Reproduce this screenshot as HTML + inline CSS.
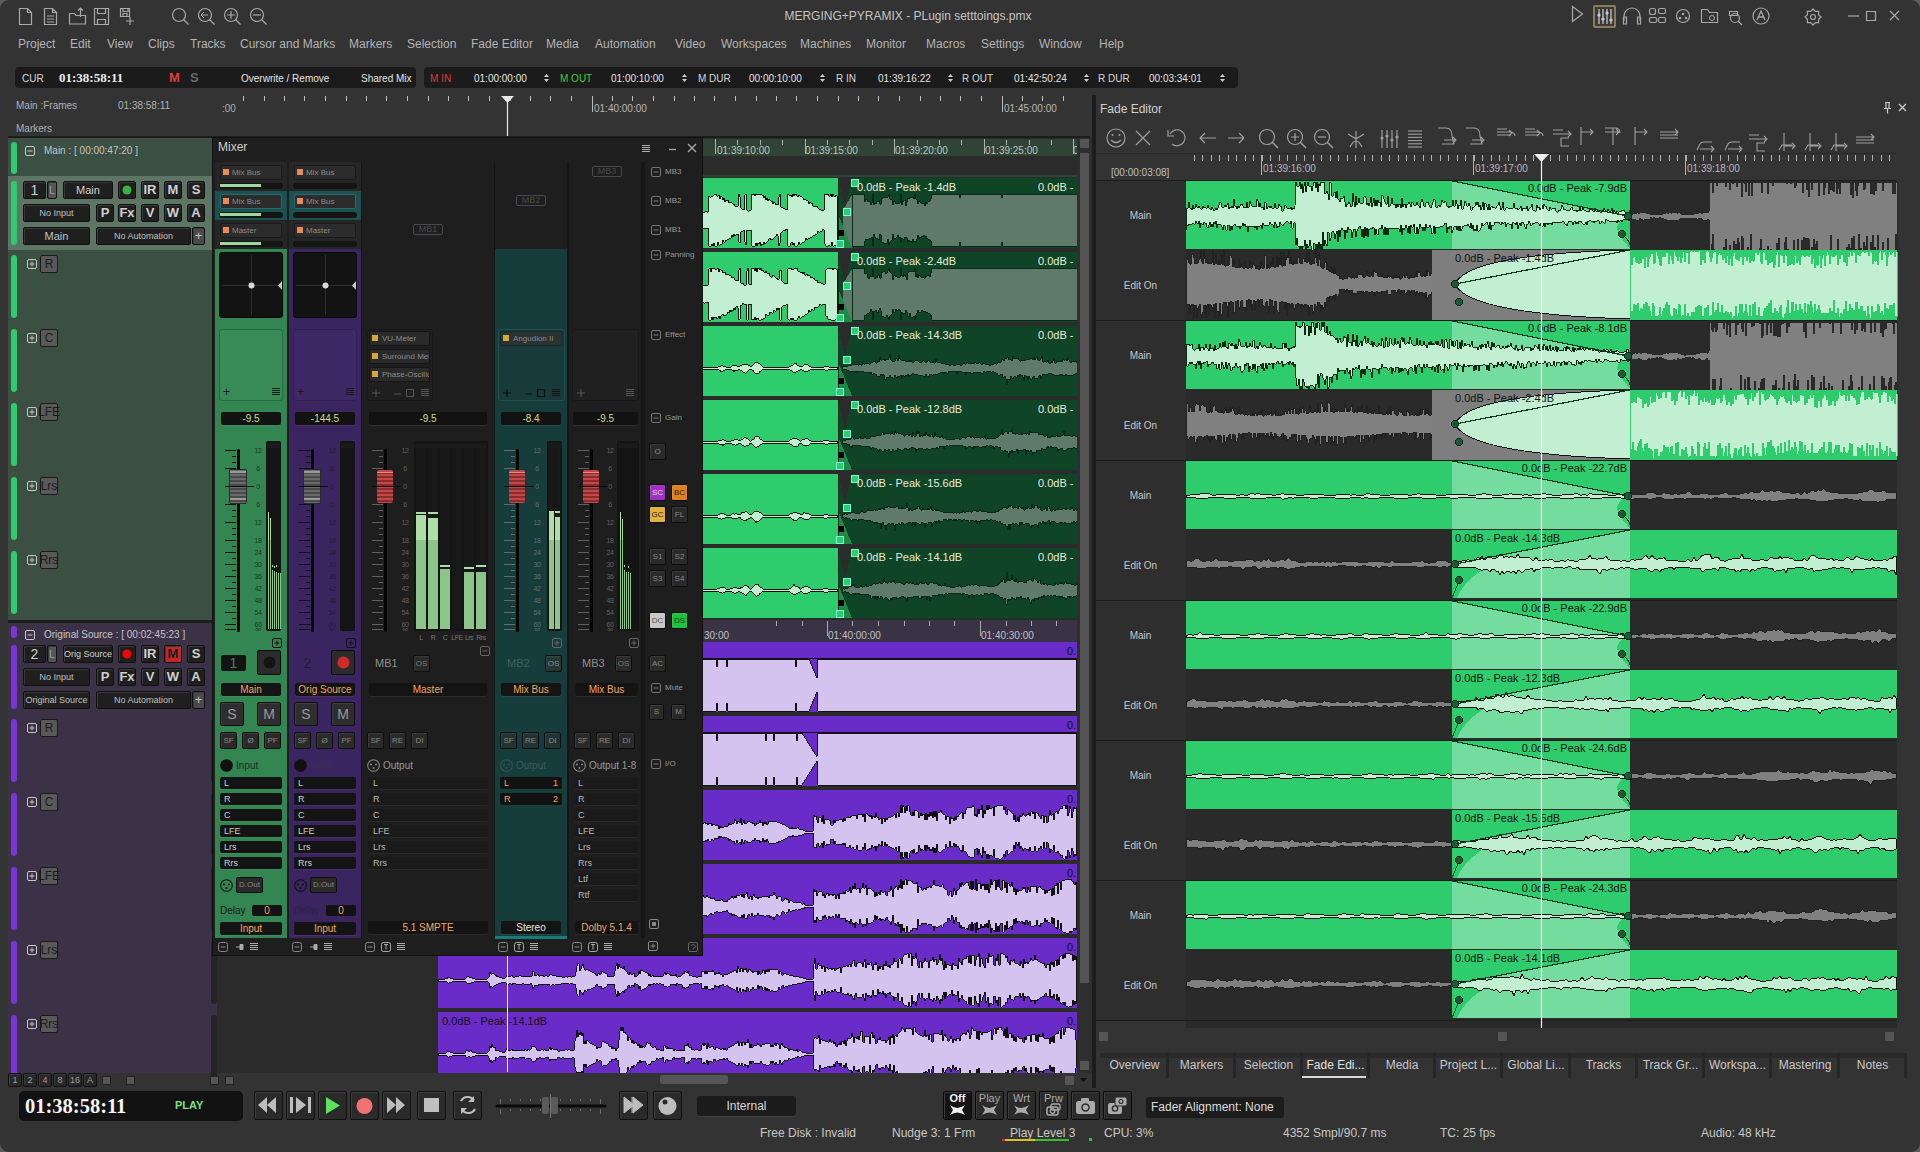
<!DOCTYPE html><html><head><meta charset="utf-8"><style>
html,body{margin:0;padding:0;}
body{width:1920px;height:1152px;overflow:hidden;background:#333333;position:relative;font-family:"Liberation Sans",sans-serif;}
div{position:absolute;}
</style></head><body>
<div style="left:16px;top:98.5px;height:13px;line-height:13px;font-size:10px;color:#b0b0b0;font-weight:normal;font-family:'Liberation Sans', sans-serif;white-space:nowrap;">Main :Frames</div><div style="left:118px;top:98.5px;height:13px;line-height:13px;font-size:10px;color:#b0b0b0;font-weight:normal;font-family:'Liberation Sans', sans-serif;white-space:nowrap;">01:38:58:11</div><div style="left:16px;top:121.5px;height:13px;line-height:13px;font-size:10px;color:#b0b0b0;font-weight:normal;font-family:'Liberation Sans', sans-serif;white-space:nowrap;">Markers</div><div style="left:222px;top:101.5px;height:13px;line-height:13px;font-size:10px;color:#b0b0b0;font-weight:normal;font-family:'Liberation Sans', sans-serif;white-space:nowrap;">:00</div><svg style="position:absolute;left:0px;top:0px;" width="1090" height="140" viewBox="0 0 1090 140"><path d="M243.5 96v5" stroke="#bdbdbd" stroke-width="1"/><path d="M264.5 96v5" stroke="#bdbdbd" stroke-width="1"/><path d="M284.5 96v5" stroke="#bdbdbd" stroke-width="1"/><path d="M304.5 96v5" stroke="#bdbdbd" stroke-width="1"/><path d="M325.5 96v5" stroke="#bdbdbd" stroke-width="1"/><path d="M346.5 96v5" stroke="#bdbdbd" stroke-width="1"/><path d="M366.5 96v5" stroke="#bdbdbd" stroke-width="1"/><path d="M386.5 96v5" stroke="#bdbdbd" stroke-width="1"/><path d="M407.5 96v5" stroke="#bdbdbd" stroke-width="1"/><path d="M428.5 96v5" stroke="#bdbdbd" stroke-width="1"/><path d="M448.5 96v5" stroke="#bdbdbd" stroke-width="1"/><path d="M468.5 96v5" stroke="#bdbdbd" stroke-width="1"/><path d="M489.5 96v5" stroke="#bdbdbd" stroke-width="1"/><path d="M510.5 96v5" stroke="#bdbdbd" stroke-width="1"/><path d="M530.5 96v5" stroke="#bdbdbd" stroke-width="1"/><path d="M550.5 96v5" stroke="#bdbdbd" stroke-width="1"/><path d="M571.5 96v5" stroke="#bdbdbd" stroke-width="1"/><path d="M592.5 96v5" stroke="#bdbdbd" stroke-width="1"/><path d="M612.5 96v5" stroke="#bdbdbd" stroke-width="1"/><path d="M632.5 96v5" stroke="#bdbdbd" stroke-width="1"/><path d="M653.5 96v5" stroke="#bdbdbd" stroke-width="1"/><path d="M674.5 96v5" stroke="#bdbdbd" stroke-width="1"/><path d="M694.5 96v5" stroke="#bdbdbd" stroke-width="1"/><path d="M714.5 96v5" stroke="#bdbdbd" stroke-width="1"/><path d="M735.5 96v5" stroke="#bdbdbd" stroke-width="1"/><path d="M756.5 96v5" stroke="#bdbdbd" stroke-width="1"/><path d="M776.5 96v5" stroke="#bdbdbd" stroke-width="1"/><path d="M796.5 96v5" stroke="#bdbdbd" stroke-width="1"/><path d="M817.5 96v5" stroke="#bdbdbd" stroke-width="1"/><path d="M838.5 96v5" stroke="#bdbdbd" stroke-width="1"/><path d="M858.5 96v5" stroke="#bdbdbd" stroke-width="1"/><path d="M878.5 96v5" stroke="#bdbdbd" stroke-width="1"/><path d="M899.5 96v5" stroke="#bdbdbd" stroke-width="1"/><path d="M920.5 96v5" stroke="#bdbdbd" stroke-width="1"/><path d="M940.5 96v5" stroke="#bdbdbd" stroke-width="1"/><path d="M960.5 96v5" stroke="#bdbdbd" stroke-width="1"/><path d="M981.5 96v5" stroke="#bdbdbd" stroke-width="1"/><path d="M1002.5 96v5" stroke="#bdbdbd" stroke-width="1"/><path d="M1022.5 96v5" stroke="#bdbdbd" stroke-width="1"/><path d="M1042.5 96v5" stroke="#bdbdbd" stroke-width="1"/><path d="M1063.5 96v5" stroke="#bdbdbd" stroke-width="1"/><path d="M592.5 96v16 M1002.5 96v16" stroke="#bdbdbd" stroke-width="1"/></svg><div style="left:594px;top:101.5px;height:13px;line-height:13px;font-size:10px;color:#b8b8b8;font-weight:normal;font-family:'Liberation Sans', sans-serif;white-space:nowrap;">01:40:00:00</div><div style="left:1004px;top:101.5px;height:13px;line-height:13px;font-size:10px;color:#b8b8b8;font-weight:normal;font-family:'Liberation Sans', sans-serif;white-space:nowrap;">01:45:00:00</div><svg style="position:absolute;left:500px;top:95px;" width="16" height="45" viewBox="0 0 16 45"><path d="M1 1h13l-6.5 7z" fill="#e8e8e8"/><path d="M7.5 6v39" stroke="#e8e8e8" stroke-width="1.2"/></svg><div style="left:8px;top:136px;width:1082px;height:3px;background:#1c1c1c;"></div><div style="left:8px;top:138px;width:204px;height:482px;background:#3b5042;"></div><div style="left:8px;top:176px;width:204px;height:74px;background:#5d7565;"></div><div style="left:11px;top:142px;width:6px;height:32px;background:#2ecc6c;border-radius:3px;"></div><svg style="position:absolute;left:25px;top:146px;" width="10" height="10" viewBox="0 0 10 10"><rect x="0.5" y="0.5" width="9" height="9" rx="1.5" fill="none" stroke="#c8c8c8" stroke-width="1"/><path d="M2.5 5h5" stroke="#c8c8c8"/></svg><div style="left:44px;top:143.5px;height:13px;line-height:13px;font-size:10px;color:#c4c4c4;font-weight:normal;font-family:'Liberation Sans', sans-serif;white-space:nowrap;">Main : [ 00:00:47:20 ]</div><div style="left:11px;top:181px;width:6px;height:64px;background:#2ecc6c;border-radius:3px;"></div><div style="left:23px;top:181px;width:23px;height:18px;background:#1f1f1f;border-radius:2px;border:1px solid #101010;box-sizing:border-box;box-shadow:inset 1px 1px 0 #3a3a3a;"></div><div style="left:23px;top:181.0px;width:23px;height:18px;line-height:18px;font-size:14px;color:#d0d0d0;font-weight:normal;font-family:'Liberation Sans', sans-serif;white-space:nowrap;text-align:center;overflow:hidden;">1</div><div style="left:47px;top:181px;width:10px;height:18px;background:#555555;border-radius:2px;border:1px solid #101010;box-sizing:border-box;box-shadow:inset 1px 1px 0 #3a3a3a;"></div><div style="left:47px;top:183.0px;width:10px;height:14px;line-height:14px;font-size:11px;color:#9a9a9a;font-weight:normal;font-family:'Liberation Sans', sans-serif;white-space:nowrap;text-align:center;overflow:hidden;">L</div><div style="left:63px;top:181px;width:50px;height:18px;background:#1f1f1f;border-radius:2px;border:1px solid #101010;box-sizing:border-box;box-shadow:inset 1px 1px 0 #3a3a3a;"></div><div style="left:63px;top:183.0px;width:50px;height:14px;line-height:14px;font-size:11px;color:#d0d0d0;font-weight:normal;font-family:'Liberation Sans', sans-serif;white-space:nowrap;text-align:center;overflow:hidden;">Main</div><div style="left:118px;top:181px;width:18px;height:18px;background:#1f1f1f;border-radius:2px;border:1px solid #101010;box-sizing:border-box;box-shadow:inset 1px 1px 0 #3a3a3a;"></div><svg style="position:absolute;left:122px;top:185px;" width="10" height="10" viewBox="0 0 10 10"><circle cx="5" cy="5" r="4.5" fill="#3cb043"/></svg><div style="left:141px;top:181px;width:18px;height:18px;background:#1f1f1f;border-radius:2px;border:1px solid #101010;box-sizing:border-box;box-shadow:inset 1px 1px 0 #3a3a3a;"></div><div style="left:141px;top:182.0px;width:18px;height:16px;line-height:16px;font-size:13px;color:#d0d0d0;font-weight:bold;font-family:'Liberation Sans', sans-serif;white-space:nowrap;text-align:center;overflow:hidden;">IR</div><div style="left:164px;top:181px;width:18px;height:18px;background:#1f1f1f;border-radius:2px;border:1px solid #101010;box-sizing:border-box;box-shadow:inset 1px 1px 0 #3a3a3a;"></div><div style="left:164px;top:182.0px;width:18px;height:16px;line-height:16px;font-size:13px;color:#d0d0d0;font-weight:bold;font-family:'Liberation Sans', sans-serif;white-space:nowrap;text-align:center;overflow:hidden;">M</div><div style="left:187px;top:181px;width:18px;height:18px;background:#1f1f1f;border-radius:2px;border:1px solid #101010;box-sizing:border-box;box-shadow:inset 1px 1px 0 #3a3a3a;"></div><div style="left:187px;top:182.0px;width:18px;height:16px;line-height:16px;font-size:13px;color:#d0d0d0;font-weight:bold;font-family:'Liberation Sans', sans-serif;white-space:nowrap;text-align:center;overflow:hidden;">S</div><div style="left:23px;top:204px;width:67px;height:18px;background:#1f1f1f;border-radius:2px;border:1px solid #101010;box-sizing:border-box;box-shadow:inset 1px 1px 0 #3a3a3a;"></div><div style="left:23px;top:207.5px;width:67px;height:11px;line-height:11px;font-size:9px;color:#c0c0c0;font-weight:normal;font-family:'Liberation Sans', sans-serif;white-space:nowrap;text-align:center;overflow:hidden;">No Input</div><div style="left:96px;top:204px;width:18px;height:18px;background:#1f1f1f;border-radius:2px;border:1px solid #101010;box-sizing:border-box;box-shadow:inset 1px 1px 0 #3a3a3a;"></div><div style="left:96px;top:205.0px;width:18px;height:16px;line-height:16px;font-size:13px;color:#d0d0d0;font-weight:bold;font-family:'Liberation Sans', sans-serif;white-space:nowrap;text-align:center;overflow:hidden;">P</div><div style="left:118px;top:204px;width:18px;height:18px;background:#1f1f1f;border-radius:2px;border:1px solid #101010;box-sizing:border-box;box-shadow:inset 1px 1px 0 #3a3a3a;"></div><div style="left:118px;top:205.0px;width:18px;height:16px;line-height:16px;font-size:13px;color:#d0d0d0;font-weight:bold;font-family:'Liberation Sans', sans-serif;white-space:nowrap;text-align:center;overflow:hidden;">Fx</div><div style="left:141px;top:204px;width:18px;height:18px;background:#1f1f1f;border-radius:2px;border:1px solid #101010;box-sizing:border-box;box-shadow:inset 1px 1px 0 #3a3a3a;"></div><div style="left:141px;top:205.0px;width:18px;height:16px;line-height:16px;font-size:13px;color:#d0d0d0;font-weight:bold;font-family:'Liberation Sans', sans-serif;white-space:nowrap;text-align:center;overflow:hidden;">V</div><div style="left:164px;top:204px;width:18px;height:18px;background:#1f1f1f;border-radius:2px;border:1px solid #101010;box-sizing:border-box;box-shadow:inset 1px 1px 0 #3a3a3a;"></div><div style="left:164px;top:205.0px;width:18px;height:16px;line-height:16px;font-size:13px;color:#d0d0d0;font-weight:bold;font-family:'Liberation Sans', sans-serif;white-space:nowrap;text-align:center;overflow:hidden;">W</div><div style="left:187px;top:204px;width:18px;height:18px;background:#1f1f1f;border-radius:2px;border:1px solid #101010;box-sizing:border-box;box-shadow:inset 1px 1px 0 #3a3a3a;"></div><div style="left:187px;top:205.0px;width:18px;height:16px;line-height:16px;font-size:13px;color:#d0d0d0;font-weight:bold;font-family:'Liberation Sans', sans-serif;white-space:nowrap;text-align:center;overflow:hidden;">A</div><div style="left:23px;top:227px;width:67px;height:18px;background:#1f1f1f;border-radius:2px;border:1px solid #101010;box-sizing:border-box;box-shadow:inset 1px 1px 0 #3a3a3a;"></div><div style="left:23px;top:229.0px;width:67px;height:14px;line-height:14px;font-size:11px;color:#c0c0c0;font-weight:normal;font-family:'Liberation Sans', sans-serif;white-space:nowrap;text-align:center;overflow:hidden;">Main</div><div style="left:96px;top:227px;width:95px;height:18px;background:#1f1f1f;border-radius:2px;border:1px solid #101010;box-sizing:border-box;box-shadow:inset 1px 1px 0 #3a3a3a;"></div><div style="left:96px;top:230.5px;width:95px;height:11px;line-height:11px;font-size:9px;color:#c0c0c0;font-weight:normal;font-family:'Liberation Sans', sans-serif;white-space:nowrap;text-align:center;overflow:hidden;">No Automation</div><div style="left:192px;top:227px;width:13px;height:18px;background:#4a4a4a;border-radius:2px;border:1px solid #101010;box-sizing:border-box;box-shadow:inset 1px 1px 0 #3a3a3a;"></div><div style="left:192px;top:228.0px;width:13px;height:16px;line-height:16px;font-size:13px;color:#c0c0c0;font-weight:normal;font-family:'Liberation Sans', sans-serif;white-space:nowrap;text-align:center;overflow:hidden;">+</div><div style="left:11px;top:255px;width:6px;height:63px;background:#2ecc6c;border-radius:3px;"></div><svg style="position:absolute;left:27px;top:259px;" width="10" height="10" viewBox="0 0 10 10"><rect x="0.5" y="0.5" width="9" height="9" rx="1.5" fill="none" stroke="#c8c8c8" stroke-width="1"/><path d="M2.5 5h5" stroke="#c8c8c8"/><path d="M5 2.5v5" stroke="#c8c8c8"/></svg><div style="left:40px;top:255px;width:18px;height:18px;background:#595959;border-radius:2px;border:1px solid #1a1a1a;box-sizing:border-box;"></div><div style="left:38px;top:256.5px;width:22px;height:15px;line-height:15px;font-size:12px;color:#1c1c1c;font-weight:normal;font-family:'Liberation Sans', sans-serif;white-space:nowrap;text-align:center;overflow:hidden;">R</div><div style="left:11px;top:329px;width:6px;height:63px;background:#2ecc6c;border-radius:3px;"></div><svg style="position:absolute;left:27px;top:333px;" width="10" height="10" viewBox="0 0 10 10"><rect x="0.5" y="0.5" width="9" height="9" rx="1.5" fill="none" stroke="#c8c8c8" stroke-width="1"/><path d="M2.5 5h5" stroke="#c8c8c8"/><path d="M5 2.5v5" stroke="#c8c8c8"/></svg><div style="left:40px;top:329px;width:18px;height:18px;background:#595959;border-radius:2px;border:1px solid #1a1a1a;box-sizing:border-box;"></div><div style="left:38px;top:330.5px;width:22px;height:15px;line-height:15px;font-size:12px;color:#1c1c1c;font-weight:normal;font-family:'Liberation Sans', sans-serif;white-space:nowrap;text-align:center;overflow:hidden;">C</div><div style="left:11px;top:403px;width:6px;height:63px;background:#2ecc6c;border-radius:3px;"></div><svg style="position:absolute;left:27px;top:407px;" width="10" height="10" viewBox="0 0 10 10"><rect x="0.5" y="0.5" width="9" height="9" rx="1.5" fill="none" stroke="#c8c8c8" stroke-width="1"/><path d="M2.5 5h5" stroke="#c8c8c8"/><path d="M5 2.5v5" stroke="#c8c8c8"/></svg><div style="left:40px;top:403px;width:18px;height:18px;background:#595959;border-radius:2px;border:1px solid #1a1a1a;box-sizing:border-box;"></div><div style="left:38px;top:404.5px;width:22px;height:15px;line-height:15px;font-size:12px;color:#1c1c1c;font-weight:normal;font-family:'Liberation Sans', sans-serif;white-space:nowrap;text-align:center;overflow:hidden;">LFE</div><div style="left:11px;top:477px;width:6px;height:63px;background:#2ecc6c;border-radius:3px;"></div><svg style="position:absolute;left:27px;top:481px;" width="10" height="10" viewBox="0 0 10 10"><rect x="0.5" y="0.5" width="9" height="9" rx="1.5" fill="none" stroke="#c8c8c8" stroke-width="1"/><path d="M2.5 5h5" stroke="#c8c8c8"/><path d="M5 2.5v5" stroke="#c8c8c8"/></svg><div style="left:40px;top:477px;width:18px;height:18px;background:#595959;border-radius:2px;border:1px solid #1a1a1a;box-sizing:border-box;"></div><div style="left:38px;top:478.5px;width:22px;height:15px;line-height:15px;font-size:12px;color:#1c1c1c;font-weight:normal;font-family:'Liberation Sans', sans-serif;white-space:nowrap;text-align:center;overflow:hidden;">Lrs</div><div style="left:11px;top:551px;width:6px;height:63px;background:#2ecc6c;border-radius:3px;"></div><svg style="position:absolute;left:27px;top:555px;" width="10" height="10" viewBox="0 0 10 10"><rect x="0.5" y="0.5" width="9" height="9" rx="1.5" fill="none" stroke="#c8c8c8" stroke-width="1"/><path d="M2.5 5h5" stroke="#c8c8c8"/><path d="M5 2.5v5" stroke="#c8c8c8"/></svg><div style="left:40px;top:551px;width:18px;height:18px;background:#595959;border-radius:2px;border:1px solid #1a1a1a;box-sizing:border-box;"></div><div style="left:38px;top:552.5px;width:22px;height:15px;line-height:15px;font-size:12px;color:#1c1c1c;font-weight:normal;font-family:'Liberation Sans', sans-serif;white-space:nowrap;text-align:center;overflow:hidden;">Rrs</div><div style="left:8px;top:620px;width:215px;height:3px;background:#1e1e1e;"></div><div style="left:8px;top:623px;width:215px;height:450px;background:#3c3248;"></div><div style="left:11px;top:626px;width:6px;height:12px;background:#7b35d6;border-radius:3px;"></div><svg style="position:absolute;left:25px;top:630px;" width="10" height="10" viewBox="0 0 10 10"><rect x="0.5" y="0.5" width="9" height="9" rx="1.5" fill="none" stroke="#c8c8c8" stroke-width="1"/><path d="M2.5 5h5" stroke="#c8c8c8"/></svg><div style="left:44px;top:627.5px;height:13px;line-height:13px;font-size:10px;color:#c4c4c4;font-weight:normal;font-family:'Liberation Sans', sans-serif;white-space:nowrap;">Original Source : [ 00:02:45:23 ]</div><div style="left:11px;top:645px;width:6px;height:64px;background:#7b35d6;border-radius:3px;"></div><div style="left:23px;top:645px;width:23px;height:18px;background:#1f1f1f;border-radius:2px;border:1px solid #101010;box-sizing:border-box;box-shadow:inset 1px 1px 0 #3a3a3a;"></div><div style="left:23px;top:645.0px;width:23px;height:18px;line-height:18px;font-size:14px;color:#d0d0d0;font-weight:normal;font-family:'Liberation Sans', sans-serif;white-space:nowrap;text-align:center;overflow:hidden;">2</div><div style="left:47px;top:645px;width:10px;height:18px;background:#555555;border-radius:2px;border:1px solid #101010;box-sizing:border-box;box-shadow:inset 1px 1px 0 #3a3a3a;"></div><div style="left:47px;top:647.0px;width:10px;height:14px;line-height:14px;font-size:11px;color:#9a9a9a;font-weight:normal;font-family:'Liberation Sans', sans-serif;white-space:nowrap;text-align:center;overflow:hidden;">L</div><div style="left:63px;top:645px;width:50px;height:18px;background:#1f1f1f;border-radius:2px;border:1px solid #101010;box-sizing:border-box;box-shadow:inset 1px 1px 0 #3a3a3a;"></div><div style="left:63px;top:648.5px;width:50px;height:11px;line-height:11px;font-size:9px;color:#d0d0d0;font-weight:normal;font-family:'Liberation Sans', sans-serif;white-space:nowrap;text-align:center;overflow:hidden;">Orig Source</div><div style="left:118px;top:645px;width:18px;height:18px;background:#1f1f1f;border-radius:2px;border:1px solid #101010;box-sizing:border-box;box-shadow:inset 1px 1px 0 #3a3a3a;"></div><svg style="position:absolute;left:122px;top:649px;" width="10" height="10" viewBox="0 0 10 10"><circle cx="5" cy="5" r="4.5" fill="#ff0000"/></svg><div style="left:141px;top:645px;width:18px;height:18px;background:#1f1f1f;border-radius:2px;border:1px solid #101010;box-sizing:border-box;box-shadow:inset 1px 1px 0 #3a3a3a;"></div><div style="left:141px;top:646.0px;width:18px;height:16px;line-height:16px;font-size:13px;color:#d0d0d0;font-weight:bold;font-family:'Liberation Sans', sans-serif;white-space:nowrap;text-align:center;overflow:hidden;">IR</div><div style="left:164px;top:645px;width:18px;height:18px;background:#c42828;border-radius:2px;border:1px solid #101010;box-sizing:border-box;box-shadow:inset 1px 1px 0 #3a3a3a;"></div><div style="left:164px;top:646.0px;width:18px;height:16px;line-height:16px;font-size:13px;color:#1a1a1a;font-weight:bold;font-family:'Liberation Sans', sans-serif;white-space:nowrap;text-align:center;overflow:hidden;">M</div><div style="left:187px;top:645px;width:18px;height:18px;background:#1f1f1f;border-radius:2px;border:1px solid #101010;box-sizing:border-box;box-shadow:inset 1px 1px 0 #3a3a3a;"></div><div style="left:187px;top:646.0px;width:18px;height:16px;line-height:16px;font-size:13px;color:#d0d0d0;font-weight:bold;font-family:'Liberation Sans', sans-serif;white-space:nowrap;text-align:center;overflow:hidden;">S</div><div style="left:23px;top:668px;width:67px;height:18px;background:#1f1f1f;border-radius:2px;border:1px solid #101010;box-sizing:border-box;box-shadow:inset 1px 1px 0 #3a3a3a;"></div><div style="left:23px;top:671.5px;width:67px;height:11px;line-height:11px;font-size:9px;color:#c0c0c0;font-weight:normal;font-family:'Liberation Sans', sans-serif;white-space:nowrap;text-align:center;overflow:hidden;">No Input</div><div style="left:96px;top:668px;width:18px;height:18px;background:#1f1f1f;border-radius:2px;border:1px solid #101010;box-sizing:border-box;box-shadow:inset 1px 1px 0 #3a3a3a;"></div><div style="left:96px;top:669.0px;width:18px;height:16px;line-height:16px;font-size:13px;color:#d0d0d0;font-weight:bold;font-family:'Liberation Sans', sans-serif;white-space:nowrap;text-align:center;overflow:hidden;">P</div><div style="left:118px;top:668px;width:18px;height:18px;background:#1f1f1f;border-radius:2px;border:1px solid #101010;box-sizing:border-box;box-shadow:inset 1px 1px 0 #3a3a3a;"></div><div style="left:118px;top:669.0px;width:18px;height:16px;line-height:16px;font-size:13px;color:#d0d0d0;font-weight:bold;font-family:'Liberation Sans', sans-serif;white-space:nowrap;text-align:center;overflow:hidden;">Fx</div><div style="left:141px;top:668px;width:18px;height:18px;background:#1f1f1f;border-radius:2px;border:1px solid #101010;box-sizing:border-box;box-shadow:inset 1px 1px 0 #3a3a3a;"></div><div style="left:141px;top:669.0px;width:18px;height:16px;line-height:16px;font-size:13px;color:#d0d0d0;font-weight:bold;font-family:'Liberation Sans', sans-serif;white-space:nowrap;text-align:center;overflow:hidden;">V</div><div style="left:164px;top:668px;width:18px;height:18px;background:#1f1f1f;border-radius:2px;border:1px solid #101010;box-sizing:border-box;box-shadow:inset 1px 1px 0 #3a3a3a;"></div><div style="left:164px;top:669.0px;width:18px;height:16px;line-height:16px;font-size:13px;color:#d0d0d0;font-weight:bold;font-family:'Liberation Sans', sans-serif;white-space:nowrap;text-align:center;overflow:hidden;">W</div><div style="left:187px;top:668px;width:18px;height:18px;background:#1f1f1f;border-radius:2px;border:1px solid #101010;box-sizing:border-box;box-shadow:inset 1px 1px 0 #3a3a3a;"></div><div style="left:187px;top:669.0px;width:18px;height:16px;line-height:16px;font-size:13px;color:#d0d0d0;font-weight:bold;font-family:'Liberation Sans', sans-serif;white-space:nowrap;text-align:center;overflow:hidden;">A</div><div style="left:23px;top:691px;width:67px;height:18px;background:#1f1f1f;border-radius:2px;border:1px solid #101010;box-sizing:border-box;box-shadow:inset 1px 1px 0 #3a3a3a;"></div><div style="left:23px;top:694.5px;width:67px;height:11px;line-height:11px;font-size:9px;color:#c0c0c0;font-weight:normal;font-family:'Liberation Sans', sans-serif;white-space:nowrap;text-align:center;overflow:hidden;">Original Source</div><div style="left:96px;top:691px;width:95px;height:18px;background:#1f1f1f;border-radius:2px;border:1px solid #101010;box-sizing:border-box;box-shadow:inset 1px 1px 0 #3a3a3a;"></div><div style="left:96px;top:694.5px;width:95px;height:11px;line-height:11px;font-size:9px;color:#c0c0c0;font-weight:normal;font-family:'Liberation Sans', sans-serif;white-space:nowrap;text-align:center;overflow:hidden;">No Automation</div><div style="left:192px;top:691px;width:13px;height:18px;background:#4a4a4a;border-radius:2px;border:1px solid #101010;box-sizing:border-box;box-shadow:inset 1px 1px 0 #3a3a3a;"></div><div style="left:192px;top:692.0px;width:13px;height:16px;line-height:16px;font-size:13px;color:#c0c0c0;font-weight:normal;font-family:'Liberation Sans', sans-serif;white-space:nowrap;text-align:center;overflow:hidden;">+</div><div style="left:11px;top:719px;width:6px;height:63px;background:#7b35d6;border-radius:3px;"></div><svg style="position:absolute;left:27px;top:723px;" width="10" height="10" viewBox="0 0 10 10"><rect x="0.5" y="0.5" width="9" height="9" rx="1.5" fill="none" stroke="#c8c8c8" stroke-width="1"/><path d="M2.5 5h5" stroke="#c8c8c8"/><path d="M5 2.5v5" stroke="#c8c8c8"/></svg><div style="left:40px;top:719px;width:18px;height:18px;background:#595959;border-radius:2px;border:1px solid #1a1a1a;box-sizing:border-box;"></div><div style="left:38px;top:720.5px;width:22px;height:15px;line-height:15px;font-size:12px;color:#1c1c1c;font-weight:normal;font-family:'Liberation Sans', sans-serif;white-space:nowrap;text-align:center;overflow:hidden;">R</div><div style="left:11px;top:793px;width:6px;height:63px;background:#7b35d6;border-radius:3px;"></div><svg style="position:absolute;left:27px;top:797px;" width="10" height="10" viewBox="0 0 10 10"><rect x="0.5" y="0.5" width="9" height="9" rx="1.5" fill="none" stroke="#c8c8c8" stroke-width="1"/><path d="M2.5 5h5" stroke="#c8c8c8"/><path d="M5 2.5v5" stroke="#c8c8c8"/></svg><div style="left:40px;top:793px;width:18px;height:18px;background:#595959;border-radius:2px;border:1px solid #1a1a1a;box-sizing:border-box;"></div><div style="left:38px;top:794.5px;width:22px;height:15px;line-height:15px;font-size:12px;color:#1c1c1c;font-weight:normal;font-family:'Liberation Sans', sans-serif;white-space:nowrap;text-align:center;overflow:hidden;">C</div><div style="left:11px;top:867px;width:6px;height:63px;background:#7b35d6;border-radius:3px;"></div><svg style="position:absolute;left:27px;top:871px;" width="10" height="10" viewBox="0 0 10 10"><rect x="0.5" y="0.5" width="9" height="9" rx="1.5" fill="none" stroke="#c8c8c8" stroke-width="1"/><path d="M2.5 5h5" stroke="#c8c8c8"/><path d="M5 2.5v5" stroke="#c8c8c8"/></svg><div style="left:40px;top:867px;width:18px;height:18px;background:#595959;border-radius:2px;border:1px solid #1a1a1a;box-sizing:border-box;"></div><div style="left:38px;top:868.5px;width:22px;height:15px;line-height:15px;font-size:12px;color:#1c1c1c;font-weight:normal;font-family:'Liberation Sans', sans-serif;white-space:nowrap;text-align:center;overflow:hidden;">LFE</div><div style="left:11px;top:941px;width:6px;height:63px;background:#7b35d6;border-radius:3px;"></div><svg style="position:absolute;left:27px;top:945px;" width="10" height="10" viewBox="0 0 10 10"><rect x="0.5" y="0.5" width="9" height="9" rx="1.5" fill="none" stroke="#c8c8c8" stroke-width="1"/><path d="M2.5 5h5" stroke="#c8c8c8"/><path d="M5 2.5v5" stroke="#c8c8c8"/></svg><div style="left:40px;top:941px;width:18px;height:18px;background:#595959;border-radius:2px;border:1px solid #1a1a1a;box-sizing:border-box;"></div><div style="left:38px;top:942.5px;width:22px;height:15px;line-height:15px;font-size:12px;color:#1c1c1c;font-weight:normal;font-family:'Liberation Sans', sans-serif;white-space:nowrap;text-align:center;overflow:hidden;">Lrs</div><div style="left:11px;top:1015px;width:6px;height:63px;background:#7b35d6;border-radius:3px;"></div><svg style="position:absolute;left:27px;top:1019px;" width="10" height="10" viewBox="0 0 10 10"><rect x="0.5" y="0.5" width="9" height="9" rx="1.5" fill="none" stroke="#c8c8c8" stroke-width="1"/><path d="M2.5 5h5" stroke="#c8c8c8"/><path d="M5 2.5v5" stroke="#c8c8c8"/></svg><div style="left:40px;top:1015px;width:18px;height:18px;background:#595959;border-radius:2px;border:1px solid #1a1a1a;box-sizing:border-box;"></div><div style="left:38px;top:1016.5px;width:22px;height:15px;line-height:15px;font-size:12px;color:#1c1c1c;font-weight:normal;font-family:'Liberation Sans', sans-serif;white-space:nowrap;text-align:center;overflow:hidden;">Rrs</div><div style="left:211px;top:719px;width:6px;height:63px;background:#242424;border-radius:3px;"></div><div style="left:211px;top:793px;width:6px;height:63px;background:#242424;border-radius:3px;"></div><div style="left:211px;top:867px;width:6px;height:63px;background:#242424;border-radius:3px;"></div><div style="left:211px;top:941px;width:6px;height:63px;background:#242424;border-radius:3px;"></div><div style="left:211px;top:1015px;width:6px;height:63px;background:#242424;border-radius:3px;"></div><div style="left:8px;top:1073px;width:14px;height:14px;background:#282828;border-radius:2px;border:1px solid #101010;box-sizing:border-box;box-shadow:inset 1px 1px 0 #3a3a3a;"></div><div style="left:8px;top:1074.5px;width:14px;height:11px;line-height:11px;font-size:9px;color:#a0a0a0;font-weight:normal;font-family:'Liberation Sans', sans-serif;white-space:nowrap;text-align:center;overflow:hidden;">1</div><div style="left:23px;top:1073px;width:14px;height:14px;background:#282828;border-radius:2px;border:1px solid #101010;box-sizing:border-box;box-shadow:inset 1px 1px 0 #3a3a3a;"></div><div style="left:23px;top:1074.5px;width:14px;height:11px;line-height:11px;font-size:9px;color:#a0a0a0;font-weight:normal;font-family:'Liberation Sans', sans-serif;white-space:nowrap;text-align:center;overflow:hidden;">2</div><div style="left:38px;top:1073px;width:14px;height:14px;background:#282828;border-radius:2px;border:1px solid #101010;box-sizing:border-box;box-shadow:inset 1px 1px 0 #3a3a3a;"></div><div style="left:38px;top:1074.5px;width:14px;height:11px;line-height:11px;font-size:9px;color:#a0a0a0;font-weight:normal;font-family:'Liberation Sans', sans-serif;white-space:nowrap;text-align:center;overflow:hidden;">4</div><div style="left:53px;top:1073px;width:14px;height:14px;background:#282828;border-radius:2px;border:1px solid #101010;box-sizing:border-box;box-shadow:inset 1px 1px 0 #3a3a3a;"></div><div style="left:53px;top:1074.5px;width:14px;height:11px;line-height:11px;font-size:9px;color:#a0a0a0;font-weight:normal;font-family:'Liberation Sans', sans-serif;white-space:nowrap;text-align:center;overflow:hidden;">8</div><div style="left:68px;top:1073px;width:14px;height:14px;background:#282828;border-radius:2px;border:1px solid #101010;box-sizing:border-box;box-shadow:inset 1px 1px 0 #3a3a3a;"></div><div style="left:68px;top:1074.5px;width:14px;height:11px;line-height:11px;font-size:9px;color:#a0a0a0;font-weight:normal;font-family:'Liberation Sans', sans-serif;white-space:nowrap;text-align:center;overflow:hidden;">16</div><div style="left:83px;top:1073px;width:14px;height:14px;background:#282828;border-radius:2px;border:1px solid #101010;box-sizing:border-box;box-shadow:inset 1px 1px 0 #3a3a3a;"></div><div style="left:83px;top:1074.5px;width:14px;height:11px;line-height:11px;font-size:9px;color:#a0a0a0;font-weight:normal;font-family:'Liberation Sans', sans-serif;white-space:nowrap;text-align:center;overflow:hidden;">A</div><div style="left:102px;top:1076px;width:9px;height:9px;background:#555;border-radius:1px;border:1px solid #222;box-sizing:border-box;"></div><div style="left:126px;top:1076px;width:9px;height:9px;background:#555;border-radius:1px;border:1px solid #222;box-sizing:border-box;"></div><div style="left:210px;top:1076px;width:9px;height:9px;background:#555;border-radius:1px;border:1px solid #222;box-sizing:border-box;"></div><div style="left:225px;top:1076px;width:9px;height:9px;background:#555;border-radius:1px;border:1px solid #222;box-sizing:border-box;"></div><div style="left:217px;top:138px;width:860px;height:935px;background:#2b2b2b;"></div><div style="left:702px;top:139px;width:375px;height:17px;background:#2f4437;"></div><svg style="position:absolute;left:0px;top:0px;" width="1090" height="160" viewBox="0 0 1090 160"><path d="M715.5 139v15" stroke="#aab5ad" stroke-width="1"/><path d="M737.5 140v5" stroke="#aab5ad" stroke-width="1"/><path d="M760.5 140v5" stroke="#aab5ad" stroke-width="1"/><path d="M782.5 140v5" stroke="#aab5ad" stroke-width="1"/><path d="M805.5 139v15" stroke="#aab5ad" stroke-width="1"/><path d="M827.5 140v5" stroke="#aab5ad" stroke-width="1"/><path d="M849.5 140v5" stroke="#aab5ad" stroke-width="1"/><path d="M872.5 140v5" stroke="#aab5ad" stroke-width="1"/><path d="M894.5 139v15" stroke="#aab5ad" stroke-width="1"/><path d="M917.5 140v5" stroke="#aab5ad" stroke-width="1"/><path d="M939.5 140v5" stroke="#aab5ad" stroke-width="1"/><path d="M961.5 140v5" stroke="#aab5ad" stroke-width="1"/><path d="M984.5 139v15" stroke="#aab5ad" stroke-width="1"/><path d="M1006.5 140v5" stroke="#aab5ad" stroke-width="1"/><path d="M1029.5 140v5" stroke="#aab5ad" stroke-width="1"/><path d="M1051.5 140v5" stroke="#aab5ad" stroke-width="1"/><path d="M1073.5 139v15" stroke="#aab5ad" stroke-width="1"/></svg><div style="left:717px;top:145px;height:12px;line-height:12px;font-size:10px;color:#b8c8bc;white-space:nowrap;overflow:hidden;width:360px;">01:39:10:00</div><div style="left:805px;top:145px;height:12px;line-height:12px;font-size:10px;color:#b8c8bc;white-space:nowrap;overflow:hidden;width:272px;">01:39:15:00</div><div style="left:895px;top:145px;height:12px;line-height:12px;font-size:10px;color:#b8c8bc;white-space:nowrap;overflow:hidden;width:182px;">01:39:20:00</div><div style="left:985px;top:145px;height:12px;line-height:12px;font-size:10px;color:#b8c8bc;white-space:nowrap;overflow:hidden;width:92px;">01:39:25:00</div><div style="left:1073px;top:145px;height:12px;line-height:12px;font-size:10px;color:#b8c8bc;white-space:nowrap;overflow:hidden;width:4px;">0</div><div style="left:702px;top:175px;width:375px;height:2px;background:#2f4437;"></div><div style="left:702px;top:178px;width:136px;height:70px;background:#2ecc6c;"></div><div style="left:838px;top:178px;width:239px;height:70px;background:#0f4426;"></div><div style="left:702px;top:252px;width:136px;height:70px;background:#2ecc6c;"></div><div style="left:838px;top:252px;width:239px;height:70px;background:#0f4426;"></div><div style="left:702px;top:326px;width:136px;height:70px;background:#2ecc6c;"></div><div style="left:838px;top:326px;width:239px;height:70px;background:#0f4426;"></div><div style="left:702px;top:400px;width:136px;height:70px;background:#2ecc6c;"></div><div style="left:838px;top:400px;width:239px;height:70px;background:#0f4426;"></div><div style="left:702px;top:474px;width:136px;height:70px;background:#2ecc6c;"></div><div style="left:838px;top:474px;width:239px;height:70px;background:#0f4426;"></div><div style="left:702px;top:548px;width:136px;height:70px;background:#2ecc6c;"></div><div style="left:838px;top:548px;width:239px;height:70px;background:#0f4426;"></div><svg style="position:absolute;left:0px;top:0px;shape-rendering:crispEdges;" width="1090" height="640" viewBox="0 0 1090 640"><path d="M702,212l1,0 1,0 1,0 1,-1 1,1 1,0 1,-16 1,1 1,0 1,-1 1,0 1,-1 1,-1 1,0 1,2 1,0 1,-1 1,4 1,-3 1,1 1,3 1,-2 1,4 1,-2 1,0 1,0 1,3 1,-1 1,0 1,1 1,1 1,0 1,2 1,0 1,0 1,0 1,-12 1,3 1,11 1,1 1,0 1,1 1,-15 1,-1 1,16 1,1 1,0 1,-1 1,0 1,-16 1,0 1,0 1,2 1,-2 1,0 1,1 1,-1 1,0 1,0 1,1 1,0 1,3 1,-2 1,4 1,-2 1,3 1,-2 1,1 1,1 1,0 1,3 1,-2 1,1 1,2 1,-1 1,1 1,-8 1,-3 1,13 1,0 1,1 1,0 1,1 1,0 1,1 1,-16 1,1 1,1 1,-1 1,2 1,-3 1,2 1,-2 1,0 1,2 1,1 1,-2 1,1 1,0 1,1 1,1 1,2 1,-1 1,1 1,0 1,1 1,3 1,-2 1,1 1,0 1,3 1,0 1,0 1,0 1,0 1,2 1,1 1,0 1,1 1,0 1,0 1,0 1,-16 1,0 1,1 1,-1 1,2 1,0 1,-2 1,3 1,-3 1,2 1,1 1,-2 1,1 0,46 -1,3 -1,0 -1,1 -1,0 -1,-4 -1,4 -1,0 -1,-1 -1,1 -1,0 -1,0 -1,-2 -1,-14 -1,-1 -1,2 -1,0 -1,1 -1,0 -1,-1 -1,3 -1,0 -1,1 -1,0 -1,1 -1,1 -1,0 -1,1 -1,0 -1,1 -1,1 -1,-2 -1,3 -1,1 -1,0 -1,1 -1,1 -1,0 -1,-2 -1,3 -1,1 -1,0 -1,0 -1,-3 -1,2 -1,-3 -1,1 -1,3 -1,0 -1,0 -1,-17 -1,0 -1,2 -1,-1 -1,1 -1,1 -1,1 -1,10 -1,3 -1,-10 -1,-2 -1,2 -1,1 -1,1 -1,1 -1,0 -1,1 -1,-2 -1,1 -1,2 -1,1 -1,1 -1,1 -1,-2 -1,3 -1,-1 -1,2 -1,-4 -1,2 -1,-1 -1,3 -1,-3 -1,3 -1,0 -1,0 -1,0 -1,-16 -1,0 -1,0 -1,0 -1,0 -1,15 -1,-3 -1,-12 -1,1 -1,0 -1,1 -1,11 -1,-1 -1,-8 -1,0 -1,1 -1,1 -1,-2 -1,3 -1,-2 -1,3 -1,0 -1,1 -1,0 -1,1 -1,0 -1,2 -1,0 -1,-2 -1,4 -1,0 -1,1 -1,0 -1,-3 -1,4 -1,0 -1,0 -1,-3 -1,3 -1,-2 -1,2 -1,0 -1,0 -1,-18 -1,0 -1,1 -1,-1 -1,0 -1,1 -1,0z" fill="#c2efd2" stroke="#111" stroke-width="1"/><path d="M852,194l1,0 1,0 1,0 1,0 1,0 1,0 1,0 1,0 1,0 1,0 1,0 1,0 1,8 1,-3 1,1 1,2 1,-1 1,1 1,3 1,-2 1,-9 1,11 1,-2 1,1 1,-2 1,-1 1,0 1,3 1,0 1,-6 1,0 1,-1 1,0 1,0 1,0 1,0 1,-3 1,5 1,0 1,1 1,5 1,-4 1,1 1,2 1,-1 1,0 1,0 1,0 1,-9 1,11 1,-4 1,0 1,-1 1,6 1,-4 1,-4 1,1 1,-2 1,0 1,0 1,0 1,2 1,-5 1,5 1,1 1,4 1,-3 1,1 1,0 1,2 1,-1 1,0 1,3 1,-4 1,2 1,-2 1,-1 1,0 1,-2 1,-5 1,0 1,0 1,0 1,0 1,0 1,0 1,0 1,0 1,0 1,0 1,0 1,0 1,0 1,0 1,0 1,0 1,0 1,0 1,0 1,0 1,0 1,0 1,0 1,0 1,0 1,0 1,0 1,4 1,-4 1,0 1,0 1,0 1,0 1,0 1,0 1,0 1,0 1,0 1,0 1,0 1,0 1,0 1,0 1,0 1,0 1,0 1,0 1,0 1,0 1,0 1,0 1,0 1,0 1,0 1,0 1,0 1,0 1,0 1,0 1,0 1,0 1,0 1,0 1,0 1,0 1,0 1,0 1,0 1,0 1,4 1,-4 1,0 1,0 1,0 1,0 1,0 1,0 1,0 1,0 1,0 1,0 1,0 1,0 1,0 1,0 1,0 1,0 1,0 1,0 1,0 1,0 1,0 1,0 1,0 1,0 1,0 1,0 1,0 1,0 1,0 1,0 1,0 1,0 1,0 1,0 1,0 1,0 1,0 1,0 1,0 1,0 1,0 1,0 1,0 1,0 1,0 1,0 1,0 1,0 1,0 1,0 1,0 1,0 1,0 1,0 1,0 1,0 1,0 1,0 1,0 1,0 1,0 1,0 1,0 1,0 1,0 1,0 1,0 1,0 1,0 1,0 1,0 1,0 1,0 1,0 0,52 -1,0 -1,0 -1,0 -1,0 -1,0 -1,0 -1,0 -1,0 -1,0 -1,0 -1,0 -1,0 -1,0 -1,0 -1,0 -1,0 -1,0 -1,0 -1,0 -1,0 -1,0 -1,0 -1,0 -1,0 -1,0 -1,0 -1,0 -1,0 -1,0 -1,0 -1,0 -1,0 -1,0 -1,0 -1,0 -1,0 -1,0 -1,0 -1,0 -1,0 -1,0 -1,0 -1,0 -1,0 -1,0 -1,0 -1,0 -1,0 -1,0 -1,0 -1,0 -1,0 -1,0 -1,0 -1,0 -1,0 -1,0 -1,0 -1,0 -1,0 -1,0 -1,0 -1,0 -1,0 -1,0 -1,0 -1,0 -1,0 -1,0 -1,0 -1,0 -1,0 -1,0 -1,0 -1,-4 -1,4 -1,0 -1,0 -1,0 -1,0 -1,0 -1,0 -1,0 -1,0 -1,0 -1,0 -1,0 -1,0 -1,0 -1,0 -1,0 -1,0 -1,0 -1,0 -1,0 -1,0 -1,0 -1,0 -1,0 -1,0 -1,0 -1,0 -1,0 -1,0 -1,0 -1,0 -1,0 -1,0 -1,0 -1,0 -1,0 -1,0 -1,0 -1,0 -1,0 -1,0 -1,-4 -1,4 -1,0 -1,0 -1,0 -1,0 -1,0 -1,0 -1,0 -1,0 -1,0 -1,0 -1,0 -1,0 -1,0 -1,0 -1,0 -1,0 -1,0 -1,0 -1,0 -1,0 -1,0 -1,0 -1,0 -1,0 -1,0 -1,0 -1,0 -1,-5 -1,-1 -1,-1 -1,0 -1,-1 -1,-2 -1,0 -1,-1 -1,2 -1,-1 -1,2 -1,-1 -1,2 -1,-4 -1,4 -1,2 -1,0 -1,1 -1,-3 -1,4 -1,-2 -1,1 -1,-2 -1,2 -1,-4 -1,-1 -1,0 -1,2 -1,0 -1,-1 -1,5 -1,-6 -1,0 -1,-2 -1,2 -1,1 -1,0 -1,1 -1,-5 -1,6 -1,1 -1,1 -1,3 -1,-6 -1,4 -1,0 -1,0 -1,0 -1,-1 -1,0 -1,-7 -1,-1 -1,6 -1,-1 -1,-1 -1,0 -1,-1 -1,-3 -1,12 -1,-9 -1,1 -1,0 -1,1 -1,0 -1,0 -1,0 -1,2 -1,5 -1,0 -1,0 -1,0 -1,0 -1,0 -1,0 -1,0 -1,0 -1,0 -1,0 -1,0 -1,0z" fill="#5f7a6b" stroke="#0a2a16" stroke-width="1"/><path d="M843 210L852 195V247H843z" fill="#5f7a6b"/><path d="M838 178h14l-7 30z" fill="#2b2b2b"/><path d="M838 248h14l-14 -34z" fill="#1f8a48"/><path d="M838 178v70" stroke="#0c2a18" stroke-width="1"/><rect x="851.5" y="179.5" width="7" height="7" rx="1.5" fill="#2ecc6c" stroke="#7ff5d8" stroke-width="1.2"/><rect x="843.5" y="208.5" width="7" height="7" rx="1.5" fill="#2ecc6c" stroke="#7ff5d8" stroke-width="1.2"/><rect x="836.5" y="240.5" width="7" height="7" rx="1.5" fill="#2ecc6c" stroke="#7ff5d8" stroke-width="1.2"/><circle cx="841" cy="233" r="3.5" fill="#000"/><path d="M702,285l1,0 1,0 1,0 1,0 1,0 1,0 1,-16 1,-1 1,4 1,-4 1,0 1,0 1,1 1,0 1,0 1,-1 1,4 1,-3 1,1 1,0 1,3 1,-1 1,0 1,3 1,-1 1,0 1,1 1,0 1,1 1,2 1,-1 1,1 1,2 1,0 1,0 1,1 1,-11 1,-2 1,15 1,1 1,-1 1,2 1,0 1,0 1,-14 1,-3 1,16 1,0 1,1 1,-17 1,0 1,0 1,3 1,-3 1,4 1,-4 1,0 1,2 1,-2 1,3 1,-1 1,2 1,1 1,-2 1,2 1,1 1,-1 1,3 1,1 1,0 1,-2 1,1 1,1 1,1 1,0 1,2 1,-1 1,-9 1,0 1,11 1,1 1,1 1,0 1,0 1,1 1,-15 1,-1 1,0 1,0 1,2 1,-1 1,0 1,-1 1,0 1,0 1,3 1,0 1,1 1,1 1,-1 1,2 1,-2 1,3 1,0 1,-1 1,2 1,-1 1,1 1,2 1,-1 1,1 1,0 1,2 1,0 1,0 1,3 1,-1 1,0 1,1 1,0 1,1 1,0 1,0 1,-14 1,-1 1,-1 1,0 1,0 1,0 1,0 1,2 1,-2 1,0 1,1 1,0 0,48 -1,2 -1,1 -1,0 -1,0 -1,0 -1,0 -1,-1 -1,1 -1,-1 -1,-3 -1,0 -1,-12 -1,0 -1,0 -1,1 -1,0 -1,-1 -1,2 -1,1 -1,0 -1,0 -1,0 -1,3 -1,0 -1,-1 -1,2 -1,1 -1,-2 -1,3 -1,1 -1,0 -1,1 -1,1 -1,0 -1,1 -1,1 -1,0 -1,-2 -1,2 -1,2 -1,0 -1,0 -1,0 -1,-2 -1,2 -1,-2 -1,2 -1,0 -1,-1 -1,-15 -1,1 -1,0 -1,0 -1,1 -1,1 -1,13 -1,0 -1,-12 -1,2 -1,-2 -1,3 -1,0 -1,-1 -1,3 -1,0 -1,-1 -1,0 -1,3 -1,1 -1,-1 -1,-1 -1,4 -1,0 -1,1 -1,0 -1,1 -1,0 -1,0 -1,-2 -1,0 -1,2 -1,-3 -1,3 -1,-1 -1,1 -1,-16 -1,0 -1,0 -1,16 -1,0 -1,-16 -1,0 -1,0 -1,-1 -1,2 -1,0 -1,14 -1,1 -1,-12 -1,-2 -1,1 -1,3 -1,-2 -1,3 -1,-1 -1,2 -1,-2 -1,3 -1,-1 -1,2 -1,1 -1,0 -1,1 -1,-2 -1,1 -1,1 -1,3 -1,-3 -1,2 -1,1 -1,-2 -1,0 -1,0 -1,3 -1,-3 -1,3 -1,0 -1,0 -1,-18 -1,0 -1,0 -1,1 -1,0 -1,-1 -1,1z" fill="#c2efd2" stroke="#111" stroke-width="1"/><path d="M852,268l1,0 1,0 1,0 1,0 1,0 1,0 1,0 1,0 1,0 1,0 1,0 1,0 1,6 1,-1 1,1 1,4 1,1 1,-3 1,0 1,1 1,-9 1,9 1,2 1,-2 1,1 1,-2 1,-2 1,4 1,0 1,-6 1,0 1,-1 1,1 1,2 1,-1 1,-2 1,-3 1,4 1,1 1,1 1,6 1,-5 1,1 1,0 1,1 1,1 1,-1 1,0 1,-9 1,8 1,1 1,-2 1,0 1,2 1,3 1,-7 1,-1 1,-1 1,0 1,0 1,0 1,1 1,-4 1,9 1,-3 1,4 1,-3 1,1 1,0 1,2 1,-1 1,1 1,0 1,-2 1,0 1,-1 1,0 1,2 1,-4 1,-5 1,0 1,0 1,0 1,0 1,0 1,0 1,0 1,0 1,0 1,0 1,0 1,0 1,0 1,0 1,0 1,0 1,0 1,0 1,0 1,0 1,0 1,0 1,0 1,0 1,0 1,0 1,0 1,0 1,0 1,0 1,0 1,0 1,0 1,0 1,0 1,0 1,0 1,0 1,0 1,0 1,0 1,0 1,0 1,0 1,0 1,0 1,0 1,0 1,0 1,0 1,0 1,0 1,0 1,0 1,0 1,0 1,0 1,0 1,0 1,0 1,0 1,0 1,0 1,0 1,0 1,0 1,0 1,0 1,0 1,0 1,0 1,0 1,0 1,0 1,0 1,0 1,0 1,0 1,0 1,0 1,0 1,0 1,0 1,0 1,0 1,0 1,0 1,0 1,0 1,0 1,0 1,0 1,0 1,0 1,0 1,0 1,0 1,0 1,0 1,0 1,0 1,0 1,0 1,0 1,0 1,0 1,0 1,0 1,0 1,0 1,0 1,0 1,0 1,0 1,0 1,0 1,0 1,0 1,0 1,0 1,0 1,0 1,0 1,0 1,0 1,0 1,0 1,0 1,0 1,0 1,0 1,0 1,0 1,0 1,0 1,0 1,0 1,0 1,0 1,0 1,0 1,0 1,0 1,0 1,0 0,52 -1,0 -1,0 -1,0 -1,0 -1,0 -1,0 -1,0 -1,0 -1,0 -1,0 -1,0 -1,0 -1,0 -1,0 -1,0 -1,0 -1,0 -1,0 -1,0 -1,0 -1,0 -1,0 -1,0 -1,0 -1,0 -1,0 -1,0 -1,0 -1,0 -1,0 -1,0 -1,0 -1,0 -1,0 -1,0 -1,0 -1,0 -1,0 -1,0 -1,0 -1,0 -1,0 -1,0 -1,0 -1,0 -1,0 -1,0 -1,0 -1,0 -1,0 -1,0 -1,0 -1,0 -1,0 -1,0 -1,0 -1,0 -1,0 -1,0 -1,0 -1,0 -1,0 -1,0 -1,0 -1,0 -1,0 -1,0 -1,0 -1,0 -1,0 -1,0 -1,0 -1,0 -1,0 -1,0 -1,0 -1,0 -1,0 -1,0 -1,0 -1,0 -1,0 -1,0 -1,0 -1,0 -1,0 -1,0 -1,0 -1,0 -1,0 -1,0 -1,0 -1,0 -1,0 -1,0 -1,0 -1,0 -1,0 -1,0 -1,0 -1,0 -1,0 -1,0 -1,0 -1,0 -1,0 -1,0 -1,0 -1,0 -1,0 -1,0 -1,0 -1,0 -1,0 -1,0 -1,0 -1,0 -1,0 -1,0 -1,0 -1,0 -1,0 -1,0 -1,0 -1,0 -1,0 -1,0 -1,0 -1,0 -1,0 -1,0 -1,0 -1,0 -1,0 -1,0 -1,0 -1,0 -1,0 -1,0 -1,0 -1,0 -1,0 -1,0 -1,0 -1,0 -1,-5 -1,-1 -1,-1 -1,0 -1,-1 -1,0 -1,-1 -1,0 -1,0 -1,-1 -1,2 -1,0 -1,1 -1,-3 -1,3 -1,2 -1,5 -1,-4 -1,1 -1,0 -1,0 -1,-4 -1,4 -1,-1 -1,-4 -1,-2 -1,4 -1,-1 -1,0 -1,-1 -1,8 -1,-10 -1,-1 -1,1 -1,1 -1,-2 -1,3 -1,1 -1,-4 -1,5 -1,1 -1,1 -1,4 -1,-3 -1,-2 -1,2 -1,0 -1,0 -1,-1 -1,0 -1,-5 -1,-3 -1,2 -1,3 -1,-1 -1,-2 -1,1 -1,0 -1,9 -1,-9 -1,-2 -1,3 -1,1 -1,0 -1,1 -1,1 -1,0 -1,5 -1,0 -1,0 -1,0 -1,0 -1,0 -1,0 -1,0 -1,0 -1,0 -1,0 -1,0 -1,0z" fill="#5f7a6b" stroke="#0a2a16" stroke-width="1"/><path d="M843 284L852 269V321H843z" fill="#5f7a6b"/><path d="M838 252h14l-7 30z" fill="#2b2b2b"/><path d="M838 322h14l-14 -34z" fill="#1f8a48"/><path d="M838 252v70" stroke="#0c2a18" stroke-width="1"/><rect x="851.5" y="253.5" width="7" height="7" rx="1.5" fill="#2ecc6c" stroke="#7ff5d8" stroke-width="1.2"/><rect x="843.5" y="282.5" width="7" height="7" rx="1.5" fill="#2ecc6c" stroke="#7ff5d8" stroke-width="1.2"/><rect x="836.5" y="314.5" width="7" height="7" rx="1.5" fill="#2ecc6c" stroke="#7ff5d8" stroke-width="1.2"/><circle cx="841" cy="307" r="3.5" fill="#000"/><path d="M702,367l1,0 1,0 1,0 1,0 1,0 1,0 1,0 1,0 1,0 1,0 1,0 1,0 1,0 1,0 1,0 1,0 1,-1 1,0 1,0 1,-1 1,1 1,0 1,0 1,1 1,0 1,0 1,0 1,0 1,0 1,-1 1,-1 1,1 1,-1 1,0 1,1 1,0 1,1 1,-1 1,-1 1,0 1,-1 1,0 1,0 1,0 1,0 1,1 1,0 1,1 1,1 1,-1 1,-1 1,-1 1,-1 1,-1 1,0 1,1 1,0 1,1 1,1 1,1 1,1 1,0 1,0 1,0 1,0 1,0 1,0 1,0 1,0 1,0 1,0 1,0 1,0 1,0 1,0 1,0 1,0 1,0 1,0 1,0 1,0 1,0 1,0 1,0 1,0 1,0 1,0 1,-1 1,0 1,-1 1,0 1,-1 1,-1 1,0 1,2 1,0 1,1 1,0 1,1 1,-1 1,0 1,-1 1,-1 1,0 1,0 1,1 1,1 1,0 1,1 1,0 1,0 1,0 1,0 1,0 1,0 1,0 1,0 1,0 1,0 1,0 1,0 1,0 1,-1 1,0 1,0 1,0 1,1 1,0 1,0 1,0 1,0 1,0 1,0 1,0 1,0 0,2 -1,0 -1,0 -1,0 -1,0 -1,0 -1,0 -1,0 -1,0 -1,1 -1,0 -1,0 -1,0 -1,-1 -1,0 -1,0 -1,0 -1,0 -1,0 -1,0 -1,0 -1,0 -1,0 -1,0 -1,0 -1,0 -1,0 -1,1 -1,0 -1,1 -1,0 -1,0 -1,1 -1,-1 -1,-1 -1,0 -1,-1 -1,1 -1,0 -1,1 -1,0 -1,1 -1,0 -1,1 -1,-1 -1,-1 -1,-1 -1,0 -1,-1 -1,0 -1,0 -1,0 -1,0 -1,0 -1,0 -1,0 -1,0 -1,0 -1,0 -1,0 -1,0 -1,0 -1,0 -1,0 -1,0 -1,0 -1,0 -1,0 -1,0 -1,0 -1,0 -1,0 -1,0 -1,0 -1,0 -1,1 -1,1 -1,0 -1,2 -1,0 -1,0 -1,0 -1,0 -1,-1 -1,-2 -1,0 -1,-1 -1,0 -1,1 -1,1 -1,1 -1,1 -1,0 -1,-1 -1,0 -1,-1 -1,-1 -1,0 -1,-1 -1,1 -1,0 -1,0 -1,0 -1,2 -1,-2 -1,0 -1,-1 -1,0 -1,0 -1,0 -1,0 -1,0 -1,1 -1,0 -1,1 -1,0 -1,1 -1,-2 -1,0 -1,-1 -1,0 -1,0 -1,0 -1,0 -1,0 -1,0 -1,0 -1,0 -1,0 -1,0 -1,0 -1,0 -1,0 -1,0 -1,0 -1,0z" fill="#c2efd2" stroke="#111" stroke-width="1"/><path d="M842,367l1,0 1,-1 1,1 1,-1 1,0 1,0 1,-1 1,0 1,0 1,0 1,-1 1,0 1,0 1,0 1,0 1,1 1,0 1,-1 1,1 1,0 1,-2 1,1 1,0 1,-1 1,0 1,0 1,1 1,0 1,-1 1,-1 1,0 1,-1 1,0 1,2 1,0 1,-2 1,1 1,-5 1,3 1,0 1,-1 1,0 1,2 1,-2 1,0 1,1 1,-2 1,-4 1,6 1,1 1,0 1,0 1,0 1,-3 1,1 1,2 1,-6 1,4 1,1 1,1 1,-1 1,0 1,1 1,0 1,0 1,1 1,-2 1,2 1,-2 1,2 1,0 1,0 1,-1 1,-1 1,0 1,1 1,1 1,0 1,0 1,0 1,-2 1,1 1,0 1,2 1,-1 1,-2 1,0 1,2 1,0 1,1 1,-2 1,2 1,0 1,-4 1,3 1,0 1,0 1,0 1,1 1,0 1,1 1,-1 1,1 1,0 1,0 1,0 1,1 1,0 1,0 1,-1 1,1 1,0 1,0 1,0 1,-1 1,1 1,-1 1,1 1,0 1,0 1,-1 1,-1 1,1 1,0 1,-2 1,1 1,1 1,-1 1,0 1,0 1,0 1,1 1,-2 1,1 1,0 1,1 1,-2 1,1 1,1 1,0 1,0 1,-1 1,1 1,1 1,-1 1,0 1,1 1,0 1,0 1,-1 1,1 1,-1 1,-1 1,1 1,0 1,-2 1,1 1,-1 1,0 1,-3 1,1 1,1 1,-2 1,-1 1,0 1,-1 1,3 1,-1 1,1 1,1 1,-5 1,3 1,-1 1,1 1,-1 1,0 1,2 1,1 1,0 1,-1 1,1 1,-1 1,1 1,-2 1,0 1,1 1,-1 1,0 1,-1 1,0 1,2 1,-3 1,3 1,-2 1,-1 1,3 1,0 1,0 1,-1 1,-3 1,6 1,0 1,-1 1,1 1,0 1,-2 1,3 1,1 1,-2 1,1 1,-2 1,-3 1,5 1,0 1,-2 1,1 1,-1 1,1 1,-2 1,2 1,-4 1,2 1,0 1,-1 1,2 1,-4 1,3 1,2 1,1 1,-2 1,1 1,-1 1,0 1,0 1,2 0,10 -1,0 -1,1 -1,0 -1,1 -1,0 -1,0 -1,1 -1,-1 -1,0 -1,1 -1,-2 -1,2 -1,-1 -1,1 -1,-2 -1,2 -1,-2 -1,1 -1,0 -1,0 -1,0 -1,0 -1,0 -1,-1 -1,0 -1,-1 -1,0 -1,0 -1,1 -1,0 -1,0 -1,0 -1,1 -1,-1 -1,2 -1,3 -1,-4 -1,1 -1,2 -1,0 -1,0 -1,1 -1,-3 -1,1 -1,2 -1,0 -1,-1 -1,-2 -1,4 -1,-4 -1,0 -1,-1 -1,6 -1,-4 -1,-2 -1,1 -1,-2 -1,3 -1,-2 -1,2 -1,0 -1,-1 -1,1 -1,2 -1,-1 -1,-2 -1,4 -1,-1 -1,0 -1,6 -1,-6 -1,-3 -1,1 -1,0 -1,-3 -1,0 -1,1 -1,0 -1,0 -1,-2 -1,0 -1,-1 -1,0 -1,-1 -1,1 -1,0 -1,-1 -1,0 -1,1 -1,-1 -1,1 -1,0 -1,-1 -1,2 -1,0 -1,0 -1,-1 -1,0 -1,1 -1,-1 -1,1 -1,-1 -1,0 -1,2 -1,-1 -1,1 -1,-2 -1,0 -1,1 -1,-1 -1,3 -1,-3 -1,0 -1,0 -1,0 -1,-1 -1,1 -1,-1 -1,0 -1,3 -1,-3 -1,0 -1,0 -1,0 -1,0 -1,0 -1,0 -1,0 -1,3 -1,-1 -1,-1 -1,0 -1,2 -1,-2 -1,1 -1,-1 -1,1 -1,0 -1,1 -1,0 -1,0 -1,0 -1,0 -1,1 -1,0 -1,-1 -1,0 -1,2 -1,0 -1,0 -1,-2 -1,4 -1,-2 -1,0 -1,-1 -1,0 -1,0 -1,0 -1,0 -1,-1 -1,1 -1,-1 -1,0 -1,-1 -1,1 -1,2 -1,-1 -1,2 -1,-3 -1,2 -1,-1 -1,2 -1,-1 -1,-1 -1,4 -1,-4 -1,1 -1,1 -1,-1 -1,2 -1,-1 -1,-2 -1,3 -1,0 -1,-1 -1,0 -1,-2 -1,2 -1,1 -1,-1 -1,3 -1,-1 -1,-4 -1,-1 -1,2 -1,-2 -1,2 -1,0 -1,0 -1,0 -1,-2 -1,0 -1,-1 -1,1 -1,0 -1,-2 -1,2 -1,-2 -1,0 -1,0 -1,0 -1,0 -1,0 -1,-1 -1,1 -1,-1 -1,0 -1,0 -1,0 -1,0 -1,2 -1,-2 -1,0 -1,1 -1,-1 -1,1 -1,-1 -1,0 -1,-1 -1,0 -1,-1 -1,0 -1,0 -1,1 -1,0z" fill="#5f7a6b" stroke="#0a2a16" stroke-width="1"/><path d="M838 326h14l-7 30z" fill="#2b2b2b"/><path d="M838 396h14l-14 -34z" fill="#1f8a48"/><path d="M838 326v70" stroke="#0c2a18" stroke-width="1"/><rect x="851.5" y="327.5" width="7" height="7" rx="1.5" fill="#2ecc6c" stroke="#7ff5d8" stroke-width="1.2"/><rect x="843.5" y="356.5" width="7" height="7" rx="1.5" fill="#2ecc6c" stroke="#7ff5d8" stroke-width="1.2"/><rect x="836.5" y="388.5" width="7" height="7" rx="1.5" fill="#2ecc6c" stroke="#7ff5d8" stroke-width="1.2"/><circle cx="841" cy="381" r="3.5" fill="#000"/><path d="M702,441l1,0 1,0 1,0 1,0 1,0 1,0 1,0 1,0 1,0 1,0 1,0 1,0 1,0 1,0 1,0 1,0 1,-1 1,0 1,0 1,0 1,-1 1,1 1,0 1,1 1,0 1,0 1,0 1,0 1,0 1,-1 1,0 1,0 1,-1 1,1 1,-1 1,1 1,1 1,-1 1,0 1,-1 1,0 1,-1 1,-1 1,1 1,0 1,1 1,1 1,1 1,0 1,-1 1,-1 1,0 1,-2 1,-1 1,0 1,0 1,1 1,2 1,0 1,1 1,1 1,0 1,0 1,0 1,0 1,0 1,0 1,0 1,0 1,0 1,0 1,0 1,0 1,0 1,0 1,0 1,0 1,0 1,0 1,0 1,0 1,0 1,0 1,0 1,0 1,0 1,0 1,-1 1,-1 1,0 1,-1 1,0 1,0 1,0 1,1 1,0 1,1 1,1 1,0 1,-1 1,-1 1,0 1,0 1,-1 1,0 1,1 1,1 1,0 1,1 1,0 1,0 1,0 1,0 1,0 1,0 1,0 1,0 1,0 1,0 1,0 1,0 1,-1 1,0 1,0 1,0 1,0 1,1 1,0 1,0 1,0 1,0 1,0 1,0 1,0 1,0 0,2 -1,0 -1,0 -1,0 -1,0 -1,0 -1,0 -1,0 -1,0 -1,1 -1,0 -1,0 -1,0 -1,-1 -1,0 -1,0 -1,0 -1,0 -1,0 -1,0 -1,0 -1,0 -1,0 -1,0 -1,0 -1,0 -1,0 -1,1 -1,1 -1,0 -1,0 -1,0 -1,0 -1,0 -1,0 -1,-1 -1,-1 -1,0 -1,1 -1,2 -1,0 -1,0 -1,1 -1,-1 -1,0 -1,-1 -1,-1 -1,0 -1,-1 -1,0 -1,0 -1,0 -1,0 -1,0 -1,0 -1,0 -1,0 -1,0 -1,0 -1,0 -1,0 -1,0 -1,0 -1,0 -1,0 -1,0 -1,0 -1,0 -1,0 -1,0 -1,0 -1,0 -1,0 -1,0 -1,0 -1,1 -1,0 -1,1 -1,1 -1,0 -1,1 -1,0 -1,0 -1,-1 -1,-1 -1,-1 -1,-1 -1,0 -1,2 -1,0 -1,0 -1,1 -1,0 -1,0 -1,-1 -1,0 -1,-1 -1,-1 -1,0 -1,1 -1,0 -1,1 -1,0 -1,-1 -1,0 -1,0 -1,-1 -1,0 -1,0 -1,0 -1,0 -1,0 -1,1 -1,0 -1,2 -1,-2 -1,0 -1,0 -1,0 -1,-1 -1,0 -1,0 -1,0 -1,0 -1,0 -1,0 -1,0 -1,0 -1,0 -1,0 -1,0 -1,0 -1,0 -1,0 -1,0 -1,0z" fill="#c2efd2" stroke="#111" stroke-width="1"/><path d="M842,440l1,0 1,1 1,-1 1,0 1,-1 1,0 1,0 1,0 1,0 1,-3 1,0 1,3 1,0 1,-1 1,0 1,0 1,0 1,-1 1,2 1,-1 1,0 1,0 1,-2 1,2 1,0 1,0 1,0 1,0 1,-2 1,0 1,1 1,-1 1,1 1,-1 1,-1 1,0 1,0 1,0 1,0 1,-2 1,-1 1,3 1,-2 1,0 1,1 1,-1 1,0 1,1 1,0 1,-3 1,3 1,1 1,-5 1,3 1,0 1,-1 1,2 1,-1 1,1 1,0 1,0 1,2 1,0 1,-2 1,0 1,0 1,2 1,-2 1,1 1,2 1,-5 1,4 1,0 1,0 1,-6 1,4 1,-3 1,6 1,-2 1,1 1,0 1,-2 1,2 1,-4 1,3 1,1 1,-2 1,3 1,-2 1,-1 1,3 1,0 1,-5 1,4 1,1 1,-1 1,1 1,0 1,0 1,-2 1,3 1,0 1,-1 1,2 1,0 1,0 1,0 1,0 1,0 1,0 1,0 1,0 1,0 1,-1 1,1 1,-1 1,1 1,0 1,0 1,-1 1,-1 1,0 1,1 1,0 1,-1 1,-1 1,1 1,-1 1,2 1,-2 1,1 1,1 1,0 1,-1 1,1 1,-1 1,0 1,1 1,0 1,-1 1,1 1,0 1,-3 1,4 1,0 1,-1 1,0 1,1 1,-1 1,0 1,1 1,-1 1,1 1,-1 1,-1 1,0 1,-1 1,-1 1,-1 1,-5 1,6 1,-2 1,-1 1,-1 1,1 1,2 1,-2 1,-1 1,1 1,-3 1,5 1,-2 1,2 1,0 1,-1 1,1 1,0 1,1 1,-2 1,2 1,-2 1,1 1,-1 1,1 1,0 1,-1 1,2 1,-4 1,2 1,-1 1,0 1,1 1,-1 1,0 1,0 1,1 1,2 1,-1 1,1 1,-1 1,1 1,1 1,1 1,-1 1,-2 1,4 1,-1 1,0 1,0 1,-2 1,2 1,-1 1,0 1,0 1,-1 1,2 1,-1 1,0 1,0 1,-1 1,0 1,-4 1,5 1,-1 1,0 1,0 1,0 1,0 1,1 1,1 1,-2 1,0 1,1 1,1 1,-1 0,13 -1,-1 -1,0 -1,-1 -1,1 -1,0 -1,0 -1,0 -1,1 -1,-1 -1,1 -1,1 -1,0 -1,1 -1,-1 -1,-2 -1,0 -1,1 -1,0 -1,3 -1,-4 -1,-1 -1,0 -1,1 -1,-1 -1,1 -1,-2 -1,1 -1,1 -1,-2 -1,1 -1,2 -1,0 -1,0 -1,0 -1,-1 -1,2 -1,0 -1,0 -1,1 -1,-1 -1,3 -1,-1 -1,0 -1,2 -1,-2 -1,-2 -1,1 -1,1 -1,-2 -1,0 -1,5 -1,-6 -1,0 -1,1 -1,1 -1,-1 -1,0 -1,0 -1,4 -1,-5 -1,2 -1,0 -1,0 -1,2 -1,-3 -1,3 -1,-2 -1,7 -1,-5 -1,-2 -1,1 -1,-2 -1,1 -1,0 -1,-1 -1,0 -1,-3 -1,1 -1,-1 -1,-1 -1,0 -1,1 -1,2 -1,-3 -1,0 -1,-1 -1,0 -1,1 -1,0 -1,-1 -1,1 -1,2 -1,-2 -1,0 -1,1 -1,0 -1,1 -1,-1 -1,-1 -1,1 -1,-1 -1,2 -1,-2 -1,3 -1,-2 -1,0 -1,-1 -1,0 -1,1 -1,0 -1,2 -1,-3 -1,0 -1,0 -1,-1 -1,0 -1,0 -1,0 -1,0 -1,0 -1,1 -1,-1 -1,0 -1,0 -1,0 -1,0 -1,0 -1,1 -1,0 -1,-1 -1,1 -1,0 -1,3 -1,-3 -1,1 -1,-1 -1,0 -1,2 -1,0 -1,-1 -1,2 -1,-1 -1,0 -1,1 -1,-1 -1,1 -1,0 -1,0 -1,0 -1,-1 -1,1 -1,1 -1,-1 -1,0 -1,-1 -1,0 -1,0 -1,0 -1,2 -1,-1 -1,3 -1,-4 -1,0 -1,-1 -1,0 -1,1 -1,0 -1,1 -1,0 -1,1 -1,-2 -1,0 -1,1 -1,1 -1,1 -1,-1 -1,-1 -1,0 -1,-1 -1,3 -1,-1 -1,1 -1,0 -1,-2 -1,2 -1,2 -1,-2 -1,-2 -1,1 -1,0 -1,0 -1,-1 -1,2 -1,0 -1,0 -1,-1 -1,-1 -1,3 -1,-2 -1,-1 -1,-1 -1,1 -1,-1 -1,-1 -1,1 -1,0 -1,-1 -1,-1 -1,1 -1,-1 -1,0 -1,0 -1,0 -1,0 -1,0 -1,0 -1,-1 -1,0 -1,0 -1,1 -1,-1 -1,0 -1,1 -1,-1 -1,3 -1,-2 -1,0 -1,-2 -1,0 -1,0 -1,-1 -1,0 -1,0 -1,0 -1,0z" fill="#5f7a6b" stroke="#0a2a16" stroke-width="1"/><path d="M838 400h14l-7 30z" fill="#2b2b2b"/><path d="M838 470h14l-14 -34z" fill="#1f8a48"/><path d="M838 400v70" stroke="#0c2a18" stroke-width="1"/><rect x="851.5" y="401.5" width="7" height="7" rx="1.5" fill="#2ecc6c" stroke="#7ff5d8" stroke-width="1.2"/><rect x="843.5" y="430.5" width="7" height="7" rx="1.5" fill="#2ecc6c" stroke="#7ff5d8" stroke-width="1.2"/><rect x="836.5" y="462.5" width="7" height="7" rx="1.5" fill="#2ecc6c" stroke="#7ff5d8" stroke-width="1.2"/><circle cx="841" cy="455" r="3.5" fill="#000"/><path d="M702,515l1,0 1,0 1,0 1,0 1,0 1,0 1,0 1,0 1,0 1,0 1,0 1,0 1,0 1,0 1,0 1,0 1,-1 1,0 1,-1 1,1 1,-1 1,1 1,0 1,1 1,0 1,0 1,0 1,0 1,0 1,-1 1,-1 1,1 1,0 1,-1 1,1 1,0 1,1 1,-1 1,0 1,-2 1,0 1,0 1,0 1,-1 1,1 1,1 1,1 1,0 1,1 1,-1 1,-1 1,-1 1,-1 1,0 1,0 1,0 1,1 1,0 1,1 1,1 1,1 1,0 1,0 1,0 1,0 1,0 1,0 1,0 1,0 1,0 1,0 1,0 1,0 1,0 1,0 1,0 1,0 1,0 1,0 1,0 1,0 1,0 1,0 1,0 1,0 1,0 1,0 1,-1 1,-1 1,0 1,0 1,-1 1,0 1,0 1,1 1,0 1,0 1,1 1,1 1,-1 1,0 1,-2 1,1 1,0 1,0 1,0 1,1 1,0 1,1 1,0 1,0 1,0 1,0 1,0 1,0 1,0 1,0 1,0 1,0 1,0 1,0 1,0 1,-1 1,0 1,0 1,1 1,0 1,0 1,0 1,0 1,0 1,0 1,0 1,0 1,0 0,2 -1,0 -1,0 -1,0 -1,0 -1,0 -1,0 -1,0 -1,1 -1,-1 -1,1 -1,0 -1,0 -1,0 -1,-1 -1,0 -1,0 -1,0 -1,0 -1,0 -1,0 -1,0 -1,0 -1,0 -1,0 -1,0 -1,0 -1,1 -1,1 -1,0 -1,1 -1,-1 -1,1 -1,-1 -1,-1 -1,0 -1,-1 -1,0 -1,1 -1,1 -1,1 -1,0 -1,0 -1,1 -1,-2 -1,0 -1,-1 -1,-1 -1,0 -1,0 -1,0 -1,0 -1,0 -1,0 -1,0 -1,0 -1,0 -1,0 -1,0 -1,0 -1,0 -1,0 -1,0 -1,0 -1,0 -1,0 -1,0 -1,0 -1,0 -1,0 -1,0 -1,0 -1,0 -1,0 -1,0 -1,1 -1,1 -1,1 -1,1 -1,0 -1,0 -1,2 -1,-2 -1,-1 -1,-1 -1,-1 -1,-1 -1,1 -1,0 -1,1 -1,0 -1,2 -1,-1 -1,0 -1,0 -1,-1 -1,0 -1,-2 -1,0 -1,1 -1,0 -1,1 -1,-1 -1,0 -1,0 -1,0 -1,-1 -1,0 -1,0 -1,0 -1,0 -1,0 -1,1 -1,0 -1,0 -1,1 -1,0 -1,-1 -1,0 -1,0 -1,-1 -1,0 -1,0 -1,0 -1,0 -1,0 -1,0 -1,0 -1,0 -1,0 -1,0 -1,0 -1,0 -1,0 -1,0 -1,0z" fill="#c2efd2" stroke="#111" stroke-width="1"/><path d="M842,514l1,0 1,1 1,-2 1,1 1,0 1,0 1,-1 1,0 1,0 1,-1 1,0 1,0 1,1 1,0 1,0 1,0 1,0 1,0 1,-1 1,-2 1,2 1,0 1,0 1,0 1,-1 1,-2 1,2 1,-1 1,0 1,1 1,-1 1,0 1,-1 1,2 1,-1 1,0 1,-2 1,2 1,-2 1,1 1,-1 1,2 1,-3 1,0 1,1 1,-2 1,1 1,0 1,1 1,-1 1,0 1,1 1,-1 1,0 1,-1 1,1 1,2 1,-1 1,1 1,-2 1,2 1,-1 1,1 1,-1 1,-5 1,5 1,3 1,-3 1,2 1,0 1,0 1,-1 1,1 1,-2 1,1 1,-3 1,0 1,3 1,1 1,0 1,-2 1,2 1,-1 1,0 1,1 1,-2 1,2 1,-1 1,-3 1,4 1,0 1,0 1,-1 1,2 1,-2 1,2 1,-1 1,1 1,0 1,0 1,1 1,0 1,0 1,0 1,0 1,0 1,1 1,-1 1,1 1,-1 1,1 1,0 1,-1 1,1 1,0 1,-1 1,1 1,0 1,-1 1,1 1,-3 1,2 1,0 1,0 1,-1 1,0 1,0 1,0 1,1 1,0 1,-1 1,-1 1,0 1,1 1,1 1,-1 1,0 1,-2 1,2 1,0 1,0 1,1 1,-1 1,0 1,1 1,1 1,-1 1,1 1,-1 1,1 1,-1 1,0 1,1 1,-2 1,0 1,1 1,-2 1,0 1,-1 1,0 1,-1 1,-1 1,0 1,1 1,0 1,0 1,-3 1,2 1,-2 1,1 1,2 1,0 1,-1 1,0 1,1 1,1 1,-3 1,1 1,0 1,2 1,-2 1,3 1,0 1,-3 1,2 1,-2 1,1 1,0 1,1 1,-5 1,4 1,0 1,-3 1,0 1,0 1,3 1,0 1,-1 1,3 1,0 1,0 1,-1 1,0 1,-1 1,3 1,-4 1,-1 1,3 1,2 1,0 1,-2 1,1 1,1 1,-2 1,1 1,-2 1,2 1,-1 1,0 1,1 1,-1 1,-1 1,0 1,2 1,-2 1,0 1,1 1,1 1,-1 1,-2 1,2 1,2 1,-2 1,1 1,0 0,11 -1,1 -1,0 -1,-1 -1,2 -1,-1 -1,1 -1,0 -1,1 -1,-1 -1,0 -1,1 -1,-2 -1,1 -1,0 -1,-1 -1,2 -1,-2 -1,1 -1,0 -1,1 -1,-1 -1,-1 -1,-1 -1,1 -1,-1 -1,1 -1,3 -1,-5 -1,1 -1,1 -1,0 -1,3 -1,-3 -1,-1 -1,2 -1,2 -1,-3 -1,1 -1,5 -1,-3 -1,-1 -1,0 -1,1 -1,2 -1,-2 -1,3 -1,-2 -1,-2 -1,-1 -1,1 -1,-1 -1,1 -1,0 -1,0 -1,-2 -1,3 -1,-3 -1,5 -1,-2 -1,-1 -1,-1 -1,1 -1,0 -1,-1 -1,1 -1,0 -1,6 -1,-6 -1,6 -1,-4 -1,0 -1,-2 -1,0 -1,0 -1,-1 -1,0 -1,-2 -1,1 -1,0 -1,-1 -1,0 -1,-1 -1,0 -1,0 -1,0 -1,-1 -1,1 -1,0 -1,1 -1,-2 -1,1 -1,0 -1,0 -1,1 -1,-1 -1,0 -1,4 -1,-3 -1,0 -1,3 -1,-4 -1,2 -1,-1 -1,-1 -1,1 -1,-1 -1,2 -1,0 -1,-2 -1,0 -1,1 -1,-1 -1,-1 -1,1 -1,2 -1,-2 -1,-1 -1,0 -1,1 -1,1 -1,-2 -1,2 -1,-2 -1,2 -1,-1 -1,-1 -1,0 -1,0 -1,1 -1,0 -1,-1 -1,1 -1,-1 -1,2 -1,1 -1,-1 -1,2 -1,-3 -1,2 -1,-1 -1,3 -1,-3 -1,1 -1,1 -1,4 -1,-5 -1,0 -1,0 -1,2 -1,0 -1,-1 -1,5 -1,-5 -1,0 -1,-1 -1,2 -1,0 -1,0 -1,-1 -1,0 -1,-1 -1,4 -1,-4 -1,0 -1,4 -1,-3 -1,-1 -1,0 -1,1 -1,0 -1,1 -1,0 -1,1 -1,-2 -1,-1 -1,2 -1,1 -1,-2 -1,1 -1,0 -1,0 -1,7 -1,-6 -1,-2 -1,0 -1,2 -1,-1 -1,-1 -1,1 -1,1 -1,5 -1,-5 -1,0 -1,-3 -1,1 -1,6 -1,-6 -1,0 -1,1 -1,-2 -1,2 -1,-2 -1,2 -1,-2 -1,-1 -1,0 -1,-1 -1,0 -1,0 -1,2 -1,-2 -1,0 -1,0 -1,-1 -1,0 -1,0 -1,0 -1,0 -1,2 -1,-1 -1,-1 -1,1 -1,-1 -1,0 -1,1 -1,0 -1,-1 -1,-1 -1,0 -1,1 -1,-2 -1,1 -1,0 -1,-1 -1,1z" fill="#5f7a6b" stroke="#0a2a16" stroke-width="1"/><path d="M838 474h14l-7 30z" fill="#2b2b2b"/><path d="M838 544h14l-14 -34z" fill="#1f8a48"/><path d="M838 474v70" stroke="#0c2a18" stroke-width="1"/><rect x="851.5" y="475.5" width="7" height="7" rx="1.5" fill="#2ecc6c" stroke="#7ff5d8" stroke-width="1.2"/><rect x="843.5" y="504.5" width="7" height="7" rx="1.5" fill="#2ecc6c" stroke="#7ff5d8" stroke-width="1.2"/><rect x="836.5" y="536.5" width="7" height="7" rx="1.5" fill="#2ecc6c" stroke="#7ff5d8" stroke-width="1.2"/><circle cx="841" cy="529" r="3.5" fill="#000"/><path d="M702,589l1,0 1,0 1,0 1,0 1,0 1,0 1,0 1,0 1,0 1,0 1,0 1,0 1,0 1,0 1,0 1,-1 1,0 1,0 1,-1 1,0 1,0 1,0 1,1 1,1 1,0 1,0 1,0 1,0 1,-1 1,0 1,0 1,-1 1,0 1,0 1,1 1,0 1,0 1,1 1,-2 1,0 1,0 1,-1 1,-1 1,0 1,1 1,0 1,2 1,1 1,0 1,-1 1,-1 1,-1 1,-1 1,-1 1,1 1,-1 1,2 1,1 1,0 1,1 1,1 1,0 1,0 1,0 1,0 1,0 1,0 1,0 1,0 1,0 1,0 1,0 1,0 1,0 1,0 1,0 1,0 1,0 1,0 1,0 1,0 1,0 1,0 1,0 1,0 1,0 1,0 1,-1 1,0 1,-1 1,-1 1,-2 1,2 1,0 1,0 1,1 1,0 1,2 1,0 1,-1 1,-1 1,0 1,-1 1,1 1,-1 1,1 1,0 1,1 1,1 1,0 1,0 1,0 1,0 1,0 1,0 1,0 1,0 1,0 1,0 1,0 1,0 1,-1 1,0 1,0 1,0 1,1 1,0 1,0 1,0 1,0 1,0 1,0 1,0 1,0 1,0 0,2 -1,0 -1,0 -1,0 -1,0 -1,0 -1,0 -1,0 -1,0 -1,1 -1,0 -1,0 -1,0 -1,0 -1,-1 -1,0 -1,0 -1,0 -1,0 -1,0 -1,0 -1,0 -1,0 -1,0 -1,0 -1,0 -1,0 -1,1 -1,0 -1,1 -1,0 -1,0 -1,0 -1,0 -1,0 -1,-1 -1,-1 -1,1 -1,0 -1,1 -1,0 -1,1 -1,0 -1,0 -1,0 -1,-1 -1,0 -1,-1 -1,-1 -1,0 -1,0 -1,0 -1,0 -1,0 -1,0 -1,0 -1,0 -1,0 -1,0 -1,0 -1,0 -1,0 -1,0 -1,0 -1,0 -1,0 -1,0 -1,0 -1,0 -1,0 -1,0 -1,0 -1,0 -1,0 -1,0 -1,1 -1,1 -1,0 -1,2 -1,0 -1,1 -1,0 -1,-1 -1,-1 -1,-1 -1,-1 -1,-1 -1,0 -1,1 -1,1 -1,1 -1,2 -1,-1 -1,-1 -1,-1 -1,0 -1,-1 -1,0 -1,-1 -1,1 -1,0 -1,1 -1,0 -1,0 -1,-1 -1,0 -1,-1 -1,0 -1,0 -1,0 -1,0 -1,0 -1,1 -1,0 -1,1 -1,0 -1,-1 -1,0 -1,0 -1,-1 -1,0 -1,0 -1,0 -1,0 -1,0 -1,0 -1,0 -1,0 -1,0 -1,0 -1,0 -1,0 -1,0 -1,0 -1,0 -1,0z" fill="#c2efd2" stroke="#111" stroke-width="1"/><path d="M842,588l1,0 1,1 1,0 1,-1 1,0 1,0 1,-1 1,-1 1,1 1,-3 1,2 1,-2 1,3 1,0 1,0 1,0 1,0 1,0 1,-2 1,2 1,0 1,-1 1,0 1,-2 1,3 1,-1 1,0 1,-1 1,1 1,-1 1,-1 1,-1 1,1 1,0 1,-1 1,1 1,-1 1,-1 1,2 1,-1 1,0 1,-5 1,4 1,0 1,1 1,0 1,-1 1,-1 1,2 1,-2 1,1 1,-2 1,3 1,0 1,-1 1,1 1,-1 1,0 1,1 1,0 1,1 1,0 1,0 1,-2 1,0 1,1 1,1 1,-2 1,1 1,1 1,-2 1,2 1,0 1,1 1,-2 1,2 1,-1 1,-2 1,0 1,2 1,-1 1,0 1,0 1,-1 1,2 1,0 1,0 1,-1 1,-1 1,1 1,-1 1,2 1,-1 1,0 1,1 1,0 1,2 1,-2 1,2 1,0 1,-1 1,1 1,-3 1,3 1,0 1,0 1,0 1,1 1,0 1,0 1,0 1,0 1,0 1,-1 1,0 1,1 1,-3 1,2 1,1 1,0 1,-1 1,1 1,-1 1,0 1,-1 1,0 1,-1 1,2 1,-1 1,-1 1,1 1,0 1,-1 1,0 1,1 1,0 1,1 1,0 1,-1 1,0 1,0 1,0 1,1 1,-1 1,1 1,0 1,1 1,-1 1,0 1,1 1,-1 1,0 1,0 1,-1 1,1 1,-2 1,0 1,-1 1,-3 1,2 1,-2 1,-2 1,5 1,-1 1,-10 1,9 1,-2 1,2 1,-1 1,-5 1,5 1,0 1,2 1,-4 1,4 1,1 1,-2 1,0 1,0 1,0 1,1 1,1 1,-1 1,1 1,-2 1,-1 1,0 1,-1 1,0 1,2 1,0 1,-3 1,1 1,1 1,1 1,2 1,-2 1,-1 1,4 1,0 1,-1 1,2 1,-2 1,0 1,2 1,0 1,-1 1,0 1,0 1,1 1,0 1,0 1,0 1,-2 1,1 1,0 1,0 1,-2 1,2 1,-2 1,2 1,0 1,-1 1,-1 1,2 1,-1 1,1 1,-1 1,1 1,0 1,0 1,1 1,0 1,0 1,-2 0,12 -1,1 -1,1 -1,-1 -1,2 -1,-1 -1,-1 -1,2 -1,-2 -1,0 -1,2 -1,2 -1,-2 -1,-1 -1,1 -1,-2 -1,0 -1,2 -1,-2 -1,1 -1,-1 -1,1 -1,-2 -1,0 -1,2 -1,-1 -1,-1 -1,1 -1,0 -1,-1 -1,1 -1,1 -1,-1 -1,-1 -1,3 -1,-2 -1,2 -1,-1 -1,0 -1,3 -1,-2 -1,0 -1,0 -1,3 -1,-2 -1,1 -1,4 -1,-2 -1,-3 -1,-2 -1,2 -1,0 -1,-1 -1,0 -1,0 -1,1 -1,-3 -1,2 -1,-1 -1,1 -1,-1 -1,3 -1,-1 -1,-1 -1,1 -1,-2 -1,3 -1,-1 -1,2 -1,-2 -1,5 -1,0 -1,-6 -1,1 -1,0 -1,-2 -1,1 -1,-1 -1,-1 -1,-1 -1,0 -1,-1 -1,2 -1,-2 -1,-1 -1,1 -1,-1 -1,1 -1,0 -1,0 -1,-1 -1,1 -1,-1 -1,2 -1,0 -1,0 -1,-1 -1,1 -1,1 -1,-1 -1,-1 -1,1 -1,0 -1,3 -1,-3 -1,-1 -1,1 -1,0 -1,3 -1,-3 -1,-1 -1,0 -1,0 -1,-1 -1,0 -1,2 -1,-1 -1,-1 -1,0 -1,0 -1,0 -1,0 -1,0 -1,0 -1,0 -1,0 -1,1 -1,-1 -1,0 -1,1 -1,0 -1,-1 -1,1 -1,3 -1,-2 -1,-1 -1,1 -1,-1 -1,0 -1,2 -1,-1 -1,0 -1,0 -1,1 -1,-1 -1,2 -1,0 -1,4 -1,-5 -1,0 -1,4 -1,-4 -1,0 -1,0 -1,2 -1,-2 -1,3 -1,-1 -1,0 -1,-2 -1,0 -1,0 -1,1 -1,-1 -1,1 -1,1 -1,-1 -1,0 -1,1 -1,-1 -1,5 -1,-4 -1,-1 -1,1 -1,-2 -1,0 -1,1 -1,0 -1,1 -1,0 -1,1 -1,-2 -1,0 -1,2 -1,-2 -1,3 -1,-2 -1,2 -1,0 -1,-1 -1,-1 -1,-1 -1,1 -1,1 -1,0 -1,-2 -1,-1 -1,2 -1,0 -1,-2 -1,4 -1,-4 -1,3 -1,-3 -1,0 -1,2 -1,1 -1,-4 -1,1 -1,-2 -1,0 -1,0 -1,0 -1,0 -1,0 -1,0 -1,0 -1,1 -1,-2 -1,0 -1,0 -1,0 -1,2 -1,-2 -1,0 -1,1 -1,0 -1,1 -1,-2 -1,-1 -1,0 -1,0 -1,-1 -1,1 -1,0 -1,0z" fill="#5f7a6b" stroke="#0a2a16" stroke-width="1"/><path d="M838 548h14l-7 30z" fill="#2b2b2b"/><path d="M838 618h14l-14 -34z" fill="#1f8a48"/><path d="M838 548v70" stroke="#0c2a18" stroke-width="1"/><rect x="851.5" y="549.5" width="7" height="7" rx="1.5" fill="#2ecc6c" stroke="#7ff5d8" stroke-width="1.2"/><rect x="843.5" y="578.5" width="7" height="7" rx="1.5" fill="#2ecc6c" stroke="#7ff5d8" stroke-width="1.2"/><rect x="836.5" y="610.5" width="7" height="7" rx="1.5" fill="#2ecc6c" stroke="#7ff5d8" stroke-width="1.2"/><circle cx="841" cy="603" r="3.5" fill="#000"/></svg><div style="left:857px;top:180.0px;height:14px;line-height:14px;font-size:11px;color:#e8ecd8;font-weight:normal;font-family:'Liberation Sans', sans-serif;white-space:nowrap;">0.0dB - Peak -1.4dB</div><div style="left:1038px;top:180.0px;height:14px;line-height:14px;font-size:11px;color:#e8ecd8;font-weight:normal;font-family:'Liberation Sans', sans-serif;white-space:nowrap;">0.0dB -</div><div style="left:857px;top:254.0px;height:14px;line-height:14px;font-size:11px;color:#e8ecd8;font-weight:normal;font-family:'Liberation Sans', sans-serif;white-space:nowrap;">0.0dB - Peak -2.4dB</div><div style="left:1038px;top:254.0px;height:14px;line-height:14px;font-size:11px;color:#e8ecd8;font-weight:normal;font-family:'Liberation Sans', sans-serif;white-space:nowrap;">0.0dB -</div><div style="left:857px;top:328.0px;height:14px;line-height:14px;font-size:11px;color:#e8ecd8;font-weight:normal;font-family:'Liberation Sans', sans-serif;white-space:nowrap;">0.0dB - Peak -14.3dB</div><div style="left:1038px;top:328.0px;height:14px;line-height:14px;font-size:11px;color:#e8ecd8;font-weight:normal;font-family:'Liberation Sans', sans-serif;white-space:nowrap;">0.0dB -</div><div style="left:857px;top:402.0px;height:14px;line-height:14px;font-size:11px;color:#e8ecd8;font-weight:normal;font-family:'Liberation Sans', sans-serif;white-space:nowrap;">0.0dB - Peak -12.8dB</div><div style="left:1038px;top:402.0px;height:14px;line-height:14px;font-size:11px;color:#e8ecd8;font-weight:normal;font-family:'Liberation Sans', sans-serif;white-space:nowrap;">0.0dB -</div><div style="left:857px;top:476.0px;height:14px;line-height:14px;font-size:11px;color:#e8ecd8;font-weight:normal;font-family:'Liberation Sans', sans-serif;white-space:nowrap;">0.0dB - Peak -15.6dB</div><div style="left:1038px;top:476.0px;height:14px;line-height:14px;font-size:11px;color:#e8ecd8;font-weight:normal;font-family:'Liberation Sans', sans-serif;white-space:nowrap;">0.0dB -</div><div style="left:857px;top:550.0px;height:14px;line-height:14px;font-size:11px;color:#e8ecd8;font-weight:normal;font-family:'Liberation Sans', sans-serif;white-space:nowrap;">0.0dB - Peak -14.1dB</div><div style="left:1038px;top:550.0px;height:14px;line-height:14px;font-size:11px;color:#e8ecd8;font-weight:normal;font-family:'Liberation Sans', sans-serif;white-space:nowrap;">0.0dB -</div><div style="left:702px;top:620px;width:375px;height:22px;background:#3a3346;"></div><svg style="position:absolute;left:0px;top:0px;" width="1090" height="645" viewBox="0 0 1090 645"><path d="M776.5 621v5" stroke="#aaa" stroke-width="1"/><path d="M802.5 621v5" stroke="#aaa" stroke-width="1"/><path d="M827.5 621v15" stroke="#aaa" stroke-width="1"/><path d="M852.5 621v5" stroke="#aaa" stroke-width="1"/><path d="M878.5 621v5" stroke="#aaa" stroke-width="1"/><path d="M904.5 621v5" stroke="#aaa" stroke-width="1"/><path d="M929.5 621v5" stroke="#aaa" stroke-width="1"/><path d="M954.5 621v5" stroke="#aaa" stroke-width="1"/><path d="M980.5 621v15" stroke="#aaa" stroke-width="1"/><path d="M1006.5 621v5" stroke="#aaa" stroke-width="1"/><path d="M1031.5 621v5" stroke="#aaa" stroke-width="1"/><path d="M1056.5 621v5" stroke="#aaa" stroke-width="1"/></svg><div style="left:704px;top:628.5px;height:13px;line-height:13px;font-size:10px;color:#c0c0c0;font-weight:normal;font-family:'Liberation Sans', sans-serif;white-space:nowrap;">30:00</div><div style="left:828px;top:628.5px;height:13px;line-height:13px;font-size:10px;color:#c0c0c0;font-weight:normal;font-family:'Liberation Sans', sans-serif;white-space:nowrap;">01:40:00:00</div><div style="left:981px;top:628.5px;height:13px;line-height:13px;font-size:10px;color:#c0c0c0;font-weight:normal;font-family:'Liberation Sans', sans-serif;white-space:nowrap;">01:40:30:00</div><div style="left:702px;top:642px;width:375px;height:70px;background:#6a2cc8;"></div><div style="left:702px;top:716px;width:375px;height:70px;background:#6a2cc8;"></div><div style="left:702px;top:790px;width:375px;height:70px;background:#6a2cc8;"></div><div style="left:702px;top:864px;width:375px;height:70px;background:#6a2cc8;"></div><div style="left:438px;top:938px;width:639px;height:70px;background:#6a2cc8;"></div><div style="left:438px;top:1012px;width:639px;height:61px;background:#6a2cc8;"></div><svg style="position:absolute;left:0px;top:0px;shape-rendering:crispEdges;" width="1090" height="1080" viewBox="0 0 1090 1080"><path d="M702,659l1,0 1,0 1,0 1,0 1,0 1,0 1,0 1,0 1,0 1,0 1,0 1,0 1,0 1,0 1,8 1,-8 1,0 1,0 1,0 1,0 1,0 1,0 1,0 1,0 1,8 1,-8 1,0 1,0 1,0 1,0 1,0 1,0 1,0 1,0 1,0 1,0 1,0 1,0 1,0 1,0 1,0 1,0 1,0 1,0 1,0 1,0 1,0 1,0 1,0 1,0 1,0 1,0 1,0 1,0 1,0 1,0 1,0 1,0 1,0 1,0 1,0 1,0 1,0 1,0 1,0 1,0 1,0 1,0 1,0 1,0 1,0 1,0 1,0 1,0 1,0 1,0 1,0 1,0 1,0 1,0 1,0 1,0 1,0 1,0 1,0 1,0 1,0 1,0 1,0 1,0 1,0 1,0 1,0 1,8 1,-8 1,0 1,0 1,0 1,0 1,0 1,0 1,0 1,0 1,0 1,0 1,0 1,0 1,2 1,3 1,2 1,3 1,2 1,2 1,3 1,2 1,-19 1,0 1,0 1,0 1,0 1,0 1,0 1,0 1,0 1,0 1,0 1,0 1,0 1,0 1,0 1,0 1,0 1,0 1,0 1,0 1,0 1,0 1,0 1,0 1,0 1,0 1,0 1,0 1,0 1,0 1,0 1,0 1,0 1,0 1,0 1,0 1,0 1,0 1,0 1,0 1,0 1,0 1,0 1,0 1,0 1,0 1,0 1,0 1,0 1,0 1,0 1,0 1,0 1,0 1,0 1,0 1,0 1,0 1,0 1,0 1,0 1,0 1,0 1,0 1,0 1,0 1,0 1,0 1,0 1,0 1,0 1,0 1,0 1,0 1,0 1,0 1,0 1,0 1,0 1,0 1,0 1,0 1,0 1,0 1,0 1,0 1,0 1,0 1,0 1,0 1,0 1,0 1,0 1,0 1,0 1,0 1,0 1,0 1,0 1,0 1,0 1,0 1,0 1,0 1,0 1,0 1,0 1,0 1,0 1,0 1,0 1,0 1,0 1,0 1,0 1,0 1,0 1,0 1,0 1,0 1,0 1,0 1,0 1,0 1,0 1,0 1,0 1,0 1,0 1,0 1,0 1,0 1,0 1,0 1,0 1,0 1,0 1,0 1,0 1,0 1,0 1,0 1,0 1,0 1,0 1,0 1,0 1,0 1,0 1,0 1,0 1,0 1,0 1,0 1,0 1,0 1,0 1,0 1,0 1,0 1,0 1,0 1,0 1,0 1,0 1,0 1,0 1,0 1,0 1,0 1,0 1,0 1,0 1,0 1,0 1,0 1,0 1,0 1,0 1,0 1,0 1,0 1,0 1,0 1,0 1,0 1,0 1,0 1,0 1,0 1,0 1,0 1,0 1,0 1,0 1,0 1,0 1,0 1,0 1,0 1,0 1,0 1,0 1,0 1,0 1,0 1,0 1,0 1,0 1,0 1,0 1,0 1,0 1,0 1,0 1,0 1,0 1,0 1,0 1,0 1,0 1,0 1,0 1,0 1,0 1,0 1,0 1,0 1,0 1,0 1,0 1,0 1,0 1,0 1,0 1,0 1,0 1,0 1,0 1,0 1,0 1,0 1,0 1,0 1,0 1,0 1,0 1,0 1,0 1,0 1,0 1,0 1,0 1,0 1,0 1,0 1,0 1,0 1,0 0,52 -1,0 -1,0 -1,0 -1,0 -1,0 -1,0 -1,0 -1,0 -1,0 -1,0 -1,0 -1,0 -1,0 -1,0 -1,0 -1,0 -1,0 -1,0 -1,0 -1,0 -1,0 -1,0 -1,0 -1,0 -1,0 -1,0 -1,0 -1,0 -1,0 -1,0 -1,0 -1,0 -1,0 -1,0 -1,0 -1,0 -1,0 -1,0 -1,0 -1,0 -1,0 -1,0 -1,0 -1,0 -1,0 -1,0 -1,0 -1,0 -1,0 -1,0 -1,0 -1,0 -1,0 -1,0 -1,0 -1,0 -1,0 -1,0 -1,0 -1,0 -1,0 -1,0 -1,0 -1,0 -1,0 -1,0 -1,0 -1,0 -1,0 -1,0 -1,0 -1,0 -1,0 -1,0 -1,0 -1,0 -1,0 -1,0 -1,0 -1,0 -1,0 -1,0 -1,0 -1,0 -1,0 -1,0 -1,0 -1,0 -1,0 -1,0 -1,0 -1,0 -1,0 -1,0 -1,0 -1,0 -1,0 -1,0 -1,0 -1,0 -1,0 -1,0 -1,0 -1,0 -1,0 -1,0 -1,0 -1,0 -1,0 -1,0 -1,0 -1,0 -1,0 -1,0 -1,0 -1,0 -1,0 -1,0 -1,0 -1,0 -1,0 -1,0 -1,0 -1,0 -1,0 -1,0 -1,0 -1,0 -1,0 -1,0 -1,0 -1,0 -1,0 -1,0 -1,0 -1,0 -1,0 -1,0 -1,0 -1,0 -1,0 -1,0 -1,0 -1,0 -1,0 -1,0 -1,0 -1,0 -1,0 -1,0 -1,0 -1,0 -1,0 -1,0 -1,0 -1,0 -1,0 -1,0 -1,0 -1,0 -1,0 -1,0 -1,0 -1,0 -1,0 -1,0 -1,0 -1,0 -1,0 -1,0 -1,0 -1,0 -1,0 -1,0 -1,0 -1,0 -1,0 -1,0 -1,0 -1,0 -1,0 -1,0 -1,0 -1,0 -1,0 -1,0 -1,0 -1,0 -1,0 -1,0 -1,0 -1,0 -1,0 -1,0 -1,0 -1,0 -1,0 -1,0 -1,0 -1,0 -1,0 -1,0 -1,0 -1,0 -1,0 -1,0 -1,0 -1,0 -1,0 -1,0 -1,0 -1,0 -1,0 -1,0 -1,0 -1,0 -1,0 -1,0 -1,0 -1,0 -1,0 -1,0 -1,0 -1,0 -1,0 -1,0 -1,0 -1,0 -1,0 -1,0 -1,0 -1,0 -1,0 -1,0 -1,0 -1,0 -1,0 -1,0 -1,0 -1,0 -1,0 -1,0 -1,0 -1,0 -1,0 -1,0 -1,0 -1,0 -1,0 -1,0 -1,0 -1,0 -1,0 -1,0 -1,0 -1,0 -1,0 -1,0 -1,-19 -1,2 -1,3 -1,2 -1,2 -1,3 -1,2 -1,3 -1,2 -1,0 -1,0 -1,0 -1,0 -1,0 -1,0 -1,0 -1,0 -1,0 -1,0 -1,0 -1,0 -1,-8 -1,8 -1,0 -1,0 -1,0 -1,0 -1,0 -1,0 -1,0 -1,0 -1,0 -1,0 -1,0 -1,0 -1,0 -1,0 -1,0 -1,0 -1,0 -1,0 -1,0 -1,0 -1,0 -1,0 -1,0 -1,0 -1,0 -1,0 -1,0 -1,0 -1,0 -1,0 -1,0 -1,0 -1,0 -1,0 -1,0 -1,0 -1,0 -1,0 -1,0 -1,0 -1,0 -1,0 -1,0 -1,0 -1,0 -1,0 -1,0 -1,0 -1,0 -1,0 -1,0 -1,0 -1,0 -1,0 -1,0 -1,0 -1,0 -1,0 -1,0 -1,0 -1,0 -1,0 -1,0 -1,0 -1,0 -1,0 -1,0 -1,-8 -1,8 -1,0 -1,0 -1,0 -1,0 -1,0 -1,0 -1,0 -1,0 -1,-8 -1,8 -1,0 -1,0 -1,0 -1,0 -1,0 -1,0 -1,0 -1,0 -1,0 -1,0 -1,0 -1,0 -1,0 -1,0z" fill="#d4c2ef" stroke="#111" stroke-width="1"/><path d="M702 658.5H1077" stroke="#111"/><path d="M702,733l1,0 1,0 1,0 1,0 1,0 1,0 1,0 1,0 1,0 1,0 1,0 1,0 1,0 1,0 1,8 1,-8 1,0 1,0 1,0 1,0 1,0 1,0 1,0 1,0 1,0 1,0 1,0 1,0 1,0 1,0 1,0 1,0 1,0 1,0 1,0 1,0 1,0 1,0 1,0 1,0 1,0 1,0 1,0 1,0 1,0 1,0 1,0 1,0 1,0 1,0 1,0 1,0 1,0 1,0 1,0 1,0 1,0 1,0 1,0 1,0 1,0 1,0 1,0 1,8 1,-8 1,0 1,0 1,0 1,0 1,0 1,0 1,8 1,-8 1,0 1,0 1,0 1,0 1,0 1,0 1,0 1,0 1,0 1,0 1,0 1,0 1,0 1,0 1,0 1,0 1,0 1,0 1,0 1,0 1,0 1,8 1,-8 1,0 1,0 1,0 1,0 1,2 1,1 1,2 1,1 1,2 1,2 1,1 1,2 1,1 1,2 1,2 1,1 1,2 1,1 1,2 1,-24 1,0 1,0 1,0 1,0 1,0 1,0 1,0 1,0 1,0 1,0 1,0 1,0 1,0 1,0 1,0 1,0 1,0 1,0 1,0 1,0 1,0 1,0 1,0 1,0 1,0 1,0 1,0 1,0 1,0 1,0 1,0 1,0 1,0 1,0 1,0 1,0 1,0 1,0 1,0 1,0 1,0 1,0 1,0 1,0 1,0 1,0 1,0 1,0 1,0 1,0 1,0 1,0 1,0 1,0 1,0 1,0 1,0 1,0 1,0 1,0 1,0 1,0 1,0 1,0 1,0 1,0 1,0 1,0 1,0 1,0 1,0 1,0 1,0 1,0 1,0 1,0 1,0 1,0 1,0 1,0 1,0 1,0 1,0 1,0 1,0 1,0 1,0 1,0 1,0 1,0 1,0 1,0 1,0 1,0 1,0 1,0 1,0 1,0 1,0 1,0 1,0 1,0 1,0 1,0 1,0 1,0 1,0 1,0 1,0 1,0 1,0 1,0 1,0 1,0 1,0 1,0 1,0 1,0 1,0 1,0 1,0 1,0 1,0 1,0 1,0 1,0 1,0 1,0 1,0 1,0 1,0 1,0 1,0 1,0 1,0 1,0 1,0 1,0 1,0 1,0 1,0 1,0 1,0 1,0 1,0 1,0 1,0 1,0 1,0 1,0 1,0 1,0 1,0 1,0 1,0 1,0 1,0 1,0 1,0 1,0 1,0 1,0 1,0 1,0 1,0 1,0 1,0 1,0 1,0 1,0 1,0 1,0 1,0 1,0 1,0 1,0 1,0 1,0 1,0 1,0 1,0 1,0 1,0 1,0 1,0 1,0 1,0 1,0 1,0 1,0 1,0 1,0 1,0 1,0 1,0 1,0 1,0 1,0 1,0 1,0 1,0 1,0 1,0 1,0 1,0 1,0 1,0 1,0 1,0 1,0 1,0 1,0 1,0 1,0 1,0 1,0 1,0 1,0 1,0 1,0 1,0 1,0 1,0 1,0 1,0 1,0 1,0 1,0 1,0 1,0 1,0 1,0 1,0 1,0 1,0 1,0 1,0 1,0 1,0 1,0 1,0 1,0 1,0 1,0 1,0 1,0 1,0 1,0 1,0 1,0 1,0 1,0 1,0 1,0 1,0 1,0 1,0 1,0 0,52 -1,0 -1,0 -1,0 -1,0 -1,0 -1,0 -1,0 -1,0 -1,0 -1,0 -1,0 -1,0 -1,0 -1,0 -1,0 -1,0 -1,0 -1,0 -1,0 -1,0 -1,0 -1,0 -1,0 -1,0 -1,0 -1,0 -1,0 -1,0 -1,0 -1,0 -1,0 -1,0 -1,0 -1,0 -1,0 -1,0 -1,0 -1,0 -1,0 -1,0 -1,0 -1,0 -1,0 -1,0 -1,0 -1,0 -1,0 -1,0 -1,0 -1,0 -1,0 -1,0 -1,0 -1,0 -1,0 -1,0 -1,0 -1,0 -1,0 -1,0 -1,0 -1,0 -1,0 -1,0 -1,0 -1,0 -1,0 -1,0 -1,0 -1,0 -1,0 -1,0 -1,0 -1,0 -1,0 -1,0 -1,0 -1,0 -1,0 -1,0 -1,0 -1,0 -1,0 -1,0 -1,0 -1,0 -1,0 -1,0 -1,0 -1,0 -1,0 -1,0 -1,0 -1,0 -1,0 -1,0 -1,0 -1,0 -1,0 -1,0 -1,0 -1,0 -1,0 -1,0 -1,0 -1,0 -1,0 -1,0 -1,0 -1,0 -1,0 -1,0 -1,0 -1,0 -1,0 -1,0 -1,0 -1,0 -1,0 -1,0 -1,0 -1,0 -1,0 -1,0 -1,0 -1,0 -1,0 -1,0 -1,0 -1,0 -1,0 -1,0 -1,0 -1,0 -1,0 -1,0 -1,0 -1,0 -1,0 -1,0 -1,0 -1,0 -1,0 -1,0 -1,0 -1,0 -1,0 -1,0 -1,0 -1,0 -1,0 -1,0 -1,0 -1,0 -1,0 -1,0 -1,0 -1,0 -1,0 -1,0 -1,0 -1,0 -1,0 -1,0 -1,0 -1,0 -1,0 -1,0 -1,0 -1,0 -1,0 -1,0 -1,0 -1,0 -1,0 -1,0 -1,0 -1,0 -1,0 -1,0 -1,0 -1,0 -1,0 -1,0 -1,0 -1,0 -1,0 -1,0 -1,0 -1,0 -1,0 -1,0 -1,0 -1,0 -1,0 -1,0 -1,0 -1,0 -1,0 -1,0 -1,0 -1,0 -1,0 -1,0 -1,0 -1,0 -1,0 -1,0 -1,0 -1,0 -1,0 -1,0 -1,0 -1,0 -1,0 -1,0 -1,0 -1,0 -1,0 -1,0 -1,0 -1,0 -1,0 -1,0 -1,0 -1,0 -1,0 -1,0 -1,0 -1,0 -1,0 -1,0 -1,0 -1,0 -1,0 -1,0 -1,0 -1,0 -1,0 -1,0 -1,0 -1,0 -1,0 -1,0 -1,0 -1,0 -1,0 -1,0 -1,0 -1,0 -1,0 -1,0 -1,0 -1,0 -1,0 -1,0 -1,0 -1,0 -1,-24 -1,2 -1,1 -1,2 -1,1 -1,2 -1,2 -1,1 -1,2 -1,1 -1,2 -1,2 -1,1 -1,2 -1,1 -1,2 -1,0 -1,0 -1,0 -1,0 -1,-8 -1,8 -1,0 -1,0 -1,0 -1,0 -1,0 -1,0 -1,0 -1,0 -1,0 -1,0 -1,0 -1,0 -1,0 -1,0 -1,0 -1,0 -1,0 -1,0 -1,0 -1,0 -1,0 -1,-8 -1,8 -1,0 -1,0 -1,0 -1,0 -1,0 -1,0 -1,-8 -1,8 -1,0 -1,0 -1,0 -1,0 -1,0 -1,0 -1,0 -1,0 -1,0 -1,0 -1,0 -1,0 -1,0 -1,0 -1,0 -1,0 -1,0 -1,0 -1,0 -1,0 -1,0 -1,0 -1,0 -1,0 -1,0 -1,0 -1,0 -1,0 -1,0 -1,0 -1,0 -1,0 -1,0 -1,0 -1,0 -1,0 -1,0 -1,0 -1,0 -1,0 -1,0 -1,0 -1,0 -1,0 -1,0 -1,0 -1,0 -1,-8 -1,8 -1,0 -1,0 -1,0 -1,0 -1,0 -1,0 -1,0 -1,0 -1,0 -1,0 -1,0 -1,0 -1,0 -1,0z" fill="#d4c2ef" stroke="#111" stroke-width="1"/><path d="M702 732.5H1077" stroke="#111"/><path d="M702,827l1,-4 1,0 1,-1 1,2 1,-1 1,2 1,-2 1,0 1,0 1,3 1,-2 1,0 1,1 1,0 1,1 1,-1 1,4 1,-3 1,2 1,-1 1,0 1,0 1,-1 1,0 1,0 1,0 1,-3 1,2 1,-1 1,0 1,-1 1,0 1,-4 1,2 1,3 1,-3 1,0 1,2 1,-5 1,7 1,-2 1,-3 1,4 1,-1 1,0 1,-2 1,0 1,1 1,0 1,0 1,2 1,-1 1,3 1,-1 1,-2 1,0 1,0 1,-3 1,3 1,-1 1,4 1,-4 1,2 1,-2 1,3 1,-1 1,-3 1,0 1,0 1,0 1,0 1,0 1,0 1,0 1,1 1,0 1,0 1,1 1,0 1,1 1,0 1,0 1,1 1,1 1,0 1,1 1,1 1,0 1,1 1,-2 1,2 1,-1 1,0 1,0 1,0 1,-1 1,2 1,0 1,0 1,0 1,1 1,0 1,1 1,0 1,0 1,0 1,0 1,0 1,0 1,0 1,0 1,-16 1,2 1,-1 1,4 1,3 1,-6 1,0 1,1 1,4 1,-7 1,9 1,-5 1,0 1,0 1,0 1,1 1,0 1,5 1,0 1,0 1,-5 1,3 1,-3 1,0 1,0 1,0 1,-1 1,0 1,0 1,3 1,-4 1,3 1,-3 1,-1 1,0 1,0 1,1 1,-2 1,0 1,-1 1,0 1,0 1,0 1,4 1,-5 1,0 1,0 1,0 1,0 1,3 1,-3 1,8 1,-8 1,-1 1,2 1,0 1,2 1,-2 1,4 1,-3 1,0 1,2 1,-5 1,4 1,0 1,3 1,-1 1,-1 1,6 1,-6 1,0 1,4 1,-4 1,2 1,-2 1,-1 1,0 1,0 1,-1 1,0 1,-1 1,-1 1,4 1,-5 1,-1 1,5 1,-4 1,-8 1,8 1,-8 1,2 1,6 1,-7 1,5 1,-6 1,1 1,6 1,3 1,1 1,-4 1,4 1,-6 1,0 1,1 1,1 1,6 1,-2 1,-3 1,3 1,-2 1,0 1,6 1,-7 1,7 1,-6 1,3 1,-5 1,4 1,-4 1,6 1,-7 1,6 1,-6 1,10 1,-8 1,-1 1,0 1,-2 1,3 1,1 1,0 1,1 1,5 1,-4 1,0 1,1 1,7 1,-7 1,2 1,-1 1,3 1,-4 1,3 1,-4 1,1 1,-2 1,-1 1,-1 1,-1 1,7 1,-6 1,1 1,-4 1,-2 1,-1 1,1 1,-1 1,0 1,0 1,-2 1,2 1,9 1,-2 1,3 1,-8 1,5 1,-5 1,1 1,-5 1,13 1,-8 1,4 1,-4 1,-5 1,5 1,-5 1,4 1,-1 1,0 1,-1 1,9 1,-10 1,0 1,0 1,-1 1,0 1,0 1,0 1,0 1,1 1,4 1,-3 1,7 1,1 1,-6 1,1 1,1 1,1 1,1 1,0 1,7 1,-5 1,7 1,-1 1,-4 1,5 1,-7 1,2 1,-1 1,-3 1,2 1,1 1,0 1,-2 1,1 1,-2 1,3 1,-4 1,-1 1,3 1,-2 1,7 1,-7 1,1 1,0 1,3 1,1 1,2 1,-4 1,0 1,8 1,-7 1,0 1,7 1,-1 1,-6 1,-6 1,5 1,0 1,-1 1,6 1,-7 1,-1 1,-1 1,3 1,-3 1,-2 1,-1 1,1 1,-3 1,-1 1,0 1,4 1,-4 1,11 1,-3 1,-7 1,3 1,9 1,-6 1,-5 1,2 1,-1 0,48 -1,-2 -1,3 -1,-6 -1,-3 -1,7 -1,3 -1,-6 -1,-2 -1,9 -1,-3 -1,3 -1,0 -1,-1 -1,-3 -1,1 -1,-2 -1,-1 -1,-2 -1,2 -1,-1 -1,0 -1,-7 -1,5 -1,0 -1,-1 -1,4 -1,-5 -1,-5 -1,-1 -1,6 -1,0 -1,-6 -1,7 -1,0 -1,-3 -1,2 -1,0 -1,3 -1,0 -1,0 -1,-5 -1,5 -1,0 -1,1 -1,-1 -1,-4 -1,4 -1,-2 -1,0 -1,0 -1,-1 -1,1 -1,2 -1,-3 -1,-2 -1,3 -1,-7 -1,4 -1,-2 -1,-2 -1,7 -1,-4 -1,6 -1,0 -1,1 -1,1 -1,1 -1,1 -1,-5 -1,1 -1,6 -1,-3 -1,3 -1,1 -1,1 -1,0 -1,0 -1,-1 -1,1 -1,-1 -1,0 -1,-9 -1,7 -1,0 -1,-1 -1,0 -1,4 -1,-5 -1,5 -1,-5 -1,-3 -1,2 -1,-6 -1,11 -1,-3 -1,-2 -1,-4 -1,6 -1,-7 -1,1 -1,0 -1,8 -1,1 -1,-1 -1,0 -1,0 -1,-1 -1,0 -1,-2 -1,-2 -1,-1 -1,0 -1,-6 -1,7 -1,-2 -1,0 -1,-2 -1,-2 -1,1 -1,-3 -1,3 -1,-4 -1,3 -1,0 -1,1 -1,-6 -1,6 -1,0 -1,0 -1,-3 -1,5 -1,0 -1,1 -1,1 -1,1 -1,0 -1,0 -1,-1 -1,-7 -1,9 -1,-5 -1,5 -1,-6 -1,4 -1,-2 -1,2 -1,-4 -1,2 -1,-4 -1,6 -1,-6 -1,5 -1,0 -1,-1 -1,2 -1,-3 -1,-3 -1,7 -1,0 -1,2 -1,-1 -1,-4 -1,4 -1,-3 -1,1 -1,2 -1,5 -1,1 -1,-7 -1,6 -1,-6 -1,5 -1,2 -1,-7 -1,7 -1,-7 -1,-6 -1,6 -1,-1 -1,-4 -1,2 -1,0 -1,-1 -1,0 -1,-1 -1,0 -1,-1 -1,0 -1,-2 -1,2 -1,-4 -1,4 -1,0 -1,-5 -1,5 -1,-1 -1,-1 -1,3 -1,-1 -1,5 -1,-5 -1,2 -1,-1 -1,-2 -1,4 -1,-1 -1,2 -1,-1 -1,2 -1,-1 -1,-7 -1,6 -1,-2 -1,3 -1,0 -1,0 -1,0 -1,0 -1,-5 -1,4 -1,0 -1,0 -1,-2 -1,1 -1,0 -1,-3 -1,2 -1,0 -1,0 -1,0 -1,-4 -1,2 -1,-2 -1,2 -1,-1 -1,0 -1,0 -1,0 -1,0 -1,0 -1,-3 -1,3 -1,-5 -1,1 -1,-1 -1,5 -1,0 -1,0 -1,0 -1,2 -1,-1 -1,-4 -1,7 -1,-5 -1,2 -1,2 -1,-1 -1,-3 -1,1 -1,4 -1,-1 -1,1 -1,-15 -1,0 -1,0 -1,0 -1,0 -1,0 -1,0 -1,0 -1,0 -1,1 -1,0 -1,1 -1,0 -1,0 -1,0 -1,1 -1,0 -1,0 -1,0 -1,0 -1,-1 -1,2 -1,-1 -1,0 -1,0 -1,1 -1,1 -1,0 -1,1 -1,0 -1,1 -1,0 -1,1 -1,1 -1,-1 -1,2 -1,-1 -1,1 -1,0 -1,0 -1,0 -1,1 -1,-1 -1,0 -1,0 -1,-2 -1,-2 -1,3 -1,-2 -1,2 -1,-4 -1,4 -1,-1 -1,2 -1,-3 -1,1 -1,-1 -1,0 -1,-2 -1,3 -1,-1 -1,1 -1,1 -1,0 -1,0 -1,1 -1,-2 -1,0 -1,-1 -1,4 -1,-2 -1,-3 -1,6 -1,-3 -1,1 -1,0 -1,-3 -1,3 -1,1 -1,-3 -1,0 -1,0 -1,-1 -1,-1 -1,2 -1,-3 -1,0 -1,-1 -1,0 -1,0 -1,0 -1,0 -1,-1 -1,2 -1,-2 -1,3 -1,-1 -1,1 -1,-1 -1,2 -1,0 -1,-1 -1,2 -1,0 -1,0 -1,-2 -1,2 -1,-1 -1,2 -1,-1 -1,0 -1,-3z" fill="#d4c2ef" stroke="#111" stroke-width="1"/><path d="M702,899l1,-4 1,2 1,0 1,0 1,-2 1,2 1,0 1,0 1,2 1,-1 1,1 1,-1 1,2 1,0 1,1 1,-1 1,0 1,0 1,0 1,-1 1,2 1,1 1,-1 1,0 1,1 1,-2 1,-1 1,0 1,-1 1,-2 1,2 1,0 1,-2 1,2 1,-3 1,0 1,0 1,0 1,-1 1,3 1,-3 1,4 1,-4 1,0 1,-2 1,5 1,2 1,-2 1,-1 1,4 1,-4 1,-2 1,3 1,0 1,0 1,2 1,-2 1,0 1,0 1,0 1,-1 1,0 1,0 1,0 1,1 1,-1 1,2 1,-3 1,1 1,-1 1,0 1,-3 1,3 1,1 1,3 1,-2 1,-1 1,0 1,1 1,4 1,0 1,-1 1,-2 1,0 1,2 1,-1 1,4 1,-2 1,-1 1,1 1,1 1,0 1,0 1,1 1,-1 1,0 1,1 1,-1 1,1 1,1 1,0 1,-1 1,2 1,0 1,0 1,0 1,0 1,0 1,0 1,0 1,0 1,-16 1,3 1,-2 1,6 1,-3 1,-1 1,-1 1,0 1,1 1,4 1,-2 1,4 1,-3 1,-2 1,0 1,3 1,-2 1,1 1,-1 1,2 1,-2 1,0 1,5 1,-3 1,-2 1,5 1,-6 1,1 1,-1 1,1 1,-2 1,2 1,-4 1,1 1,0 1,0 1,-4 1,6 1,-3 1,-4 1,3 1,-6 1,6 1,0 1,-1 1,0 1,5 1,-4 1,-1 1,-5 1,5 1,0 1,-3 1,10 1,-7 1,1 1,-1 1,1 1,1 1,0 1,2 1,5 1,-5 1,4 1,-2 1,-2 1,3 1,-5 1,2 1,0 1,0 1,-1 1,4 1,1 1,-4 1,-1 1,0 1,-5 1,4 1,7 1,-8 1,-1 1,-2 1,1 1,3 1,-5 1,3 1,-9 1,10 1,-8 1,4 1,-5 1,-1 1,6 1,-5 1,0 1,0 1,1 1,0 1,2 1,0 1,0 1,1 1,-2 1,11 1,-7 1,1 1,0 1,3 1,0 1,-2 1,0 1,2 1,-3 1,0 1,0 1,-1 1,2 1,-2 1,-1 1,-5 1,5 1,0 1,0 1,0 1,1 1,0 1,1 1,-2 1,-1 1,4 1,1 1,0 1,1 1,5 1,0 1,-4 1,0 1,6 1,-2 1,-7 1,3 1,4 1,-5 1,0 1,-1 1,-6 1,4 1,-5 1,3 1,0 1,-1 1,-1 1,-1 1,0 1,4 1,3 1,-8 1,9 1,-9 1,8 1,1 1,-11 1,12 1,-8 1,1 1,-1 1,6 1,-5 1,2 1,-2 1,6 1,-6 1,6 1,-6 1,9 1,-5 1,-9 1,6 1,-3 1,-1 1,-1 1,10 1,-10 1,7 1,-8 1,9 1,2 1,0 1,-10 1,0 1,8 1,-6 1,11 1,-10 1,1 1,2 1,0 1,-4 1,5 1,5 1,-4 1,7 1,-6 1,3 1,-2 1,0 1,0 1,0 1,-3 1,2 1,-2 1,5 1,1 1,-6 1,3 1,2 1,-6 1,0 1,0 1,0 1,0 1,0 1,7 1,-6 1,0 1,-1 1,2 1,1 1,0 1,0 1,5 1,-4 1,3 1,-3 1,1 1,-2 1,0 1,7 1,-8 1,7 1,-10 1,1 1,-3 1,11 1,-11 1,-1 1,8 1,-9 1,-1 1,0 1,0 1,-1 1,0 1,0 1,0 1,1 1,-1 1,2 1,0 1,3 1,1 1,-3 0,48 -1,-2 -1,0 -1,3 -1,0 -1,2 -1,-2 -1,2 -1,0 -1,0 -1,0 -1,-1 -1,0 -1,0 -1,-1 -1,-8 -1,6 -1,0 -1,-9 -1,9 -1,-2 -1,0 -1,-9 -1,6 -1,-7 -1,6 -1,0 -1,-1 -1,0 -1,-2 -1,2 -1,-4 -1,4 -1,1 -1,0 -1,0 -1,4 -1,-2 -1,0 -1,-5 -1,6 -1,-1 -1,1 -1,0 -1,0 -1,0 -1,-5 -1,1 -1,3 -1,-5 -1,0 -1,5 -1,-3 -1,2 -1,-3 -1,1 -1,0 -1,-1 -1,0 -1,2 -1,-5 -1,6 -1,-5 -1,6 -1,5 -1,-4 -1,1 -1,1 -1,1 -1,-8 -1,9 -1,-5 -1,7 -1,0 -1,-9 -1,0 -1,2 -1,7 -1,-6 -1,6 -1,-9 -1,9 -1,-2 -1,0 -1,-2 -1,5 -1,-9 -1,-4 -1,8 -1,-5 -1,4 -1,-3 -1,4 -1,-2 -1,2 -1,-4 -1,5 -1,-1 -1,2 -1,-8 -1,11 -1,-10 -1,1 -1,7 -1,-9 -1,9 -1,-7 -1,1 -1,5 -1,-2 -1,1 -1,0 -1,-2 -1,0 -1,2 -1,-4 -1,3 -1,-6 -1,1 -1,-1 -1,-5 -1,3 -1,4 -1,-7 -1,-2 -1,5 -1,1 -1,-3 -1,0 -1,4 -1,0 -1,1 -1,1 -1,3 -1,0 -1,-2 -1,1 -1,0 -1,1 -1,0 -1,0 -1,-1 -1,5 -1,-5 -1,0 -1,-2 -1,1 -1,-1 -1,1 -1,0 -1,-2 -1,1 -1,-1 -1,0 -1,0 -1,2 -1,0 -1,1 -1,-7 -1,11 -1,-2 -1,0 -1,1 -1,-1 -1,3 -1,-1 -1,2 -1,0 -1,0 -1,-6 -1,7 -1,-1 -1,-4 -1,3 -1,-7 -1,9 -1,-9 -1,3 -1,-5 -1,2 -1,2 -1,-3 -1,0 -1,-8 -1,6 -1,4 -1,-3 -1,-1 -1,-1 -1,-3 -1,1 -1,3 -1,-1 -1,-1 -1,0 -1,2 -1,-3 -1,2 -1,-1 -1,-3 -1,4 -1,-5 -1,5 -1,2 -1,0 -1,1 -1,1 -1,-1 -1,1 -1,-6 -1,8 -1,-2 -1,0 -1,3 -1,-3 -1,-1 -1,-4 -1,5 -1,0 -1,-1 -1,-1 -1,6 -1,-5 -1,2 -1,-3 -1,-3 -1,5 -1,-3 -1,0 -1,-1 -1,2 -1,-4 -1,1 -1,-1 -1,1 -1,-1 -1,0 -1,-4 -1,4 -1,-2 -1,-2 -1,4 -1,0 -1,-2 -1,1 -1,0 -1,1 -1,-2 -1,3 -1,0 -1,-2 -1,-2 -1,3 -1,-2 -1,4 -1,0 -1,1 -1,-1 -1,-1 -1,-2 -1,6 -1,-3 -1,3 -1,-16 -1,0 -1,0 -1,0 -1,0 -1,0 -1,0 -1,0 -1,0 -1,2 -1,-1 -1,0 -1,1 -1,1 -1,-1 -1,1 -1,0 -1,-1 -1,1 -1,0 -1,0 -1,1 -1,1 -1,-1 -1,-2 -1,3 -1,0 -1,2 -1,0 -1,-2 -1,-1 -1,1 -1,3 -1,1 -1,0 -1,-1 -1,-1 -1,2 -1,1 -1,3 -1,-3 -1,0 -1,-1 -1,2 -1,-3 -1,1 -1,-1 -1,1 -1,0 -1,0 -1,-1 -1,0 -1,0 -1,0 -1,0 -1,-2 -1,2 -1,0 -1,0 -1,2 -1,-1 -1,-3 -1,3 -1,0 -1,-2 -1,1 -1,4 -1,-1 -1,0 -1,-4 -1,4 -1,-3 -1,3 -1,-1 -1,0 -1,0 -1,-1 -1,-1 -1,1 -1,-2 -1,0 -1,2 -1,-3 -1,0 -1,0 -1,-1 -1,-2 -1,1 -1,0 -1,0 -1,0 -1,1 -1,0 -1,0 -1,0 -1,0 -1,-1 -1,1 -1,0 -1,2 -1,0 -1,1 -1,-2 -1,1 -1,1 -1,1 -1,1 -1,-2 -1,0 -1,0 -1,1 -1,-3z" fill="#d4c2ef" stroke="#111" stroke-width="1"/><path d="M438,979l1,0 1,0 1,0 1,0 1,0 1,0 1,0 1,-1 1,1 1,-2 1,0 1,1 1,0 1,0 1,1 1,0 1,0 1,0 1,0 1,0 1,0 1,0 1,0 1,0 1,0 1,0 1,0 1,-1 1,-1 1,-1 1,1 1,0 1,0 1,1 1,0 1,0 1,1 1,0 1,0 1,0 1,0 1,0 1,0 1,0 1,0 1,0 1,0 1,0 1,0 1,-1 1,-1 1,-5 1,2 1,0 1,-1 1,1 1,1 1,0 1,2 1,-1 1,1 1,0 1,0 1,1 1,0 1,1 1,-1 1,-1 1,-2 1,1 1,0 1,1 1,-1 1,-1 1,2 1,0 1,0 1,-1 1,0 1,0 1,0 1,-1 1,1 1,0 1,1 1,-1 1,0 1,0 1,0 1,0 1,0 1,0 1,1 1,-1 1,-5 1,1 1,4 1,-1 1,0 1,-1 1,2 1,0 1,-1 1,1 1,-1 1,2 1,-1 1,-1 1,1 1,0 1,0 1,-2 1,0 1,1 1,1 1,-1 1,0 1,1 1,0 1,0 1,0 1,0 1,0 1,1 1,0 1,0 1,0 1,-1 1,1 1,0 1,-1 1,0 1,1 1,0 1,-1 1,1 1,-1 1,-4 1,-6 1,-3 1,1 1,7 1,-2 1,-3 1,-2 1,4 1,2 1,0 1,-1 1,1 1,0 1,1 1,0 1,1 1,0 1,1 1,0 1,2 1,1 1,-2 1,-1 1,2 1,-1 1,-3 1,1 1,0 1,1 1,0 1,1 1,3 1,-1 1,1 1,-1 1,0 1,0 1,0 1,-5 1,-5 1,-3 1,6 1,-5 1,3 1,0 1,1 1,1 1,-3 1,4 1,1 1,1 1,2 1,1 1,-3 1,2 1,1 1,-1 1,-1 1,4 1,-1 1,0 1,-1 1,-4 1,3 1,-4 1,0 1,1 1,0 1,1 1,0 1,1 1,0 1,3 1,-2 1,3 1,-1 1,-1 1,2 1,-1 1,0 1,1 1,-1 1,0 1,1 1,-1 1,0 1,0 1,-2 1,-2 1,3 1,-2 1,0 1,1 1,0 1,2 1,-1 1,1 1,-1 1,1 1,-2 1,3 1,0 1,-1 1,0 1,0 1,-1 1,-2 1,1 1,-3 1,1 1,1 1,-2 1,3 1,2 1,-1 1,1 1,0 1,1 1,-1 1,1 1,0 1,0 1,-1 1,0 1,1 1,-6 1,1 1,-1 1,3 1,-3 1,3 1,-3 1,0 1,0 1,0 1,1 1,-2 1,2 1,3 1,-2 1,0 1,1 1,-2 1,2 1,0 1,1 1,2 1,-2 1,-1 1,0 1,1 1,-1 1,-1 1,0 1,-1 1,0 1,-1 1,0 1,-1 1,0 1,3 1,-7 1,3 1,3 1,-4 1,0 1,4 1,-3 1,1 1,-2 1,4 1,0 1,-3 1,0 1,2 1,0 1,2 1,-2 1,0 1,0 1,0 1,4 1,-4 1,3 1,0 1,-1 1,-3 1,0 1,4 1,-4 1,2 1,-3 1,3 1,-3 1,0 1,0 1,0 1,0 1,0 1,0 1,0 1,1 1,4 1,-3 1,1 1,3 1,0 1,-2 1,0 1,1 1,0 1,0 1,1 1,0 1,0 1,0 1,1 1,0 1,0 1,0 1,0 1,0 1,1 1,0 1,0 1,0 1,1 1,0 1,0 1,1 1,0 1,0 1,0 1,0 1,0 1,0 1,0 1,-15 1,-6 1,11 1,0 1,-6 1,2 1,0 1,0 1,4 1,-3 1,0 1,6 1,-5 1,0 1,2 1,0 1,-1 1,0 1,2 1,-2 1,0 1,3 1,-1 1,-2 1,0 1,0 1,-1 1,6 1,-5 1,-1 1,-1 1,0 1,0 1,-1 1,2 1,-2 1,-1 1,3 1,-3 1,-3 1,-1 1,6 1,1 1,-4 1,0 1,-1 1,0 1,1 1,0 1,4 1,-5 1,-3 1,9 1,-3 1,-2 1,2 1,-2 1,-1 1,4 1,4 1,-6 1,1 1,-3 1,3 1,6 1,-5 1,3 1,-3 1,0 1,4 1,-6 1,2 1,-5 1,5 1,1 1,-2 1,3 1,-3 1,-1 1,0 1,-6 1,4 1,-1 1,1 1,6 1,-9 1,-1 1,3 1,3 1,-7 1,-2 1,-1 1,0 1,0 1,-1 1,5 1,-4 1,-1 1,13 1,-10 1,3 1,-1 1,-5 1,6 1,7 1,2 1,-7 1,0 1,7 1,-6 1,0 1,-4 1,3 1,0 1,1 1,6 1,-8 1,0 1,0 1,-3 1,5 1,-3 1,0 1,6 1,-2 1,-3 1,-6 1,7 1,-3 1,7 1,5 1,-9 1,7 1,-4 1,0 1,1 1,0 1,0 1,5 1,-7 1,2 1,0 1,0 1,0 1,4 1,-11 1,4 1,0 1,3 1,-6 1,0 1,-1 1,1 1,-3 1,0 1,7 1,-8 1,9 1,-9 1,0 1,0 1,11 1,-6 1,-4 1,1 1,-4 1,14 1,-9 1,0 1,6 1,2 1,2 1,-10 1,0 1,5 1,-10 1,4 1,-1 1,0 1,-1 1,10 1,1 1,-8 1,3 1,-7 1,11 1,0 1,-12 1,0 1,1 1,0 1,1 1,3 1,-2 1,6 1,0 1,3 1,-5 1,1 1,0 1,-2 1,4 1,1 1,-1 1,1 1,0 1,2 1,-5 1,3 1,4 1,-9 1,5 1,-2 1,0 1,2 1,-2 1,-1 1,-3 1,2 1,0 1,0 1,-5 1,5 1,-1 1,2 1,0 1,1 1,0 1,1 1,0 1,0 1,3 1,2 1,-4 1,0 1,0 1,7 1,-9 1,3 1,-3 1,5 1,-6 1,-1 1,6 1,-7 1,6 1,-9 1,0 1,-1 1,4 1,-5 1,4 1,-5 1,0 1,0 1,0 1,1 1,0 1,0 1,7 1,-6 1,5 1,-4 0,48 -1,-3 -1,4 -1,-5 -1,6 -1,1 -1,-1 -1,1 -1,0 -1,-1 -1,0 -1,-4 -1,3 -1,-3 -1,1 -1,1 -1,-2 -1,-5 -1,4 -1,-7 -1,6 -1,-1 -1,-5 -1,4 -1,-2 -1,2 -1,-9 -1,7 -1,0 -1,0 -1,-3 -1,1 -1,3 -1,-1 -1,1 -1,0 -1,1 -1,1 -1,0 -1,2 -1,-1 -1,4 -1,-4 -1,0 -1,0 -1,2 -1,-3 -1,-2 -1,-1 -1,1 -1,1 -1,-2 -1,5 -1,-8 -1,3 -1,2 -1,-5 -1,3 -1,0 -1,1 -1,-1 -1,1 -1,3 -1,0 -1,-1 -1,0 -1,-4 -1,4 -1,-1 -1,5 -1,-1 -1,3 -1,0 -1,1 -1,1 -1,0 -1,-10 -1,0 -1,9 -1,-6 -1,3 -1,-7 -1,0 -1,9 -1,-1 -1,-1 -1,0 -1,4 -1,-10 -1,4 -1,2 -1,-11 -1,3 -1,2 -1,4 -1,1 -1,-8 -1,13 -1,-4 -1,1 -1,-3 -1,-5 -1,9 -1,0 -1,0 -1,-8 -1,8 -1,-8 -1,7 -1,0 -1,-3 -1,0 -1,-1 -1,-1 -1,-4 -1,3 -1,0 -1,4 -1,-11 -1,5 -1,-1 -1,0 -1,-1 -1,2 -1,-6 -1,4 -1,0 -1,1 -1,1 -1,0 -1,-4 -1,7 -1,-7 -1,3 -1,6 -1,-2 -1,5 -1,-4 -1,-2 -1,-2 -1,5 -1,-1 -1,-2 -1,4 -1,-2 -1,-1 -1,1 -1,-7 -1,5 -1,0 -1,1 -1,2 -1,-3 -1,0 -1,-5 -1,5 -1,0 -1,-5 -1,2 -1,6 -1,5 -1,-4 -1,-1 -1,3 -1,-9 -1,12 -1,-1 -1,-4 -1,5 -1,-1 -1,-1 -1,1 -1,-1 -1,-2 -1,-6 -1,4 -1,0 -1,0 -1,-8 -1,4 -1,1 -1,-1 -1,4 -1,-5 -1,0 -1,-1 -1,-3 -1,2 -1,-1 -1,1 -1,4 -1,-5 -1,2 -1,-4 -1,3 -1,-1 -1,-1 -1,2 -1,-5 -1,6 -1,2 -1,-2 -1,1 -1,-6 -1,5 -1,3 -1,-2 -1,-1 -1,2 -1,-2 -1,-2 -1,8 -1,-3 -1,-4 -1,3 -1,0 -1,0 -1,1 -1,-1 -1,0 -1,-4 -1,2 -1,5 -1,-2 -1,-2 -1,-2 -1,2 -1,-1 -1,-2 -1,2 -1,-1 -1,0 -1,0 -1,-1 -1,0 -1,-6 -1,6 -1,-1 -1,0 -1,0 -1,-1 -1,-2 -1,2 -1,1 -1,-2 -1,2 -1,0 -1,-1 -1,0 -1,2 -1,-1 -1,-3 -1,5 -1,0 -1,-3 -1,4 -1,0 -1,0 -1,1 -1,-3 -1,-2 -1,10 -1,-6 -1,-14 -1,0 -1,0 -1,0 -1,0 -1,0 -1,0 -1,0 -1,1 -1,0 -1,0 -1,1 -1,0 -1,0 -1,0 -1,0 -1,1 -1,0 -1,0 -1,0 -1,0 -1,1 -1,0 -1,0 -1,0 -1,1 -1,0 -1,0 -1,1 -1,1 -1,-3 -1,1 -1,3 -1,0 -1,-2 -1,3 -1,1 -1,0 -1,0 -1,0 -1,0 -1,-1 -1,1 -1,0 -1,-2 -1,2 -1,-3 -1,3 -1,-4 -1,3 -1,0 -1,-3 -1,-1 -1,0 -1,3 -1,-4 -1,4 -1,0 -1,0 -1,0 -1,-2 -1,2 -1,0 -1,2 -1,0 -1,-3 -1,-1 -1,5 -1,-2 -1,1 -1,-2 -1,3 -1,0 -1,-4 -1,3 -1,2 -1,-6 -1,3 -1,0 -1,-1 -1,0 -1,-1 -1,0 -1,-1 -1,0 -1,-1 -1,-1 -1,1 -1,0 -1,0 -1,-2 -1,1 -1,1 -1,-1 -1,3 -1,-2 -1,0 -1,1 -1,-2 -1,3 -1,2 -1,-2 -1,1 -1,0 -1,0 -1,0 -1,-3 -1,3 -1,-3 -1,3 -1,-1 -1,1 -1,-6 -1,1 -1,0 -1,-1 -1,0 -1,0 -1,1 -1,-1 -1,1 -1,0 -1,1 -1,-1 -1,2 -1,2 -1,-1 -1,1 -1,1 -1,-2 -1,1 -1,-3 -1,-1 -1,0 -1,0 -1,0 -1,-1 -1,3 -1,-2 -1,1 -1,-1 -1,1 -1,-1 -1,2 -1,0 -1,1 -1,0 -1,-1 -1,1 -1,-1 -1,-2 -1,0 -1,0 -1,-1 -1,1 -1,0 -1,-1 -1,1 -1,0 -1,-1 -1,2 -1,-1 -1,0 -1,2 -1,-2 -1,2 -1,1 -1,1 -1,0 -1,1 -1,0 -1,1 -1,0 -1,-4 -1,3 -1,-4 -1,-1 -1,0 -1,-1 -1,4 -1,-2 -1,0 -1,2 -1,1 -1,-3 -1,1 -1,3 -1,0 -1,1 -1,3 -1,-2 -1,1 -1,1 -1,0 -1,3 -1,-5 -1,6 -1,-3 -1,-5 -1,-5 -1,0 -1,0 -1,0 -1,0 -1,0 -1,0 -1,2 -1,1 -1,0 -1,1 -1,0 -1,1 -1,-3 -1,0 -1,1 -1,-1 -1,-2 -1,1 -1,2 -1,0 -1,1 -1,0 -1,1 -1,0 -1,0 -1,0 -1,2 -1,0 -1,-1 -1,2 -1,3 -1,-2 -1,-1 -1,-2 -1,6 -1,0 -1,-2 -1,-6 -1,-4 -1,0 -1,0 -1,-1 -1,0 -1,1 -1,0 -1,-1 -1,0 -1,1 -1,-1 -1,0 -1,0 -1,0 -1,1 -1,0 -1,0 -1,0 -1,0 -1,0 -1,1 -1,0 -1,-1 -1,1 -1,1 -1,0 -1,-2 -1,0 -1,0 -1,1 -1,-1 -1,0 -1,1 -1,-1 -1,1 -1,-1 -1,0 -1,2 -1,-1 -1,0 -1,0 -1,2 -1,2 -1,-4 -1,-2 -1,1 -1,0 -1,0 -1,0 -1,0 -1,0 -1,0 -1,-1 -1,1 -1,0 -1,1 -1,-1 -1,0 -1,0 -1,0 -1,-1 -1,0 -1,0 -1,2 -1,-1 -1,-1 -1,1 -1,0 -1,1 -1,-2 -1,-1 -1,0 -1,0 -1,0 -1,1 -1,0 -1,0 -1,1 -1,0 -1,1 -1,0 -1,1 -1,1 -1,0 -1,-1 -1,2 -1,-5 -1,-1 -1,-1 -1,0 -1,0 -1,0 -1,0 -1,0 -1,0 -1,0 -1,0 -1,0 -1,0 -1,0 -1,0 -1,1 -1,0 -1,0 -1,1 -1,0 -1,0 -1,1 -1,-1 -1,-1 -1,-1 -1,0 -1,0 -1,0 -1,0 -1,0 -1,0 -1,0 -1,0 -1,0 -1,0 -1,0 -1,0 -1,1 -1,0 -1,0 -1,1 -1,0 -1,-1 -1,-1 -1,0 -1,0 -1,0 -1,0 -1,0 -1,0 -1,0 -1,0z" fill="#d4c2ef" stroke="#111" stroke-width="1"/><path d="M438,1053l1,0 1,0 1,0 1,0 1,0 1,0 1,0 1,0 1,-1 1,-1 1,0 1,1 1,0 1,0 1,1 1,0 1,0 1,0 1,0 1,0 1,0 1,0 1,0 1,0 1,0 1,0 1,0 1,-2 1,-1 1,1 1,1 1,-1 1,-1 1,2 1,0 1,0 1,0 1,1 1,0 1,0 1,0 1,0 1,0 1,0 1,0 1,0 1,0 1,0 1,0 1,-1 1,-1 1,-5 1,2 1,-4 1,3 1,1 1,-1 1,4 1,-1 1,0 1,1 1,1 1,-1 1,1 1,0 1,0 1,0 1,-2 1,-2 1,2 1,0 1,0 1,0 1,-1 1,2 1,-1 1,0 1,0 1,0 1,0 1,0 1,1 1,-1 1,1 1,-1 1,1 1,-2 1,1 1,1 1,-2 1,1 1,0 1,-1 1,-3 1,1 1,-1 1,1 1,1 1,2 1,0 1,0 1,1 1,-1 1,-1 1,1 1,0 1,-1 1,2 1,-1 1,1 1,-2 1,-2 1,3 1,-2 1,1 1,0 1,0 1,0 1,0 1,2 1,0 1,0 1,-1 1,0 1,1 1,-1 1,0 1,-1 1,1 1,0 1,-1 1,1 1,0 1,0 1,1 1,-1 1,-9 1,-3 1,-8 1,7 1,-4 1,2 1,-3 1,4 1,-3 1,11 1,-3 1,3 1,-4 1,1 1,1 1,1 1,0 1,1 1,0 1,1 1,0 1,1 1,3 1,-2 1,0 1,1 1,-1 1,-5 1,-1 1,1 1,0 1,1 1,0 1,1 1,2 1,1 1,-1 1,3 1,-2 1,2 1,-1 1,3 1,-3 1,0 1,-8 1,-9 1,-4 1,4 1,-4 1,6 1,-1 1,2 1,1 1,6 1,-4 1,1 1,2 1,3 1,-3 1,4 1,-2 1,0 1,2 1,2 1,-2 1,4 1,-3 1,3 1,-2 1,1 1,0 1,-2 1,-3 1,1 1,1 1,-1 1,3 1,1 1,0 1,0 1,-1 1,2 1,2 1,-1 1,0 1,1 1,0 1,0 1,1 1,-5 1,-1 1,3 1,1 1,-2 1,2 1,-1 1,0 1,0 1,1 1,2 1,-2 1,1 1,0 1,0 1,0 1,0 1,0 1,1 1,-1 1,1 1,-6 1,0 1,1 1,-3 1,4 1,0 1,0 1,3 1,-1 1,1 1,0 1,-1 1,0 1,1 1,0 1,0 1,0 1,-5 1,-2 1,3 1,-3 1,2 1,4 1,-6 1,4 1,1 1,-1 1,-1 1,0 1,3 1,1 1,-3 1,0 1,1 1,0 1,1 1,0 1,0 1,-1 1,2 1,-2 1,2 1,0 1,-2 1,-1 1,0 1,-1 1,0 1,-1 1,0 1,-1 1,-1 1,0 1,-2 1,5 1,-3 1,-1 1,4 1,-4 1,0 1,3 1,-3 1,1 1,-4 1,4 1,5 1,-4 1,4 1,-1 1,-2 1,0 1,0 1,0 1,-2 1,2 1,0 1,2 1,-2 1,-1 1,0 1,0 1,-1 1,0 1,0 1,0 1,1 1,3 1,-2 1,2 1,-2 1,-2 1,3 1,-3 1,1 1,0 1,5 1,-4 1,-2 1,3 1,0 1,2 1,-1 1,1 1,0 1,3 1,-2 1,0 1,0 1,1 1,0 1,0 1,1 1,-2 1,3 1,-1 1,-1 1,1 1,1 1,0 1,0 1,0 1,1 1,0 1,0 1,0 1,0 1,0 1,0 1,0 1,-14 1,-2 1,1 1,0 1,0 1,-3 1,9 1,-5 1,1 1,0 1,0 1,1 1,0 1,0 1,1 1,0 1,-3 1,3 1,0 1,-1 1,3 1,-2 1,4 1,1 1,-3 1,1 1,-3 1,3 1,-4 1,0 1,3 1,-4 1,6 1,-5 1,-3 1,1 1,-1 1,0 1,-5 1,4 1,6 1,-6 1,0 1,2 1,-3 1,4 1,-4 1,-5 1,0 1,11 1,1 1,-7 1,0 1,0 1,1 1,-1 1,8 1,-10 1,-2 1,6 1,-3 1,4 1,5 1,-1 1,-4 1,1 1,-3 1,3 1,0 1,0 1,0 1,0 1,3 1,-2 1,-1 1,-3 1,8 1,-9 1,2 1,-4 1,10 1,-8 1,-1 1,2 1,-3 1,-1 1,-1 1,-1 1,-4 1,2 1,0 1,3 1,-4 1,0 1,0 1,0 1,0 1,1 1,0 1,6 1,-8 1,0 1,5 1,1 1,1 1,0 1,1 1,0 1,1 1,0 1,0 1,-6 1,7 1,-2 1,0 1,5 1,-6 1,0 1,8 1,0 1,-9 1,0 1,0 1,0 1,0 1,1 1,0 1,1 1,-5 1,11 1,-5 1,-2 1,3 1,1 1,3 1,0 1,-2 1,-3 1,3 1,4 1,-4 1,0 1,2 1,-3 1,0 1,0 1,3 1,-6 1,0 1,-2 1,0 1,0 1,2 1,-3 1,-2 1,3 1,6 1,-4 1,-8 1,2 1,2 1,-1 1,1 1,8 1,-8 1,9 1,-9 1,2 1,2 1,-3 1,0 1,0 1,0 1,0 1,0 1,-1 1,0 1,-1 1,10 1,-5 1,-6 1,-1 1,6 1,-6 1,2 1,-3 1,0 1,0 1,3 1,1 1,5 1,-7 1,9 1,-11 1,11 1,-4 1,-1 1,0 1,5 1,-3 1,6 1,-4 1,5 1,-5 1,-1 1,2 1,0 1,0 1,0 1,4 1,1 1,-6 1,3 1,-4 1,-1 1,0 1,0 1,7 1,-8 1,0 1,1 1,-1 1,7 1,-6 1,7 1,-8 1,3 1,-1 1,1 1,-4 1,5 1,0 1,0 1,1 1,-1 1,0 1,6 1,-7 1,5 1,-6 1,7 1,-8 1,-1 1,-1 1,1 1,-3 1,-1 1,9 1,-12 1,1 1,7 1,-3 1,-5 1,0 1,0 1,0 1,1 1,0 1,0 1,1 1,0 1,1 1,10 0,28 -1,10 -1,1 -1,-1 -1,2 -1,0 -1,0 -1,-1 -1,2 -1,0 -1,0 -1,-5 -1,-2 -1,5 -1,0 -1,-8 -1,6 -1,-1 -1,-2 -1,1 -1,-2 -1,0 -1,-6 -1,5 -1,-5 -1,4 -1,-6 -1,4 -1,1 -1,-1 -1,0 -1,1 -1,0 -1,5 -1,-4 -1,0 -1,0 -1,3 -1,-6 -1,4 -1,-5 -1,6 -1,1 -1,0 -1,-1 -1,-6 -1,6 -1,0 -1,0 -1,-1 -1,-4 -1,3 -1,-5 -1,1 -1,3 -1,0 -1,0 -1,0 -1,2 -1,-1 -1,-4 -1,4 -1,-3 -1,5 -1,-3 -1,4 -1,1 -1,-1 -1,-4 -1,11 -1,-9 -1,7 -1,-6 -1,4 -1,2 -1,0 -1,2 -1,0 -1,-3 -1,2 -1,-5 -1,5 -1,-1 -1,-6 -1,-3 -1,8 -1,-1 -1,0 -1,-1 -1,0 -1,0 -1,0 -1,0 -1,-1 -1,-2 -1,1 -1,3 -1,-9 -1,8 -1,-7 -1,8 -1,1 -1,-1 -1,2 -1,2 -1,-8 -1,-3 -1,5 -1,3 -1,-2 -1,-2 -1,1 -1,0 -1,-1 -1,0 -1,-1 -1,-5 -1,2 -1,0 -1,0 -1,-3 -1,3 -1,-2 -1,-3 -1,4 -1,3 -1,-4 -1,-1 -1,0 -1,2 -1,1 -1,4 -1,-2 -1,-4 -1,9 -1,-4 -1,1 -1,0 -1,0 -1,0 -1,0 -1,0 -1,-1 -1,-7 -1,3 -1,5 -1,-1 -1,-4 -1,3 -1,0 -1,-1 -1,5 -1,-4 -1,1 -1,0 -1,0 -1,0 -1,0 -1,1 -1,1 -1,-1 -1,7 -1,-2 -1,-5 -1,5 -1,0 -1,2 -1,0 -1,-2 -1,1 -1,0 -1,-2 -1,1 -1,-2 -1,4 -1,-4 -1,-1 -1,-1 -1,-1 -1,-3 -1,2 -1,-1 -1,-7 -1,8 -1,-3 -1,1 -1,-7 -1,7 -1,-3 -1,-1 -1,-2 -1,3 -1,0 -1,-1 -1,0 -1,1 -1,2 -1,-2 -1,0 -1,-4 -1,1 -1,4 -1,3 -1,-2 -1,5 -1,-1 -1,-9 -1,7 -1,0 -1,-1 -1,1 -1,0 -1,-6 -1,1 -1,9 -1,0 -1,-4 -1,-3 -1,3 -1,-2 -1,1 -1,-1 -1,-4 -1,5 -1,3 -1,-4 -1,0 -1,0 -1,-1 -1,-2 -1,-4 -1,5 -1,-3 -1,2 -1,0 -1,-4 -1,3 -1,-3 -1,1 -1,-3 -1,1 -1,5 -1,-3 -1,3 -1,-1 -1,0 -1,2 -1,-2 -1,0 -1,1 -1,0 -1,0 -1,1 -1,0 -1,0 -1,0 -1,-3 -1,7 -1,-2 -1,0 -1,-1 -1,2 -1,-2 -1,-14 -1,0 -1,0 -1,0 -1,0 -1,0 -1,0 -1,0 -1,0 -1,1 -1,0 -1,0 -1,1 -1,1 -1,-1 -1,-1 -1,2 -1,-1 -1,1 -1,0 -1,0 -1,1 -1,0 -1,0 -1,-1 -1,2 -1,0 -1,1 -1,-1 -1,1 -1,1 -1,3 -1,-2 -1,-3 -1,4 -1,0 -1,0 -1,-2 -1,3 -1,-2 -1,-2 -1,2 -1,-2 -1,3 -1,1 -1,0 -1,0 -1,0 -1,-1 -1,0 -1,0 -1,-1 -1,-2 -1,2 -1,0 -1,1 -1,-1 -1,0 -1,1 -1,-1 -1,-2 -1,0 -1,3 -1,-3 -1,4 -1,3 -1,-3 -1,1 -1,-2 -1,2 -1,0 -1,-3 -1,3 -1,-1 -1,-2 -1,3 -1,-1 -1,0 -1,-1 -1,-1 -1,0 -1,-1 -1,0 -1,-1 -1,0 -1,-1 -1,-2 -1,1 -1,1 -1,-2 -1,2 -1,-1 -1,0 -1,0 -1,1 -1,0 -1,1 -1,0 -1,-2 -1,0 -1,3 -1,0 -1,-1 -1,0 -1,0 -1,4 -1,-5 -1,3 -1,1 -1,-2 -1,2 -1,-1 -1,-5 -1,0 -1,0 -1,0 -1,1 -1,0 -1,-1 -1,0 -1,1 -1,-1 -1,2 -1,1 -1,0 -1,3 -1,-2 -1,1 -1,0 -1,-6 -1,1 -1,-1 -1,1 -1,0 -1,0 -1,0 -1,0 -1,0 -1,1 -1,-2 -1,1 -1,2 -1,0 -1,0 -1,0 -1,1 -1,-2 -1,1 -1,3 -1,-1 -1,-5 -1,2 -1,-1 -1,0 -1,1 -1,0 -1,-1 -1,2 -1,1 -1,0 -1,0 -1,0 -1,2 -1,2 -1,-1 -1,1 -1,0 -1,-2 -1,-2 -1,0 -1,1 -1,-1 -1,2 -1,-3 -1,3 -1,-1 -1,2 -1,2 -1,0 -1,-1 -1,3 -1,-2 -1,2 -1,2 -1,0 -1,-3 -1,5 -1,2 -1,1 -1,-1 -1,7 -1,-5 -1,5 -1,-4 -1,-10 -1,-7 -1,0 -1,-2 -1,2 -1,-1 -1,1 -1,-1 -1,3 -1,-1 -1,2 -1,1 -1,1 -1,0 -1,0 -1,0 -1,1 -1,0 -1,-5 -1,-1 -1,1 -1,0 -1,-2 -1,3 -1,1 -1,0 -1,1 -1,0 -1,1 -1,0 -1,1 -1,1 -1,1 -1,-4 -1,3 -1,-3 -1,10 -1,-3 -1,4 -1,-3 -1,3 -1,-3 -1,6 -1,-7 -1,-4 -1,-9 -1,-1 -1,1 -1,0 -1,0 -1,1 -1,-1 -1,0 -1,1 -1,-1 -1,0 -1,-1 -1,1 -1,0 -1,0 -1,-1 -1,0 -1,2 -1,0 -1,0 -1,0 -1,0 -1,1 -1,-1 -1,2 -1,-2 -1,-2 -1,1 -1,-1 -1,1 -1,0 -1,0 -1,1 -1,-1 -1,-1 -1,1 -1,0 -1,0 -1,2 -1,1 -1,0 -1,1 -1,-1 -1,-2 -1,-1 -1,0 -1,1 -1,-1 -1,1 -1,0 -1,-2 -1,1 -1,-1 -1,1 -1,-1 -1,1 -1,0 -1,0 -1,0 -1,0 -1,0 -1,-1 -1,2 -1,-1 -1,0 -1,0 -1,0 -1,1 -1,-1 -1,-2 -1,0 -1,0 -1,0 -1,1 -1,-1 -1,1 -1,1 -1,0 -1,-1 -1,4 -1,-1 -1,1 -1,2 -1,-3 -1,2 -1,-4 -1,-2 -1,-1 -1,0 -1,0 -1,0 -1,0 -1,0 -1,0 -1,0 -1,0 -1,0 -1,0 -1,0 -1,1 -1,0 -1,0 -1,1 -1,1 -1,-1 -1,-1 -1,1 -1,1 -1,-1 -1,-2 -1,0 -1,0 -1,0 -1,0 -1,0 -1,0 -1,0 -1,0 -1,0 -1,0 -1,0 -1,0 -1,1 -1,0 -1,0 -1,1 -1,0 -1,-1 -1,-1 -1,0 -1,0 -1,0 -1,0 -1,0 -1,0 -1,0 -1,0z" fill="#d4c2ef" stroke="#111" stroke-width="1"/></svg><div style="left:1067px;top:644.0px;height:14px;line-height:14px;font-size:11px;color:#111;font-weight:normal;font-family:'Liberation Sans', sans-serif;white-space:nowrap;">0.</div><div style="left:1067px;top:718.0px;height:14px;line-height:14px;font-size:11px;color:#111;font-weight:normal;font-family:'Liberation Sans', sans-serif;white-space:nowrap;">0.</div><div style="left:1067px;top:792.0px;height:14px;line-height:14px;font-size:11px;color:#111;font-weight:normal;font-family:'Liberation Sans', sans-serif;white-space:nowrap;">0.</div><div style="left:1067px;top:866.0px;height:14px;line-height:14px;font-size:11px;color:#111;font-weight:normal;font-family:'Liberation Sans', sans-serif;white-space:nowrap;">0.</div><div style="left:1067px;top:940.0px;height:14px;line-height:14px;font-size:11px;color:#111;font-weight:normal;font-family:'Liberation Sans', sans-serif;white-space:nowrap;">0.</div><div style="left:1067px;top:1014.0px;height:14px;line-height:14px;font-size:11px;color:#111;font-weight:normal;font-family:'Liberation Sans', sans-serif;white-space:nowrap;">0.</div><div style="left:442px;top:1014.0px;height:14px;line-height:14px;font-size:11px;color:#111;font-weight:normal;font-family:'Liberation Sans', sans-serif;white-space:nowrap;">0.0dB - Peak -14.1dB</div><div style="left:507px;top:955px;width:1px;height:117px;background:#f0f0f0;"></div><div style="left:236px;top:1073px;width:841px;height:15px;background:#333333;"></div><div style="left:1077px;top:138px;width:15px;height:935px;background:#2e2e2e;"></div><div style="left:1080px;top:139px;width:9px;height:9px;background:#555;border-radius:1px;"></div><div style="left:1080px;top:153px;width:9px;height:830px;background:#545454;border-radius:1px;"></div><div style="left:1080px;top:1061px;width:9px;height:9px;background:#555;border-radius:1px;"></div><div style="left:660px;top:1075px;width:68px;height:9px;background:#555;border-radius:2px;"></div><div style="left:1065px;top:1076px;width:9px;height:9px;background:#555;border-radius:1px;"></div><svg style="position:absolute;left:1079px;top:1077px;" width="9" height="6" viewBox="0 0 9 6"><path d="M1 1h7l-3.5 4z" fill="#111"/></svg><div style="left:1092px;top:95px;width:4px;height:993px;background:#1c1c1c;"></div><div style="left:213px;top:138px;width:489px;height:817px;background:#1e1e1e;box-shadow:0 0 0 1px #111;"></div><div style="left:218px;top:139.5px;height:15px;line-height:15px;font-size:12px;color:#d0d0d0;font-weight:normal;font-family:'Liberation Sans', sans-serif;white-space:nowrap;">Mixer</div><svg style="position:absolute;left:640px;top:141px;" width="60" height="14" viewBox="0 0 60 14"><path d="M2 4.5h8 M2 6.5h8 M2 8.5h8 M2 10.5h8" stroke="#b0b0b0" stroke-width="1"/><path d="M29 8.5h7" stroke="#b0b0b0" stroke-width="1.2"/><path d="M48 3l8 8 M56 3l-8 8" stroke="#b0b0b0" stroke-width="1.2"/></svg><div style="left:215px;top:162px;width:72px;height:87px;background:#262626;"></div><div style="left:215px;top:191px;width:72px;height:29px;background:#1c5151;"></div><div style="left:220px;top:165px;width:62px;height:15px;background:#2c2c2c;border-radius:2px;border:1px solid #1a1a1a;box-sizing:border-box;"></div><div style="left:223px;top:169px;width:6px;height:6px;background:#ee8a55;"></div><div style="left:232px;top:167.5px;height:10px;line-height:10px;font-size:8px;color:#8a8a8a;font-weight:normal;font-family:'Liberation Sans', sans-serif;white-space:nowrap;">Mix Bus</div><div style="left:219px;top:183px;width:64px;height:6px;background:#151515;border-radius:3px;"></div><div style="left:220px;top:184px;width:41px;height:3px;background:#9ed89e;"></div><div style="left:220px;top:194px;width:62px;height:15px;background:#2c2c2c;border-radius:2px;border:1px solid #2a6a6a;box-sizing:border-box;"></div><div style="left:223px;top:198px;width:6px;height:6px;background:#ee8a55;"></div><div style="left:232px;top:196.5px;height:10px;line-height:10px;font-size:8px;color:#8a8a8a;font-weight:normal;font-family:'Liberation Sans', sans-serif;white-space:nowrap;">Mix Bus</div><div style="left:219px;top:212px;width:64px;height:6px;background:#151515;border-radius:3px;"></div><div style="left:220px;top:213px;width:41px;height:3px;background:#9ed89e;"></div><div style="left:220px;top:223px;width:62px;height:15px;background:#2c2c2c;border-radius:2px;border:1px solid #1a1a1a;box-sizing:border-box;"></div><div style="left:223px;top:227px;width:6px;height:6px;background:#ee8a55;"></div><div style="left:232px;top:225.5px;height:10px;line-height:10px;font-size:8px;color:#8a8a8a;font-weight:normal;font-family:'Liberation Sans', sans-serif;white-space:nowrap;">Master</div><div style="left:219px;top:241px;width:64px;height:6px;background:#151515;border-radius:3px;"></div><div style="left:220px;top:242px;width:41px;height:3px;background:#9ed89e;"></div><div style="left:289px;top:162px;width:72px;height:87px;background:#262626;"></div><div style="left:289px;top:191px;width:72px;height:29px;background:#1c5151;"></div><div style="left:294px;top:165px;width:62px;height:15px;background:#2c2c2c;border-radius:2px;border:1px solid #1a1a1a;box-sizing:border-box;"></div><div style="left:297px;top:169px;width:6px;height:6px;background:#ee8a55;"></div><div style="left:306px;top:167.5px;height:10px;line-height:10px;font-size:8px;color:#8a8a8a;font-weight:normal;font-family:'Liberation Sans', sans-serif;white-space:nowrap;">Mix Bus</div><div style="left:293px;top:183px;width:64px;height:6px;background:#151515;border-radius:3px;"></div><div style="left:294px;top:194px;width:62px;height:15px;background:#2c2c2c;border-radius:2px;border:1px solid #2a6a6a;box-sizing:border-box;"></div><div style="left:297px;top:198px;width:6px;height:6px;background:#ee8a55;"></div><div style="left:306px;top:196.5px;height:10px;line-height:10px;font-size:8px;color:#8a8a8a;font-weight:normal;font-family:'Liberation Sans', sans-serif;white-space:nowrap;">Mix Bus</div><div style="left:293px;top:212px;width:64px;height:6px;background:#151515;border-radius:3px;"></div><div style="left:294px;top:223px;width:62px;height:15px;background:#2c2c2c;border-radius:2px;border:1px solid #1a1a1a;box-sizing:border-box;"></div><div style="left:297px;top:227px;width:6px;height:6px;background:#ee8a55;"></div><div style="left:306px;top:225.5px;height:10px;line-height:10px;font-size:8px;color:#8a8a8a;font-weight:normal;font-family:'Liberation Sans', sans-serif;white-space:nowrap;">Master</div><div style="left:293px;top:241px;width:64px;height:6px;background:#151515;border-radius:3px;"></div><div style="left:413px;top:224px;width:30px;height:11px;background:transparent;border-radius:2px;border:1px solid #4a4a4a;box-sizing:border-box;"></div><div style="left:413px;top:224.0px;width:30px;height:11px;line-height:11px;font-size:9px;color:#4a4a4a;font-weight:normal;font-family:'Liberation Sans', sans-serif;white-space:nowrap;text-align:center;overflow:hidden;">MB1</div><div style="left:516px;top:195px;width:30px;height:11px;background:transparent;border-radius:2px;border:1px solid #4a4a4a;box-sizing:border-box;"></div><div style="left:516px;top:195.0px;width:30px;height:11px;line-height:11px;font-size:9px;color:#4a4a4a;font-weight:normal;font-family:'Liberation Sans', sans-serif;white-space:nowrap;text-align:center;overflow:hidden;">MB2</div><div style="left:592px;top:166px;width:30px;height:11px;background:transparent;border-radius:2px;border:1px solid #4a4a4a;box-sizing:border-box;"></div><div style="left:592px;top:166.0px;width:30px;height:11px;line-height:11px;font-size:9px;color:#4a4a4a;font-weight:normal;font-family:'Liberation Sans', sans-serif;white-space:nowrap;text-align:center;overflow:hidden;">MB3</div><div style="left:494px;top:162px;width:1px;height:87px;background:#161616;"></div><div style="left:567px;top:162px;width:2px;height:776px;background:#161616;"></div><div style="left:215px;top:249px;width:72px;height:689px;background:#338552;"></div><div style="left:289px;top:249px;width:72px;height:689px;background:#3b2561;"></div><div style="left:495px;top:249px;width:72px;height:689px;background:#173c3c;"></div><div style="left:494px;top:249px;width:1px;height:689px;background:#151515;"></div><div style="left:361px;top:162px;width:1px;height:776px;background:#151515;"></div><div style="left:641px;top:162px;width:3px;height:776px;background:#161616;"></div><div style="left:219px;top:252px;width:64px;height:66px;background:#131313;border-radius:3px;border:1px solid #0a0a0a;box-sizing:border-box;"></div><svg style="position:absolute;left:219px;top:252px;" width="64" height="66" viewBox="0 0 64 66"><path d="M32.5 3v60 M3 33.5h58" stroke="#2e2e2e" stroke-width="1"/><circle cx="32.5" cy="33.5" r="3" fill="#d8d8d8"/><path d="M63 29l-4 4.5 4 4.5z" fill="#c8c8c8"/></svg><div style="left:293px;top:252px;width:64px;height:66px;background:#131313;border-radius:3px;border:1px solid #0a0a0a;box-sizing:border-box;"></div><svg style="position:absolute;left:293px;top:252px;" width="64" height="66" viewBox="0 0 64 66"><path d="M32.5 3v60 M3 33.5h58" stroke="#2e2e2e" stroke-width="1"/><circle cx="32.5" cy="33.5" r="3" fill="#d8d8d8"/><path d="M63 29l-4 4.5 4 4.5z" fill="#c8c8c8"/></svg><div style="left:219px;top:329px;width:64px;height:72px;background:#388a57;border-radius:3px;border:1px solid #2a6a44;box-sizing:border-box;"></div><div style="left:223px;top:384.5px;height:15px;line-height:15px;font-size:12px;color:#1a1a1a;font-weight:normal;font-family:'Liberation Sans', sans-serif;white-space:nowrap;">+</div><svg style="position:absolute;left:271px;top:387px;" width="10" height="10" viewBox="0 0 10 10"><path d="M1 1.5h8 M1 3.5h8 M1 5.5h8 M1 7.5h8" stroke="#1a1a1a" stroke-width="1"/></svg><div style="left:293px;top:329px;width:64px;height:72px;background:#3e2866;border-radius:3px;border:1px solid #31205a;box-sizing:border-box;"></div><div style="left:297px;top:384.5px;height:15px;line-height:15px;font-size:12px;color:#1a1a1a;font-weight:normal;font-family:'Liberation Sans', sans-serif;white-space:nowrap;">+</div><svg style="position:absolute;left:345px;top:387px;" width="10" height="10" viewBox="0 0 10 10"><path d="M1 1.5h8 M1 3.5h8 M1 5.5h8 M1 7.5h8" stroke="#1a1a1a" stroke-width="1"/></svg><div style="left:367px;top:329px;width:66px;height:72px;background:#1f1f1f;border-radius:3px;border:1px solid #181818;box-sizing:border-box;"></div><div style="left:369px;top:331px;width:61px;height:15px;background:#2a2a2a;border-radius:2px;border:1px solid #161616;box-sizing:border-box;"></div><div style="left:372px;top:335px;width:6px;height:6px;background:#d4a838;"></div><div style="left:382px;top:331px;width:47px;height:15px;line-height:15px;font-size:8px;color:#8a8a8a;overflow:hidden;white-space:nowrap;">VU-Meter</div><div style="left:369px;top:349px;width:61px;height:15px;background:#2a2a2a;border-radius:2px;border:1px solid #161616;box-sizing:border-box;"></div><div style="left:372px;top:353px;width:6px;height:6px;background:#d4a838;"></div><div style="left:382px;top:349px;width:47px;height:15px;line-height:15px;font-size:8px;color:#8a8a8a;overflow:hidden;white-space:nowrap;">Surround Met</div><div style="left:369px;top:367px;width:61px;height:15px;background:#2a2a2a;border-radius:2px;border:1px solid #161616;box-sizing:border-box;"></div><div style="left:372px;top:371px;width:6px;height:6px;background:#d4a838;"></div><div style="left:382px;top:367px;width:47px;height:15px;line-height:15px;font-size:8px;color:#8a8a8a;overflow:hidden;white-space:nowrap;">Phase-Oscillc</div><svg style="position:absolute;left:367px;top:387px;" width="66" height="12" viewBox="0 0 66 12"><path d="M5 6h8 M9 2v8 M27 7h7 M39.5 2.5h7v7h-7z M54 2.5h8 M54 4.5h8 M54 6.5h8 M54 8.5h8" stroke="#555" stroke-width="1" fill="none"/></svg><div style="left:498px;top:329px;width:67px;height:72px;background:#183a3a;border-radius:3px;border:1px solid #1f5050;box-sizing:border-box;"></div><div style="left:500px;top:331px;width:63px;height:15px;background:#2a3232;border-radius:2px;border:1px solid #152a2a;box-sizing:border-box;"></div><div style="left:503px;top:335px;width:6px;height:6px;background:#d4a838;"></div><div style="left:513px;top:333.5px;height:10px;line-height:10px;font-size:8px;color:#8a8a8a;font-weight:normal;font-family:'Liberation Sans', sans-serif;white-space:nowrap;">Angudion II</div><svg style="position:absolute;left:498px;top:387px;" width="67" height="12" viewBox="0 0 67 12"><path d="M5 6h8 M9 2v8 M27 7h7 M39.5 2.5h7v7h-7z M54 2.5h8 M54 4.5h8 M54 6.5h8 M54 8.5h8" stroke="#111" stroke-width="1.2" fill="none"/></svg><div style="left:572px;top:329px;width:67px;height:72px;background:#202020;border-radius:3px;border:1px solid #181818;box-sizing:border-box;"></div><svg style="position:absolute;left:572px;top:387px;" width="67" height="12" viewBox="0 0 67 12"><path d="M5 6h8 M9 2v8 M54 2.5h8 M54 4.5h8 M54 6.5h8 M54 8.5h8" stroke="#555" stroke-width="1" fill="none"/></svg><div style="left:221px;top:412px;width:60px;height:13px;background:#121212;border-radius:2px;box-shadow:0 1px 0 rgba(255,255,255,0.08);"></div><div style="left:221px;top:412.0px;width:60px;height:13px;line-height:13px;font-size:10px;color:#d2dc8a;font-weight:normal;font-family:'Liberation Sans', sans-serif;white-space:nowrap;text-align:center;overflow:hidden;">-9.5</div><div style="left:295px;top:412px;width:60px;height:13px;background:#121212;border-radius:2px;box-shadow:0 1px 0 rgba(255,255,255,0.08);"></div><div style="left:295px;top:412.0px;width:60px;height:13px;line-height:13px;font-size:10px;color:#d2dc8a;font-weight:normal;font-family:'Liberation Sans', sans-serif;white-space:nowrap;text-align:center;overflow:hidden;">-144.5</div><div style="left:369px;top:412px;width:118px;height:13px;background:#121212;border-radius:2px;box-shadow:0 1px 0 rgba(255,255,255,0.08);"></div><div style="left:369px;top:412.0px;width:118px;height:13px;line-height:13px;font-size:10px;color:#d2dc8a;font-weight:normal;font-family:'Liberation Sans', sans-serif;white-space:nowrap;text-align:center;overflow:hidden;">-9.5</div><div style="left:501px;top:412px;width:60px;height:13px;background:#121212;border-radius:2px;box-shadow:0 1px 0 rgba(255,255,255,0.08);"></div><div style="left:501px;top:412.0px;width:60px;height:13px;line-height:13px;font-size:10px;color:#d2dc8a;font-weight:normal;font-family:'Liberation Sans', sans-serif;white-space:nowrap;text-align:center;overflow:hidden;">-8.4</div><div style="left:573px;top:412px;width:65px;height:13px;background:#121212;border-radius:2px;box-shadow:0 1px 0 rgba(255,255,255,0.08);"></div><div style="left:573px;top:412.0px;width:65px;height:13px;line-height:13px;font-size:10px;color:#d2dc8a;font-weight:normal;font-family:'Liberation Sans', sans-serif;white-space:nowrap;text-align:center;overflow:hidden;">-9.5</div><svg style="position:absolute;left:0px;top:0px;" width="710" height="960" viewBox="0 0 710 960"><rect x="237" y="449" width="3" height="183" rx="1.5" fill="#050505"/><path d="M225 450.5h11" stroke="#111" stroke-width="1"/><path d="M225 468.5h11" stroke="#111" stroke-width="1"/><path d="M225 486.5h11" stroke="#111" stroke-width="1"/><path d="M225 504.5h11" stroke="#111" stroke-width="1"/><path d="M225 522.5h11" stroke="#111" stroke-width="1"/><path d="M225 540.5h11" stroke="#111" stroke-width="1"/><path d="M225 552.5h11" stroke="#111" stroke-width="1"/><path d="M225 564.5h11" stroke="#111" stroke-width="1"/><path d="M225 576.5h11" stroke="#111" stroke-width="1"/><path d="M225 588.5h11" stroke="#111" stroke-width="1"/><path d="M225 600.5h11" stroke="#111" stroke-width="1"/><path d="M225 612.5h11" stroke="#111" stroke-width="1"/><path d="M225 624.5h11" stroke="#111" stroke-width="1"/><path d="M232 456.5h4" stroke="#111" stroke-width="1"/><path d="M232 462.5h4" stroke="#111" stroke-width="1"/><path d="M232 474.5h4" stroke="#111" stroke-width="1"/><path d="M232 480.5h4" stroke="#111" stroke-width="1"/><path d="M232 492.5h4" stroke="#111" stroke-width="1"/><path d="M232 498.5h4" stroke="#111" stroke-width="1"/><path d="M232 510.5h4" stroke="#111" stroke-width="1"/><path d="M232 516.5h4" stroke="#111" stroke-width="1"/><path d="M232 528.5h4" stroke="#111" stroke-width="1"/><path d="M232 534.5h4" stroke="#111" stroke-width="1"/><path d="M232 546.5h4" stroke="#111" stroke-width="1"/><path d="M232 558.5h4" stroke="#111" stroke-width="1"/><path d="M232 570.5h4" stroke="#111" stroke-width="1"/><path d="M232 582.5h4" stroke="#111" stroke-width="1"/><path d="M232 594.5h4" stroke="#111" stroke-width="1"/><path d="M232 606.5h4" stroke="#111" stroke-width="1"/><path d="M232 618.5h4" stroke="#111" stroke-width="1"/><path d="M225 629.5h11" stroke="#111" stroke-width="1"/></svg><div style="left:250px;top:445.5px;width:16px;height:9px;line-height:9px;font-size:7px;color:#1c3a26;font-weight:normal;font-family:'Liberation Sans', sans-serif;white-space:nowrap;text-align:center;overflow:hidden;letter-spacing:-0.3px;">12</div><div style="left:250px;top:463.5px;width:16px;height:9px;line-height:9px;font-size:7px;color:#1c3a26;font-weight:normal;font-family:'Liberation Sans', sans-serif;white-space:nowrap;text-align:center;overflow:hidden;letter-spacing:-0.3px;">6</div><div style="left:250px;top:481.5px;width:16px;height:9px;line-height:9px;font-size:7px;color:#1c3a26;font-weight:normal;font-family:'Liberation Sans', sans-serif;white-space:nowrap;text-align:center;overflow:hidden;letter-spacing:-0.3px;">0</div><div style="left:250px;top:499.5px;width:16px;height:9px;line-height:9px;font-size:7px;color:#1c3a26;font-weight:normal;font-family:'Liberation Sans', sans-serif;white-space:nowrap;text-align:center;overflow:hidden;letter-spacing:-0.3px;">6</div><div style="left:250px;top:517.5px;width:16px;height:9px;line-height:9px;font-size:7px;color:#1c3a26;font-weight:normal;font-family:'Liberation Sans', sans-serif;white-space:nowrap;text-align:center;overflow:hidden;letter-spacing:-0.3px;">12</div><div style="left:250px;top:535.5px;width:16px;height:9px;line-height:9px;font-size:7px;color:#1c3a26;font-weight:normal;font-family:'Liberation Sans', sans-serif;white-space:nowrap;text-align:center;overflow:hidden;letter-spacing:-0.3px;">18</div><div style="left:250px;top:547.5px;width:16px;height:9px;line-height:9px;font-size:7px;color:#1c3a26;font-weight:normal;font-family:'Liberation Sans', sans-serif;white-space:nowrap;text-align:center;overflow:hidden;letter-spacing:-0.3px;">24</div><div style="left:250px;top:559.5px;width:16px;height:9px;line-height:9px;font-size:7px;color:#1c3a26;font-weight:normal;font-family:'Liberation Sans', sans-serif;white-space:nowrap;text-align:center;overflow:hidden;letter-spacing:-0.3px;">30</div><div style="left:250px;top:571.5px;width:16px;height:9px;line-height:9px;font-size:7px;color:#1c3a26;font-weight:normal;font-family:'Liberation Sans', sans-serif;white-space:nowrap;text-align:center;overflow:hidden;letter-spacing:-0.3px;">36</div><div style="left:250px;top:583.5px;width:16px;height:9px;line-height:9px;font-size:7px;color:#1c3a26;font-weight:normal;font-family:'Liberation Sans', sans-serif;white-space:nowrap;text-align:center;overflow:hidden;letter-spacing:-0.3px;">42</div><div style="left:250px;top:595.5px;width:16px;height:9px;line-height:9px;font-size:7px;color:#1c3a26;font-weight:normal;font-family:'Liberation Sans', sans-serif;white-space:nowrap;text-align:center;overflow:hidden;letter-spacing:-0.3px;">48</div><div style="left:250px;top:607.5px;width:16px;height:9px;line-height:9px;font-size:7px;color:#1c3a26;font-weight:normal;font-family:'Liberation Sans', sans-serif;white-space:nowrap;text-align:center;overflow:hidden;letter-spacing:-0.3px;">54</div><div style="left:250px;top:619.5px;width:16px;height:9px;line-height:9px;font-size:7px;color:#1c3a26;font-weight:normal;font-family:'Liberation Sans', sans-serif;white-space:nowrap;text-align:center;overflow:hidden;letter-spacing:-0.3px;">60</div><div style="left:250px;top:625.0px;width:16px;height:10px;line-height:10px;font-size:8px;color:#1c3a26;font-weight:normal;font-family:'Liberation Sans', sans-serif;white-space:nowrap;text-align:center;overflow:hidden;">∞</div><div style="left:230px;top:470px;width:16px;height:33px;background:repeating-linear-gradient(180deg,#6a6a6a 0px,#6a6a6a 2px,#4a4a4a 2px,#4a4a4a 4px);border-radius:1px;box-shadow:0 0 0 1px #2a2a2a;"></div><div style="left:230px;top:471px;width:16px;height:2px;background:#9a9a9a;"></div><div style="left:230px;top:498px;width:16px;height:2px;background:#9a9a9a;"></div><div style="left:225px;top:486px;width:29px;height:1px;background:#0a0a0a;"></div><svg style="position:absolute;left:0px;top:0px;" width="710" height="960" viewBox="0 0 710 960"><rect x="311" y="449" width="3" height="183" rx="1.5" fill="#050505"/><path d="M299 450.5h11" stroke="#111" stroke-width="1"/><path d="M299 468.5h11" stroke="#111" stroke-width="1"/><path d="M299 486.5h11" stroke="#111" stroke-width="1"/><path d="M299 504.5h11" stroke="#111" stroke-width="1"/><path d="M299 522.5h11" stroke="#111" stroke-width="1"/><path d="M299 540.5h11" stroke="#111" stroke-width="1"/><path d="M299 552.5h11" stroke="#111" stroke-width="1"/><path d="M299 564.5h11" stroke="#111" stroke-width="1"/><path d="M299 576.5h11" stroke="#111" stroke-width="1"/><path d="M299 588.5h11" stroke="#111" stroke-width="1"/><path d="M299 600.5h11" stroke="#111" stroke-width="1"/><path d="M299 612.5h11" stroke="#111" stroke-width="1"/><path d="M299 624.5h11" stroke="#111" stroke-width="1"/><path d="M306 456.5h4" stroke="#111" stroke-width="1"/><path d="M306 462.5h4" stroke="#111" stroke-width="1"/><path d="M306 474.5h4" stroke="#111" stroke-width="1"/><path d="M306 480.5h4" stroke="#111" stroke-width="1"/><path d="M306 492.5h4" stroke="#111" stroke-width="1"/><path d="M306 498.5h4" stroke="#111" stroke-width="1"/><path d="M306 510.5h4" stroke="#111" stroke-width="1"/><path d="M306 516.5h4" stroke="#111" stroke-width="1"/><path d="M306 528.5h4" stroke="#111" stroke-width="1"/><path d="M306 534.5h4" stroke="#111" stroke-width="1"/><path d="M306 546.5h4" stroke="#111" stroke-width="1"/><path d="M306 558.5h4" stroke="#111" stroke-width="1"/><path d="M306 570.5h4" stroke="#111" stroke-width="1"/><path d="M306 582.5h4" stroke="#111" stroke-width="1"/><path d="M306 594.5h4" stroke="#111" stroke-width="1"/><path d="M306 606.5h4" stroke="#111" stroke-width="1"/><path d="M306 618.5h4" stroke="#111" stroke-width="1"/><path d="M299 629.5h11" stroke="#111" stroke-width="1"/></svg><div style="left:324px;top:445.5px;width:16px;height:9px;line-height:9px;font-size:7px;color:#24183a;font-weight:normal;font-family:'Liberation Sans', sans-serif;white-space:nowrap;text-align:center;overflow:hidden;letter-spacing:-0.3px;">12</div><div style="left:324px;top:463.5px;width:16px;height:9px;line-height:9px;font-size:7px;color:#24183a;font-weight:normal;font-family:'Liberation Sans', sans-serif;white-space:nowrap;text-align:center;overflow:hidden;letter-spacing:-0.3px;">6</div><div style="left:324px;top:481.5px;width:16px;height:9px;line-height:9px;font-size:7px;color:#24183a;font-weight:normal;font-family:'Liberation Sans', sans-serif;white-space:nowrap;text-align:center;overflow:hidden;letter-spacing:-0.3px;">0</div><div style="left:324px;top:499.5px;width:16px;height:9px;line-height:9px;font-size:7px;color:#24183a;font-weight:normal;font-family:'Liberation Sans', sans-serif;white-space:nowrap;text-align:center;overflow:hidden;letter-spacing:-0.3px;">6</div><div style="left:324px;top:517.5px;width:16px;height:9px;line-height:9px;font-size:7px;color:#24183a;font-weight:normal;font-family:'Liberation Sans', sans-serif;white-space:nowrap;text-align:center;overflow:hidden;letter-spacing:-0.3px;">12</div><div style="left:324px;top:535.5px;width:16px;height:9px;line-height:9px;font-size:7px;color:#24183a;font-weight:normal;font-family:'Liberation Sans', sans-serif;white-space:nowrap;text-align:center;overflow:hidden;letter-spacing:-0.3px;">18</div><div style="left:324px;top:547.5px;width:16px;height:9px;line-height:9px;font-size:7px;color:#24183a;font-weight:normal;font-family:'Liberation Sans', sans-serif;white-space:nowrap;text-align:center;overflow:hidden;letter-spacing:-0.3px;">24</div><div style="left:324px;top:559.5px;width:16px;height:9px;line-height:9px;font-size:7px;color:#24183a;font-weight:normal;font-family:'Liberation Sans', sans-serif;white-space:nowrap;text-align:center;overflow:hidden;letter-spacing:-0.3px;">30</div><div style="left:324px;top:571.5px;width:16px;height:9px;line-height:9px;font-size:7px;color:#24183a;font-weight:normal;font-family:'Liberation Sans', sans-serif;white-space:nowrap;text-align:center;overflow:hidden;letter-spacing:-0.3px;">36</div><div style="left:324px;top:583.5px;width:16px;height:9px;line-height:9px;font-size:7px;color:#24183a;font-weight:normal;font-family:'Liberation Sans', sans-serif;white-space:nowrap;text-align:center;overflow:hidden;letter-spacing:-0.3px;">42</div><div style="left:324px;top:595.5px;width:16px;height:9px;line-height:9px;font-size:7px;color:#24183a;font-weight:normal;font-family:'Liberation Sans', sans-serif;white-space:nowrap;text-align:center;overflow:hidden;letter-spacing:-0.3px;">48</div><div style="left:324px;top:607.5px;width:16px;height:9px;line-height:9px;font-size:7px;color:#24183a;font-weight:normal;font-family:'Liberation Sans', sans-serif;white-space:nowrap;text-align:center;overflow:hidden;letter-spacing:-0.3px;">54</div><div style="left:324px;top:619.5px;width:16px;height:9px;line-height:9px;font-size:7px;color:#24183a;font-weight:normal;font-family:'Liberation Sans', sans-serif;white-space:nowrap;text-align:center;overflow:hidden;letter-spacing:-0.3px;">60</div><div style="left:324px;top:625.0px;width:16px;height:10px;line-height:10px;font-size:8px;color:#24183a;font-weight:normal;font-family:'Liberation Sans', sans-serif;white-space:nowrap;text-align:center;overflow:hidden;">∞</div><div style="left:304px;top:470px;width:16px;height:33px;background:repeating-linear-gradient(180deg,#6a6a6a 0px,#6a6a6a 2px,#4a4a4a 2px,#4a4a4a 4px);border-radius:1px;box-shadow:0 0 0 1px #2a2a2a;"></div><div style="left:304px;top:471px;width:16px;height:2px;background:#9a9a9a;"></div><div style="left:304px;top:498px;width:16px;height:2px;background:#9a9a9a;"></div><div style="left:299px;top:486px;width:29px;height:1px;background:#0a0a0a;"></div><svg style="position:absolute;left:0px;top:0px;" width="710" height="960" viewBox="0 0 710 960"><rect x="384" y="449" width="3" height="183" rx="1.5" fill="#050505"/><path d="M372 450.5h11" stroke="#606060" stroke-width="1"/><path d="M372 468.5h11" stroke="#606060" stroke-width="1"/><path d="M372 486.5h11" stroke="#606060" stroke-width="1"/><path d="M372 504.5h11" stroke="#606060" stroke-width="1"/><path d="M372 522.5h11" stroke="#606060" stroke-width="1"/><path d="M372 540.5h11" stroke="#606060" stroke-width="1"/><path d="M372 552.5h11" stroke="#606060" stroke-width="1"/><path d="M372 564.5h11" stroke="#606060" stroke-width="1"/><path d="M372 576.5h11" stroke="#606060" stroke-width="1"/><path d="M372 588.5h11" stroke="#606060" stroke-width="1"/><path d="M372 600.5h11" stroke="#606060" stroke-width="1"/><path d="M372 612.5h11" stroke="#606060" stroke-width="1"/><path d="M372 624.5h11" stroke="#606060" stroke-width="1"/><path d="M379 456.5h4" stroke="#606060" stroke-width="1"/><path d="M379 462.5h4" stroke="#606060" stroke-width="1"/><path d="M379 474.5h4" stroke="#606060" stroke-width="1"/><path d="M379 480.5h4" stroke="#606060" stroke-width="1"/><path d="M379 492.5h4" stroke="#606060" stroke-width="1"/><path d="M379 498.5h4" stroke="#606060" stroke-width="1"/><path d="M379 510.5h4" stroke="#606060" stroke-width="1"/><path d="M379 516.5h4" stroke="#606060" stroke-width="1"/><path d="M379 528.5h4" stroke="#606060" stroke-width="1"/><path d="M379 534.5h4" stroke="#606060" stroke-width="1"/><path d="M379 546.5h4" stroke="#606060" stroke-width="1"/><path d="M379 558.5h4" stroke="#606060" stroke-width="1"/><path d="M379 570.5h4" stroke="#606060" stroke-width="1"/><path d="M379 582.5h4" stroke="#606060" stroke-width="1"/><path d="M379 594.5h4" stroke="#606060" stroke-width="1"/><path d="M379 606.5h4" stroke="#606060" stroke-width="1"/><path d="M379 618.5h4" stroke="#606060" stroke-width="1"/><path d="M372 629.5h11" stroke="#606060" stroke-width="1"/></svg><div style="left:397px;top:445.5px;width:16px;height:9px;line-height:9px;font-size:7px;color:#606060;font-weight:normal;font-family:'Liberation Sans', sans-serif;white-space:nowrap;text-align:center;overflow:hidden;letter-spacing:-0.3px;">12</div><div style="left:397px;top:463.5px;width:16px;height:9px;line-height:9px;font-size:7px;color:#606060;font-weight:normal;font-family:'Liberation Sans', sans-serif;white-space:nowrap;text-align:center;overflow:hidden;letter-spacing:-0.3px;">6</div><div style="left:397px;top:481.5px;width:16px;height:9px;line-height:9px;font-size:7px;color:#606060;font-weight:normal;font-family:'Liberation Sans', sans-serif;white-space:nowrap;text-align:center;overflow:hidden;letter-spacing:-0.3px;">0</div><div style="left:397px;top:499.5px;width:16px;height:9px;line-height:9px;font-size:7px;color:#606060;font-weight:normal;font-family:'Liberation Sans', sans-serif;white-space:nowrap;text-align:center;overflow:hidden;letter-spacing:-0.3px;">6</div><div style="left:397px;top:517.5px;width:16px;height:9px;line-height:9px;font-size:7px;color:#606060;font-weight:normal;font-family:'Liberation Sans', sans-serif;white-space:nowrap;text-align:center;overflow:hidden;letter-spacing:-0.3px;">12</div><div style="left:397px;top:535.5px;width:16px;height:9px;line-height:9px;font-size:7px;color:#606060;font-weight:normal;font-family:'Liberation Sans', sans-serif;white-space:nowrap;text-align:center;overflow:hidden;letter-spacing:-0.3px;">18</div><div style="left:397px;top:547.5px;width:16px;height:9px;line-height:9px;font-size:7px;color:#606060;font-weight:normal;font-family:'Liberation Sans', sans-serif;white-space:nowrap;text-align:center;overflow:hidden;letter-spacing:-0.3px;">24</div><div style="left:397px;top:559.5px;width:16px;height:9px;line-height:9px;font-size:7px;color:#606060;font-weight:normal;font-family:'Liberation Sans', sans-serif;white-space:nowrap;text-align:center;overflow:hidden;letter-spacing:-0.3px;">30</div><div style="left:397px;top:571.5px;width:16px;height:9px;line-height:9px;font-size:7px;color:#606060;font-weight:normal;font-family:'Liberation Sans', sans-serif;white-space:nowrap;text-align:center;overflow:hidden;letter-spacing:-0.3px;">36</div><div style="left:397px;top:583.5px;width:16px;height:9px;line-height:9px;font-size:7px;color:#606060;font-weight:normal;font-family:'Liberation Sans', sans-serif;white-space:nowrap;text-align:center;overflow:hidden;letter-spacing:-0.3px;">42</div><div style="left:397px;top:595.5px;width:16px;height:9px;line-height:9px;font-size:7px;color:#606060;font-weight:normal;font-family:'Liberation Sans', sans-serif;white-space:nowrap;text-align:center;overflow:hidden;letter-spacing:-0.3px;">48</div><div style="left:397px;top:607.5px;width:16px;height:9px;line-height:9px;font-size:7px;color:#606060;font-weight:normal;font-family:'Liberation Sans', sans-serif;white-space:nowrap;text-align:center;overflow:hidden;letter-spacing:-0.3px;">54</div><div style="left:397px;top:619.5px;width:16px;height:9px;line-height:9px;font-size:7px;color:#606060;font-weight:normal;font-family:'Liberation Sans', sans-serif;white-space:nowrap;text-align:center;overflow:hidden;letter-spacing:-0.3px;">60</div><div style="left:397px;top:625.0px;width:16px;height:10px;line-height:10px;font-size:8px;color:#606060;font-weight:normal;font-family:'Liberation Sans', sans-serif;white-space:nowrap;text-align:center;overflow:hidden;">∞</div><div style="left:377px;top:470px;width:16px;height:33px;background:repeating-linear-gradient(180deg,#c04848 0px,#c04848 2px,#8c2c2c 2px,#8c2c2c 4px);border-radius:2px;"></div><div style="left:377px;top:472px;width:16px;height:1px;background:#e08a8a;"></div><div style="left:372px;top:486px;width:29px;height:1px;background:#0a0a0a;"></div><svg style="position:absolute;left:0px;top:0px;" width="710" height="960" viewBox="0 0 710 960"><rect x="516" y="449" width="3" height="183" rx="1.5" fill="#050505"/><path d="M504 450.5h11" stroke="#607070" stroke-width="1"/><path d="M504 468.5h11" stroke="#607070" stroke-width="1"/><path d="M504 486.5h11" stroke="#607070" stroke-width="1"/><path d="M504 504.5h11" stroke="#607070" stroke-width="1"/><path d="M504 522.5h11" stroke="#607070" stroke-width="1"/><path d="M504 540.5h11" stroke="#607070" stroke-width="1"/><path d="M504 552.5h11" stroke="#607070" stroke-width="1"/><path d="M504 564.5h11" stroke="#607070" stroke-width="1"/><path d="M504 576.5h11" stroke="#607070" stroke-width="1"/><path d="M504 588.5h11" stroke="#607070" stroke-width="1"/><path d="M504 600.5h11" stroke="#607070" stroke-width="1"/><path d="M504 612.5h11" stroke="#607070" stroke-width="1"/><path d="M504 624.5h11" stroke="#607070" stroke-width="1"/><path d="M511 456.5h4" stroke="#607070" stroke-width="1"/><path d="M511 462.5h4" stroke="#607070" stroke-width="1"/><path d="M511 474.5h4" stroke="#607070" stroke-width="1"/><path d="M511 480.5h4" stroke="#607070" stroke-width="1"/><path d="M511 492.5h4" stroke="#607070" stroke-width="1"/><path d="M511 498.5h4" stroke="#607070" stroke-width="1"/><path d="M511 510.5h4" stroke="#607070" stroke-width="1"/><path d="M511 516.5h4" stroke="#607070" stroke-width="1"/><path d="M511 528.5h4" stroke="#607070" stroke-width="1"/><path d="M511 534.5h4" stroke="#607070" stroke-width="1"/><path d="M511 546.5h4" stroke="#607070" stroke-width="1"/><path d="M511 558.5h4" stroke="#607070" stroke-width="1"/><path d="M511 570.5h4" stroke="#607070" stroke-width="1"/><path d="M511 582.5h4" stroke="#607070" stroke-width="1"/><path d="M511 594.5h4" stroke="#607070" stroke-width="1"/><path d="M511 606.5h4" stroke="#607070" stroke-width="1"/><path d="M511 618.5h4" stroke="#607070" stroke-width="1"/><path d="M504 629.5h11" stroke="#607070" stroke-width="1"/></svg><div style="left:529px;top:445.5px;width:16px;height:9px;line-height:9px;font-size:7px;color:#607070;font-weight:normal;font-family:'Liberation Sans', sans-serif;white-space:nowrap;text-align:center;overflow:hidden;letter-spacing:-0.3px;">12</div><div style="left:529px;top:463.5px;width:16px;height:9px;line-height:9px;font-size:7px;color:#607070;font-weight:normal;font-family:'Liberation Sans', sans-serif;white-space:nowrap;text-align:center;overflow:hidden;letter-spacing:-0.3px;">6</div><div style="left:529px;top:481.5px;width:16px;height:9px;line-height:9px;font-size:7px;color:#607070;font-weight:normal;font-family:'Liberation Sans', sans-serif;white-space:nowrap;text-align:center;overflow:hidden;letter-spacing:-0.3px;">0</div><div style="left:529px;top:499.5px;width:16px;height:9px;line-height:9px;font-size:7px;color:#607070;font-weight:normal;font-family:'Liberation Sans', sans-serif;white-space:nowrap;text-align:center;overflow:hidden;letter-spacing:-0.3px;">6</div><div style="left:529px;top:517.5px;width:16px;height:9px;line-height:9px;font-size:7px;color:#607070;font-weight:normal;font-family:'Liberation Sans', sans-serif;white-space:nowrap;text-align:center;overflow:hidden;letter-spacing:-0.3px;">12</div><div style="left:529px;top:535.5px;width:16px;height:9px;line-height:9px;font-size:7px;color:#607070;font-weight:normal;font-family:'Liberation Sans', sans-serif;white-space:nowrap;text-align:center;overflow:hidden;letter-spacing:-0.3px;">18</div><div style="left:529px;top:547.5px;width:16px;height:9px;line-height:9px;font-size:7px;color:#607070;font-weight:normal;font-family:'Liberation Sans', sans-serif;white-space:nowrap;text-align:center;overflow:hidden;letter-spacing:-0.3px;">24</div><div style="left:529px;top:559.5px;width:16px;height:9px;line-height:9px;font-size:7px;color:#607070;font-weight:normal;font-family:'Liberation Sans', sans-serif;white-space:nowrap;text-align:center;overflow:hidden;letter-spacing:-0.3px;">30</div><div style="left:529px;top:571.5px;width:16px;height:9px;line-height:9px;font-size:7px;color:#607070;font-weight:normal;font-family:'Liberation Sans', sans-serif;white-space:nowrap;text-align:center;overflow:hidden;letter-spacing:-0.3px;">36</div><div style="left:529px;top:583.5px;width:16px;height:9px;line-height:9px;font-size:7px;color:#607070;font-weight:normal;font-family:'Liberation Sans', sans-serif;white-space:nowrap;text-align:center;overflow:hidden;letter-spacing:-0.3px;">42</div><div style="left:529px;top:595.5px;width:16px;height:9px;line-height:9px;font-size:7px;color:#607070;font-weight:normal;font-family:'Liberation Sans', sans-serif;white-space:nowrap;text-align:center;overflow:hidden;letter-spacing:-0.3px;">48</div><div style="left:529px;top:607.5px;width:16px;height:9px;line-height:9px;font-size:7px;color:#607070;font-weight:normal;font-family:'Liberation Sans', sans-serif;white-space:nowrap;text-align:center;overflow:hidden;letter-spacing:-0.3px;">54</div><div style="left:529px;top:619.5px;width:16px;height:9px;line-height:9px;font-size:7px;color:#607070;font-weight:normal;font-family:'Liberation Sans', sans-serif;white-space:nowrap;text-align:center;overflow:hidden;letter-spacing:-0.3px;">60</div><div style="left:529px;top:625.0px;width:16px;height:10px;line-height:10px;font-size:8px;color:#607070;font-weight:normal;font-family:'Liberation Sans', sans-serif;white-space:nowrap;text-align:center;overflow:hidden;">∞</div><div style="left:509px;top:470px;width:16px;height:33px;background:repeating-linear-gradient(180deg,#c04848 0px,#c04848 2px,#8c2c2c 2px,#8c2c2c 4px);border-radius:2px;"></div><div style="left:509px;top:472px;width:16px;height:1px;background:#e08a8a;"></div><div style="left:504px;top:486px;width:29px;height:1px;background:#0a0a0a;"></div><svg style="position:absolute;left:0px;top:0px;" width="710" height="960" viewBox="0 0 710 960"><rect x="590" y="449" width="3" height="183" rx="1.5" fill="#050505"/><path d="M578 450.5h11" stroke="#606060" stroke-width="1"/><path d="M578 468.5h11" stroke="#606060" stroke-width="1"/><path d="M578 486.5h11" stroke="#606060" stroke-width="1"/><path d="M578 504.5h11" stroke="#606060" stroke-width="1"/><path d="M578 522.5h11" stroke="#606060" stroke-width="1"/><path d="M578 540.5h11" stroke="#606060" stroke-width="1"/><path d="M578 552.5h11" stroke="#606060" stroke-width="1"/><path d="M578 564.5h11" stroke="#606060" stroke-width="1"/><path d="M578 576.5h11" stroke="#606060" stroke-width="1"/><path d="M578 588.5h11" stroke="#606060" stroke-width="1"/><path d="M578 600.5h11" stroke="#606060" stroke-width="1"/><path d="M578 612.5h11" stroke="#606060" stroke-width="1"/><path d="M578 624.5h11" stroke="#606060" stroke-width="1"/><path d="M585 456.5h4" stroke="#606060" stroke-width="1"/><path d="M585 462.5h4" stroke="#606060" stroke-width="1"/><path d="M585 474.5h4" stroke="#606060" stroke-width="1"/><path d="M585 480.5h4" stroke="#606060" stroke-width="1"/><path d="M585 492.5h4" stroke="#606060" stroke-width="1"/><path d="M585 498.5h4" stroke="#606060" stroke-width="1"/><path d="M585 510.5h4" stroke="#606060" stroke-width="1"/><path d="M585 516.5h4" stroke="#606060" stroke-width="1"/><path d="M585 528.5h4" stroke="#606060" stroke-width="1"/><path d="M585 534.5h4" stroke="#606060" stroke-width="1"/><path d="M585 546.5h4" stroke="#606060" stroke-width="1"/><path d="M585 558.5h4" stroke="#606060" stroke-width="1"/><path d="M585 570.5h4" stroke="#606060" stroke-width="1"/><path d="M585 582.5h4" stroke="#606060" stroke-width="1"/><path d="M585 594.5h4" stroke="#606060" stroke-width="1"/><path d="M585 606.5h4" stroke="#606060" stroke-width="1"/><path d="M585 618.5h4" stroke="#606060" stroke-width="1"/><path d="M578 629.5h11" stroke="#606060" stroke-width="1"/></svg><div style="left:602px;top:445.5px;width:16px;height:9px;line-height:9px;font-size:7px;color:#606060;font-weight:normal;font-family:'Liberation Sans', sans-serif;white-space:nowrap;text-align:center;overflow:hidden;letter-spacing:-0.3px;">12</div><div style="left:602px;top:463.5px;width:16px;height:9px;line-height:9px;font-size:7px;color:#606060;font-weight:normal;font-family:'Liberation Sans', sans-serif;white-space:nowrap;text-align:center;overflow:hidden;letter-spacing:-0.3px;">6</div><div style="left:602px;top:481.5px;width:16px;height:9px;line-height:9px;font-size:7px;color:#606060;font-weight:normal;font-family:'Liberation Sans', sans-serif;white-space:nowrap;text-align:center;overflow:hidden;letter-spacing:-0.3px;">0</div><div style="left:602px;top:499.5px;width:16px;height:9px;line-height:9px;font-size:7px;color:#606060;font-weight:normal;font-family:'Liberation Sans', sans-serif;white-space:nowrap;text-align:center;overflow:hidden;letter-spacing:-0.3px;">6</div><div style="left:602px;top:517.5px;width:16px;height:9px;line-height:9px;font-size:7px;color:#606060;font-weight:normal;font-family:'Liberation Sans', sans-serif;white-space:nowrap;text-align:center;overflow:hidden;letter-spacing:-0.3px;">12</div><div style="left:602px;top:535.5px;width:16px;height:9px;line-height:9px;font-size:7px;color:#606060;font-weight:normal;font-family:'Liberation Sans', sans-serif;white-space:nowrap;text-align:center;overflow:hidden;letter-spacing:-0.3px;">18</div><div style="left:602px;top:547.5px;width:16px;height:9px;line-height:9px;font-size:7px;color:#606060;font-weight:normal;font-family:'Liberation Sans', sans-serif;white-space:nowrap;text-align:center;overflow:hidden;letter-spacing:-0.3px;">24</div><div style="left:602px;top:559.5px;width:16px;height:9px;line-height:9px;font-size:7px;color:#606060;font-weight:normal;font-family:'Liberation Sans', sans-serif;white-space:nowrap;text-align:center;overflow:hidden;letter-spacing:-0.3px;">30</div><div style="left:602px;top:571.5px;width:16px;height:9px;line-height:9px;font-size:7px;color:#606060;font-weight:normal;font-family:'Liberation Sans', sans-serif;white-space:nowrap;text-align:center;overflow:hidden;letter-spacing:-0.3px;">36</div><div style="left:602px;top:583.5px;width:16px;height:9px;line-height:9px;font-size:7px;color:#606060;font-weight:normal;font-family:'Liberation Sans', sans-serif;white-space:nowrap;text-align:center;overflow:hidden;letter-spacing:-0.3px;">42</div><div style="left:602px;top:595.5px;width:16px;height:9px;line-height:9px;font-size:7px;color:#606060;font-weight:normal;font-family:'Liberation Sans', sans-serif;white-space:nowrap;text-align:center;overflow:hidden;letter-spacing:-0.3px;">48</div><div style="left:602px;top:607.5px;width:16px;height:9px;line-height:9px;font-size:7px;color:#606060;font-weight:normal;font-family:'Liberation Sans', sans-serif;white-space:nowrap;text-align:center;overflow:hidden;letter-spacing:-0.3px;">54</div><div style="left:602px;top:619.5px;width:16px;height:9px;line-height:9px;font-size:7px;color:#606060;font-weight:normal;font-family:'Liberation Sans', sans-serif;white-space:nowrap;text-align:center;overflow:hidden;letter-spacing:-0.3px;">60</div><div style="left:602px;top:625.0px;width:16px;height:10px;line-height:10px;font-size:8px;color:#606060;font-weight:normal;font-family:'Liberation Sans', sans-serif;white-space:nowrap;text-align:center;overflow:hidden;">∞</div><div style="left:583px;top:470px;width:16px;height:33px;background:repeating-linear-gradient(180deg,#c04848 0px,#c04848 2px,#8c2c2c 2px,#8c2c2c 4px);border-radius:2px;"></div><div style="left:583px;top:472px;width:16px;height:1px;background:#e08a8a;"></div><div style="left:578px;top:486px;width:29px;height:1px;background:#0a0a0a;"></div><div style="left:266px;top:441px;width:15px;height:190px;background:#141414;border-radius:2px;"></div><div style="left:267px;top:443px;width:13px;height:5px;background:#1a1a1a;"></div><div style="left:268px;top:514px;width:1px;height:26px;background:#aedda8;"></div><div style="left:268px;top:540px;width:1px;height:89px;background:#8ec48b;"></div><div style="left:268px;top:512px;width:1px;height:2px;background:#aedda8;"></div><div style="left:270px;top:518px;width:1px;height:22px;background:#aedda8;"></div><div style="left:270px;top:540px;width:1px;height:89px;background:#8ec48b;"></div><div style="left:272px;top:570px;width:1px;height:59px;background:#8ec48b;"></div><div style="left:272px;top:565px;width:1px;height:2px;background:#aedda8;"></div><div style="left:274px;top:571px;width:1px;height:58px;background:#8ec48b;"></div><div style="left:274px;top:566px;width:1px;height:2px;background:#aedda8;"></div><div style="left:276px;top:572px;width:1px;height:57px;background:#8ec48b;"></div><div style="left:276px;top:565px;width:1px;height:2px;background:#aedda8;"></div><div style="left:278px;top:573px;width:1px;height:56px;background:#8ec48b;"></div><div style="left:280px;top:573px;width:1px;height:56px;background:#8ec48b;"></div><div style="left:340px;top:441px;width:15px;height:190px;background:#141414;border-radius:2px;"></div><div style="left:341px;top:443px;width:13px;height:5px;background:#1a1a1a;"></div><div style="left:414px;top:441px;width:74px;height:190px;background:#141414;border-radius:2px;"></div><div style="left:415px;top:443px;width:72px;height:5px;background:#1a1a1a;"></div><div style="left:416px;top:448px;width:10px;height:181px;background:#181818;"></div><div style="left:416px;top:515px;width:10px;height:25px;background:#aedda8;"></div><div style="left:416px;top:540px;width:10px;height:89px;background:#8ec48b;"></div><div style="left:416px;top:512px;width:10px;height:2px;background:#aedda8;"></div><div style="left:428px;top:448px;width:10px;height:181px;background:#181818;"></div><div style="left:428px;top:518px;width:10px;height:22px;background:#aedda8;"></div><div style="left:428px;top:540px;width:10px;height:89px;background:#8ec48b;"></div><div style="left:428px;top:512px;width:10px;height:2px;background:#aedda8;"></div><div style="left:440px;top:448px;width:10px;height:181px;background:#181818;"></div><div style="left:440px;top:569px;width:10px;height:60px;background:#8ec48b;"></div><div style="left:440px;top:565px;width:10px;height:2px;background:#aedda8;"></div><div style="left:452px;top:448px;width:10px;height:181px;background:#181818;"></div><div style="left:464px;top:448px;width:10px;height:181px;background:#181818;"></div><div style="left:464px;top:572px;width:10px;height:57px;background:#8ec48b;"></div><div style="left:464px;top:567px;width:10px;height:2px;background:#aedda8;"></div><div style="left:476px;top:448px;width:10px;height:181px;background:#181818;"></div><div style="left:476px;top:572px;width:10px;height:57px;background:#8ec48b;"></div><div style="left:476px;top:565px;width:10px;height:2px;background:#aedda8;"></div><div style="left:413px;top:632.5px;width:16px;height:9px;line-height:9px;font-size:7px;color:#777;font-weight:normal;font-family:'Liberation Sans', sans-serif;white-space:nowrap;text-align:center;overflow:hidden;letter-spacing:-0.5px;">L</div><div style="left:425px;top:632.5px;width:16px;height:9px;line-height:9px;font-size:7px;color:#777;font-weight:normal;font-family:'Liberation Sans', sans-serif;white-space:nowrap;text-align:center;overflow:hidden;letter-spacing:-0.5px;">R</div><div style="left:437px;top:632.5px;width:16px;height:9px;line-height:9px;font-size:7px;color:#777;font-weight:normal;font-family:'Liberation Sans', sans-serif;white-space:nowrap;text-align:center;overflow:hidden;letter-spacing:-0.5px;">C</div><div style="left:449px;top:632.5px;width:16px;height:9px;line-height:9px;font-size:7px;color:#777;font-weight:normal;font-family:'Liberation Sans', sans-serif;white-space:nowrap;text-align:center;overflow:hidden;letter-spacing:-0.5px;">LFE</div><div style="left:461px;top:632.5px;width:16px;height:9px;line-height:9px;font-size:7px;color:#777;font-weight:normal;font-family:'Liberation Sans', sans-serif;white-space:nowrap;text-align:center;overflow:hidden;letter-spacing:-0.5px;">Lrs</div><div style="left:473px;top:632.5px;width:16px;height:9px;line-height:9px;font-size:7px;color:#777;font-weight:normal;font-family:'Liberation Sans', sans-serif;white-space:nowrap;text-align:center;overflow:hidden;letter-spacing:-0.5px;">Rrs</div><div style="left:547px;top:441px;width:15px;height:190px;background:#141414;border-radius:2px;"></div><div style="left:548px;top:443px;width:13px;height:5px;background:#1a1a1a;"></div><div style="left:549px;top:448px;width:5px;height:181px;background:#181818;"></div><div style="left:549px;top:511px;width:5px;height:29px;background:#aedda8;"></div><div style="left:549px;top:540px;width:5px;height:89px;background:#8ec48b;"></div><div style="left:555px;top:448px;width:5px;height:181px;background:#181818;"></div><div style="left:555px;top:517px;width:5px;height:23px;background:#aedda8;"></div><div style="left:555px;top:540px;width:5px;height:89px;background:#8ec48b;"></div><div style="left:555px;top:511px;width:5px;height:2px;background:#aedda8;"></div><div style="left:617px;top:441px;width:22px;height:190px;background:#141414;border-radius:2px;"></div><div style="left:618px;top:443px;width:20px;height:5px;background:#1a1a1a;"></div><div style="left:620px;top:514px;width:1px;height:26px;background:#aedda8;"></div><div style="left:620px;top:540px;width:1px;height:89px;background:#8ec48b;"></div><div style="left:620px;top:512px;width:1px;height:2px;background:#aedda8;"></div><div style="left:622px;top:519px;width:1px;height:21px;background:#aedda8;"></div><div style="left:622px;top:540px;width:1px;height:89px;background:#8ec48b;"></div><div style="left:624px;top:570px;width:1px;height:59px;background:#8ec48b;"></div><div style="left:624px;top:565px;width:1px;height:2px;background:#aedda8;"></div><div style="left:626px;top:572px;width:1px;height:57px;background:#8ec48b;"></div><div style="left:628px;top:572px;width:1px;height:57px;background:#8ec48b;"></div><div style="left:628px;top:566px;width:1px;height:2px;background:#aedda8;"></div><div style="left:630px;top:573px;width:1px;height:56px;background:#8ec48b;"></div><svg style="position:absolute;left:272px;top:638px;" width="10" height="10" viewBox="0 0 10 10"><rect x="0.5" y="0.5" width="9" height="9" rx="1.5" fill="none" stroke="#111"/><path d="M2.5 5h5 M5 2.5v5" stroke="#111"/></svg><svg style="position:absolute;left:346px;top:638px;" width="10" height="10" viewBox="0 0 10 10"><rect x="0.5" y="0.5" width="9" height="9" rx="1.5" fill="none" stroke="#111"/><path d="M2.5 5h5 M5 2.5v5" stroke="#111"/></svg><svg style="position:absolute;left:552px;top:638px;" width="10" height="10" viewBox="0 0 10 10"><rect x="0.5" y="0.5" width="9" height="9" rx="1.5" fill="none" stroke="#666"/><path d="M2.5 5h5 M5 2.5v5" stroke="#666"/></svg><svg style="position:absolute;left:629px;top:638px;" width="10" height="10" viewBox="0 0 10 10"><rect x="0.5" y="0.5" width="9" height="9" rx="1.5" fill="none" stroke="#666"/><path d="M2.5 5h5 M5 2.5v5" stroke="#666"/></svg><svg style="position:absolute;left:480px;top:646px;" width="10" height="10" viewBox="0 0 10 10"><rect x="0.5" y="0.5" width="9" height="9" rx="1.5" fill="none" stroke="#666"/><path d="M2.5 5h5" stroke="#666"/></svg><div style="left:221px;top:655px;width:25px;height:16px;background:#131313;border-radius:2px;"></div><div style="left:221px;top:654.0px;width:25px;height:18px;line-height:18px;font-size:14px;color:#3a8a58;font-weight:normal;font-family:'Liberation Sans', sans-serif;white-space:nowrap;text-align:center;overflow:hidden;">1</div><div style="left:295px;top:654.0px;width:25px;height:18px;line-height:18px;font-size:14px;color:#1e1e3a;font-weight:normal;font-family:'Liberation Sans', sans-serif;white-space:nowrap;text-align:center;overflow:hidden;">2</div><div style="left:257px;top:650px;width:24px;height:25px;background:#2c2c2c;border-radius:2px;border:1px solid #0a0a0a;box-sizing:border-box;"></div><svg style="position:absolute;left:263px;top:656px;" width="13" height="13" viewBox="0 0 13 13"><circle cx="6.5" cy="6.5" r="6" fill="#141414"/></svg><div style="left:331px;top:650px;width:24px;height:25px;background:#2c2c2c;border-radius:2px;border:1px solid #0a0a0a;box-sizing:border-box;"></div><svg style="position:absolute;left:337px;top:656px;" width="13" height="13" viewBox="0 0 13 13"><circle cx="6.5" cy="6.5" r="6" fill="#d02a2a"/></svg><div style="left:375px;top:656.0px;height:14px;line-height:14px;font-size:11px;color:#909090;font-weight:normal;font-family:'Liberation Sans', sans-serif;white-space:nowrap;">MB1</div><div style="left:413px;top:655px;width:17px;height:17px;background:#2a2a2a;border-radius:2px;border:1px solid #0e0e0e;box-sizing:border-box;box-shadow:inset 1px 1px 0 rgba(255,255,255,0.08);"></div><div style="left:413px;top:658.5px;width:17px;height:10px;line-height:10px;font-size:8px;color:#777;font-weight:normal;font-family:'Liberation Sans', sans-serif;white-space:nowrap;text-align:center;overflow:hidden;">OS</div><div style="left:507px;top:656.0px;height:14px;line-height:14px;font-size:11px;color:#406060;font-weight:normal;font-family:'Liberation Sans', sans-serif;white-space:nowrap;">MB2</div><div style="left:545px;top:655px;width:17px;height:17px;background:#243636;border-radius:2px;border:1px solid #0e0e0e;box-sizing:border-box;box-shadow:inset 1px 1px 0 rgba(255,255,255,0.08);"></div><div style="left:545px;top:658.5px;width:17px;height:10px;line-height:10px;font-size:8px;color:#888;font-weight:normal;font-family:'Liberation Sans', sans-serif;white-space:nowrap;text-align:center;overflow:hidden;">OS</div><div style="left:582px;top:656.0px;height:14px;line-height:14px;font-size:11px;color:#909090;font-weight:normal;font-family:'Liberation Sans', sans-serif;white-space:nowrap;">MB3</div><div style="left:615px;top:655px;width:17px;height:17px;background:#2a2a2a;border-radius:2px;border:1px solid #0e0e0e;box-sizing:border-box;box-shadow:inset 1px 1px 0 rgba(255,255,255,0.08);"></div><div style="left:615px;top:658.5px;width:17px;height:10px;line-height:10px;font-size:8px;color:#777;font-weight:normal;font-family:'Liberation Sans', sans-serif;white-space:nowrap;text-align:center;overflow:hidden;">OS</div><div style="left:221px;top:683px;width:60px;height:13px;background:#141414;border-radius:2px;box-shadow:0 1px 0 rgba(255,255,255,0.06);"></div><div style="left:221px;top:683.0px;width:60px;height:13px;line-height:13px;font-size:10px;color:#f0a860;font-weight:normal;font-family:'Liberation Sans', sans-serif;white-space:nowrap;text-align:center;overflow:hidden;">Main</div><div style="left:295px;top:683px;width:60px;height:13px;background:#141414;border-radius:2px;box-shadow:0 1px 0 rgba(255,255,255,0.06);"></div><div style="left:295px;top:683.0px;width:60px;height:13px;line-height:13px;font-size:10px;color:#f0a860;font-weight:normal;font-family:'Liberation Sans', sans-serif;white-space:nowrap;text-align:center;overflow:hidden;">Orig Source</div><div style="left:369px;top:683px;width:118px;height:13px;background:#141414;border-radius:2px;box-shadow:0 1px 0 rgba(255,255,255,0.06);"></div><div style="left:369px;top:683.0px;width:118px;height:13px;line-height:13px;font-size:10px;color:#f0a860;font-weight:normal;font-family:'Liberation Sans', sans-serif;white-space:nowrap;text-align:center;overflow:hidden;">Master</div><div style="left:501px;top:683px;width:60px;height:13px;background:#141414;border-radius:2px;box-shadow:0 1px 0 rgba(255,255,255,0.06);"></div><div style="left:501px;top:683.0px;width:60px;height:13px;line-height:13px;font-size:10px;color:#f0a860;font-weight:normal;font-family:'Liberation Sans', sans-serif;white-space:nowrap;text-align:center;overflow:hidden;">Mix Bus</div><div style="left:575px;top:683px;width:63px;height:13px;background:#141414;border-radius:2px;box-shadow:0 1px 0 rgba(255,255,255,0.06);"></div><div style="left:575px;top:683.0px;width:63px;height:13px;line-height:13px;font-size:10px;color:#f0a860;font-weight:normal;font-family:'Liberation Sans', sans-serif;white-space:nowrap;text-align:center;overflow:hidden;">Mix Bus</div><div style="left:220px;top:702px;width:24px;height:24px;background:#2e2e2e;border-radius:2px;border:1px solid #0e0e0e;box-sizing:border-box;box-shadow:inset 1px 1px 0 rgba(255,255,255,0.08);"></div><div style="left:220px;top:705.0px;width:24px;height:18px;line-height:18px;font-size:14px;color:#9a9a9a;font-weight:normal;font-family:'Liberation Sans', sans-serif;white-space:nowrap;text-align:center;overflow:hidden;">S</div><div style="left:257px;top:702px;width:24px;height:24px;background:#2e2e2e;border-radius:2px;border:1px solid #0e0e0e;box-sizing:border-box;box-shadow:inset 1px 1px 0 rgba(255,255,255,0.08);"></div><div style="left:257px;top:705.0px;width:24px;height:18px;line-height:18px;font-size:14px;color:#9a9a9a;font-weight:normal;font-family:'Liberation Sans', sans-serif;white-space:nowrap;text-align:center;overflow:hidden;">M</div><div style="left:294px;top:702px;width:24px;height:24px;background:#2e2e2e;border-radius:2px;border:1px solid #0e0e0e;box-sizing:border-box;box-shadow:inset 1px 1px 0 rgba(255,255,255,0.08);"></div><div style="left:294px;top:705.0px;width:24px;height:18px;line-height:18px;font-size:14px;color:#9a9a9a;font-weight:normal;font-family:'Liberation Sans', sans-serif;white-space:nowrap;text-align:center;overflow:hidden;">S</div><div style="left:331px;top:702px;width:24px;height:24px;background:#2e2e2e;border-radius:2px;border:1px solid #0e0e0e;box-sizing:border-box;box-shadow:inset 1px 1px 0 rgba(255,255,255,0.08);"></div><div style="left:331px;top:705.0px;width:24px;height:18px;line-height:18px;font-size:14px;color:#9a9a9a;font-weight:normal;font-family:'Liberation Sans', sans-serif;white-space:nowrap;text-align:center;overflow:hidden;">M</div><div style="left:220px;top:732px;width:17px;height:17px;background:#2a2a2a;border-radius:2px;border:1px solid #0e0e0e;box-sizing:border-box;box-shadow:inset 1px 1px 0 rgba(255,255,255,0.08);"></div><div style="left:220px;top:735.5px;width:17px;height:10px;line-height:10px;font-size:8px;color:#888;font-weight:normal;font-family:'Liberation Sans', sans-serif;white-space:nowrap;text-align:center;overflow:hidden;">SF</div><div style="left:242px;top:732px;width:17px;height:17px;background:#2a2a2a;border-radius:2px;border:1px solid #0e0e0e;box-sizing:border-box;box-shadow:inset 1px 1px 0 rgba(255,255,255,0.08);"></div><div style="left:242px;top:735.5px;width:17px;height:10px;line-height:10px;font-size:8px;color:#888;font-weight:normal;font-family:'Liberation Sans', sans-serif;white-space:nowrap;text-align:center;overflow:hidden;">Ø</div><div style="left:264px;top:732px;width:17px;height:17px;background:#2a2a2a;border-radius:2px;border:1px solid #0e0e0e;box-sizing:border-box;box-shadow:inset 1px 1px 0 rgba(255,255,255,0.08);"></div><div style="left:264px;top:735.5px;width:17px;height:10px;line-height:10px;font-size:8px;color:#888;font-weight:normal;font-family:'Liberation Sans', sans-serif;white-space:nowrap;text-align:center;overflow:hidden;">PF</div><div style="left:294px;top:732px;width:17px;height:17px;background:#2a2a2a;border-radius:2px;border:1px solid #0e0e0e;box-sizing:border-box;box-shadow:inset 1px 1px 0 rgba(255,255,255,0.08);"></div><div style="left:294px;top:735.5px;width:17px;height:10px;line-height:10px;font-size:8px;color:#888;font-weight:normal;font-family:'Liberation Sans', sans-serif;white-space:nowrap;text-align:center;overflow:hidden;">SF</div><div style="left:316px;top:732px;width:17px;height:17px;background:#2a2a2a;border-radius:2px;border:1px solid #0e0e0e;box-sizing:border-box;box-shadow:inset 1px 1px 0 rgba(255,255,255,0.08);"></div><div style="left:316px;top:735.5px;width:17px;height:10px;line-height:10px;font-size:8px;color:#888;font-weight:normal;font-family:'Liberation Sans', sans-serif;white-space:nowrap;text-align:center;overflow:hidden;">Ø</div><div style="left:338px;top:732px;width:17px;height:17px;background:#2a2a2a;border-radius:2px;border:1px solid #0e0e0e;box-sizing:border-box;box-shadow:inset 1px 1px 0 rgba(255,255,255,0.08);"></div><div style="left:338px;top:735.5px;width:17px;height:10px;line-height:10px;font-size:8px;color:#888;font-weight:normal;font-family:'Liberation Sans', sans-serif;white-space:nowrap;text-align:center;overflow:hidden;">PF</div><div style="left:367px;top:732px;width:17px;height:17px;background:#2a2a2a;border-radius:2px;border:1px solid #0e0e0e;box-sizing:border-box;box-shadow:inset 1px 1px 0 rgba(255,255,255,0.08);"></div><div style="left:367px;top:735.5px;width:17px;height:10px;line-height:10px;font-size:8px;color:#888;font-weight:normal;font-family:'Liberation Sans', sans-serif;white-space:nowrap;text-align:center;overflow:hidden;">SF</div><div style="left:389px;top:732px;width:17px;height:17px;background:#2a2a2a;border-radius:2px;border:1px solid #0e0e0e;box-sizing:border-box;box-shadow:inset 1px 1px 0 rgba(255,255,255,0.08);"></div><div style="left:389px;top:735.5px;width:17px;height:10px;line-height:10px;font-size:8px;color:#888;font-weight:normal;font-family:'Liberation Sans', sans-serif;white-space:nowrap;text-align:center;overflow:hidden;">RE</div><div style="left:411px;top:732px;width:17px;height:17px;background:#2a2a2a;border-radius:2px;border:1px solid #0e0e0e;box-sizing:border-box;box-shadow:inset 1px 1px 0 rgba(255,255,255,0.08);"></div><div style="left:411px;top:735.5px;width:17px;height:10px;line-height:10px;font-size:8px;color:#888;font-weight:normal;font-family:'Liberation Sans', sans-serif;white-space:nowrap;text-align:center;overflow:hidden;">DI</div><div style="left:500px;top:732px;width:17px;height:17px;background:#213434;border-radius:2px;border:1px solid #0e0e0e;box-sizing:border-box;box-shadow:inset 1px 1px 0 rgba(255,255,255,0.08);"></div><div style="left:500px;top:735.5px;width:17px;height:10px;line-height:10px;font-size:8px;color:#888;font-weight:normal;font-family:'Liberation Sans', sans-serif;white-space:nowrap;text-align:center;overflow:hidden;">SF</div><div style="left:522px;top:732px;width:17px;height:17px;background:#213434;border-radius:2px;border:1px solid #0e0e0e;box-sizing:border-box;box-shadow:inset 1px 1px 0 rgba(255,255,255,0.08);"></div><div style="left:522px;top:735.5px;width:17px;height:10px;line-height:10px;font-size:8px;color:#888;font-weight:normal;font-family:'Liberation Sans', sans-serif;white-space:nowrap;text-align:center;overflow:hidden;">RE</div><div style="left:544px;top:732px;width:17px;height:17px;background:#213434;border-radius:2px;border:1px solid #0e0e0e;box-sizing:border-box;box-shadow:inset 1px 1px 0 rgba(255,255,255,0.08);"></div><div style="left:544px;top:735.5px;width:17px;height:10px;line-height:10px;font-size:8px;color:#888;font-weight:normal;font-family:'Liberation Sans', sans-serif;white-space:nowrap;text-align:center;overflow:hidden;">DI</div><div style="left:574px;top:732px;width:17px;height:17px;background:#2a2a2a;border-radius:2px;border:1px solid #0e0e0e;box-sizing:border-box;box-shadow:inset 1px 1px 0 rgba(255,255,255,0.08);"></div><div style="left:574px;top:735.5px;width:17px;height:10px;line-height:10px;font-size:8px;color:#888;font-weight:normal;font-family:'Liberation Sans', sans-serif;white-space:nowrap;text-align:center;overflow:hidden;">SF</div><div style="left:596px;top:732px;width:17px;height:17px;background:#2a2a2a;border-radius:2px;border:1px solid #0e0e0e;box-sizing:border-box;box-shadow:inset 1px 1px 0 rgba(255,255,255,0.08);"></div><div style="left:596px;top:735.5px;width:17px;height:10px;line-height:10px;font-size:8px;color:#888;font-weight:normal;font-family:'Liberation Sans', sans-serif;white-space:nowrap;text-align:center;overflow:hidden;">RE</div><div style="left:618px;top:732px;width:17px;height:17px;background:#2a2a2a;border-radius:2px;border:1px solid #0e0e0e;box-sizing:border-box;box-shadow:inset 1px 1px 0 rgba(255,255,255,0.08);"></div><div style="left:618px;top:735.5px;width:17px;height:10px;line-height:10px;font-size:8px;color:#888;font-weight:normal;font-family:'Liberation Sans', sans-serif;white-space:nowrap;text-align:center;overflow:hidden;">DI</div><svg style="position:absolute;left:220px;top:759px;" width="13" height="13" viewBox="0 0 13 13"><circle cx="6.5" cy="6.5" r="5.8" fill="#111" stroke="#111" stroke-width="1.1"/><circle cx="4" cy="5.5" r="1" fill="#111"/><circle cx="9" cy="5.5" r="1" fill="#111"/><circle cx="6.5" cy="9" r="1" fill="#111"/></svg><div style="left:236px;top:758.5px;height:13px;line-height:13px;font-size:10px;color:#1e2e22;font-weight:normal;font-family:'Liberation Sans', sans-serif;white-space:nowrap;">Input</div><svg style="position:absolute;left:294px;top:759px;" width="13" height="13" viewBox="0 0 13 13"><circle cx="6.5" cy="6.5" r="5.8" fill="#111" stroke="#111" stroke-width="1.1"/><circle cx="4" cy="5.5" r="1" fill="#111"/><circle cx="9" cy="5.5" r="1" fill="#111"/><circle cx="6.5" cy="9" r="1" fill="#111"/></svg><div style="left:310px;top:758.5px;height:13px;line-height:13px;font-size:10px;color:#3a2e50;font-weight:normal;font-family:'Liberation Sans', sans-serif;white-space:nowrap;">Input</div><svg style="position:absolute;left:367px;top:759px;" width="13" height="13" viewBox="0 0 13 13"><circle cx="6.5" cy="6.5" r="5.8" fill="none" stroke="#888" stroke-width="1.1"/><circle cx="4" cy="5.5" r="1" fill="#888"/><circle cx="9" cy="5.5" r="1" fill="#888"/><circle cx="6.5" cy="9" r="1" fill="#888"/></svg><div style="left:383px;top:758.5px;height:13px;line-height:13px;font-size:10px;color:#999;font-weight:normal;font-family:'Liberation Sans', sans-serif;white-space:nowrap;">Output</div><svg style="position:absolute;left:500px;top:759px;" width="13" height="13" viewBox="0 0 13 13"><circle cx="6.5" cy="6.5" r="5.8" fill="none" stroke="#3a5050" stroke-width="1.1"/><circle cx="4" cy="5.5" r="1" fill="#3a5050"/><circle cx="9" cy="5.5" r="1" fill="#3a5050"/><circle cx="6.5" cy="9" r="1" fill="#3a5050"/></svg><div style="left:516px;top:758.5px;height:13px;line-height:13px;font-size:10px;color:#3a5a5a;font-weight:normal;font-family:'Liberation Sans', sans-serif;white-space:nowrap;">Output</div><svg style="position:absolute;left:573px;top:759px;" width="13" height="13" viewBox="0 0 13 13"><circle cx="6.5" cy="6.5" r="5.8" fill="none" stroke="#888" stroke-width="1.1"/><circle cx="4" cy="5.5" r="1" fill="#888"/><circle cx="9" cy="5.5" r="1" fill="#888"/><circle cx="6.5" cy="9" r="1" fill="#888"/></svg><div style="left:589px;top:758.5px;height:13px;line-height:13px;font-size:10px;color:#999;font-weight:normal;font-family:'Liberation Sans', sans-serif;white-space:nowrap;">Output 1-8</div><div style="left:220px;top:777px;width:62px;height:12px;background:#141414;border-radius:2px;box-shadow:0 1px 0 rgba(255,255,255,0.06);"></div><div style="left:224px;top:777.5px;height:11px;line-height:11px;font-size:9px;color:#cfcfcf;font-weight:normal;font-family:'Liberation Sans', sans-serif;white-space:nowrap;">L</div><div style="left:220px;top:793px;width:62px;height:12px;background:#141414;border-radius:2px;box-shadow:0 1px 0 rgba(255,255,255,0.06);"></div><div style="left:224px;top:793.5px;height:11px;line-height:11px;font-size:9px;color:#cfcfcf;font-weight:normal;font-family:'Liberation Sans', sans-serif;white-space:nowrap;">R</div><div style="left:220px;top:809px;width:62px;height:12px;background:#141414;border-radius:2px;box-shadow:0 1px 0 rgba(255,255,255,0.06);"></div><div style="left:224px;top:809.5px;height:11px;line-height:11px;font-size:9px;color:#cfcfcf;font-weight:normal;font-family:'Liberation Sans', sans-serif;white-space:nowrap;">C</div><div style="left:220px;top:825px;width:62px;height:12px;background:#141414;border-radius:2px;box-shadow:0 1px 0 rgba(255,255,255,0.06);"></div><div style="left:224px;top:825.5px;height:11px;line-height:11px;font-size:9px;color:#cfcfcf;font-weight:normal;font-family:'Liberation Sans', sans-serif;white-space:nowrap;">LFE</div><div style="left:220px;top:841px;width:62px;height:12px;background:#141414;border-radius:2px;box-shadow:0 1px 0 rgba(255,255,255,0.06);"></div><div style="left:224px;top:841.5px;height:11px;line-height:11px;font-size:9px;color:#cfcfcf;font-weight:normal;font-family:'Liberation Sans', sans-serif;white-space:nowrap;">Lrs</div><div style="left:220px;top:857px;width:62px;height:12px;background:#141414;border-radius:2px;box-shadow:0 1px 0 rgba(255,255,255,0.06);"></div><div style="left:224px;top:857.5px;height:11px;line-height:11px;font-size:9px;color:#cfcfcf;font-weight:normal;font-family:'Liberation Sans', sans-serif;white-space:nowrap;">Rrs</div><div style="left:294px;top:777px;width:62px;height:12px;background:#141414;border-radius:2px;box-shadow:0 1px 0 rgba(255,255,255,0.06);"></div><div style="left:298px;top:777.5px;height:11px;line-height:11px;font-size:9px;color:#cfcfcf;font-weight:normal;font-family:'Liberation Sans', sans-serif;white-space:nowrap;">L</div><div style="left:294px;top:793px;width:62px;height:12px;background:#141414;border-radius:2px;box-shadow:0 1px 0 rgba(255,255,255,0.06);"></div><div style="left:298px;top:793.5px;height:11px;line-height:11px;font-size:9px;color:#cfcfcf;font-weight:normal;font-family:'Liberation Sans', sans-serif;white-space:nowrap;">R</div><div style="left:294px;top:809px;width:62px;height:12px;background:#141414;border-radius:2px;box-shadow:0 1px 0 rgba(255,255,255,0.06);"></div><div style="left:298px;top:809.5px;height:11px;line-height:11px;font-size:9px;color:#cfcfcf;font-weight:normal;font-family:'Liberation Sans', sans-serif;white-space:nowrap;">C</div><div style="left:294px;top:825px;width:62px;height:12px;background:#141414;border-radius:2px;box-shadow:0 1px 0 rgba(255,255,255,0.06);"></div><div style="left:298px;top:825.5px;height:11px;line-height:11px;font-size:9px;color:#cfcfcf;font-weight:normal;font-family:'Liberation Sans', sans-serif;white-space:nowrap;">LFE</div><div style="left:294px;top:841px;width:62px;height:12px;background:#141414;border-radius:2px;box-shadow:0 1px 0 rgba(255,255,255,0.06);"></div><div style="left:298px;top:841.5px;height:11px;line-height:11px;font-size:9px;color:#cfcfcf;font-weight:normal;font-family:'Liberation Sans', sans-serif;white-space:nowrap;">Lrs</div><div style="left:294px;top:857px;width:62px;height:12px;background:#141414;border-radius:2px;box-shadow:0 1px 0 rgba(255,255,255,0.06);"></div><div style="left:298px;top:857.5px;height:11px;line-height:11px;font-size:9px;color:#cfcfcf;font-weight:normal;font-family:'Liberation Sans', sans-serif;white-space:nowrap;">Rrs</div><div style="left:368px;top:777px;width:120px;height:12px;background:#1a1a1a;border-radius:2px;box-shadow:0 1px 0 rgba(255,255,255,0.05);"></div><div style="left:373px;top:777.5px;height:11px;line-height:11px;font-size:9px;color:#b8b8b8;font-weight:normal;font-family:'Liberation Sans', sans-serif;white-space:nowrap;">L</div><div style="left:368px;top:793px;width:120px;height:12px;background:#1a1a1a;border-radius:2px;box-shadow:0 1px 0 rgba(255,255,255,0.05);"></div><div style="left:373px;top:793.5px;height:11px;line-height:11px;font-size:9px;color:#b8b8b8;font-weight:normal;font-family:'Liberation Sans', sans-serif;white-space:nowrap;">R</div><div style="left:368px;top:809px;width:120px;height:12px;background:#1a1a1a;border-radius:2px;box-shadow:0 1px 0 rgba(255,255,255,0.05);"></div><div style="left:373px;top:809.5px;height:11px;line-height:11px;font-size:9px;color:#b8b8b8;font-weight:normal;font-family:'Liberation Sans', sans-serif;white-space:nowrap;">C</div><div style="left:368px;top:825px;width:120px;height:12px;background:#1a1a1a;border-radius:2px;box-shadow:0 1px 0 rgba(255,255,255,0.05);"></div><div style="left:373px;top:825.5px;height:11px;line-height:11px;font-size:9px;color:#b8b8b8;font-weight:normal;font-family:'Liberation Sans', sans-serif;white-space:nowrap;">LFE</div><div style="left:368px;top:841px;width:120px;height:12px;background:#1a1a1a;border-radius:2px;box-shadow:0 1px 0 rgba(255,255,255,0.05);"></div><div style="left:373px;top:841.5px;height:11px;line-height:11px;font-size:9px;color:#b8b8b8;font-weight:normal;font-family:'Liberation Sans', sans-serif;white-space:nowrap;">Lrs</div><div style="left:368px;top:857px;width:120px;height:12px;background:#1a1a1a;border-radius:2px;box-shadow:0 1px 0 rgba(255,255,255,0.05);"></div><div style="left:373px;top:857.5px;height:11px;line-height:11px;font-size:9px;color:#b8b8b8;font-weight:normal;font-family:'Liberation Sans', sans-serif;white-space:nowrap;">Rrs</div><div style="left:500px;top:777px;width:62px;height:12px;background:#121212;border-radius:2px;"></div><div style="left:504px;top:777.5px;height:11px;line-height:11px;font-size:9px;color:#f0a860;font-weight:normal;font-family:'Liberation Sans', sans-serif;white-space:nowrap;">L</div><div style="left:530px;top:776px;width:28px;height:14px;line-height:14px;text-align:right;font-size:9px;color:#f0a860;">1</div><div style="left:500px;top:793px;width:62px;height:12px;background:#121212;border-radius:2px;"></div><div style="left:504px;top:793.5px;height:11px;line-height:11px;font-size:9px;color:#f0a860;font-weight:normal;font-family:'Liberation Sans', sans-serif;white-space:nowrap;">R</div><div style="left:530px;top:792px;width:28px;height:14px;line-height:14px;text-align:right;font-size:9px;color:#f0a860;">2</div><div style="left:574px;top:777px;width:64px;height:12px;background:#1a1a1a;border-radius:2px;box-shadow:0 1px 0 rgba(255,255,255,0.05);"></div><div style="left:578px;top:777.5px;height:11px;line-height:11px;font-size:9px;color:#b8b8b8;font-weight:normal;font-family:'Liberation Sans', sans-serif;white-space:nowrap;">L</div><div style="left:574px;top:793px;width:64px;height:12px;background:#1a1a1a;border-radius:2px;box-shadow:0 1px 0 rgba(255,255,255,0.05);"></div><div style="left:578px;top:793.5px;height:11px;line-height:11px;font-size:9px;color:#b8b8b8;font-weight:normal;font-family:'Liberation Sans', sans-serif;white-space:nowrap;">R</div><div style="left:574px;top:809px;width:64px;height:12px;background:#1a1a1a;border-radius:2px;box-shadow:0 1px 0 rgba(255,255,255,0.05);"></div><div style="left:578px;top:809.5px;height:11px;line-height:11px;font-size:9px;color:#b8b8b8;font-weight:normal;font-family:'Liberation Sans', sans-serif;white-space:nowrap;">C</div><div style="left:574px;top:825px;width:64px;height:12px;background:#1a1a1a;border-radius:2px;box-shadow:0 1px 0 rgba(255,255,255,0.05);"></div><div style="left:578px;top:825.5px;height:11px;line-height:11px;font-size:9px;color:#b8b8b8;font-weight:normal;font-family:'Liberation Sans', sans-serif;white-space:nowrap;">LFE</div><div style="left:574px;top:841px;width:64px;height:12px;background:#1a1a1a;border-radius:2px;box-shadow:0 1px 0 rgba(255,255,255,0.05);"></div><div style="left:578px;top:841.5px;height:11px;line-height:11px;font-size:9px;color:#b8b8b8;font-weight:normal;font-family:'Liberation Sans', sans-serif;white-space:nowrap;">Lrs</div><div style="left:574px;top:857px;width:64px;height:12px;background:#1a1a1a;border-radius:2px;box-shadow:0 1px 0 rgba(255,255,255,0.05);"></div><div style="left:578px;top:857.5px;height:11px;line-height:11px;font-size:9px;color:#b8b8b8;font-weight:normal;font-family:'Liberation Sans', sans-serif;white-space:nowrap;">Rrs</div><div style="left:574px;top:873px;width:64px;height:12px;background:#1a1a1a;border-radius:2px;box-shadow:0 1px 0 rgba(255,255,255,0.05);"></div><div style="left:578px;top:873.5px;height:11px;line-height:11px;font-size:9px;color:#b8b8b8;font-weight:normal;font-family:'Liberation Sans', sans-serif;white-space:nowrap;">Ltf</div><div style="left:574px;top:889px;width:64px;height:12px;background:#1a1a1a;border-radius:2px;box-shadow:0 1px 0 rgba(255,255,255,0.05);"></div><div style="left:578px;top:889.5px;height:11px;line-height:11px;font-size:9px;color:#b8b8b8;font-weight:normal;font-family:'Liberation Sans', sans-serif;white-space:nowrap;">Rtf</div><svg style="position:absolute;left:220px;top:879px;" width="13" height="13" viewBox="0 0 13 13"><circle cx="6.5" cy="6.5" r="5.8" fill="none" stroke="#111" stroke-width="1.1"/><circle cx="4" cy="5.5" r="1" fill="#111"/><circle cx="9" cy="5.5" r="1" fill="#111"/><circle cx="6.5" cy="9" r="1" fill="#111"/></svg><div style="left:236px;top:877px;width:27px;height:16px;background:#2a2a2a;border-radius:2px;border:1px solid #0e0e0e;box-sizing:border-box;"></div><div style="left:236px;top:880.0px;width:27px;height:10px;line-height:10px;font-size:8px;color:#888;font-weight:normal;font-family:'Liberation Sans', sans-serif;white-space:nowrap;text-align:center;overflow:hidden;">D.Out</div><svg style="position:absolute;left:294px;top:879px;" width="13" height="13" viewBox="0 0 13 13"><circle cx="6.5" cy="6.5" r="5.8" fill="none" stroke="#111" stroke-width="1.1"/><circle cx="4" cy="5.5" r="1" fill="#111"/><circle cx="9" cy="5.5" r="1" fill="#111"/><circle cx="6.5" cy="9" r="1" fill="#111"/></svg><div style="left:310px;top:877px;width:27px;height:16px;background:#2a2a2a;border-radius:2px;border:1px solid #0e0e0e;box-sizing:border-box;"></div><div style="left:310px;top:880.0px;width:27px;height:10px;line-height:10px;font-size:8px;color:#888;font-weight:normal;font-family:'Liberation Sans', sans-serif;white-space:nowrap;text-align:center;overflow:hidden;">D.Out</div><div style="left:220px;top:903.5px;height:13px;line-height:13px;font-size:10px;color:#1a1a1a;font-weight:normal;font-family:'Liberation Sans', sans-serif;white-space:nowrap;">Delay</div><div style="left:294px;top:903.5px;height:13px;line-height:13px;font-size:10px;color:#2e2240;font-weight:normal;font-family:'Liberation Sans', sans-serif;white-space:nowrap;">Delay</div><div style="left:252px;top:905px;width:30px;height:11px;background:#121212;border-radius:2px;"></div><div style="left:252px;top:904.0px;width:30px;height:13px;line-height:13px;font-size:10px;color:#f0a860;font-weight:normal;font-family:'Liberation Sans', sans-serif;white-space:nowrap;text-align:center;overflow:hidden;">0</div><div style="left:326px;top:905px;width:30px;height:11px;background:#121212;border-radius:2px;"></div><div style="left:326px;top:904.0px;width:30px;height:13px;line-height:13px;font-size:10px;color:#f0a860;font-weight:normal;font-family:'Liberation Sans', sans-serif;white-space:nowrap;text-align:center;overflow:hidden;">0</div><div style="left:220px;top:922px;width:62px;height:13px;background:#141414;border-radius:2px;box-shadow:0 1px 0 rgba(255,255,255,0.06);"></div><div style="left:220px;top:922.0px;width:62px;height:13px;line-height:13px;font-size:10px;color:#f0a860;font-weight:normal;font-family:'Liberation Sans', sans-serif;white-space:nowrap;text-align:center;overflow:hidden;">Input</div><div style="left:294px;top:922px;width:62px;height:13px;background:#141414;border-radius:2px;box-shadow:0 1px 0 rgba(255,255,255,0.06);"></div><div style="left:294px;top:922.0px;width:62px;height:13px;line-height:13px;font-size:10px;color:#f0a860;font-weight:normal;font-family:'Liberation Sans', sans-serif;white-space:nowrap;text-align:center;overflow:hidden;">Input</div><div style="left:368px;top:921px;width:120px;height:13px;background:#141414;border-radius:2px;box-shadow:0 1px 0 rgba(255,255,255,0.06);"></div><div style="left:368px;top:921.0px;width:120px;height:13px;line-height:13px;font-size:10px;color:#f0a860;font-weight:normal;font-family:'Liberation Sans', sans-serif;white-space:nowrap;text-align:center;overflow:hidden;">5.1 SMPTE</div><div style="left:501px;top:921px;width:60px;height:13px;background:#141414;border-radius:2px;box-shadow:0 1px 0 rgba(255,255,255,0.06);"></div><div style="left:501px;top:921.0px;width:60px;height:13px;line-height:13px;font-size:10px;color:#e8e8e8;font-weight:normal;font-family:'Liberation Sans', sans-serif;white-space:nowrap;text-align:center;overflow:hidden;">Stereo</div><div style="left:575px;top:921px;width:63px;height:13px;background:#141414;border-radius:2px;box-shadow:0 1px 0 rgba(255,255,255,0.06);"></div><div style="left:575px;top:921.0px;width:63px;height:13px;line-height:13px;font-size:10px;color:#f0a860;font-weight:normal;font-family:'Liberation Sans', sans-serif;white-space:nowrap;text-align:center;overflow:hidden;">Dolby 5.1.4</div><div style="left:495px;top:936px;width:72px;height:3px;background:#1a7a7a;"></div><svg style="position:absolute;left:0px;top:939px;" width="710" height="16" viewBox="0 0 710 16"><rect x="218.5" y="3.5" width="9" height="9" rx="2" fill="none" stroke="#8a8a8a"/><path d="M220.5 8h5" stroke="#8a8a8a"/><path d="M236 8h4 M240 5.5h3v5h-3z" stroke="#aaa" fill="#aaa" stroke-width="1"/><path d="M250 4.5h8 M250 6.5h8 M250 8.5h8 M250 10.5h8" stroke="#aaa" stroke-width="1"/><rect x="292.5" y="3.5" width="9" height="9" rx="2" fill="none" stroke="#8a8a8a"/><path d="M294.5 8h5" stroke="#8a8a8a"/><path d="M310 8h4 M314 5.5h3v5h-3z" stroke="#aaa" fill="#aaa" stroke-width="1"/><path d="M324 4.5h8 M324 6.5h8 M324 8.5h8 M324 10.5h8" stroke="#aaa" stroke-width="1"/><rect x="365.5" y="3.5" width="9" height="9" rx="2" fill="none" stroke="#8a8a8a"/><path d="M367.5 8h5" stroke="#8a8a8a"/><rect x="381.5" y="3.5" width="9" height="9" rx="2" fill="none" stroke="#aaa"/><path d="M384 5.5h4 M386 5.5v5" stroke="#aaa"/><path d="M397 4.5h8 M397 6.5h8 M397 8.5h8 M397 10.5h8" stroke="#aaa" stroke-width="1"/><rect x="498.5" y="3.5" width="9" height="9" rx="2" fill="none" stroke="#8a8a8a"/><path d="M500.5 8h5" stroke="#8a8a8a"/><rect x="514.5" y="3.5" width="9" height="9" rx="2" fill="none" stroke="#aaa"/><path d="M517 5.5h4 M519 5.5v5" stroke="#aaa"/><path d="M530 4.5h8 M530 6.5h8 M530 8.5h8 M530 10.5h8" stroke="#aaa" stroke-width="1"/><rect x="572.5" y="3.5" width="9" height="9" rx="2" fill="none" stroke="#8a8a8a"/><path d="M574.5 8h5" stroke="#8a8a8a"/><rect x="588.5" y="3.5" width="9" height="9" rx="2" fill="none" stroke="#aaa"/><path d="M591 5.5h4 M593 5.5v5" stroke="#aaa"/><path d="M604 4.5h8 M604 6.5h8 M604 8.5h8 M604 10.5h8" stroke="#aaa" stroke-width="1"/><rect x="648.5" y="2.5" width="9" height="9" rx="1.5" fill="none" stroke="#888"/><path d="M650.5 7h5 M653 4.5v5" stroke="#888"/><rect x="688.5" y="3.5" width="9" height="9" rx="1.5" fill="none" stroke="#666"/><path d="M691 6.5q2-2 4 0t-2 3v1" stroke="#666" fill="none"/></svg><div style="left:644px;top:162px;width:1px;height:776px;background:#161616;"></div><svg style="position:absolute;left:651px;top:167px;" width="10" height="10" viewBox="0 0 10 10"><rect x="0.5" y="0.5" width="9" height="9" rx="1.5" fill="none" stroke="#777"/><path d="M2.5 5h5" stroke="#777"/></svg><div style="left:665px;top:167.0px;height:10px;line-height:10px;font-size:8px;color:#999;font-weight:normal;font-family:'Liberation Sans', sans-serif;white-space:nowrap;">MB3</div><svg style="position:absolute;left:651px;top:196px;" width="10" height="10" viewBox="0 0 10 10"><rect x="0.5" y="0.5" width="9" height="9" rx="1.5" fill="none" stroke="#777"/><path d="M2.5 5h5" stroke="#777"/></svg><div style="left:665px;top:196.0px;height:10px;line-height:10px;font-size:8px;color:#999;font-weight:normal;font-family:'Liberation Sans', sans-serif;white-space:nowrap;">MB2</div><svg style="position:absolute;left:651px;top:225px;" width="10" height="10" viewBox="0 0 10 10"><rect x="0.5" y="0.5" width="9" height="9" rx="1.5" fill="none" stroke="#777"/><path d="M2.5 5h5" stroke="#777"/></svg><div style="left:665px;top:225.0px;height:10px;line-height:10px;font-size:8px;color:#999;font-weight:normal;font-family:'Liberation Sans', sans-serif;white-space:nowrap;">MB1</div><svg style="position:absolute;left:651px;top:250px;" width="10" height="10" viewBox="0 0 10 10"><rect x="0.5" y="0.5" width="9" height="9" rx="1.5" fill="none" stroke="#777"/><path d="M2.5 5h5" stroke="#777"/></svg><div style="left:665px;top:250.0px;height:10px;line-height:10px;font-size:8px;color:#999;font-weight:normal;font-family:'Liberation Sans', sans-serif;white-space:nowrap;">Panning</div><svg style="position:absolute;left:651px;top:330px;" width="10" height="10" viewBox="0 0 10 10"><rect x="0.5" y="0.5" width="9" height="9" rx="1.5" fill="none" stroke="#777"/><path d="M2.5 5h5" stroke="#777"/></svg><div style="left:665px;top:330.0px;height:10px;line-height:10px;font-size:8px;color:#999;font-weight:normal;font-family:'Liberation Sans', sans-serif;white-space:nowrap;">Effect</div><svg style="position:absolute;left:651px;top:413px;" width="10" height="10" viewBox="0 0 10 10"><rect x="0.5" y="0.5" width="9" height="9" rx="1.5" fill="none" stroke="#777"/><path d="M2.5 5h5" stroke="#777"/></svg><div style="left:665px;top:413.0px;height:10px;line-height:10px;font-size:8px;color:#999;font-weight:normal;font-family:'Liberation Sans', sans-serif;white-space:nowrap;">Gain</div><svg style="position:absolute;left:651px;top:683px;" width="10" height="10" viewBox="0 0 10 10"><rect x="0.5" y="0.5" width="9" height="9" rx="1.5" fill="none" stroke="#777"/><path d="M2.5 5h5" stroke="#777"/></svg><div style="left:665px;top:683.0px;height:10px;line-height:10px;font-size:8px;color:#999;font-weight:normal;font-family:'Liberation Sans', sans-serif;white-space:nowrap;">Mute</div><svg style="position:absolute;left:651px;top:759px;" width="10" height="10" viewBox="0 0 10 10"><rect x="0.5" y="0.5" width="9" height="9" rx="1.5" fill="none" stroke="#777"/><path d="M2.5 5h5" stroke="#777"/></svg><div style="left:665px;top:759.0px;height:10px;line-height:10px;font-size:8px;color:#999;font-weight:normal;font-family:'Liberation Sans', sans-serif;white-space:nowrap;">I/O</div><div style="left:649px;top:443px;width:17px;height:17px;background:#2a2a2a;border-radius:2px;border:1px solid #0e0e0e;box-sizing:border-box;box-shadow:inset 1px 1px 0 rgba(255,255,255,0.08);"></div><div style="left:649px;top:446.5px;width:17px;height:10px;line-height:10px;font-size:8px;color:#888;font-weight:normal;font-family:'Liberation Sans', sans-serif;white-space:nowrap;text-align:center;overflow:hidden;">O</div><div style="left:649px;top:484px;width:17px;height:17px;background:#a030c0;border-radius:2px;border:1px solid #0e0e0e;box-sizing:border-box;box-shadow:inset 1px 1px 0 rgba(255,255,255,0.08);"></div><div style="left:649px;top:487.5px;width:17px;height:10px;line-height:10px;font-size:8px;color:#ddd;font-weight:normal;font-family:'Liberation Sans', sans-serif;white-space:nowrap;text-align:center;overflow:hidden;">SC</div><div style="left:671px;top:484px;width:17px;height:17px;background:#e08020;border-radius:2px;border:1px solid #0e0e0e;box-sizing:border-box;box-shadow:inset 1px 1px 0 rgba(255,255,255,0.08);"></div><div style="left:671px;top:487.5px;width:17px;height:10px;line-height:10px;font-size:8px;color:#222;font-weight:normal;font-family:'Liberation Sans', sans-serif;white-space:nowrap;text-align:center;overflow:hidden;">BC</div><div style="left:649px;top:506px;width:17px;height:17px;background:#e0b040;border-radius:2px;border:1px solid #0e0e0e;box-sizing:border-box;box-shadow:inset 1px 1px 0 rgba(255,255,255,0.08);"></div><div style="left:649px;top:509.5px;width:17px;height:10px;line-height:10px;font-size:8px;color:#222;font-weight:normal;font-family:'Liberation Sans', sans-serif;white-space:nowrap;text-align:center;overflow:hidden;">GC</div><div style="left:671px;top:506px;width:17px;height:17px;background:#2a2a2a;border-radius:2px;border:1px solid #0e0e0e;box-sizing:border-box;box-shadow:inset 1px 1px 0 rgba(255,255,255,0.08);"></div><div style="left:671px;top:509.5px;width:17px;height:10px;line-height:10px;font-size:8px;color:#888;font-weight:normal;font-family:'Liberation Sans', sans-serif;white-space:nowrap;text-align:center;overflow:hidden;">FL</div><div style="left:649px;top:548px;width:17px;height:17px;background:#2a2a2a;border-radius:2px;border:1px solid #0e0e0e;box-sizing:border-box;box-shadow:inset 1px 1px 0 rgba(255,255,255,0.08);"></div><div style="left:649px;top:551.5px;width:17px;height:10px;line-height:10px;font-size:8px;color:#888;font-weight:normal;font-family:'Liberation Sans', sans-serif;white-space:nowrap;text-align:center;overflow:hidden;">S1</div><div style="left:671px;top:548px;width:17px;height:17px;background:#2a2a2a;border-radius:2px;border:1px solid #0e0e0e;box-sizing:border-box;box-shadow:inset 1px 1px 0 rgba(255,255,255,0.08);"></div><div style="left:671px;top:551.5px;width:17px;height:10px;line-height:10px;font-size:8px;color:#888;font-weight:normal;font-family:'Liberation Sans', sans-serif;white-space:nowrap;text-align:center;overflow:hidden;">S2</div><div style="left:649px;top:570px;width:17px;height:17px;background:#2a2a2a;border-radius:2px;border:1px solid #0e0e0e;box-sizing:border-box;box-shadow:inset 1px 1px 0 rgba(255,255,255,0.08);"></div><div style="left:649px;top:573.5px;width:17px;height:10px;line-height:10px;font-size:8px;color:#888;font-weight:normal;font-family:'Liberation Sans', sans-serif;white-space:nowrap;text-align:center;overflow:hidden;">S3</div><div style="left:671px;top:570px;width:17px;height:17px;background:#2a2a2a;border-radius:2px;border:1px solid #0e0e0e;box-sizing:border-box;box-shadow:inset 1px 1px 0 rgba(255,255,255,0.08);"></div><div style="left:671px;top:573.5px;width:17px;height:10px;line-height:10px;font-size:8px;color:#888;font-weight:normal;font-family:'Liberation Sans', sans-serif;white-space:nowrap;text-align:center;overflow:hidden;">S4</div><div style="left:649px;top:612px;width:17px;height:17px;background:#c8c8c8;border-radius:2px;border:1px solid #0e0e0e;box-sizing:border-box;box-shadow:inset 1px 1px 0 rgba(255,255,255,0.08);"></div><div style="left:649px;top:615.5px;width:17px;height:10px;line-height:10px;font-size:8px;color:#555;font-weight:normal;font-family:'Liberation Sans', sans-serif;white-space:nowrap;text-align:center;overflow:hidden;">DC</div><div style="left:671px;top:612px;width:17px;height:17px;background:#20c040;border-radius:2px;border:1px solid #0e0e0e;box-sizing:border-box;box-shadow:inset 1px 1px 0 rgba(255,255,255,0.08);"></div><div style="left:671px;top:615.5px;width:17px;height:10px;line-height:10px;font-size:8px;color:#0a3a0a;font-weight:normal;font-family:'Liberation Sans', sans-serif;white-space:nowrap;text-align:center;overflow:hidden;">DS</div><div style="left:649px;top:655px;width:17px;height:17px;background:#2a2a2a;border-radius:2px;border:1px solid #0e0e0e;box-sizing:border-box;box-shadow:inset 1px 1px 0 rgba(255,255,255,0.08);"></div><div style="left:649px;top:658.5px;width:17px;height:10px;line-height:10px;font-size:8px;color:#888;font-weight:normal;font-family:'Liberation Sans', sans-serif;white-space:nowrap;text-align:center;overflow:hidden;">AC</div><div style="left:649px;top:704px;width:15px;height:16px;background:#2a2a2a;border-radius:2px;border:1px solid #0e0e0e;box-sizing:border-box;box-shadow:inset 1px 1px 0 rgba(255,255,255,0.08);"></div><div style="left:649px;top:707.0px;width:15px;height:10px;line-height:10px;font-size:8px;color:#888;font-weight:normal;font-family:'Liberation Sans', sans-serif;white-space:nowrap;text-align:center;overflow:hidden;">S</div><div style="left:671px;top:704px;width:15px;height:16px;background:#2a2a2a;border-radius:2px;border:1px solid #0e0e0e;box-sizing:border-box;box-shadow:inset 1px 1px 0 rgba(255,255,255,0.08);"></div><div style="left:671px;top:707.0px;width:15px;height:10px;line-height:10px;font-size:8px;color:#888;font-weight:normal;font-family:'Liberation Sans', sans-serif;white-space:nowrap;text-align:center;overflow:hidden;">M</div><svg style="position:absolute;left:649px;top:919px;" width="10" height="10" viewBox="0 0 10 10"><rect x="0.5" y="0.5" width="9" height="9" rx="1.5" fill="none" stroke="#888"/><rect x="3" y="3" width="4" height="4" fill="#888"/></svg><div style="left:1100px;top:101.5px;height:15px;line-height:15px;font-size:12px;color:#d0d0d0;font-weight:normal;font-family:'Liberation Sans', sans-serif;white-space:nowrap;">Fade Editor</div><svg style="position:absolute;left:1880px;top:101px;" width="30" height="14" viewBox="0 0 30 14"><path d="M5 1.5h5 M6 1.5v6 M9 1.5v6 M4 7.5h7 M7.5 7.5v5" stroke="#c8c8c8" stroke-width="1.2" fill="none"/><path d="M19 3l7 7 M26 3l-7 7" stroke="#c8c8c8" stroke-width="1.4"/></svg><svg style="position:absolute;left:0px;top:0px;" width="1920" height="160" viewBox="0 0 1920 160"><circle cx="1116" cy="138" r="9" fill="none" stroke="#a0a0a0" stroke-width="1.2"/><circle cx="1112.5" cy="135" r="1" fill="#a0a0a0"/><circle cx="1119.5" cy="135" r="1" fill="#a0a0a0"/><path d="M1111 140q5 5 10 0" fill="none" stroke="#a0a0a0" stroke-width="1.2"/><path d="M1136 131l14 14 M1150 131l-14 14" stroke="#a0a0a0" stroke-width="1.2"/><path d="M1170 134a8 8 0 1 1 2 10" fill="none" stroke="#a0a0a0" stroke-width="1.2"/><path d="M1168 130v6h6" fill="none" stroke="#a0a0a0" stroke-width="1.2"/><path d="M1200 138h16 M1200 138l5-5 M1200 138l5 5 M1228 138h16 M1244 138l-5-5 M1244 138l-5 5" fill="none" stroke="#a0a0a0" stroke-width="1.2"/><circle cx="1267" cy="137" r="7.5" fill="none" stroke="#a0a0a0" stroke-width="1.2"/><path d="M1272 142l6 6" stroke="#a0a0a0" stroke-width="1.4"/><circle cx="1295" cy="137" r="7.5" fill="none" stroke="#a0a0a0" stroke-width="1.2"/><path d="M1300 142l6 6" stroke="#a0a0a0" stroke-width="1.4"/><path d="M1291 137h8 M1295 133v8" stroke="#a0a0a0" stroke-width="1.2"/><circle cx="1322" cy="137" r="7.5" fill="none" stroke="#a0a0a0" stroke-width="1.2"/><path d="M1327 142l6 6" stroke="#a0a0a0" stroke-width="1.4"/><path d="M1318 137h8" stroke="#a0a0a0" stroke-width="1.2"/><path d="M1356 131v17 M1348 134l8 5 8-5 M1350 147q6-12 12 0" fill="none" stroke="#a0a0a0" stroke-width="1.2"/><path d="M1382 130v18" stroke="#a0a0a0" stroke-width="1.2"/><circle cx="1382" cy="138" r="1.6" fill="#a0a0a0"/><path d="M1387 130v18" stroke="#a0a0a0" stroke-width="1.2"/><circle cx="1387" cy="136" r="1.6" fill="#a0a0a0"/><path d="M1392 130v18" stroke="#a0a0a0" stroke-width="1.2"/><circle cx="1392" cy="140" r="1.6" fill="#a0a0a0"/><path d="M1397 130v18" stroke="#a0a0a0" stroke-width="1.2"/><circle cx="1397" cy="137" r="1.6" fill="#a0a0a0"/><path d="M1408 131.0h14" stroke="#a0a0a0" stroke-width="1.1"/><path d="M1408 134.2h14" stroke="#a0a0a0" stroke-width="1.1"/><path d="M1408 137.4h14" stroke="#a0a0a0" stroke-width="1.1"/><path d="M1408 140.6h14" stroke="#a0a0a0" stroke-width="1.1"/><path d="M1408 143.8h14" stroke="#a0a0a0" stroke-width="1.1"/><path d="M1408 147.0h14" stroke="#a0a0a0" stroke-width="1.1"/><path d="M1438 128h8q6 0 6 8l2 8h-12 M1444 140h12 M1453 137l3 3-3 3" fill="none" stroke="#a0a0a0" stroke-width="1.1"/><path d="M1466 128h8q6 0 6 8l2 8h-12 M1472 140h12 M1481 137l3 3-3 3" fill="none" stroke="#a0a0a0" stroke-width="1.1"/><path d="M1497 132h12q6 0 6 4 M1497 129h10 M1497 135h14 M1509 130l3 3-3 3" fill="none" stroke="#a0a0a0" stroke-width="1.1"/><path d="M1525 132h12q6 0 6 4 M1525 129h10 M1525 135h14 M1537 130l3 3-3 3" fill="none" stroke="#a0a0a0" stroke-width="1.1"/><path d="M1553 130h10 M1553 134h18 M1568 131l3 3-3 3 M1569 138h-8v8h8" fill="none" stroke="#a0a0a0" stroke-width="1.1"/><path d="M1581 127v18 M1581 132h12 M1590 129l3 3-3 3" fill="none" stroke="#a0a0a0" stroke-width="1.1"/><path d="M1605 128h10q5 0 5 5v0 M1605 132h14 M1613 128v17 M1616 129l3 3-3 3" fill="none" stroke="#a0a0a0" stroke-width="1.1"/><path d="M1635 127v18 M1635 132h12 M1644 129l3 3-3 3" fill="none" stroke="#a0a0a0" stroke-width="1.1"/><path d="M1660 132h18 M1660 135h18 M1660 138h18 M1675 129l3 3-3 3" fill="none" stroke="#a0a0a0" stroke-width="1.1"/><path d="M1697 150l3-6q1-2 4-2h8 M1700 149h13 M1711 146l3 3-3 3" fill="none" stroke="#a0a0a0" stroke-width="1.1"/><path d="M1725 150l3-6q1-2 4-2h8 M1728 149h13 M1739 146l3 3-3 3" fill="none" stroke="#a0a0a0" stroke-width="1.1"/><path d="M1749 135h10 M1749 139h18 M1764 136l3 3-3 3 M1765 143h-8v8h8" fill="none" stroke="#a0a0a0" stroke-width="1.1"/><path d="M1784 133v18 M1779 150l3-5h10 M1784 146h10 M1792 143l3 3-3 3" fill="none" stroke="#a0a0a0" stroke-width="1.1"/><path d="M1810 133v18 M1805 150l3-5h10 M1810 146h10 M1818 143l3 3-3 3" fill="none" stroke="#a0a0a0" stroke-width="1.1"/><path d="M1836 133v18 M1831 150l3-5h10 M1836 146h10 M1844 143l3 3-3 3" fill="none" stroke="#a0a0a0" stroke-width="1.1"/><path d="M1856 137h18 M1856 140h18 M1856 143h18 M1871 134l3 3-3 3" fill="none" stroke="#a0a0a0" stroke-width="1.1"/></svg><div style="left:1096px;top:153px;width:801px;height:1px;background:#2a2a2a;"></div><svg style="position:absolute;left:0px;top:0px;" width="1920" height="180" viewBox="0 0 1920 180"><path d="M1194.5 155v6" stroke="#b0b0b0" stroke-width="1"/><path d="M1202.5 155v6" stroke="#b0b0b0" stroke-width="1"/><path d="M1211.5 155v6" stroke="#b0b0b0" stroke-width="1"/><path d="M1219.5 155v6" stroke="#b0b0b0" stroke-width="1"/><path d="M1228.5 155v6" stroke="#b0b0b0" stroke-width="1"/><path d="M1236.5 155v6" stroke="#b0b0b0" stroke-width="1"/><path d="M1245.5 155v6" stroke="#b0b0b0" stroke-width="1"/><path d="M1253.5 155v6" stroke="#b0b0b0" stroke-width="1"/><path d="M1262.5 155v6" stroke="#b0b0b0" stroke-width="1"/><path d="M1270.5 155v6" stroke="#b0b0b0" stroke-width="1"/><path d="M1279.5 155v6" stroke="#b0b0b0" stroke-width="1"/><path d="M1287.5 155v6" stroke="#b0b0b0" stroke-width="1"/><path d="M1296.5 155v6" stroke="#b0b0b0" stroke-width="1"/><path d="M1304.5 155v6" stroke="#b0b0b0" stroke-width="1"/><path d="M1313.5 155v6" stroke="#b0b0b0" stroke-width="1"/><path d="M1321.5 155v6" stroke="#b0b0b0" stroke-width="1"/><path d="M1330.5 155v6" stroke="#b0b0b0" stroke-width="1"/><path d="M1338.5 155v6" stroke="#b0b0b0" stroke-width="1"/><path d="M1347.5 155v6" stroke="#b0b0b0" stroke-width="1"/><path d="M1355.5 155v6" stroke="#b0b0b0" stroke-width="1"/><path d="M1364.5 155v6" stroke="#b0b0b0" stroke-width="1"/><path d="M1372.5 155v6" stroke="#b0b0b0" stroke-width="1"/><path d="M1381.5 155v6" stroke="#b0b0b0" stroke-width="1"/><path d="M1389.5 155v6" stroke="#b0b0b0" stroke-width="1"/><path d="M1398.5 155v6" stroke="#b0b0b0" stroke-width="1"/><path d="M1406.5 155v6" stroke="#b0b0b0" stroke-width="1"/><path d="M1414.5 155v6" stroke="#b0b0b0" stroke-width="1"/><path d="M1423.5 155v6" stroke="#b0b0b0" stroke-width="1"/><path d="M1431.5 155v6" stroke="#b0b0b0" stroke-width="1"/><path d="M1440.5 155v6" stroke="#b0b0b0" stroke-width="1"/><path d="M1448.5 155v6" stroke="#b0b0b0" stroke-width="1"/><path d="M1457.5 155v6" stroke="#b0b0b0" stroke-width="1"/><path d="M1465.5 155v6" stroke="#b0b0b0" stroke-width="1"/><path d="M1474.5 155v6" stroke="#b0b0b0" stroke-width="1"/><path d="M1482.5 155v6" stroke="#b0b0b0" stroke-width="1"/><path d="M1491.5 155v6" stroke="#b0b0b0" stroke-width="1"/><path d="M1499.5 155v6" stroke="#b0b0b0" stroke-width="1"/><path d="M1508.5 155v6" stroke="#b0b0b0" stroke-width="1"/><path d="M1516.5 155v6" stroke="#b0b0b0" stroke-width="1"/><path d="M1525.5 155v6" stroke="#b0b0b0" stroke-width="1"/><path d="M1533.5 155v6" stroke="#b0b0b0" stroke-width="1"/><path d="M1542.5 155v6" stroke="#b0b0b0" stroke-width="1"/><path d="M1550.5 155v6" stroke="#b0b0b0" stroke-width="1"/><path d="M1559.5 155v6" stroke="#b0b0b0" stroke-width="1"/><path d="M1567.5 155v6" stroke="#b0b0b0" stroke-width="1"/><path d="M1576.5 155v6" stroke="#b0b0b0" stroke-width="1"/><path d="M1584.5 155v6" stroke="#b0b0b0" stroke-width="1"/><path d="M1593.5 155v6" stroke="#b0b0b0" stroke-width="1"/><path d="M1601.5 155v6" stroke="#b0b0b0" stroke-width="1"/><path d="M1610.5 155v6" stroke="#b0b0b0" stroke-width="1"/><path d="M1618.5 155v6" stroke="#b0b0b0" stroke-width="1"/><path d="M1626.5 155v6" stroke="#b0b0b0" stroke-width="1"/><path d="M1635.5 155v6" stroke="#b0b0b0" stroke-width="1"/><path d="M1643.5 155v6" stroke="#b0b0b0" stroke-width="1"/><path d="M1652.5 155v6" stroke="#b0b0b0" stroke-width="1"/><path d="M1660.5 155v6" stroke="#b0b0b0" stroke-width="1"/><path d="M1669.5 155v6" stroke="#b0b0b0" stroke-width="1"/><path d="M1677.5 155v6" stroke="#b0b0b0" stroke-width="1"/><path d="M1686.5 155v6" stroke="#b0b0b0" stroke-width="1"/><path d="M1694.5 155v6" stroke="#b0b0b0" stroke-width="1"/><path d="M1703.5 155v6" stroke="#b0b0b0" stroke-width="1"/><path d="M1711.5 155v6" stroke="#b0b0b0" stroke-width="1"/><path d="M1720.5 155v6" stroke="#b0b0b0" stroke-width="1"/><path d="M1728.5 155v6" stroke="#b0b0b0" stroke-width="1"/><path d="M1737.5 155v6" stroke="#b0b0b0" stroke-width="1"/><path d="M1745.5 155v6" stroke="#b0b0b0" stroke-width="1"/><path d="M1754.5 155v6" stroke="#b0b0b0" stroke-width="1"/><path d="M1762.5 155v6" stroke="#b0b0b0" stroke-width="1"/><path d="M1771.5 155v6" stroke="#b0b0b0" stroke-width="1"/><path d="M1779.5 155v6" stroke="#b0b0b0" stroke-width="1"/><path d="M1788.5 155v6" stroke="#b0b0b0" stroke-width="1"/><path d="M1796.5 155v6" stroke="#b0b0b0" stroke-width="1"/><path d="M1805.5 155v6" stroke="#b0b0b0" stroke-width="1"/><path d="M1813.5 155v6" stroke="#b0b0b0" stroke-width="1"/><path d="M1822.5 155v6" stroke="#b0b0b0" stroke-width="1"/><path d="M1830.5 155v6" stroke="#b0b0b0" stroke-width="1"/><path d="M1838.5 155v6" stroke="#b0b0b0" stroke-width="1"/><path d="M1847.5 155v6" stroke="#b0b0b0" stroke-width="1"/><path d="M1855.5 155v6" stroke="#b0b0b0" stroke-width="1"/><path d="M1864.5 155v6" stroke="#b0b0b0" stroke-width="1"/><path d="M1872.5 155v6" stroke="#b0b0b0" stroke-width="1"/><path d="M1881.5 155v6" stroke="#b0b0b0" stroke-width="1"/><path d="M1889.5 155v6" stroke="#b0b0b0" stroke-width="1"/><path d="M1261.5 155v20" stroke="#b0b0b0" stroke-width="1"/><path d="M1473.5 155v20" stroke="#b0b0b0" stroke-width="1"/><path d="M1685.5 155v20" stroke="#b0b0b0" stroke-width="1"/></svg><div style="left:1263px;top:161.5px;height:13px;line-height:13px;font-size:10px;color:#b8b8b8;font-weight:normal;font-family:'Liberation Sans', sans-serif;white-space:nowrap;">01:39:16:00</div><div style="left:1475px;top:161.5px;height:13px;line-height:13px;font-size:10px;color:#b8b8b8;font-weight:normal;font-family:'Liberation Sans', sans-serif;white-space:nowrap;">01:39:17:00</div><div style="left:1687px;top:161.5px;height:13px;line-height:13px;font-size:10px;color:#b8b8b8;font-weight:normal;font-family:'Liberation Sans', sans-serif;white-space:nowrap;">01:39:18:00</div><div style="left:1111px;top:165.5px;height:13px;line-height:13px;font-size:10px;color:#c0c0c0;font-weight:normal;font-family:'Liberation Sans', sans-serif;white-space:nowrap;">[00:00:03:08]</div><div style="left:1096px;top:180px;width:90px;height:840px;background:#2e2e2e;"></div><div style="left:1186px;top:180px;width:711px;height:848px;background:#2a2a2a;"></div><div style="left:1096px;top:180px;width:801px;height:1px;background:#1c1c1c;"></div><div style="left:1100px;top:208.5px;width:81px;height:13px;line-height:13px;font-size:10px;color:#c8c8c8;font-weight:normal;font-family:'Liberation Sans', sans-serif;white-space:nowrap;text-align:center;overflow:hidden;">Main</div><div style="left:1100px;top:278.5px;width:81px;height:13px;line-height:13px;font-size:10px;color:#c8c8c8;font-weight:normal;font-family:'Liberation Sans', sans-serif;white-space:nowrap;text-align:center;overflow:hidden;">Edit On</div><div style="left:1096px;top:320px;width:801px;height:1px;background:#1c1c1c;"></div><div style="left:1100px;top:348.5px;width:81px;height:13px;line-height:13px;font-size:10px;color:#c8c8c8;font-weight:normal;font-family:'Liberation Sans', sans-serif;white-space:nowrap;text-align:center;overflow:hidden;">Main</div><div style="left:1100px;top:418.5px;width:81px;height:13px;line-height:13px;font-size:10px;color:#c8c8c8;font-weight:normal;font-family:'Liberation Sans', sans-serif;white-space:nowrap;text-align:center;overflow:hidden;">Edit On</div><div style="left:1096px;top:460px;width:801px;height:1px;background:#1c1c1c;"></div><div style="left:1100px;top:488.5px;width:81px;height:13px;line-height:13px;font-size:10px;color:#c8c8c8;font-weight:normal;font-family:'Liberation Sans', sans-serif;white-space:nowrap;text-align:center;overflow:hidden;">Main</div><div style="left:1100px;top:558.5px;width:81px;height:13px;line-height:13px;font-size:10px;color:#c8c8c8;font-weight:normal;font-family:'Liberation Sans', sans-serif;white-space:nowrap;text-align:center;overflow:hidden;">Edit On</div><div style="left:1096px;top:600px;width:801px;height:1px;background:#1c1c1c;"></div><div style="left:1100px;top:628.5px;width:81px;height:13px;line-height:13px;font-size:10px;color:#c8c8c8;font-weight:normal;font-family:'Liberation Sans', sans-serif;white-space:nowrap;text-align:center;overflow:hidden;">Main</div><div style="left:1100px;top:698.5px;width:81px;height:13px;line-height:13px;font-size:10px;color:#c8c8c8;font-weight:normal;font-family:'Liberation Sans', sans-serif;white-space:nowrap;text-align:center;overflow:hidden;">Edit On</div><div style="left:1096px;top:740px;width:801px;height:1px;background:#1c1c1c;"></div><div style="left:1100px;top:768.5px;width:81px;height:13px;line-height:13px;font-size:10px;color:#c8c8c8;font-weight:normal;font-family:'Liberation Sans', sans-serif;white-space:nowrap;text-align:center;overflow:hidden;">Main</div><div style="left:1100px;top:838.5px;width:81px;height:13px;line-height:13px;font-size:10px;color:#c8c8c8;font-weight:normal;font-family:'Liberation Sans', sans-serif;white-space:nowrap;text-align:center;overflow:hidden;">Edit On</div><div style="left:1096px;top:880px;width:801px;height:1px;background:#1c1c1c;"></div><div style="left:1100px;top:908.5px;width:81px;height:13px;line-height:13px;font-size:10px;color:#c8c8c8;font-weight:normal;font-family:'Liberation Sans', sans-serif;white-space:nowrap;text-align:center;overflow:hidden;">Main</div><div style="left:1100px;top:978.5px;width:81px;height:13px;line-height:13px;font-size:10px;color:#c8c8c8;font-weight:normal;font-family:'Liberation Sans', sans-serif;white-space:nowrap;text-align:center;overflow:hidden;">Edit On</div><svg style="position:absolute;left:0px;top:0px;shape-rendering:crispEdges;" width="1920" height="1040" viewBox="0 0 1920 1040"><rect x="1186" y="181" width="444" height="68" fill="#2ecc6c"/><path d="M1452 181L1627 216Q1612 224 1620 236L1630 249H1452z" fill="#74dc9e"/><path d="M1186,208l1,1 1,-1 1,-6 1,6 1,0 1,2 1,-5 1,4 1,-1 1,-4 1,3 1,1 1,-2 1,2 1,1 1,0 1,-3 1,2 1,-1 1,1 1,0 1,-3 1,3 1,1 1,1 1,-3 1,2 1,2 1,-1 1,-2 1,2 1,-2 1,-3 1,-3 1,1 1,4 1,1 1,-1 1,-2 1,2 1,-2 1,-2 1,6 1,-2 1,1 1,-2 1,2 1,-9 1,7 1,0 1,3 1,-3 1,2 1,-2 1,-2 1,0 1,2 1,2 1,-1 1,1 1,-6 1,6 1,-1 1,-6 1,3 1,2 1,0 1,0 1,0 1,1 1,-8 1,2 1,6 1,-4 1,4 1,1 1,-1 1,3 1,-8 1,1 1,6 1,-2 1,-1 1,2 1,-2 1,2 1,0 1,0 1,-5 1,5 1,0 1,0 1,-4 1,2 1,0 1,5 1,0 1,-2 1,-4 1,1 1,2 1,0 1,0 1,1 1,-2 1,3 1,-2 1,1 1,-3 1,-24 1,4 1,1 1,-1 1,-4 1,7 1,-5 1,9 1,-7 1,-4 1,10 1,-6 1,-4 1,4 1,0 1,0 1,5 1,-5 1,-4 1,0 1,6 1,-6 1,10 1,-8 1,2 1,-4 1,0 1,0 1,0 1,12 1,-1 1,-2 1,3 1,6 1,-18 1,1 1,13 1,0 1,-3 1,-1 1,6 1,-7 1,8 1,1 1,2 1,-4 1,1 1,-1 1,-2 1,6 1,5 1,-3 1,0 1,-2 1,2 1,3 1,-1 1,-13 1,9 1,5 1,-11 1,9 1,-2 1,-5 1,5 1,0 1,0 1,0 1,-6 1,-1 1,2 1,7 1,-2 1,3 1,-3 1,-6 1,10 1,-4 1,-5 1,8 1,-6 1,6 1,-6 1,3 1,-1 1,5 1,-12 1,1 1,3 1,3 1,2 1,0 1,-8 1,11 1,-1 1,-2 1,-6 1,6 1,0 1,0 1,4 1,-4 1,3 1,-3 1,0 1,4 1,-10 1,9 1,-3 1,0 1,4 1,-4 1,0 1,-2 1,2 1,3 1,-5 1,1 1,2 1,0 1,0 1,-3 1,3 1,1 1,2 1,-6 1,-3 1,3 1,4 1,1 1,-4 1,-1 1,0 1,3 1,2 1,1 1,-3 1,-3 1,-3 1,1 1,7 1,1 1,-2 1,-1 1,2 1,-2 1,-5 1,2 1,1 1,-2 1,1 1,4 1,0 1,2 1,-2 1,0 1,0 1,-6 1,6 1,0 1,-6 1,4 1,5 1,-4 1,1 1,-6 1,9 1,0 1,-3 1,-5 1,2 1,3 1,0 1,-3 1,3 1,4 1,0 1,-3 1,0 1,-1 1,-4 1,3 1,-3 1,5 1,-2 1,5 1,-3 1,-5 1,8 1,-7 1,1 1,3 1,3 1,-6 1,6 1,-3 1,-1 1,2 1,-1 1,1 1,0 1,-2 1,-1 1,-3 1,4 1,4 1,-2 1,-6 1,8 1,0 1,-2 1,-1 1,1 1,0 1,0 1,0 1,0 1,0 1,-5 1,5 1,0 1,0 1,2 1,-1 1,-1 1,-2 1,5 1,-3 1,1 1,-1 1,1 1,-3 1,5 1,-2 1,-1 1,-1 1,-3 1,6 1,0 1,1 1,0 1,-6 1,3 1,-1 1,3 1,-2 1,-3 1,4 1,-5 1,2 1,0 1,3 1,1 1,1 1,-4 1,2 1,0 1,-1 1,0 1,0 1,3 1,1 1,0 1,-2 1,1 1,-2 1,-4 1,2 1,3 1,-1 1,1 1,0 1,0 1,1 1,-1 1,-2 1,-1 1,3 1,0 1,0 1,0 1,2 1,-2 1,1 1,-4 1,4 1,-1 1,-2 1,2 1,0 1,1 1,1 1,-1 1,1 1,-3 1,1 1,-1 1,2 1,1 1,-4 1,3 1,0 1,0 1,0 1,1 1,1 1,-3 1,1 1,-3 1,2 1,2 1,-1 1,-2 1,2 1,0 1,0 1,-3 1,5 1,-3 1,2 1,1 1,-2 1,1 1,0 1,-1 1,1 1,-2 1,1 1,-1 1,2 1,0 1,0 1,0 1,0 1,-2 0,9 -1,2 -1,-2 -1,0 -1,0 -1,0 -1,0 -1,1 -1,2 -1,-2 -1,1 -1,1 -1,-2 -1,3 -1,-2 -1,0 -1,0 -1,1 -1,-1 -1,0 -1,0 -1,0 -1,-1 -1,0 -1,-1 -1,4 -1,0 -1,-1 -1,-1 -1,2 -1,1 -1,-3 -1,-1 -1,1 -1,0 -1,0 -1,2 -1,-2 -1,0 -1,0 -1,-1 -1,1 -1,0 -1,4 -1,-3 -1,2 -1,1 -1,-1 -1,-1 -1,-2 -1,1 -1,-1 -1,3 -1,-2 -1,2 -1,-3 -1,1 -1,3 -1,-3 -1,-1 -1,1 -1,-1 -1,2 -1,3 -1,-2 -1,0 -1,-2 -1,-1 -1,1 -1,0 -1,0 -1,0 -1,0 -1,1 -1,-1 -1,1 -1,-1 -1,0 -1,3 -1,-2 -1,1 -1,-1 -1,2 -1,-2 -1,0 -1,4 -1,-4 -1,3 -1,1 -1,-4 -1,3 -1,-2 -1,-1 -1,-1 -1,0 -1,1 -1,0 -1,0 -1,2 -1,1 -1,-3 -1,-2 -1,3 -1,0 -1,5 -1,-2 -1,-3 -1,-2 -1,0 -1,4 -1,-3 -1,2 -1,4 -1,-7 -1,3 -1,-2 -1,0 -1,-1 -1,7 -1,-5 -1,0 -1,0 -1,-1 -1,1 -1,3 -1,-5 -1,1 -1,1 -1,-2 -1,3 -1,-1 -1,-2 -1,1 -1,-1 -1,1 -1,-1 -1,3 -1,0 -1,0 -1,5 -1,-8 -1,7 -1,-4 -1,-3 -1,1 -1,1 -1,1 -1,1 -1,-3 -1,5 -1,2 -1,1 -1,0 -1,-6 -1,6 -1,-2 -1,2 -1,-6 -1,4 -1,-6 -1,5 -1,-2 -1,-2 -1,2 -1,-1 -1,0 -1,1 -1,0 -1,3 -1,2 -1,-5 -1,5 -1,-5 -1,4 -1,-4 -1,0 -1,1 -1,3 -1,3 -1,-7 -1,0 -1,3 -1,-2 -1,6 -1,-10 -1,0 -1,2 -1,1 -1,0 -1,0 -1,1 -1,0 -1,1 -1,-1 -1,0 -1,7 -1,-8 -1,7 -1,1 -1,-6 -1,-3 -1,2 -1,0 -1,1 -1,-4 -1,7 -1,-4 -1,4 -1,-4 -1,0 -1,-3 -1,5 -1,5 -1,-7 -1,7 -1,-1 -1,-9 -1,3 -1,0 -1,-2 -1,9 -1,-8 -1,7 -1,-5 -1,-3 -1,3 -1,2 -1,-2 -1,7 -1,-10 -1,7 -1,-3 -1,-1 -1,1 -1,-1 -1,0 -1,0 -1,0 -1,0 -1,0 -1,0 -1,0 -1,7 -1,-7 -1,7 -1,-8 -1,8 -1,-6 -1,-4 -1,4 -1,-1 -1,1 -1,6 -1,-1 -1,-5 -1,6 -1,-7 -1,-1 -1,2 -1,-1 -1,1 -1,0 -1,8 -1,-9 -1,8 -1,-9 -1,11 -1,-9 -1,8 -1,-8 -1,-3 -1,1 -1,2 -1,2 -1,6 -1,-8 -1,0 -1,3 -1,6 -1,-8 -1,-1 -1,1 -1,-3 -1,6 -1,-3 -1,9 -1,-9 -1,0 -1,-2 -1,2 -1,7 -1,-7 -1,12 -1,-11 -1,3 -1,5 -1,-6 -1,-2 -1,1 -1,6 -1,3 -1,-8 -1,-1 -1,14 -1,-2 -1,-4 -1,6 -1,-14 -1,18 -1,-6 -1,5 -1,-7 -1,7 -1,-5 -1,6 -1,-6 -1,-1 -1,7 -1,0 -1,-4 -1,-6 -1,6 -1,2 -1,-4 -1,6 -1,-10 -1,6 -1,0 -1,3 -1,-3 -1,4 -1,-4 -1,0 -1,-8 -1,7 -1,-23 -1,1 -1,5 -1,0 -1,-7 -1,3 -1,-1 -1,-1 -1,-1 -1,1 -1,1 -1,1 -1,2 -1,-1 -1,-1 -1,-2 -1,5 -1,-1 -1,2 -1,-4 -1,-2 -1,6 -1,-3 -1,-1 -1,0 -1,-2 -1,3 -1,0 -1,0 -1,0 -1,0 -1,0 -1,-2 -1,6 -1,-4 -1,1 -1,0 -1,0 -1,4 -1,-4 -1,2 -1,-2 -1,0 -1,0 -1,0 -1,0 -1,0 -1,6 -1,-6 -1,1 -1,-3 -1,2 -1,-3 -1,3 -1,0 -1,3 -1,-3 -1,0 -1,0 -1,0 -1,-2 -1,1 -1,1 -1,4 -1,-4 -1,5 -1,-6 -1,0 -1,5 -1,0 -1,-4 -1,-1 -1,5 -1,-3 -1,-2 -1,-1 -1,0 -1,0 -1,4 -1,-7 -1,3 -1,-2 -1,5 -1,-3 -1,3 -1,-5 -1,3 -1,3 -1,-1 -1,-4 -1,0 -1,-1 -1,3 -1,-1 -1,-1 -1,5 -1,-7 -1,3 -1,-1 -1,-2 -1,3 -1,0 -1,-1 -1,1 -1,0 -1,0 -1,0 -1,2 -1,-1 -1,5z" fill="#c2efd2" stroke="#0a2a12" stroke-width="1"/><path d="M1630,214l1,0 1,1 1,-1 1,-1 1,0 1,0 1,0 1,-1 1,2 1,-2 1,0 1,0 1,0 1,0 1,0 1,0 1,2 1,-1 1,0 1,1 1,1 1,-1 1,0 1,0 1,1 1,-1 1,0 1,0 1,1 1,-1 1,0 1,1 1,-1 1,-1 1,0 1,0 1,-1 1,2 1,-2 1,0 1,1 1,0 1,-1 1,0 1,0 1,0 1,1 1,0 1,-1 1,1 1,1 1,0 1,0 1,1 1,-1 1,0 1,1 1,-1 1,1 1,-1 1,0 1,0 1,0 1,0 1,-1 1,0 1,0 1,1 1,-1 1,-1 1,0 1,2 1,-2 1,0 1,0 1,0 1,1 1,-1 1,0 1,-30 1,0 1,0 1,11 1,-11 1,0 1,0 1,4 1,-4 1,0 1,0 1,0 1,0 1,0 1,0 1,0 1,5 1,-5 1,0 1,0 1,8 1,-8 1,0 1,2 1,-2 1,0 1,0 1,5 1,-5 1,0 1,0 1,0 1,15 1,-15 1,0 1,2 1,8 1,-10 1,0 1,14 1,-14 1,0 1,14 1,-14 1,0 1,0 1,0 1,0 1,0 1,0 1,0 1,0 1,11 1,-11 1,0 1,0 1,0 1,0 1,12 1,-12 1,0 1,0 1,0 1,4 1,-4 1,0 1,0 1,0 1,0 1,0 1,0 1,0 1,0 1,0 1,0 1,0 1,0 1,2 1,-2 1,0 1,0 1,2 1,-2 1,0 1,0 1,6 1,-2 1,-4 1,0 1,0 1,0 1,0 1,0 1,11 1,-11 1,0 1,0 1,8 1,-8 1,15 1,-15 1,0 1,8 1,-8 1,0 1,0 1,0 1,0 1,0 1,14 1,-14 1,0 1,0 1,0 1,13 1,-7 1,-6 1,0 1,0 1,12 1,-12 1,8 1,-8 1,9 1,1 1,-10 1,0 1,12 1,-5 1,-7 1,12 1,-12 1,0 1,0 1,0 1,0 1,0 1,0 1,0 1,0 1,0 1,13 1,-6 1,9 1,-16 1,0 1,9 1,5 1,-10 1,-4 1,1 1,-1 1,0 1,0 1,8 1,-1 1,-7 1,0 1,0 1,0 1,0 1,12 1,-9 1,9 1,1 1,-13 1,9 1,-9 1,0 1,0 1,0 1,0 1,0 1,9 1,-9 1,0 1,0 1,0 1,0 1,0 1,0 1,0 1,0 1,12 1,-12 1,12 1,-12 1,0 0,68 -1,-16 -1,16 -1,0 -1,0 -1,0 -1,0 -1,0 -1,0 -1,-12 -1,12 -1,0 -1,0 -1,0 -1,-8 -1,8 -1,0 -1,0 -1,0 -1,-15 -1,15 -1,0 -1,-3 -1,3 -1,-15 -1,9 -1,-2 -1,8 -1,0 -1,0 -1,-14 -1,14 -1,-4 -1,-4 -1,8 -1,0 -1,-2 -1,2 -1,-16 -1,16 -1,0 -1,-1 -1,1 -1,-14 -1,5 -1,-3 -1,12 -1,-2 -1,-4 -1,6 -1,-3 -1,3 -1,0 -1,0 -1,0 -1,0 -1,0 -1,0 -1,0 -1,-11 -1,11 -1,0 -1,0 -1,0 -1,0 -1,0 -1,-15 -1,15 -1,0 -1,0 -1,0 -1,0 -1,0 -1,0 -1,0 -1,0 -1,0 -1,0 -1,0 -1,0 -1,-9 -1,4 -1,-1 -1,-5 -1,11 -1,-3 -1,3 -1,0 -1,-11 -1,-1 -1,11 -1,-11 -1,12 -1,-13 -1,13 -1,-10 -1,10 -1,0 -1,0 -1,-11 -1,11 -1,0 -1,0 -1,-10 -1,10 -1,0 -1,0 -1,0 -1,0 -1,-1 -1,1 -1,-13 -1,5 -1,8 -1,0 -1,0 -1,0 -1,0 -1,-12 -1,12 -1,-7 -1,7 -1,0 -1,0 -1,0 -1,0 -1,-1 -1,1 -1,0 -1,-4 -1,4 -1,0 -1,0 -1,-1 -1,1 -1,0 -1,-11 -1,9 -1,2 -1,0 -1,0 -1,0 -1,0 -1,0 -1,0 -1,0 -1,-16 -1,16 -1,0 -1,-3 -1,3 -1,0 -1,0 -1,0 -1,-12 -1,-2 -1,14 -1,0 -1,-8 -1,-4 -1,12 -1,-6 -1,6 -1,-9 -1,9 -1,0 -1,0 -1,-5 -1,5 -1,0 -1,0 -1,-11 -1,11 -1,-3 -1,3 -1,0 -1,0 -1,0 -1,0 -1,0 -1,0 -1,0 -1,0 -1,-1 -1,-15 -1,10 -1,6 -1,0 -1,-30 -1,-1 -1,1 -1,0 -1,0 -1,0 -1,0 -1,-1 -1,-1 -1,2 -1,-2 -1,1 -1,0 -1,-1 -1,1 -1,-1 -1,0 -1,0 -1,0 -1,0 -1,0 -1,0 -1,0 -1,0 -1,0 -1,0 -1,0 -1,1 -1,-1 -1,1 -1,1 -1,0 -1,0 -1,0 -1,0 -1,0 -1,0 -1,0 -1,0 -1,0 -1,0 -1,0 -1,0 -1,-1 -1,0 -1,0 -1,-1 -1,0 -1,0 -1,-1 -1,1 -1,0 -1,0 -1,0 -1,0 -1,-1 -1,1 -1,0 -1,-1 -1,2 -1,0 -1,0 -1,0 -1,1 -1,-1 -1,1 -1,0 -1,-1 -1,1 -1,-2 -1,2 -1,0 -1,0 -1,0 -1,-1 -1,0 -1,0 -1,0 -1,-1 -1,0z" fill="#808080" stroke="#2a2a2a" stroke-width="1"/><path d="M1186,264l1,-5 1,1 1,3 1,1 1,0 1,-10 1,0 1,4 1,6 1,-1 1,0 1,0 1,-3 1,-1 1,-9 1,12 1,2 1,-14 1,9 1,4 1,-1 1,2 1,-2 1,2 1,-1 1,0 1,-13 1,15 1,-1 1,-12 1,12 1,1 1,-5 1,5 1,-1 1,-10 1,11 1,-15 1,16 1,0 1,-2 1,2 1,-1 1,-10 1,0 1,3 1,9 1,-8 1,8 1,1 1,-1 1,1 1,-10 1,10 1,-5 1,4 1,1 1,1 1,-8 1,7 1,-2 1,3 1,-1 1,-8 1,8 1,0 1,-6 1,3 1,0 1,4 1,-3 1,3 1,0 1,0 1,-7 1,6 1,1 1,-1 1,-13 1,1 1,13 1,-5 1,4 1,0 1,-6 1,5 1,-10 1,10 1,0 1,0 1,-12 1,12 1,-10 1,8 1,-13 1,14 1,0 1,-14 1,14 1,-6 1,-5 1,3 1,-8 1,14 1,-7 1,7 1,1 1,-5 1,4 1,-3 1,3 1,-6 1,-3 1,8 1,0 1,1 1,-6 1,1 1,3 1,-9 1,10 1,-1 1,-12 1,14 1,0 1,0 1,-1 1,1 1,-6 1,-8 1,13 1,3 1,-14 1,8 1,7 1,1 1,0 1,0 1,-5 1,-5 1,12 1,-7 1,8 1,1 1,-5 1,6 1,-6 1,7 1,-6 1,6 1,1 1,0 1,1 1,3 1,-3 1,3 1,0 1,0 1,-1 1,0 1,1 1,-3 1,0 1,0 1,2 1,0 1,-3 1,3 1,0 1,-1 1,1 1,-6 1,3 1,-1 1,1 1,-1 1,3 1,0 1,0 1,-1 1,-5 1,5 1,0 1,0 1,0 1,-4 1,5 1,-7 1,2 1,0 1,0 1,4 1,0 1,0 1,1 1,-4 1,4 1,0 1,0 1,0 1,1 1,-5 1,4 1,0 1,-1 1,2 1,0 1,0 1,-3 1,3 1,-3 1,3 1,-3 1,4 1,0 1,-1 1,-3 1,0 1,3 1,-2 1,-3 1,5 1,0 1,0 1,-4 1,4 1,-1 1,0 1,0 1,-6 1,6 1,-6 1,2 1,-2 1,5 1,0 1,0 1,-2 1,3 1,-7 1,6 1,-5 1,1 1,4 1,-3 1,0 0,19 -1,4 -1,-2 -1,1 -1,2 -1,0 -1,-5 -1,6 -1,-5 -1,3 -1,-4 -1,0 -1,0 -1,4 -1,-3 -1,-2 -1,5 -1,-4 -1,-2 -1,1 -1,-1 -1,1 -1,4 -1,-5 -1,0 -1,2 -1,2 -1,-1 -1,-3 -1,0 -1,0 -1,4 -1,-4 -1,-1 -1,1 -1,4 -1,-2 -1,-2 -1,0 -1,1 -1,-1 -1,4 -1,0 -1,1 -1,-1 -1,-4 -1,2 -1,-1 -1,0 -1,0 -1,0 -1,3 -1,-2 -1,1 -1,-1 -1,-1 -1,1 -1,4 -1,-4 -1,0 -1,-1 -1,1 -1,0 -1,0 -1,0 -1,-1 -1,0 -1,1 -1,0 -1,-1 -1,0 -1,0 -1,0 -1,0 -1,0 -1,2 -1,0 -1,2 -1,-2 -1,2 -1,-5 -1,0 -1,0 -1,4 -1,-4 -1,-1 -1,3 -1,-2 -1,-1 -1,1 -1,-1 -1,1 -1,-1 -1,5 -1,2 -1,0 -1,-2 -1,7 -1,-6 -1,4 -1,-3 -1,0 -1,0 -1,7 -1,-6 -1,1 -1,8 -1,-4 -1,5 -1,3 -1,-5 -1,6 -1,-7 -1,-2 -1,0 -1,4 -1,0 -1,-2 -1,7 -1,3 -1,-9 -1,0 -1,2 -1,9 -1,-11 -1,0 -1,-1 -1,0 -1,4 -1,-3 -1,-1 -1,3 -1,-3 -1,0 -1,-1 -1,1 -1,0 -1,4 -1,2 -1,-6 -1,-1 -1,1 -1,4 -1,-5 -1,0 -1,13 -1,-14 -1,8 -1,-8 -1,0 -1,-1 -1,2 -1,-1 -1,12 -1,-2 -1,-2 -1,-9 -1,0 -1,13 -1,-8 -1,-6 -1,1 -1,-2 -1,14 -1,-7 -1,-5 -1,1 -1,4 -1,0 -1,-1 -1,-6 -1,0 -1,1 -1,7 -1,-8 -1,3 -1,-1 -1,9 -1,-10 -1,4 -1,7 -1,-11 -1,7 -1,-8 -1,4 -1,-3 -1,12 -1,-5 -1,0 -1,3 -1,-10 -1,1 -1,6 -1,2 -1,-9 -1,1 -1,0 -1,11 -1,1 -1,-11 -1,0 -1,-1 -1,4 -1,-3 -1,16 -1,-12 -1,-4 -1,2 -1,-2 -1,2 -1,11 -1,-1 -1,-11 -1,14 -1,-6 -1,1 -1,-9 -1,15 -1,-14 -1,8 -1,-5 -1,-2 -1,-1 -1,11 -1,-11 -1,1 -1,13 -1,-13 -1,0 -1,7 -1,6 -1,-4 -1,-10 -1,2 -1,2 -1,10 -1,-13 -1,0 -1,13 -1,-14 -1,0 -1,1 -1,8 -1,-9 -1,1 -1,-1 -1,-1z" fill="#808080" stroke="#222" stroke-width="1"/><rect x="1432" y="250" width="198" height="70" fill="#7e7e7e"/><path d="M1455 284 Q1468 254 1630 250 V319 Q1468 314 1455 284Z" fill="#c2efd2" stroke="#111" stroke-width="1"/><rect x="1630" y="250" width="267" height="70" fill="#2ecc6c"/><path d="M1630,259l1,-2 1,8 1,-8 1,0 1,-6 1,11 1,1 1,-8 1,9 1,-7 1,6 1,-5 1,1 1,-3 1,12 1,-11 1,-5 1,15 1,-8 1,-2 1,-5 1,2 1,-2 1,12 1,-1 1,-11 1,-2 1,6 1,3 1,6 1,1 1,-14 1,5 1,-2 1,2 1,-5 1,0 1,0 1,12 1,-12 1,4 1,4 1,4 1,-14 1,2 1,4 1,1 1,4 1,-4 1,-1 1,7 1,-5 1,-8 1,2 1,10 1,-10 1,0 1,1 1,11 1,-13 1,0 1,-1 1,2 1,-2 1,0 1,2 1,-2 1,2 1,-2 1,1 1,14 1,-13 1,8 1,-8 1,11 1,-11 1,-2 1,0 1,2 1,5 1,5 1,-4 1,-6 1,0 1,-1 1,1 1,12 1,-9 1,-2 1,-1 1,3 1,-2 1,7 1,-2 1,-8 1,13 1,-13 1,6 1,9 1,-6 1,-9 1,16 1,-10 1,-4 1,0 1,7 1,1 1,-4 1,5 1,-8 1,4 1,-5 1,13 1,-15 1,7 1,-1 1,5 1,-11 1,7 1,6 1,-2 1,-9 1,9 1,0 1,-9 1,0 1,0 1,3 1,-2 1,-3 1,12 1,2 1,-14 1,2 1,0 1,8 1,-8 1,13 1,-13 1,11 1,-2 1,1 1,-7 1,13 1,-3 1,-10 1,-5 1,2 1,15 1,-14 1,2 1,0 1,0 1,8 1,-9 1,1 1,0 1,11 1,-11 1,10 1,-5 1,4 1,-9 1,10 1,-14 1,5 1,7 1,-2 1,-4 1,8 1,-8 1,-3 1,1 1,0 1,2 1,-2 1,0 1,0 1,2 1,-2 1,-1 1,10 1,-7 1,2 1,9 1,-7 1,4 1,0 1,-10 1,0 1,13 1,-9 1,-5 1,0 1,12 1,-10 1,-4 1,-1 1,4 1,9 1,-9 1,1 1,0 1,1 1,-2 1,0 1,-4 1,14 1,-10 1,4 1,-4 1,-1 1,1 1,7 1,-4 1,5 1,3 1,-11 1,2 1,-5 1,-2 1,6 1,-6 1,2 1,0 1,11 1,-11 1,3 1,-3 1,4 1,-4 1,0 1,-1 1,1 1,0 1,0 1,-2 1,2 1,4 1,-6 1,2 1,0 1,12 1,-12 1,9 1,0 1,-9 1,13 1,-12 1,-3 1,0 1,10 1,-8 1,0 1,-2 1,5 1,11 1,-9 1,-5 1,-2 1,5 1,-2 1,-2 1,1 1,5 1,-6 1,1 0,64 -1,0 -1,0 -1,-13 -1,15 -1,-13 -1,11 -1,-11 -1,10 -1,-6 -1,-1 -1,10 -1,-15 -1,12 -1,3 -1,-7 -1,7 -1,-5 -1,-7 -1,-2 -1,12 -1,-5 -1,7 -1,-6 -1,2 -1,-8 -1,12 -1,0 -1,-4 -1,-8 -1,12 -1,-2 -1,-5 -1,5 -1,-5 -1,-5 -1,0 -1,5 -1,-2 -1,6 -1,-13 -1,0 -1,8 -1,6 -1,-6 -1,-2 -1,0 -1,-4 -1,9 -1,-2 -1,7 -1,-17 -1,17 -1,-9 -1,8 -1,-3 -1,-1 -1,4 -1,1 -1,-10 -1,5 -1,0 -1,5 -1,-18 -1,13 -1,-2 -1,2 -1,-5 -1,5 -1,0 -1,1 -1,-1 -1,0 -1,0 -1,3 -1,-3 -1,0 -1,-3 -1,-5 -1,4 -1,4 -1,-2 -1,-7 -1,9 -1,0 -1,-6 -1,-6 -1,5 -1,-1 -1,-1 -1,9 -1,0 -1,-10 -1,10 -1,3 -1,-7 -1,7 -1,-12 -1,6 -1,2 -1,-2 -1,-6 -1,7 -1,2 -1,-11 -1,0 -1,14 -1,-3 -1,4 -1,-17 -1,7 -1,6 -1,1 -1,4 -1,0 -1,-1 -1,-12 -1,2 -1,8 -1,-2 -1,-2 -1,2 -1,-5 -1,9 -1,-4 -1,5 -1,-18 -1,16 -1,-13 -1,5 -1,-2 -1,5 -1,-3 -1,3 -1,5 -1,0 -1,0 -1,0 -1,-9 -1,9 -1,-1 -1,3 -1,-16 -1,13 -1,-11 -1,12 -1,0 -1,-11 -1,12 -1,-1 -1,-4 -1,-8 -1,7 -1,5 -1,-3 -1,-9 -1,12 -1,-12 -1,9 -1,3 -1,0 -1,-10 -1,10 -1,0 -1,2 -1,0 -1,-6 -1,4 -1,-2 -1,-2 -1,4 -1,-5 -1,5 -1,-3 -1,3 -1,-11 -1,11 -1,-4 -1,3 -1,-12 -1,10 -1,-3 -1,6 -1,-4 -1,-10 -1,15 -1,-2 -1,1 -1,0 -1,-11 -1,2 -1,11 -1,-10 -1,8 -1,0 -1,2 -1,-12 -1,10 -1,-11 -1,1 -1,4 -1,-3 -1,9 -1,-4 -1,0 -1,0 -1,6 -1,-2 -1,0 -1,-3 -1,3 -1,0 -1,-12 -1,13 -1,-2 -1,1 -1,2 -1,-13 -1,-1 -1,10 -1,4 -1,-9 -1,1 -1,-2 -1,8 -1,0 -1,2 -1,-4 -1,-9 -1,8 -1,-11 -1,2 -1,9 -1,-5 -1,3 -1,7 -1,-2 -1,-9 -1,8 -1,3 -1,-2 -1,0 -1,0 -1,-10 -1,-3 -1,15 -1,-2 -1,-5 -1,-5 -1,4 -1,-7 -1,-1 -1,9 -1,-7 -1,11 -1,-6 -1,-1 -1,3 -1,1 -1,-9 -1,5 -1,-3 -1,5 -1,-6 -1,7 -1,0 -1,5 -1,2z" fill="#c2efd2" stroke="#2ecc6c" stroke-width="1"/><path d="M1455 284L1630 250" stroke="#0f3a20" stroke-width="1.2"/><circle cx="1455" cy="284" r="3.5" fill="#1a5a38" stroke="#0a2a18"/><circle cx="1459" cy="302" r="3.5" fill="#1a5a38" stroke="#0a2a18"/><path d="M1452 181L1628 216" stroke="#0f3a20" stroke-width="1.2"/><path d="M1622 234 Q1632 242 1630 249" fill="none" stroke="#0f3a20" stroke-width="1"/><circle cx="1628" cy="216" r="3.5" fill="#1a5a38" stroke="#0a2a18"/><circle cx="1622" cy="234" r="3.5" fill="#1a5a38" stroke="#0a2a18"/><rect x="1186" y="321" width="444" height="68" fill="#2ecc6c"/><path d="M1452 321L1627 356Q1612 364 1620 376L1630 389H1452z" fill="#74dc9e"/><path d="M1186,349l1,-5 1,1 1,-1 1,2 1,-1 1,-1 1,5 1,1 1,0 1,-1 1,-1 1,1 1,-5 1,7 1,-4 1,1 1,-1 1,3 1,-2 1,-4 1,4 1,1 1,2 1,-7 1,5 1,-1 1,0 1,3 1,-6 1,5 1,-1 1,-1 1,0 1,-5 1,4 1,0 1,-5 1,5 1,-6 1,6 1,0 1,2 1,-6 1,1 1,2 1,-3 1,3 1,-1 1,4 1,-5 1,5 1,-3 1,-7 1,3 1,4 1,0 1,0 1,0 1,0 1,-4 1,6 1,-2 1,1 1,-4 1,3 1,1 1,-6 1,-1 1,8 1,0 1,-2 1,3 1,-3 1,-4 1,3 1,2 1,0 1,-2 1,0 1,2 1,0 1,0 1,0 1,1 1,-5 1,5 1,0 1,0 1,-2 1,2 1,0 1,0 1,0 1,0 1,0 1,1 1,-6 1,0 1,5 1,-5 1,5 1,0 1,3 1,-3 1,1 1,-2 1,1 1,-2 1,2 1,-26 1,4 1,0 1,0 1,2 1,-2 1,0 1,-4 1,1 1,12 1,-9 1,-1 1,1 1,10 1,-10 1,7 1,-11 1,0 1,5 1,8 1,-12 1,5 1,-6 1,1 1,7 1,0 1,-8 1,5 1,-5 1,10 1,1 1,-7 1,9 1,-1 1,-3 1,5 1,-1 1,1 1,1 1,1 1,2 1,-2 1,5 1,-3 1,-2 1,4 1,0 1,-1 1,-5 1,2 1,-1 1,10 1,-13 1,8 1,1 1,-1 1,4 1,-12 1,8 1,-2 1,6 1,-11 1,12 1,-2 1,-2 1,-2 1,5 1,-5 1,-2 1,-3 1,7 1,0 1,-5 1,5 1,1 1,1 1,-4 1,6 1,-5 1,3 1,1 1,1 1,-1 1,-3 1,2 1,1 1,-8 1,3 1,7 1,-1 1,-10 1,4 1,6 1,-1 1,-8 1,1 1,5 1,1 1,0 1,-7 1,6 1,0 1,-3 1,3 1,4 1,-8 1,-3 1,5 1,-4 1,6 1,0 1,-1 1,-1 1,2 1,-7 1,3 1,4 1,1 1,1 1,-1 1,0 1,-7 1,7 1,0 1,-5 1,5 1,0 1,0 1,-4 1,4 1,0 1,3 1,-3 1,-3 1,3 1,-4 1,4 1,-2 1,2 1,-1 1,-3 1,4 1,-4 1,4 1,1 1,-2 1,-5 1,8 1,1 1,-8 1,-1 1,3 1,6 1,1 1,-10 1,1 1,6 1,-5 1,6 1,-1 1,-5 1,-1 1,9 1,-1 1,-6 1,7 1,-9 1,6 1,0 1,-3 1,3 1,-1 1,-1 1,0 1,3 1,-2 1,-4 1,6 1,0 1,0 1,1 1,-1 1,3 1,-3 1,-2 1,4 1,-5 1,3 1,-2 1,-1 1,4 1,-4 1,-3 1,6 1,0 1,3 1,-8 1,5 1,-4 1,4 1,0 1,-1 1,-1 1,0 1,3 1,0 1,0 1,-2 1,2 1,0 1,-2 1,2 1,-3 1,2 1,-1 1,-3 1,4 1,1 1,0 1,2 1,-5 1,3 1,3 1,-2 1,0 1,0 1,-4 1,6 1,-1 1,-2 1,-1 1,1 1,-1 1,0 1,0 1,4 1,-3 1,2 1,-2 1,-3 1,1 1,1 1,2 1,-5 1,7 1,-1 1,-4 1,4 1,-6 1,2 1,4 1,-4 1,5 1,-2 1,-4 1,6 1,-1 1,-3 1,3 1,0 1,-4 1,6 1,-5 1,3 1,0 1,0 1,0 1,1 1,-3 1,-1 1,4 1,-5 1,3 1,-2 1,3 1,1 1,0 1,-4 1,5 1,-4 1,2 1,0 1,-2 1,2 1,-3 1,3 1,-1 1,-2 1,3 1,0 1,-3 1,2 1,-1 1,2 1,-1 1,0 1,-1 1,3 1,-3 1,2 1,1 1,-1 1,-1 1,3 1,0 1,-1 1,1 1,-1 1,-2 1,2 1,-1 1,-1 1,1 1,2 1,-1 1,-2 1,3 1,-1 1,2 1,-2 1,1 1,-2 1,1 1,1 1,0 1,1 1,-1 1,1 1,-1 1,-1 1,1 1,-3 1,0 1,3 1,0 0,8 -1,0 -1,2 -1,-2 -1,1 -1,-1 -1,0 -1,0 -1,0 -1,-1 -1,3 -1,0 -1,0 -1,-2 -1,1 -1,1 -1,-1 -1,0 -1,0 -1,0 -1,0 -1,0 -1,-1 -1,0 -1,-1 -1,0 -1,2 -1,1 -1,0 -1,-1 -1,0 -1,-2 -1,2 -1,2 -1,-4 -1,2 -1,0 -1,0 -1,0 -1,0 -1,-1 -1,0 -1,1 -1,0 -1,-1 -1,0 -1,2 -1,1 -1,-2 -1,4 -1,-3 -1,2 -1,-3 -1,-1 -1,5 -1,1 -1,-2 -1,0 -1,1 -1,-3 -1,0 -1,-1 -1,1 -1,3 -1,-3 -1,3 -1,-4 -1,1 -1,0 -1,4 -1,-3 -1,-1 -1,1 -1,-1 -1,4 -1,0 -1,-5 -1,4 -1,0 -1,1 -1,-3 -1,-1 -1,1 -1,4 -1,-4 -1,-2 -1,2 -1,0 -1,0 -1,0 -1,0 -1,0 -1,0 -1,-2 -1,5 -1,-2 -1,-1 -1,-1 -1,1 -1,4 -1,-4 -1,-2 -1,1 -1,2 -1,4 -1,-1 -1,2 -1,-5 -1,-1 -1,5 -1,-2 -1,-3 -1,-2 -1,4 -1,4 -1,-3 -1,-2 -1,5 -1,-3 -1,-3 -1,3 -1,-2 -1,0 -1,-2 -1,-1 -1,2 -1,1 -1,3 -1,-5 -1,4 -1,-2 -1,1 -1,-3 -1,5 -1,-2 -1,0 -1,3 -1,-3 -1,-1 -1,-1 -1,0 -1,8 -1,-6 -1,5 -1,-5 -1,0 -1,-1 -1,1 -1,1 -1,-1 -1,0 -1,6 -1,-6 -1,0 -1,5 -1,-5 -1,6 -1,-5 -1,-1 -1,0 -1,0 -1,2 -1,-2 -1,1 -1,0 -1,1 -1,-3 -1,8 -1,-6 -1,0 -1,-1 -1,1 -1,-3 -1,7 -1,-4 -1,-3 -1,2 -1,0 -1,1 -1,-1 -1,-1 -1,5 -1,2 -1,-4 -1,-1 -1,-2 -1,9 -1,-4 -1,1 -1,0 -1,-4 -1,-2 -1,9 -1,-8 -1,2 -1,5 -1,-5 -1,-1 -1,4 -1,-3 -1,0 -1,0 -1,0 -1,-3 -1,3 -1,1 -1,-4 -1,3 -1,6 -1,-6 -1,0 -1,-3 -1,1 -1,2 -1,7 -1,-9 -1,6 -1,0 -1,-3 -1,-1 -1,1 -1,1 -1,6 -1,-4 -1,-2 -1,-1 -1,1 -1,2 -1,-3 -1,4 -1,-4 -1,5 -1,-6 -1,1 -1,-1 -1,5 -1,-1 -1,-3 -1,6 -1,-7 -1,1 -1,2 -1,0 -1,-2 -1,-1 -1,0 -1,1 -1,-1 -1,-3 -1,5 -1,-1 -1,6 -1,-5 -1,0 -1,0 -1,-1 -1,0 -1,0 -1,10 -1,-6 -1,-3 -1,0 -1,0 -1,-3 -1,3 -1,6 -1,-6 -1,5 -1,-5 -1,9 -1,-8 -1,-5 -1,4 -1,-1 -1,-1 -1,2 -1,1 -1,-2 -1,8 -1,3 -1,-9 -1,4 -1,-2 -1,-4 -1,2 -1,4 -1,-4 -1,0 -1,0 -1,0 -1,0 -1,2 -1,-4 -1,12 -1,-6 -1,0 -1,0 -1,2 -1,7 -1,-6 -1,0 -1,10 -1,3 -1,-14 -1,3 -1,6 -1,-5 -1,-2 -1,-4 -1,-1 -1,3 -1,12 -1,-14 -1,10 -1,0 -1,6 -1,-3 -1,-1 -1,-1 -1,0 -1,1 -1,4 -1,-4 -1,2 -1,-2 -1,0 -1,-4 -1,-3 -1,11 -1,-4 -1,4 -1,-11 -1,6 -1,1 -1,-8 -1,-14 -1,3 -1,-5 -1,3 -1,-2 -1,-2 -1,4 -1,-3 -1,1 -1,1 -1,1 -1,-1 -1,3 -1,-6 -1,2 -1,0 -1,1 -1,-3 -1,1 -1,2 -1,0 -1,-1 -1,6 -1,-6 -1,1 -1,1 -1,-2 -1,2 -1,4 -1,-6 -1,5 -1,3 -1,-8 -1,6 -1,-5 -1,2 -1,0 -1,0 -1,7 -1,-2 -1,-7 -1,5 -1,-5 -1,6 -1,-1 -1,-3 -1,6 -1,-9 -1,0 -1,3 -1,-2 -1,6 -1,1 -1,2 -1,-2 -1,-5 -1,1 -1,1 -1,-2 -1,-3 -1,3 -1,2 -1,-1 -1,3 -1,1 -1,-5 -1,-3 -1,2 -1,4 -1,-7 -1,5 -1,2 -1,-4 -1,-3 -1,7 -1,1 -1,-6 -1,4 -1,1 -1,-5 -1,0 -1,0 -1,-2 -1,0 -1,2 -1,1 -1,-1 -1,3 -1,-6 -1,1 -1,1 -1,-1 -1,2 -1,-1 -1,6 -1,-8 -1,4 -1,-4 -1,2 -1,6 -1,-5 -1,0 -1,0 -1,-2 -1,2 -1,-2 -1,2 -1,2 -1,0 -1,-4z" fill="#c2efd2" stroke="#0a2a12" stroke-width="1"/><path d="M1630,355l1,-1 1,0 1,0 1,-1 1,0 1,-1 1,2 1,-2 1,0 1,0 1,2 1,-2 1,0 1,0 1,0 1,0 1,0 1,2 1,-1 1,0 1,0 1,1 1,0 1,0 1,0 1,1 1,-1 1,0 1,0 1,0 1,0 1,0 1,0 1,-1 1,0 1,0 1,-1 1,2 1,-2 1,0 1,0 1,0 1,0 1,0 1,0 1,1 1,-1 1,1 1,1 1,-1 1,1 1,0 1,0 1,1 1,0 1,0 1,-1 1,1 1,-1 1,0 1,1 1,-1 1,0 1,0 1,0 1,0 1,-1 1,1 1,-1 1,0 1,-1 1,0 1,0 1,1 1,-1 1,0 1,1 1,0 1,-1 1,-30 1,0 1,8 1,2 1,-10 1,6 1,4 1,-2 1,-8 1,0 1,0 1,0 1,0 1,0 1,7 1,-7 1,1 1,12 1,-10 1,-3 1,15 1,-15 1,0 1,0 1,0 1,0 1,13 1,-13 1,3 1,-3 1,0 1,0 1,7 1,3 1,-10 1,0 1,14 1,-14 1,0 1,0 1,0 1,0 1,5 1,-5 1,4 1,-4 1,0 1,0 1,0 1,0 1,2 1,-2 1,16 1,-2 1,-14 1,0 1,0 1,13 1,-10 1,-3 1,0 1,11 1,-11 1,1 1,13 1,-14 1,14 1,-14 1,15 1,-15 1,15 1,-12 1,-3 1,2 1,-2 1,0 1,0 1,11 1,-11 1,5 1,-5 1,0 1,0 1,0 1,0 1,0 1,0 1,0 1,0 1,0 1,1 1,-1 1,0 1,0 1,10 1,-10 1,16 1,-16 1,0 1,0 1,0 1,0 1,0 1,0 1,12 1,-12 1,0 1,0 1,0 1,0 1,6 1,-6 1,0 1,0 1,0 1,0 1,0 1,0 1,0 1,0 1,2 1,-2 1,0 1,11 1,-11 1,0 1,0 1,0 1,0 1,0 1,0 1,12 1,-12 1,0 1,0 1,0 1,0 1,0 1,0 1,0 1,0 1,0 1,8 1,-8 1,0 1,12 1,-12 1,8 1,-8 1,0 1,0 1,0 1,9 1,-3 1,1 1,3 1,-10 1,0 1,0 1,0 1,0 1,11 1,-11 1,0 1,0 1,10 1,-10 1,0 1,0 1,0 1,0 1,11 1,-2 1,6 1,-7 1,-7 1,6 1,-7 1,0 1,0 1,0 1,0 1,0 1,2 1,10 1,-11 1,-1 1,0 0,68 -1,-8 -1,3 -1,5 -1,0 -1,0 -1,-13 -1,1 -1,4 -1,8 -1,0 -1,-4 -1,4 -1,-12 -1,7 -1,-9 -1,14 -1,0 -1,0 -1,0 -1,0 -1,0 -1,0 -1,-14 -1,14 -1,0 -1,0 -1,-6 -1,6 -1,0 -1,0 -1,0 -1,0 -1,0 -1,0 -1,-14 -1,14 -1,0 -1,-3 -1,3 -1,0 -1,0 -1,0 -1,0 -1,0 -1,-9 -1,-6 -1,15 -1,-4 -1,4 -1,0 -1,0 -1,0 -1,0 -1,-10 -1,10 -1,0 -1,0 -1,0 -1,0 -1,0 -1,0 -1,0 -1,0 -1,0 -1,-4 -1,4 -1,0 -1,-7 -1,7 -1,0 -1,-2 -1,2 -1,-14 -1,14 -1,0 -1,-8 -1,6 -1,2 -1,0 -1,0 -1,0 -1,0 -1,-13 -1,13 -1,-15 -1,15 -1,0 -1,0 -1,-10 -1,10 -1,0 -1,0 -1,0 -1,0 -1,0 -1,0 -1,0 -1,0 -1,-10 -1,6 -1,4 -1,-16 -1,6 -1,10 -1,0 -1,0 -1,0 -1,-8 -1,8 -1,0 -1,0 -1,0 -1,-15 -1,13 -1,2 -1,0 -1,0 -1,-2 -1,2 -1,0 -1,-10 -1,10 -1,-5 -1,0 -1,5 -1,0 -1,0 -1,0 -1,0 -1,0 -1,0 -1,0 -1,-12 -1,4 -1,-3 -1,3 -1,8 -1,-2 -1,2 -1,0 -1,0 -1,-9 -1,9 -1,0 -1,0 -1,0 -1,-2 -1,-11 -1,0 -1,13 -1,0 -1,-11 -1,11 -1,0 -1,0 -1,-15 -1,15 -1,0 -1,0 -1,0 -1,0 -1,0 -1,0 -1,0 -1,0 -1,-2 -1,2 -1,0 -1,0 -1,0 -1,0 -1,0 -1,0 -1,0 -1,0 -1,-12 -1,8 -1,4 -1,0 -1,0 -1,0 -1,-11 -1,11 -1,-11 -1,11 -1,0 -1,0 -1,-30 -1,0 -1,-2 -1,1 -1,1 -1,0 -1,0 -1,0 -1,0 -1,-1 -1,-1 -1,1 -1,0 -1,0 -1,0 -1,-1 -1,-1 -1,1 -1,0 -1,-1 -1,1 -1,-1 -1,0 -1,0 -1,1 -1,0 -1,0 -1,1 -1,0 -1,0 -1,0 -1,-1 -1,2 -1,0 -1,0 -1,-1 -1,1 -1,0 -1,0 -1,0 -1,0 -1,0 -1,0 -1,-1 -1,0 -1,0 -1,-1 -1,0 -1,-1 -1,0 -1,1 -1,0 -1,-1 -1,1 -1,0 -1,0 -1,0 -1,0 -1,1 -1,0 -1,-1 -1,1 -1,1 -1,0 -1,0 -1,0 -1,0 -1,0 -1,-1 -1,1 -1,-2 -1,2 -1,-1 -1,1 -1,-1 -1,0 -1,0 -1,0 -1,-1 -1,0z" fill="#808080" stroke="#2a2a2a" stroke-width="1"/><path d="M1186,402l1,2 1,-1 1,9 1,-4 1,-2 1,6 1,-2 1,2 1,-6 1,-4 1,2 1,1 1,-2 1,8 1,-5 1,-1 1,-2 1,3 1,0 1,1 1,5 1,0 1,1 1,-11 1,10 1,0 1,-5 1,-3 1,2 1,5 1,-1 1,2 1,1 1,-1 1,1 1,-3 1,3 1,0 1,-2 1,-4 1,6 1,-4 1,4 1,-6 1,5 1,-3 1,-3 1,5 1,3 1,0 1,1 1,-1 1,-8 1,8 1,0 1,-3 1,3 1,1 1,0 1,-4 1,4 1,0 1,-2 1,2 1,0 1,1 1,-5 1,5 1,-4 1,2 1,2 1,-4 1,3 1,-3 1,3 1,-6 1,7 1,0 1,-3 1,2 1,0 1,-2 1,2 1,-1 1,-4 1,6 1,-1 1,-1 1,-4 1,6 1,-1 1,0 1,0 1,0 1,0 1,0 1,-2 1,2 1,-3 1,-1 1,3 1,-3 1,-3 1,6 1,-4 1,-1 1,5 1,-6 1,1 1,5 1,-3 1,3 1,0 1,-8 1,7 1,-4 1,-3 1,7 1,-3 1,1 1,3 1,-1 1,0 1,-8 1,7 1,0 1,0 1,0 1,-2 1,2 1,1 1,-10 1,9 1,1 1,-10 1,1 1,3 1,5 1,-6 1,5 1,1 1,-10 1,1 1,1 1,8 1,-4 1,4 1,0 1,0 1,-3 1,3 1,-2 1,1 1,0 1,0 1,0 1,0 1,1 1,-9 1,5 1,4 1,-4 1,4 1,-1 1,-4 1,-3 1,8 1,1 1,-3 1,2 1,1 1,-6 1,5 1,-5 1,5 1,-7 1,7 1,1 1,-1 1,1 1,-8 1,9 1,-1 1,-4 1,4 1,0 1,1 1,-4 1,3 1,1 1,-1 1,1 1,-8 1,8 1,-2 1,2 1,0 1,0 1,0 1,0 1,-3 1,4 1,-1 1,-7 1,8 1,-5 1,0 1,0 1,4 1,1 1,0 1,0 1,-6 1,3 1,1 1,-1 1,3 1,0 1,0 1,1 1,-7 1,3 1,0 1,4 1,-1 1,-1 1,1 1,1 1,-1 1,-2 1,3 1,-1 1,1 1,-6 1,5 1,-1 1,-5 1,1 1,5 1,-7 1,6 1,-6 1,7 1,0 1,0 1,-2 0,21 -1,4 -1,-5 -1,1 -1,-1 -1,0 -1,0 -1,0 -1,6 -1,0 -1,-6 -1,2 -1,-2 -1,4 -1,1 -1,1 -1,-7 -1,8 -1,-8 -1,2 -1,-1 -1,0 -1,0 -1,3 -1,-1 -1,-2 -1,1 -1,-2 -1,1 -1,-1 -1,2 -1,4 -1,-5 -1,0 -1,1 -1,-1 -1,4 -1,-4 -1,5 -1,-1 -1,-4 -1,5 -1,-3 -1,0 -1,-2 -1,0 -1,0 -1,5 -1,-5 -1,0 -1,6 -1,-5 -1,2 -1,-2 -1,1 -1,-1 -1,6 -1,-5 -1,8 -1,-9 -1,1 -1,0 -1,2 -1,5 -1,-7 -1,1 -1,-1 -1,0 -1,6 -1,-2 -1,-4 -1,8 -1,-1 -1,-7 -1,1 -1,-1 -1,1 -1,3 -1,-2 -1,-1 -1,0 -1,2 -1,-2 -1,1 -1,-1 -1,1 -1,7 -1,-7 -1,6 -1,2 -1,-8 -1,0 -1,0 -1,-1 -1,8 -1,2 -1,-10 -1,0 -1,9 -1,-4 -1,-5 -1,8 -1,-7 -1,-1 -1,8 -1,-2 -1,2 -1,-8 -1,0 -1,0 -1,0 -1,8 -1,2 -1,-10 -1,6 -1,-6 -1,9 -1,-6 -1,-2 -1,-2 -1,3 -1,0 -1,1 -1,5 -1,-1 -1,-4 -1,-2 -1,-2 -1,0 -1,0 -1,0 -1,7 -1,-2 -1,-5 -1,6 -1,0 -1,-7 -1,0 -1,3 -1,-3 -1,0 -1,4 -1,-1 -1,2 -1,0 -1,2 -1,-5 -1,-1 -1,5 -1,-7 -1,1 -1,2 -1,1 -1,0 -1,-1 -1,1 -1,-3 -1,-1 -1,3 -1,4 -1,-6 -1,-2 -1,6 -1,-2 -1,-3 -1,0 -1,4 -1,-2 -1,-2 -1,4 -1,-4 -1,0 -1,0 -1,6 -1,-6 -1,5 -1,-1 -1,-4 -1,0 -1,5 -1,0 -1,-5 -1,0 -1,-1 -1,1 -1,0 -1,0 -1,0 -1,6 -1,-6 -1,7 -1,-6 -1,0 -1,-1 -1,5 -1,3 -1,0 -1,-6 -1,-1 -1,0 -1,5 -1,2 -1,-7 -1,1 -1,5 -1,-3 -1,4 -1,1 -1,-7 -1,9 -1,-1 -1,-7 -1,-1 -1,7 -1,-7 -1,5 -1,0 -1,-1 -1,-3 -1,0 -1,4 -1,-4 -1,7 -1,-7 -1,5 -1,-6 -1,1 -1,0 -1,4 -1,-3 -1,1 -1,-2 -1,0 -1,0 -1,1 -1,2 -1,5 -1,-2 -1,-6 -1,1 -1,0 -1,-1 -1,1 -1,2 -1,1 -1,-4 -1,0z" fill="#808080" stroke="#222" stroke-width="1"/><rect x="1432" y="390" width="198" height="70" fill="#7e7e7e"/><path d="M1455 424 Q1468 394 1630 390 V459 Q1468 454 1455 424Z" fill="#c2efd2" stroke="#111" stroke-width="1"/><rect x="1630" y="390" width="267" height="70" fill="#2ecc6c"/><path d="M1630,390l1,9 1,4 1,-6 1,5 1,-5 1,6 1,-6 1,-1 1,1 1,0 1,2 1,-2 1,11 1,-11 1,7 1,-11 1,10 1,4 1,-2 1,-8 1,-2 1,8 1,-1 1,-6 1,6 1,-10 1,0 1,4 1,3 1,-7 1,6 1,-5 1,-1 1,-2 1,2 1,6 1,-6 1,-1 1,0 1,1 1,-2 1,11 1,-1 1,-10 1,15 1,-13 1,9 1,-9 1,0 1,-2 1,0 1,7 1,-5 1,-2 1,2 1,7 1,-3 1,-6 1,15 1,-10 1,-5 1,6 1,-2 1,-4 1,0 1,6 1,-4 1,0 1,13 1,-15 1,10 1,-8 1,10 1,-4 1,-6 1,10 1,-2 1,0 1,3 1,-7 1,4 1,5 1,-9 1,9 1,-2 1,-13 1,8 1,1 1,-9 1,8 1,5 1,-2 1,-11 1,5 1,-5 1,10 1,5 1,-8 1,5 1,-6 1,10 1,-14 1,12 1,-8 1,-4 1,8 1,-5 1,-3 1,3 1,-3 1,2 1,-2 1,2 1,-1 1,4 1,2 1,-9 1,15 1,-13 1,7 1,-7 1,0 1,9 1,-9 1,5 1,-5 1,1 1,-3 1,1 1,14 1,-13 1,-2 1,4 1,-4 1,10 1,0 1,-10 1,9 1,-2 1,-3 1,-4 1,5 1,0 1,2 1,2 1,-4 1,10 1,-4 1,-2 1,-4 1,0 1,2 1,-2 1,0 1,4 1,3 1,1 1,-8 1,6 1,-6 1,10 1,-12 1,2 1,6 1,-4 1,5 1,0 1,-3 1,2 1,-6 1,-3 1,3 1,0 1,0 1,10 1,-10 1,8 1,-8 1,4 1,-4 1,-3 1,6 1,-3 1,-4 1,16 1,-12 1,13 1,-13 1,6 1,-6 1,12 1,-9 1,0 1,-6 1,3 1,0 1,5 1,-2 1,8 1,-12 1,11 1,-11 1,7 1,-6 1,11 1,-16 1,11 1,-2 1,-9 1,2 1,3 1,0 1,0 1,-4 1,4 1,6 1,-6 1,0 1,6 1,-7 1,-2 1,4 1,-4 1,6 1,-6 1,8 1,5 1,-13 1,12 1,-7 1,-5 1,0 1,-1 1,1 1,8 1,-10 1,9 1,-2 1,-5 1,5 1,2 1,0 1,-9 1,2 1,0 1,0 1,0 1,0 1,5 1,6 1,-11 1,3 1,-3 1,-2 1,2 1,0 1,0 1,10 1,-10 1,4 1,1 1,4 1,-8 1,6 1,5 1,-12 1,2 0,62 -1,1 -1,-5 -1,4 -1,-4 -1,4 -1,-5 -1,-3 -1,8 -1,2 -1,-12 -1,12 -1,-7 -1,3 -1,2 -1,-6 -1,-1 -1,-7 -1,14 -1,2 -1,-10 -1,8 -1,0 -1,0 -1,-11 -1,5 -1,6 -1,-11 -1,13 -1,-2 -1,-13 -1,13 -1,0 -1,-5 -1,7 -1,-13 -1,13 -1,-10 -1,10 -1,-11 -1,11 -1,-2 -1,0 -1,0 -1,2 -1,-14 -1,7 -1,-8 -1,7 -1,8 -1,-5 -1,1 -1,-2 -1,-5 -1,6 -1,0 -1,-1 -1,1 -1,-8 -1,0 -1,2 -1,-2 -1,4 -1,8 -1,-4 -1,0 -1,-11 -1,11 -1,-11 -1,9 -1,2 -1,0 -1,-1 -1,-10 -1,11 -1,-6 -1,6 -1,-4 -1,2 -1,7 -1,-5 -1,0 -1,0 -1,0 -1,0 -1,-10 -1,10 -1,0 -1,0 -1,-3 -1,3 -1,0 -1,-8 -1,12 -1,-6 -1,-9 -1,1 -1,-2 -1,10 -1,3 -1,0 -1,-7 -1,-5 -1,16 -1,-9 -1,-2 -1,3 -1,3 -1,-13 -1,14 -1,-3 -1,2 -1,-11 -1,11 -1,0 -1,0 -1,-10 -1,10 -1,2 -1,-9 -1,12 -1,-3 -1,-3 -1,-4 -1,-2 -1,7 -1,-13 -1,10 -1,-8 -1,0 -1,5 -1,8 -1,2 -1,-9 -1,-5 -1,15 -1,-2 -1,2 -1,-2 -1,0 -1,-3 -1,3 -1,2 -1,-4 -1,-11 -1,15 -1,-1 -1,-1 -1,-3 -1,-6 -1,6 -1,3 -1,-11 -1,11 -1,0 -1,0 -1,-9 -1,2 -1,1 -1,5 -1,1 -1,-8 -1,0 -1,5 -1,5 -1,0 -1,0 -1,-4 -1,-11 -1,13 -1,0 -1,-10 -1,6 -1,4 -1,0 -1,-8 -1,10 -1,-15 -1,11 -1,-9 -1,11 -1,1 -1,1 -1,-2 -1,0 -1,0 -1,0 -1,0 -1,-14 -1,9 -1,-2 -1,1 -1,-7 -1,4 -1,9 -1,2 -1,-2 -1,2 -1,-14 -1,-2 -1,14 -1,0 -1,-2 -1,2 -1,-7 -1,-3 -1,12 -1,-2 -1,2 -1,-1 -1,-3 -1,-7 -1,9 -1,-6 -1,6 -1,-7 -1,7 -1,0 -1,0 -1,-14 -1,13 -1,-12 -1,13 -1,-2 -1,1 -1,-9 -1,1 -1,9 -1,-4 -1,-5 -1,4 -1,-4 -1,3 -1,-5 -1,6 -1,1 -1,0 -1,4 -1,0 -1,2 -1,-9 -1,3 -1,-3 -1,9 -1,0 -1,-7 -1,-2 -1,7 -1,-8 -1,1 -1,-6 -1,8 -1,-7 -1,13 -1,-6 -1,-3 -1,-9 -1,2 -1,2 -1,3 -1,5 -1,3 -1,-4 -1,0 -1,-8 -1,7 -1,2 -1,5z" fill="#c2efd2" stroke="#2ecc6c" stroke-width="1"/><path d="M1455 424L1630 390" stroke="#0f3a20" stroke-width="1.2"/><circle cx="1455" cy="424" r="3.5" fill="#1a5a38" stroke="#0a2a18"/><circle cx="1459" cy="442" r="3.5" fill="#1a5a38" stroke="#0a2a18"/><path d="M1452 321L1628 356" stroke="#0f3a20" stroke-width="1.2"/><path d="M1622 374 Q1632 382 1630 389" fill="none" stroke="#0f3a20" stroke-width="1"/><circle cx="1628" cy="356" r="3.5" fill="#1a5a38" stroke="#0a2a18"/><circle cx="1622" cy="374" r="3.5" fill="#1a5a38" stroke="#0a2a18"/><rect x="1186" y="461" width="444" height="68" fill="#2ecc6c"/><path d="M1452 461L1627 496Q1612 504 1620 516L1630 529H1452z" fill="#74dc9e"/><path d="M1186,495l2,0 2,0 2,-1 2,0 2,0 2,0 2,0 2,-1 2,0 2,1 2,-1 2,1 2,1 2,0 2,0 2,-1 2,0 2,0 2,0 2,0 2,0 2,0 2,0 2,0 2,1 2,0 2,0 2,-1 2,1 2,0 2,0 2,-1 2,-1 2,1 2,0 2,-1 2,1 2,0 2,0 2,1 2,-1 2,0 2,1 2,0 2,0 2,-1 2,1 2,-2 2,1 2,0 2,0 2,0 2,0 2,0 2,1 2,0 2,0 2,0 2,0 2,-1 2,1 2,-1 2,0 2,0 2,0 2,0 2,0 2,0 2,1 2,0 2,0 2,0 2,0 2,0 2,0 2,-1 2,0 2,0 2,0 2,0 2,0 2,1 2,0 2,-1 2,1 2,0 2,0 2,0 2,0 2,-1 2,-1 2,1 2,0 2,0 2,0 2,0 2,1 2,0 2,0 2,0 2,0 2,0 2,-1 2,1 2,-1 2,0 2,0 2,0 2,1 2,-1 2,1 2,0 2,0 2,-1 2,1 2,-2 2,1 2,0 2,0 2,0 2,0 2,0 2,0 2,0 2,1 2,0 2,0 2,0 2,0 2,0 2,-1 2,0 2,0 2,0 2,0 2,0 2,0 2,0 2,0 2,0 2,1 2,0 2,0 2,0 2,0 2,-1 2,0 2,0 2,-1 2,1 2,0 2,0 2,1 2,0 2,0 2,0 2,0 2,0 2,-1 2,0 2,1 2,-2 2,1 2,0 2,0 2,0 2,0 2,1 2,0 2,-1 2,1 2,0 2,0 2,-1 2,0 2,0 2,0 2,0 2,-1 2,1 2,1 2,-1 2,1 2,0 2,0 2,0 2,0 2,0 2,-1 2,0 2,0 2,0 2,0 2,0 2,-1 2,1 2,1 2,0 2,-1 2,1 2,0 2,-2 2,1 2,0 2,0 2,0 2,0 2,0 2,0 2,0 2,1 2,0 2,0 2,0 2,0 2,-2 2,1 2,0 2,0 2,-1 2,1 2,0 0,4 -2,0 -2,0 -2,0 -2,1 -2,-2 -2,0 -2,0 -2,1 -2,-1 -2,1 -2,-1 -2,0 -2,0 -2,1 -2,0 -2,0 -2,0 -2,0 -2,0 -2,0 -2,-1 -2,0 -2,0 -2,0 -2,0 -2,1 -2,-1 -2,1 -2,0 -2,0 -2,1 -2,-1 -2,0 -2,0 -2,0 -2,-1 -2,0 -2,1 -2,-1 -2,0 -2,0 -2,1 -2,0 -2,1 -2,-1 -2,0 -2,0 -2,0 -2,-1 -2,0 -2,0 -2,0 -2,0 -2,1 -2,0 -2,0 -2,0 -2,0 -2,0 -2,0 -2,0 -2,1 -2,-1 -2,-1 -2,0 -2,0 -2,0 -2,0 -2,1 -2,0 -2,0 -2,0 -2,0 -2,0 -2,0 -2,0 -2,0 -2,-1 -2,0 -2,0 -2,0 -2,0 -2,0 -2,1 -2,-1 -2,1 -2,0 -2,0 -2,0 -2,0 -2,-1 -2,0 -2,0 -2,0 -2,0 -2,0 -2,1 -2,0 -2,0 -2,0 -2,0 -2,0 -2,0 -2,0 -2,-1 -2,0 -2,0 -2,0 -2,0 -2,0 -2,1 -2,0 -2,0 -2,0 -2,0 -2,0 -2,0 -2,0 -2,-1 -2,1 -2,-1 -2,0 -2,0 -2,0 -2,0 -2,2 -2,-1 -2,0 -2,0 -2,0 -2,0 -2,-1 -2,1 -2,1 -2,-2 -2,0 -2,0 -2,0 -2,0 -2,1 -2,0 -2,0 -2,1 -2,-1 -2,0 -2,0 -2,1 -2,-2 -2,0 -2,0 -2,0 -2,0 -2,0 -2,1 -2,-1 -2,1 -2,0 -2,0 -2,0 -2,0 -2,-1 -2,0 -2,0 -2,0 -2,0 -2,1 -2,-1 -2,1 -2,0 -2,-1 -2,1 -2,0 -2,1 -2,0 -2,-2 -2,1 -2,-1 -2,1 -2,-1 -2,0 -2,0 -2,1 -2,0 -2,0 -2,0 -2,0 -2,0 -2,0 -2,0 -2,0 -2,-1 -2,0 -2,0 -2,0 -2,0 -2,0 -2,1 -2,0 -2,0 -2,0 -2,0 -2,0 -2,0 -2,-1 -2,1 -2,-1 -2,0 -2,0 -2,0 -2,0 -2,1 -2,0 -2,0 -2,0 -2,0 -2,0 -2,0 -2,-1 -2,1 -2,-1 -2,0 -2,0z" fill="#c2efd2" stroke="#111" stroke-width="1"/><path d="M1630,492l2,2 2,0 2,0 2,0 2,1 2,-1 2,0 2,0 2,-2 2,1 2,-1 2,1 2,1 2,0 2,0 2,0 2,-2 2,2 2,-1 2,1 2,0 2,0 2,-1 2,2 2,-1 2,-1 2,0 2,0 2,-2 2,1 2,2 2,0 2,1 2,-1 2,0 2,-1 2,1 2,-1 2,1 2,0 2,0 2,0 2,0 2,0 2,0 2,-1 2,0 2,-1 2,2 2,0 2,0 2,1 2,-1 2,0 2,0 2,-1 2,0 2,-1 2,2 2,-2 2,-1 2,2 2,-1 2,0 2,0 2,-3 2,2 2,0 2,0 2,0 2,-1 2,2 2,-1 2,-1 2,1 2,1 2,0 2,1 2,-1 2,1 2,0 2,0 2,0 2,-1 2,2 2,0 2,-3 2,2 2,0 2,-1 2,-2 2,1 2,1 2,-3 2,2 2,-1 2,-2 2,3 2,0 2,1 2,0 2,0 2,0 2,1 2,0 2,0 2,1 2,-1 2,1 2,-1 2,0 2,0 2,0 2,0 2,-1 2,1 2,-2 2,1 2,-1 2,-2 2,0 2,2 2,1 2,-1 2,1 2,-1 2,-1 2,2 2,0 2,0 2,0 2,0 2,0 0,7 -2,0 -2,0 -2,0 -2,0 -2,1 -2,2 -2,-1 -2,0 -2,2 -2,-2 -2,0 -2,0 -2,0 -2,0 -2,0 -2,0 -2,0 -2,-2 -2,2 -2,-1 -2,1 -2,-2 -2,0 -2,0 -2,-1 -2,1 -2,0 -2,0 -2,1 -2,-1 -2,1 -2,0 -2,0 -2,1 -2,1 -2,-1 -2,0 -2,0 -2,1 -2,-1 -2,-1 -2,0 -2,0 -2,-1 -2,1 -2,-1 -2,0 -2,0 -2,0 -2,-1 -2,2 -2,-1 -2,1 -2,-1 -2,1 -2,0 -2,0 -2,0 -2,1 -2,0 -2,0 -2,1 -2,-2 -2,1 -2,0 -2,-1 -2,3 -2,-3 -2,0 -2,2 -2,-3 -2,2 -2,-2 -2,0 -2,1 -2,-1 -2,0 -2,0 -2,-1 -2,0 -2,-1 -2,1 -2,0 -2,0 -2,1 -2,-1 -2,1 -2,-1 -2,0 -2,-1 -2,1 -2,1 -2,0 -2,-1 -2,1 -2,0 -2,-1 -2,0 -2,0 -2,0 -2,0 -2,0 -2,0 -2,0 -2,1 -2,0 -2,-1 -2,0 -2,0 -2,0 -2,1 -2,0 -2,0 -2,0 -2,0 -2,0 -2,-1 -2,-1 -2,0 -2,1 -2,0 -2,1 -2,0 -2,0 -2,-1 -2,1 -2,-1 -2,0 -2,0 -2,0 -2,1 -2,1 -2,-2z" fill="#808080" stroke="#222" stroke-width="1"/><path d="M1186,560l2,0 2,1 2,0 2,-1 2,-2 2,0 2,2 2,1 2,0 2,0 2,-1 2,1 2,0 2,-1 2,-2 2,2 2,0 2,0 2,1 2,-1 2,1 2,0 2,1 2,-1 2,-1 2,0 2,0 2,0 2,0 2,0 2,-1 2,1 2,-1 2,2 2,0 2,-1 2,1 2,0 2,-2 2,2 2,-3 2,2 2,1 2,0 2,0 2,-1 2,0 2,-1 2,1 2,0 2,-3 2,2 2,2 2,-1 2,1 2,1 2,0 2,0 2,0 2,0 2,-1 2,0 2,1 2,0 2,-1 2,1 2,1 2,-2 2,1 2,0 2,-1 2,1 2,0 2,-1 2,1 2,0 2,1 2,-1 2,-1 2,0 2,1 2,-1 2,0 2,0 2,0 2,1 2,0 2,0 2,0 2,0 2,0 2,-1 2,1 2,-1 2,0 2,1 2,-1 2,0 2,1 2,1 2,-1 2,0 2,-2 2,2 2,0 2,0 2,0 2,0 2,0 2,0 2,1 2,-1 2,0 2,-1 2,1 2,-1 2,1 2,-2 2,2 2,0 2,1 2,0 2,-1 2,0 2,0 2,-2 2,0 2,1 2,-1 2,1 2,1 2,0 2,0 0,3 -2,1 -2,1 -2,0 -2,-1 -2,1 -2,0 -2,0 -2,-1 -2,0 -2,0 -2,0 -2,0 -2,0 -2,1 -2,0 -2,0 -2,1 -2,-2 -2,0 -2,0 -2,0 -2,0 -2,0 -2,1 -2,-1 -2,1 -2,-1 -2,0 -2,0 -2,1 -2,1 -2,-1 -2,-1 -2,0 -2,0 -2,2 -2,0 -2,-2 -2,2 -2,-1 -2,-1 -2,0 -2,0 -2,-1 -2,1 -2,0 -2,0 -2,1 -2,0 -2,-1 -2,1 -2,-1 -2,0 -2,-1 -2,0 -2,0 -2,1 -2,0 -2,0 -2,1 -2,1 -2,-2 -2,2 -2,-2 -2,0 -2,0 -2,0 -2,0 -2,0 -2,0 -2,1 -2,-1 -2,2 -2,-1 -2,-1 -2,1 -2,0 -2,0 -2,2 -2,-1 -2,1 -2,1 -2,-2 -2,0 -2,-1 -2,0 -2,2 -2,-2 -2,0 -2,0 -2,1 -2,0 -2,0 -2,-1 -2,1 -2,1 -2,0 -2,-2 -2,-1 -2,1 -2,1 -2,-1 -2,0 -2,3 -2,-1 -2,-2 -2,1 -2,-1 -2,0 -2,0 -2,-1 -2,1 -2,0 -2,1 -2,-1 -2,1 -2,0 -2,-1 -2,0 -2,0 -2,1 -2,-1 -2,1 -2,0 -2,0 -2,0 -2,1 -2,-2 -2,0 -2,0 -2,0 -2,1 -2,-1z" fill="#808080" stroke="#222" stroke-width="1"/><rect x="1452" y="530" width="445" height="68" fill="#2ecc6c"/><path d="M1455 564L1630 530V598H1457Q1466 576 1500 560z" fill="#74dc9e"/><path d="M1452,561l2,0 2,0 2,0 2,0 2,0 2,-1 2,1 2,-2 2,2 2,0 2,-1 2,-1 2,-2 2,2 2,-3 2,4 2,-1 2,-3 2,1 2,1 2,1 2,-1 2,-1 2,-3 2,0 2,4 2,-2 2,1 2,0 2,-1 2,2 2,-1 2,-3 2,4 2,-1 2,0 2,0 2,0 2,1 2,2 2,0 2,-3 2,3 2,0 2,0 2,1 2,-2 2,2 2,-2 2,0 2,2 2,0 2,0 2,0 2,-1 2,1 2,0 2,-2 2,2 2,-1 2,1 2,0 2,0 2,-2 2,0 2,1 2,-1 2,-1 2,-3 2,4 2,-1 2,1 2,0 2,-1 2,1 2,-1 2,-2 2,3 2,1 2,0 2,0 2,1 2,-1 2,1 2,0 2,-1 2,1 2,0 2,0 2,-2 2,1 2,0 2,-1 2,0 2,0 2,-2 2,-2 2,3 2,0 2,-3 2,3 2,1 2,0 2,-1 2,1 2,-2 2,3 2,0 2,0 2,1 2,-1 2,0 2,1 2,0 2,0 2,0 2,0 2,-2 2,2 2,0 2,-4 2,4 2,-1 2,-2 2,-3 2,0 2,-1 2,0 2,0 2,5 2,-1 2,-1 2,0 2,3 2,0 2,1 2,0 2,-1 2,-1 2,0 2,-1 2,0 2,1 2,-1 2,-4 2,5 2,-1 2,0 2,0 2,2 2,0 2,0 2,0 2,0 2,-1 2,1 2,0 2,0 2,-2 2,-1 2,2 2,-1 2,1 2,-3 2,3 2,-2 2,1 2,-1 2,2 2,-1 2,2 2,0 2,1 2,-1 2,1 2,-3 2,2 2,0 2,-3 2,-2 2,0 2,2 2,1 2,0 2,0 2,0 2,1 2,1 2,-1 2,-1 2,3 2,-2 2,1 2,0 2,0 2,0 2,-2 2,-1 2,2 2,0 2,0 2,-3 2,1 2,1 2,0 2,1 2,0 2,1 2,1 2,-3 2,3 2,-1 2,0 2,0 2,1 2,-2 2,1 2,0 2,-2 2,1 2,-3 2,0 0,19 -2,-5 -2,0 -2,1 -2,0 -2,-3 -2,1 -2,-1 -2,0 -2,-1 -2,2 -2,-2 -2,1 -2,0 -2,0 -2,0 -2,2 -2,-1 -2,1 -2,-1 -2,1 -2,-1 -2,4 -2,-4 -2,-1 -2,1 -2,-1 -2,-1 -2,1 -2,0 -2,0 -2,-1 -2,1 -2,0 -2,1 -2,0 -2,0 -2,1 -2,0 -2,0 -2,0 -2,2 -2,-4 -2,1 -2,1 -2,-2 -2,0 -2,-1 -2,0 -2,1 -2,-1 -2,2 -2,-1 -2,0 -2,0 -2,5 -2,-4 -2,1 -2,0 -2,0 -2,1 -2,0 -2,-3 -2,1 -2,-1 -2,-1 -2,1 -2,-1 -2,2 -2,-1 -2,2 -2,0 -2,-1 -2,3 -2,-2 -2,-1 -2,0 -2,0 -2,3 -2,-2 -2,2 -2,-3 -2,0 -2,1 -2,-2 -2,0 -2,-1 -2,0 -2,0 -2,4 -2,-2 -2,-1 -2,1 -2,0 -2,1 -2,-1 -2,2 -2,1 -2,-4 -2,0 -2,0 -2,1 -2,-1 -2,0 -2,-1 -2,0 -2,0 -2,0 -2,1 -2,-1 -2,0 -2,3 -2,-3 -2,0 -2,1 -2,0 -2,1 -2,0 -2,3 -2,-2 -2,-1 -2,1 -2,2 -2,-1 -2,-1 -2,-2 -2,1 -2,-1 -2,0 -2,1 -2,0 -2,0 -2,-1 -2,0 -2,-1 -2,0 -2,2 -2,-2 -2,1 -2,1 -2,0 -2,0 -2,-1 -2,1 -2,1 -2,0 -2,-1 -2,1 -2,4 -2,-2 -2,-3 -2,0 -2,1 -2,-1 -2,1 -2,-1 -2,1 -2,-1 -2,1 -2,-3 -2,1 -2,0 -2,0 -2,-2 -2,1 -2,0 -2,2 -2,-2 -2,0 -2,0 -2,0 -2,1 -2,1 -2,-2 -2,0 -2,0 -2,1 -2,-1 -2,2 -2,0 -2,0 -2,3 -2,-4 -2,1 -2,0 -2,0 -2,2 -2,2 -2,-2 -2,-1 -2,4 -2,-3 -2,1 -2,0 -2,-1 -2,1 -2,2 -2,-3 -2,4 -2,-4 -2,0 -2,-2 -2,0 -2,3 -2,-2 -2,-1 -2,0 -2,2 -2,-2 -2,0 -2,-1 -2,-1 -2,0 -2,1 -2,-1 -2,0 -2,0 -2,0 -2,0 -2,0 -2,0 -2,-1 -2,0z" fill="#c2efd2" stroke="#111" stroke-width="1"/><path d="M1455 564L1630 530" stroke="#0f3a20" stroke-width="1.2"/><path d="M1459 581L1452 598" fill="none" stroke="#1a5a38" stroke-width="1"/><circle cx="1455" cy="564" r="3.5" fill="#1a5a38" stroke="#0a2a18"/><circle cx="1459" cy="580" r="3.5" fill="#1a5a38" stroke="#0a2a18"/><path d="M1452 461L1628 496" stroke="#0f3a20" stroke-width="1.2"/><path d="M1622 514 Q1632 522 1630 529" fill="none" stroke="#0f3a20" stroke-width="1"/><circle cx="1628" cy="496" r="3.5" fill="#1a5a38" stroke="#0a2a18"/><circle cx="1622" cy="514" r="3.5" fill="#1a5a38" stroke="#0a2a18"/><rect x="1186" y="601" width="444" height="68" fill="#2ecc6c"/><path d="M1452 601L1627 636Q1612 644 1620 656L1630 669H1452z" fill="#74dc9e"/><path d="M1186,635l2,0 2,-1 2,1 2,0 2,-1 2,0 2,-2 2,2 2,0 2,1 2,-1 2,0 2,0 2,1 2,0 2,0 2,0 2,-1 2,0 2,0 2,0 2,0 2,0 2,0 2,0 2,0 2,1 2,0 2,0 2,0 2,0 2,-1 2,1 2,-1 2,0 2,-1 2,1 2,0 2,1 2,-1 2,1 2,0 2,0 2,0 2,0 2,0 2,0 2,-1 2,0 2,-1 2,1 2,0 2,0 2,0 2,1 2,0 2,0 2,0 2,0 2,0 2,-1 2,0 2,-1 2,1 2,0 2,0 2,1 2,0 2,-1 2,1 2,0 2,0 2,0 2,0 2,0 2,-1 2,0 2,0 2,0 2,0 2,0 2,-1 2,1 2,1 2,0 2,0 2,0 2,0 2,-1 2,-1 2,1 2,0 2,0 2,0 2,0 2,0 2,0 2,1 2,0 2,0 2,0 2,0 2,-1 2,0 2,-1 2,1 2,0 2,0 2,0 2,0 2,0 2,1 2,0 2,0 2,0 2,0 2,0 2,-1 2,0 2,-2 2,2 2,0 2,0 2,0 2,0 2,1 2,0 2,0 2,0 2,0 2,-2 2,2 2,-1 2,0 2,0 2,0 2,-1 2,1 2,0 2,0 2,1 2,0 2,0 2,0 2,-1 2,0 2,-1 2,1 2,0 2,0 2,1 2,-2 2,0 2,2 2,0 2,0 2,0 2,0 2,0 2,-1 2,0 2,0 2,0 2,0 2,0 2,0 2,1 2,-1 2,1 2,0 2,-1 2,1 2,-1 2,-1 2,1 2,0 2,0 2,-1 2,1 2,0 2,0 2,1 2,0 2,0 2,0 2,0 2,0 2,-1 2,1 2,-1 2,0 2,0 2,-1 2,1 2,0 2,1 2,0 2,-1 2,1 2,0 2,0 2,0 2,-1 2,0 2,0 2,0 2,0 2,0 2,1 2,-1 2,1 2,0 2,0 2,0 2,0 2,0 2,-1 2,-1 2,1 2,0 2,0 2,0 0,4 -2,0 -2,1 -2,-1 -2,0 -2,0 -2,0 -2,-1 -2,0 -2,0 -2,0 -2,0 -2,0 -2,2 -2,-1 -2,1 -2,-1 -2,0 -2,0 -2,-1 -2,1 -2,0 -2,-1 -2,0 -2,0 -2,0 -2,1 -2,0 -2,0 -2,0 -2,0 -2,0 -2,0 -2,-1 -2,1 -2,0 -2,-1 -2,0 -2,0 -2,0 -2,0 -2,0 -2,1 -2,0 -2,0 -2,0 -2,0 -2,0 -2,0 -2,-1 -2,0 -2,0 -2,0 -2,0 -2,0 -2,0 -2,1 -2,0 -2,0 -2,0 -2,0 -2,1 -2,-2 -2,0 -2,0 -2,0 -2,0 -2,0 -2,0 -2,0 -2,1 -2,0 -2,0 -2,0 -2,0 -2,0 -2,-1 -2,1 -2,-1 -2,0 -2,0 -2,0 -2,0 -2,1 -2,-1 -2,1 -2,0 -2,2 -2,-2 -2,0 -2,0 -2,-1 -2,0 -2,0 -2,0 -2,0 -2,1 -2,-1 -2,0 -2,0 -2,1 -2,0 -2,0 -2,0 -2,0 -2,0 -2,0 -2,0 -2,-1 -2,0 -2,0 -2,1 -2,0 -2,0 -2,0 -2,0 -2,0 -2,0 -2,-1 -2,1 -2,-1 -2,0 -2,0 -2,0 -2,0 -2,0 -2,1 -2,1 -2,-1 -2,0 -2,1 -2,0 -2,-1 -2,0 -2,-1 -2,0 -2,0 -2,0 -2,0 -2,1 -2,-1 -2,1 -2,0 -2,0 -2,2 -2,-1 -2,-1 -2,0 -2,0 -2,0 -2,-1 -2,0 -2,0 -2,0 -2,1 -2,0 -2,0 -2,0 -2,1 -2,-1 -2,0 -2,0 -2,-1 -2,0 -2,0 -2,0 -2,0 -2,0 -2,1 -2,0 -2,0 -2,0 -2,0 -2,0 -2,0 -2,0 -2,0 -2,-1 -2,0 -2,0 -2,0 -2,0 -2,0 -2,1 -2,0 -2,0 -2,0 -2,0 -2,0 -2,0 -2,0 -2,-1 -2,0 -2,0 -2,0 -2,0 -2,0 -2,1 -2,0 -2,0 -2,0 -2,0 -2,0 -2,1 -2,-1 -2,-1 -2,0 -2,0 -2,0 -2,0 -2,0 -2,2 -2,-1 -2,0 -2,0 -2,0 -2,0 -2,0 -2,-1 -2,0 -2,0 -2,0 -2,0z" fill="#c2efd2" stroke="#111" stroke-width="1"/><path d="M1630,632l2,2 2,0 2,0 2,1 2,0 2,-1 2,-1 2,1 2,0 2,-1 2,0 2,1 2,0 2,0 2,0 2,-1 2,1 2,0 2,-1 2,0 2,1 2,0 2,0 2,0 2,0 2,0 2,-1 2,0 2,0 2,0 2,0 2,1 2,0 2,0 2,0 2,0 2,-1 2,-1 2,1 2,1 2,0 2,1 2,0 2,-1 2,0 2,-2 2,1 2,0 2,1 2,0 2,0 2,1 2,-1 2,0 2,-1 2,0 2,0 2,-1 2,1 2,0 2,0 2,-2 2,2 2,-1 2,-2 2,1 2,1 2,0 2,-2 2,0 2,1 2,-2 2,2 2,-2 2,2 2,-2 2,3 2,0 2,0 2,1 2,0 2,0 2,1 2,-1 2,0 2,1 2,-1 2,0 2,-1 2,-1 2,-1 2,2 2,0 2,-2 2,1 2,0 2,0 2,0 2,0 2,1 2,-1 2,1 2,0 2,1 2,0 2,0 2,-1 2,1 2,1 2,-1 2,1 2,-1 2,0 2,-2 2,1 2,0 2,-1 2,0 2,-1 2,2 2,-2 2,0 2,2 2,-2 2,-2 2,4 2,-1 2,1 2,1 2,0 2,1 2,-1 2,1 0,5 -2,-1 -2,1 -2,2 -2,0 -2,-1 -2,-1 -2,1 -2,2 -2,2 -2,-3 -2,1 -2,2 -2,-4 -2,1 -2,-1 -2,2 -2,-2 -2,1 -2,-1 -2,-1 -2,1 -2,-1 -2,0 -2,0 -2,-1 -2,2 -2,-1 -2,0 -2,0 -2,0 -2,1 -2,1 -2,0 -2,-1 -2,2 -2,-1 -2,0 -2,0 -2,2 -2,-2 -2,0 -2,-1 -2,0 -2,-1 -2,0 -2,0 -2,1 -2,1 -2,-1 -2,-2 -2,1 -2,0 -2,1 -2,0 -2,-1 -2,2 -2,0 -2,0 -2,0 -2,0 -2,1 -2,0 -2,-2 -2,2 -2,-2 -2,0 -2,1 -2,0 -2,1 -2,-2 -2,-1 -2,0 -2,-1 -2,0 -2,1 -2,1 -2,-2 -2,1 -2,-1 -2,-1 -2,0 -2,1 -2,0 -2,0 -2,1 -2,0 -2,0 -2,0 -2,-1 -2,-1 -2,1 -2,0 -2,1 -2,-1 -2,0 -2,2 -2,-2 -2,0 -2,0 -2,-1 -2,1 -2,0 -2,0 -2,2 -2,-2 -2,0 -2,0 -2,0 -2,-1 -2,1 -2,0 -2,1 -2,0 -2,-1 -2,1 -2,-1 -2,1 -2,-1 -2,0 -2,0 -2,2 -2,-1 -2,0 -2,-1 -2,0 -2,0 -2,0 -2,-1 -2,0 -2,1 -2,0 -2,0 -2,0z" fill="#808080" stroke="#222" stroke-width="1"/><path d="M1186,701l2,0 2,-1 2,-1 2,-1 2,2 2,1 2,-1 2,1 2,-1 2,1 2,0 2,1 2,-1 2,0 2,0 2,0 2,-1 2,1 2,-1 2,1 2,0 2,-1 2,1 2,0 2,0 2,-1 2,0 2,1 2,-2 2,1 2,1 2,0 2,0 2,0 2,0 2,-1 2,0 2,-2 2,2 2,0 2,-1 2,1 2,0 2,1 2,1 2,-1 2,0 2,-3 2,2 2,-2 2,2 2,0 2,1 2,-1 2,2 2,0 2,-1 2,1 2,-2 2,2 2,-1 2,0 2,1 2,-1 2,1 2,0 2,0 2,1 2,-3 2,2 2,-1 2,1 2,0 2,0 2,0 2,-1 2,2 2,-1 2,0 2,0 2,0 2,-2 2,2 2,0 2,-1 2,0 2,1 2,0 2,0 2,1 2,-1 2,-1 2,1 2,-1 2,-1 2,2 2,0 2,0 2,0 2,1 2,-1 2,0 2,0 2,0 2,-1 2,0 2,0 2,1 2,0 2,1 2,0 2,-1 2,0 2,-2 2,0 2,1 2,0 2,1 2,0 2,0 2,0 2,1 2,-1 2,0 2,0 2,-1 2,1 2,-1 2,1 2,0 2,0 2,0 2,1 0,3 -2,0 -2,1 -2,-1 -2,1 -2,0 -2,-1 -2,1 -2,0 -2,-1 -2,0 -2,-1 -2,1 -2,0 -2,0 -2,0 -2,1 -2,0 -2,-1 -2,0 -2,0 -2,0 -2,-1 -2,0 -2,1 -2,0 -2,0 -2,0 -2,2 -2,-1 -2,-1 -2,1 -2,0 -2,-2 -2,0 -2,2 -2,0 -2,0 -2,0 -2,-1 -2,1 -2,0 -2,-1 -2,-1 -2,1 -2,0 -2,0 -2,0 -2,2 -2,-2 -2,1 -2,0 -2,-1 -2,0 -2,0 -2,0 -2,0 -2,0 -2,1 -2,-1 -2,0 -2,1 -2,0 -2,-1 -2,0 -2,0 -2,-1 -2,1 -2,0 -2,0 -2,1 -2,0 -2,0 -2,0 -2,-1 -2,0 -2,0 -2,2 -2,-1 -2,1 -2,0 -2,0 -2,0 -2,1 -2,-1 -2,0 -2,-1 -2,1 -2,0 -2,-1 -2,0 -2,3 -2,-3 -2,2 -2,-1 -2,0 -2,-1 -2,1 -2,0 -2,-2 -2,1 -2,1 -2,0 -2,1 -2,-1 -2,-1 -2,0 -2,0 -2,0 -2,1 -2,0 -2,-1 -2,0 -2,1 -2,-1 -2,4 -2,-3 -2,0 -2,-1 -2,0 -2,0 -2,0 -2,0 -2,1 -2,0 -2,0 -2,-1 -2,1 -2,0 -2,0 -2,-1 -2,1 -2,-1 -2,1z" fill="#808080" stroke="#222" stroke-width="1"/><rect x="1452" y="670" width="445" height="68" fill="#2ecc6c"/><path d="M1455 704L1630 670V738H1457Q1466 716 1500 700z" fill="#74dc9e"/><path d="M1452,701l2,1 2,0 2,-1 2,0 2,0 2,0 2,0 2,-1 2,1 2,-1 2,1 2,-4 2,3 2,0 2,0 2,0 2,-4 2,3 2,-1 2,1 2,-1 2,-4 2,0 2,2 2,1 2,0 2,-5 2,4 2,0 2,-1 2,1 2,1 2,1 2,-1 2,1 2,1 2,-1 2,-3 2,3 2,0 2,1 2,0 2,0 2,1 2,-1 2,0 2,1 2,0 2,0 2,1 2,0 2,1 2,-1 2,-1 2,1 2,0 2,0 2,1 2,-1 2,0 2,0 2,-2 2,2 2,-1 2,1 2,-1 2,-4 2,4 2,-2 2,0 2,1 2,0 2,-1 2,0 2,1 2,0 2,-1 2,2 2,-3 2,3 2,0 2,0 2,1 2,0 2,0 2,0 2,0 2,-1 2,1 2,-1 2,0 2,0 2,-2 2,-1 2,3 2,-3 2,2 2,0 2,0 2,0 2,-1 2,1 2,0 2,1 2,-3 2,2 2,0 2,0 2,-1 2,0 2,2 2,0 2,1 2,0 2,0 2,0 2,0 2,0 2,0 2,0 2,-1 2,0 2,-1 2,0 2,-2 2,-3 2,4 2,0 2,0 2,0 2,-1 2,3 2,-2 2,2 2,-2 2,3 2,0 2,0 2,-1 2,-2 2,2 2,-1 2,-1 2,1 2,-3 2,3 2,-2 2,2 2,-2 2,2 2,1 2,-1 2,1 2,1 2,-1 2,-1 2,0 2,0 2,-3 2,3 2,0 2,-2 2,-1 2,2 2,1 2,-3 2,3 2,0 2,0 2,0 2,1 2,0 2,1 2,0 2,-1 2,0 2,-2 2,1 2,0 2,0 2,-1 2,1 2,-1 2,0 2,-1 2,1 2,1 2,1 2,-2 2,0 2,1 2,1 2,-1 2,1 2,-1 2,-1 2,1 2,1 2,-3 2,0 2,0 2,2 2,-2 2,2 2,0 2,-1 2,1 2,1 2,1 2,-1 2,1 2,0 2,0 2,0 2,-4 2,2 2,-1 2,0 2,-1 2,2 2,-4 2,3 0,11 -2,1 -2,-1 -2,4 -2,-4 -2,1 -2,-1 -2,-1 -2,0 -2,0 -2,1 -2,0 -2,-1 -2,-1 -2,1 -2,0 -2,1 -2,0 -2,1 -2,-1 -2,2 -2,-2 -2,0 -2,0 -2,0 -2,0 -2,-1 -2,0 -2,-1 -2,1 -2,0 -2,-1 -2,1 -2,0 -2,1 -2,0 -2,1 -2,0 -2,4 -2,-3 -2,-2 -2,1 -2,-1 -2,-1 -2,1 -2,-1 -2,0 -2,1 -2,-2 -2,0 -2,1 -2,0 -2,2 -2,-2 -2,4 -2,-1 -2,-1 -2,0 -2,1 -2,-1 -2,-1 -2,0 -2,0 -2,0 -2,-1 -2,-1 -2,1 -2,-1 -2,2 -2,-1 -2,0 -2,1 -2,0 -2,1 -2,2 -2,-2 -2,0 -2,1 -2,0 -2,-2 -2,0 -2,0 -2,-1 -2,-1 -2,1 -2,-1 -2,1 -2,0 -2,2 -2,-2 -2,0 -2,1 -2,3 -2,-3 -2,1 -2,0 -2,0 -2,0 -2,0 -2,-1 -2,1 -2,-2 -2,2 -2,-3 -2,0 -2,1 -2,-1 -2,0 -2,2 -2,-2 -2,0 -2,0 -2,0 -2,2 -2,0 -2,0 -2,2 -2,0 -2,0 -2,-2 -2,1 -2,3 -2,-3 -2,1 -2,0 -2,-2 -2,2 -2,-3 -2,0 -2,0 -2,0 -2,0 -2,1 -2,-2 -2,0 -2,0 -2,0 -2,0 -2,2 -2,-1 -2,1 -2,-1 -2,1 -2,-1 -2,4 -2,-3 -2,2 -2,-1 -2,0 -2,0 -2,-1 -2,0 -2,-1 -2,1 -2,0 -2,0 -2,0 -2,-1 -2,2 -2,-2 -2,0 -2,0 -2,-1 -2,0 -2,0 -2,1 -2,0 -2,0 -2,1 -2,-2 -2,0 -2,0 -2,0 -2,0 -2,0 -2,0 -2,1 -2,0 -2,0 -2,1 -2,0 -2,-1 -2,1 -2,0 -2,1 -2,0 -2,0 -2,4 -2,-1 -2,-2 -2,0 -2,2 -2,-1 -2,0 -2,-1 -2,0 -2,1 -2,0 -2,1 -2,-3 -2,0 -2,-1 -2,1 -2,0 -2,1 -2,0 -2,-2 -2,-1 -2,0 -2,2 -2,-3 -2,0 -2,0 -2,0 -2,0 -2,0 -2,0 -2,0 -2,0 -2,0 -2,0 -2,0 -2,-1z" fill="#c2efd2" stroke="#111" stroke-width="1"/><path d="M1455 704L1630 670" stroke="#0f3a20" stroke-width="1.2"/><path d="M1459 721L1452 738" fill="none" stroke="#1a5a38" stroke-width="1"/><circle cx="1455" cy="704" r="3.5" fill="#1a5a38" stroke="#0a2a18"/><circle cx="1459" cy="720" r="3.5" fill="#1a5a38" stroke="#0a2a18"/><path d="M1452 601L1628 636" stroke="#0f3a20" stroke-width="1.2"/><path d="M1622 654 Q1632 662 1630 669" fill="none" stroke="#0f3a20" stroke-width="1"/><circle cx="1628" cy="636" r="3.5" fill="#1a5a38" stroke="#0a2a18"/><circle cx="1622" cy="654" r="3.5" fill="#1a5a38" stroke="#0a2a18"/><rect x="1186" y="741" width="444" height="68" fill="#2ecc6c"/><path d="M1452 741L1627 776Q1612 784 1620 796L1630 809H1452z" fill="#74dc9e"/><path d="M1186,775l2,0 2,0 2,0 2,-1 2,0 2,0 2,-1 2,1 2,0 2,0 2,0 2,0 2,1 2,-1 2,1 2,0 2,0 2,0 2,-1 2,0 2,0 2,0 2,0 2,0 2,0 2,1 2,-1 2,1 2,0 2,0 2,0 2,0 2,-1 2,0 2,0 2,0 2,0 2,0 2,1 2,0 2,0 2,0 2,0 2,0 2,-1 2,0 2,0 2,-1 2,0 2,1 2,0 2,0 2,1 2,0 2,0 2,0 2,0 2,-1 2,1 2,0 2,0 2,0 2,-1 2,0 2,0 2,0 2,0 2,0 2,1 2,0 2,0 2,0 2,0 2,0 2,-1 2,0 2,0 2,0 2,0 2,0 2,1 2,-1 2,1 2,0 2,0 2,0 2,0 2,0 2,-1 2,1 2,-1 2,-1 2,1 2,0 2,0 2,0 2,1 2,-1 2,1 2,0 2,0 2,-1 2,1 2,0 2,-1 2,0 2,0 2,0 2,0 2,0 2,0 2,1 2,0 2,0 2,0 2,0 2,-1 2,0 2,0 2,0 2,0 2,-1 2,0 2,1 2,0 2,0 2,1 2,0 2,0 2,0 2,-2 2,2 2,0 2,-1 2,0 2,0 2,0 2,0 2,1 2,-1 2,1 2,0 2,-1 2,1 2,0 2,-1 2,0 2,-1 2,0 2,1 2,0 2,-1 2,1 2,1 2,0 2,0 2,0 2,0 2,0 2,-1 2,0 2,0 2,-1 2,1 2,-1 2,1 2,0 2,1 2,0 2,0 2,-1 2,1 2,0 2,-1 2,0 2,0 2,0 2,0 2,0 2,1 2,-1 2,0 2,0 2,1 2,0 2,0 2,-2 2,1 2,0 2,-1 2,1 2,0 2,0 2,-1 2,2 2,0 2,0 2,0 2,0 2,0 2,0 2,-2 2,1 2,0 2,0 2,0 2,0 2,0 2,0 2,1 2,-1 2,0 2,1 2,0 2,0 2,0 2,-1 2,0 2,0 2,0 2,0 2,0 0,5 -2,-1 -2,0 -2,0 -2,0 -2,0 -2,-1 -2,1 -2,-1 -2,0 -2,0 -2,0 -2,0 -2,1 -2,1 -2,0 -2,-1 -2,0 -2,0 -2,-1 -2,1 -2,-1 -2,1 -2,-1 -2,0 -2,0 -2,0 -2,1 -2,0 -2,0 -2,0 -2,0 -2,0 -2,0 -2,-1 -2,1 -2,-1 -2,0 -2,0 -2,1 -2,-1 -2,1 -2,0 -2,0 -2,0 -2,0 -2,0 -2,0 -2,0 -2,0 -2,0 -2,-1 -2,0 -2,1 -2,0 -2,-1 -2,1 -2,1 -2,0 -2,-1 -2,0 -2,0 -2,0 -2,-1 -2,0 -2,0 -2,0 -2,0 -2,0 -2,0 -2,1 -2,0 -2,2 -2,-2 -2,0 -2,2 -2,-2 -2,-1 -2,0 -2,0 -2,0 -2,0 -2,1 -2,0 -2,0 -2,0 -2,0 -2,1 -2,-1 -2,-1 -2,1 -2,0 -2,-1 -2,0 -2,0 -2,0 -2,0 -2,0 -2,2 -2,0 -2,-1 -2,0 -2,0 -2,0 -2,0 -2,0 -2,-1 -2,0 -2,0 -2,1 -2,-1 -2,0 -2,0 -2,1 -2,0 -2,0 -2,0 -2,0 -2,0 -2,0 -2,0 -2,-1 -2,0 -2,1 -2,-1 -2,0 -2,0 -2,1 -2,0 -2,0 -2,0 -2,0 -2,0 -2,0 -2,-1 -2,0 -2,0 -2,0 -2,1 -2,-1 -2,1 -2,0 -2,0 -2,0 -2,0 -2,0 -2,0 -2,-1 -2,1 -2,0 -2,-1 -2,0 -2,0 -2,1 -2,-1 -2,1 -2,0 -2,0 -2,0 -2,0 -2,0 -2,1 -2,-1 -2,-1 -2,0 -2,0 -2,0 -2,0 -2,0 -2,1 -2,0 -2,0 -2,0 -2,0 -2,0 -2,0 -2,-1 -2,0 -2,0 -2,0 -2,0 -2,1 -2,0 -2,0 -2,0 -2,0 -2,1 -2,-1 -2,0 -2,0 -2,0 -2,-1 -2,1 -2,-1 -2,0 -2,0 -2,0 -2,1 -2,0 -2,0 -2,0 -2,0 -2,0 -2,0 -2,0 -2,-1 -2,0 -2,0 -2,0 -2,0 -2,1 -2,0 -2,0 -2,1 -2,-1 -2,0 -2,0 -2,0 -2,-1 -2,0 -2,0 -2,0 -2,0z" fill="#c2efd2" stroke="#111" stroke-width="1"/><path d="M1630,773l2,1 2,-1 2,0 2,1 2,1 2,-1 2,0 2,-1 2,-1 2,0 2,1 2,0 2,1 2,1 2,-1 2,0 2,0 2,0 2,-1 2,1 2,0 2,0 2,0 2,0 2,0 2,0 2,-1 2,1 2,-1 2,-1 2,2 2,-1 2,2 2,-1 2,0 2,0 2,-3 2,2 2,1 2,-1 2,0 2,1 2,0 2,0 2,0 2,-1 2,0 2,-1 2,2 2,0 2,0 2,1 2,-1 2,0 2,-1 2,0 2,-2 2,3 2,0 2,0 2,0 2,-1 2,0 2,-1 2,0 2,-1 2,0 2,0 2,0 2,0 2,0 2,0 2,1 2,-3 2,2 2,1 2,0 2,1 2,-2 2,2 2,-1 2,1 2,-1 2,1 2,0 2,-1 2,1 2,0 2,0 2,-1 2,-1 2,-1 2,2 2,-1 2,1 2,0 2,0 2,0 2,0 2,-4 2,4 2,-2 2,2 2,-1 2,2 2,-1 2,1 2,-1 2,2 2,-1 2,-1 2,2 2,-2 2,1 2,-1 2,0 2,0 2,0 2,-1 2,0 2,-3 2,3 2,-1 2,0 2,1 2,1 2,-2 2,1 2,2 2,-2 2,2 2,1 2,-1 0,6 -2,-1 -2,1 -2,0 -2,0 -2,1 -2,0 -2,1 -2,-1 -2,0 -2,0 -2,0 -2,3 -2,2 -2,-3 -2,-1 -2,0 -2,-1 -2,0 -2,2 -2,-3 -2,0 -2,0 -2,0 -2,0 -2,1 -2,-1 -2,1 -2,0 -2,-1 -2,0 -2,0 -2,1 -2,0 -2,1 -2,0 -2,0 -2,-1 -2,1 -2,1 -2,1 -2,-1 -2,-2 -2,0 -2,-1 -2,0 -2,0 -2,1 -2,0 -2,-2 -2,1 -2,0 -2,0 -2,1 -2,0 -2,0 -2,0 -2,0 -2,0 -2,1 -2,0 -2,1 -2,-1 -2,0 -2,0 -2,0 -2,-1 -2,1 -2,-1 -2,1 -2,-2 -2,1 -2,-1 -2,0 -2,0 -2,0 -2,0 -2,0 -2,0 -2,0 -2,-1 -2,0 -2,0 -2,0 -2,0 -2,1 -2,0 -2,-1 -2,0 -2,0 -2,-1 -2,0 -2,1 -2,0 -2,0 -2,1 -2,-1 -2,0 -2,0 -2,0 -2,0 -2,0 -2,0 -2,1 -2,2 -2,-1 -2,-2 -2,0 -2,0 -2,-1 -2,1 -2,0 -2,1 -2,0 -2,-1 -2,1 -2,0 -2,0 -2,-1 -2,0 -2,0 -2,0 -2,1 -2,1 -2,-1 -2,0 -2,-1 -2,0 -2,-1 -2,1 -2,1 -2,-1 -2,0 -2,1z" fill="#808080" stroke="#222" stroke-width="1"/><path d="M1186,841l2,-2 2,2 2,-1 2,-1 2,0 2,1 2,0 2,0 2,0 2,1 2,0 2,0 2,0 2,0 2,-1 2,0 2,0 2,0 2,-1 2,2 2,0 2,0 2,0 2,0 2,-1 2,1 2,-3 2,0 2,2 2,-1 2,2 2,0 2,0 2,0 2,-2 2,2 2,-2 2,1 2,0 2,0 2,0 2,1 2,-1 2,1 2,1 2,-1 2,0 2,0 2,-1 2,0 2,1 2,0 2,-2 2,2 2,0 2,0 2,2 2,-1 2,-1 2,1 2,0 2,-1 2,-1 2,2 2,0 2,0 2,1 2,-2 2,1 2,-1 2,1 2,0 2,0 2,-2 2,1 2,1 2,0 2,0 2,-1 2,1 2,0 2,0 2,0 2,-1 2,0 2,1 2,-1 2,2 2,-1 2,-1 2,1 2,0 2,0 2,-1 2,-1 2,1 2,0 2,1 2,0 2,1 2,-2 2,1 2,-1 2,0 2,0 2,1 2,-1 2,1 2,0 2,0 2,0 2,0 2,0 2,-1 2,0 2,0 2,0 2,0 2,1 2,0 2,0 2,0 2,0 2,0 2,-2 2,1 2,1 2,-1 2,0 2,1 2,0 2,0 2,1 0,3 -2,1 -2,-1 -2,0 -2,2 -2,-1 -2,-1 -2,1 -2,-1 -2,0 -2,0 -2,0 -2,0 -2,0 -2,0 -2,1 -2,0 -2,2 -2,-2 -2,0 -2,0 -2,-1 -2,0 -2,-1 -2,1 -2,0 -2,0 -2,0 -2,1 -2,0 -2,-1 -2,1 -2,-1 -2,-1 -2,0 -2,1 -2,0 -2,0 -2,0 -2,1 -2,0 -2,-1 -2,0 -2,0 -2,-1 -2,1 -2,1 -2,-1 -2,2 -2,-2 -2,1 -2,-1 -2,0 -2,1 -2,-1 -2,-1 -2,1 -2,0 -2,1 -2,0 -2,0 -2,0 -2,-1 -2,0 -2,0 -2,0 -2,0 -2,-1 -2,1 -2,0 -2,0 -2,1 -2,0 -2,1 -2,-2 -2,0 -2,0 -2,1 -2,0 -2,0 -2,0 -2,1 -2,2 -2,-2 -2,2 -2,-3 -2,1 -2,-1 -2,0 -2,1 -2,1 -2,-1 -2,-1 -2,1 -2,-1 -2,1 -2,2 -2,-2 -2,-2 -2,1 -2,0 -2,0 -2,0 -2,1 -2,2 -2,0 -2,0 -2,-3 -2,0 -2,0 -2,0 -2,-1 -2,3 -2,-2 -2,3 -2,0 -2,-2 -2,0 -2,2 -2,-3 -2,0 -2,0 -2,0 -2,0 -2,0 -2,1 -2,0 -2,0 -2,-1 -2,1 -2,-1 -2,0 -2,0 -2,1z" fill="#808080" stroke="#222" stroke-width="1"/><rect x="1452" y="810" width="445" height="68" fill="#2ecc6c"/><path d="M1455 844L1630 810V878H1457Q1466 856 1500 840z" fill="#74dc9e"/><path d="M1452,841l2,0 2,0 2,-1 2,1 2,0 2,0 2,0 2,0 2,0 2,0 2,0 2,0 2,-1 2,-1 2,0 2,0 2,0 2,1 2,-3 2,1 2,0 2,0 2,0 2,-4 2,4 2,-1 2,1 2,-1 2,-1 2,-2 2,4 2,-1 2,1 2,0 2,0 2,0 2,0 2,-3 2,4 2,-2 2,1 2,-1 2,3 2,-1 2,1 2,0 2,0 2,0 2,0 2,1 2,0 2,0 2,-1 2,1 2,0 2,0 2,-1 2,1 2,0 2,0 2,0 2,0 2,-1 2,1 2,-1 2,0 2,-4 2,3 2,-2 2,-1 2,-1 2,1 2,1 2,2 2,0 2,-1 2,0 2,1 2,0 2,0 2,1 2,1 2,0 2,-1 2,1 2,1 2,-1 2,0 2,-1 2,-2 2,3 2,0 2,0 2,-2 2,0 2,-3 2,1 2,2 2,0 2,0 2,-2 2,1 2,-2 2,2 2,0 2,1 2,0 2,1 2,-1 2,1 2,0 2,1 2,-2 2,2 2,0 2,0 2,0 2,-1 2,1 2,-1 2,-3 2,0 2,2 2,-1 2,1 2,0 2,-1 2,0 2,1 2,0 2,1 2,0 2,0 2,1 2,-2 2,1 2,-1 2,2 2,-1 2,0 2,0 2,-4 2,-1 2,4 2,0 2,-5 2,4 2,0 2,1 2,0 2,-2 2,2 2,2 2,-1 2,-1 2,2 2,-1 2,0 2,-1 2,0 2,0 2,0 2,0 2,-1 2,1 2,-3 2,2 2,1 2,-3 2,4 2,-1 2,1 2,1 2,0 2,-3 2,3 2,-1 2,0 2,-1 2,0 2,-1 2,-1 2,-1 2,0 2,1 2,1 2,1 2,0 2,1 2,1 2,-2 2,2 2,-2 2,0 2,1 2,-2 2,1 2,0 2,0 2,0 2,0 2,-1 2,-1 2,-3 2,3 2,1 2,1 2,1 2,1 2,-1 2,0 2,0 2,-1 2,-1 2,1 2,1 2,-1 2,0 2,-1 2,1 2,-1 2,1 0,10 -2,1 -2,0 -2,0 -2,0 -2,1 -2,-3 -2,0 -2,2 -2,-3 -2,1 -2,-1 -2,0 -2,1 -2,0 -2,0 -2,2 -2,0 -2,0 -2,4 -2,-4 -2,0 -2,0 -2,0 -2,-2 -2,0 -2,0 -2,-1 -2,3 -2,-3 -2,0 -2,1 -2,0 -2,1 -2,2 -2,-2 -2,0 -2,2 -2,-2 -2,2 -2,2 -2,-1 -2,-2 -2,-1 -2,-1 -2,1 -2,1 -2,-1 -2,-1 -2,-1 -2,1 -2,0 -2,1 -2,2 -2,-2 -2,0 -2,2 -2,-1 -2,4 -2,-5 -2,2 -2,-2 -2,1 -2,-2 -2,0 -2,0 -2,0 -2,-1 -2,0 -2,0 -2,3 -2,-2 -2,1 -2,2 -2,2 -2,-3 -2,3 -2,-2 -2,0 -2,2 -2,-4 -2,2 -2,-2 -2,-2 -2,0 -2,0 -2,1 -2,1 -2,-1 -2,3 -2,0 -2,-3 -2,4 -2,2 -2,-4 -2,2 -2,-2 -2,0 -2,-1 -2,0 -2,0 -2,-2 -2,1 -2,-1 -2,1 -2,0 -2,0 -2,-1 -2,0 -2,0 -2,1 -2,-1 -2,3 -2,-2 -2,1 -2,-1 -2,1 -2,3 -2,-3 -2,0 -2,2 -2,0 -2,-2 -2,4 -2,-1 -2,-2 -2,-1 -2,-1 -2,0 -2,-1 -2,1 -2,0 -2,-1 -2,0 -2,0 -2,0 -2,0 -2,0 -2,1 -2,0 -2,0 -2,0 -2,1 -2,0 -2,0 -2,-1 -2,3 -2,-2 -2,1 -2,0 -2,-1 -2,3 -2,-2 -2,1 -2,-3 -2,1 -2,2 -2,-2 -2,-1 -2,0 -2,0 -2,-1 -2,0 -2,0 -2,0 -2,1 -2,1 -2,-1 -2,-1 -2,0 -2,0 -2,1 -2,0 -2,-1 -2,1 -2,0 -2,0 -2,0 -2,0 -2,0 -2,1 -2,0 -2,-1 -2,3 -2,-2 -2,1 -2,5 -2,-4 -2,2 -2,-3 -2,3 -2,-1 -2,0 -2,-1 -2,3 -2,0 -2,-4 -2,0 -2,1 -2,0 -2,0 -2,-1 -2,2 -2,-1 -2,-2 -2,1 -2,-1 -2,0 -2,-1 -2,2 -2,-2 -2,0 -2,0 -2,-1 -2,0 -2,0 -2,-1 -2,2 -2,-1 -2,0 -2,1 -2,-1 -2,0z" fill="#c2efd2" stroke="#111" stroke-width="1"/><path d="M1455 844L1630 810" stroke="#0f3a20" stroke-width="1.2"/><path d="M1459 861L1452 878" fill="none" stroke="#1a5a38" stroke-width="1"/><circle cx="1455" cy="844" r="3.5" fill="#1a5a38" stroke="#0a2a18"/><circle cx="1459" cy="860" r="3.5" fill="#1a5a38" stroke="#0a2a18"/><path d="M1452 741L1628 776" stroke="#0f3a20" stroke-width="1.2"/><path d="M1622 794 Q1632 802 1630 809" fill="none" stroke="#0f3a20" stroke-width="1"/><circle cx="1628" cy="776" r="3.5" fill="#1a5a38" stroke="#0a2a18"/><circle cx="1622" cy="794" r="3.5" fill="#1a5a38" stroke="#0a2a18"/><rect x="1186" y="881" width="444" height="68" fill="#2ecc6c"/><path d="M1452 881L1627 916Q1612 924 1620 936L1630 949H1452z" fill="#74dc9e"/><path d="M1186,915l2,0 2,-1 2,1 2,0 2,-1 2,0 2,0 2,0 2,0 2,0 2,1 2,0 2,0 2,0 2,0 2,0 2,-1 2,0 2,0 2,0 2,0 2,0 2,0 2,0 2,0 2,1 2,-1 2,0 2,1 2,0 2,0 2,-1 2,1 2,0 2,-1 2,0 2,0 2,0 2,0 2,0 2,1 2,0 2,0 2,0 2,0 2,-1 2,1 2,-1 2,0 2,0 2,0 2,0 2,0 2,0 2,1 2,0 2,0 2,0 2,0 2,-1 2,-1 2,1 2,0 2,0 2,0 2,0 2,0 2,0 2,1 2,0 2,0 2,0 2,0 2,0 2,0 2,0 2,-1 2,0 2,-1 2,1 2,0 2,0 2,0 2,1 2,0 2,0 2,0 2,-2 2,1 2,0 2,0 2,0 2,0 2,0 2,0 2,0 2,1 2,0 2,0 2,0 2,0 2,0 2,0 2,0 2,-1 2,-1 2,1 2,0 2,0 2,0 2,1 2,0 2,0 2,0 2,0 2,-1 2,0 2,-1 2,0 2,1 2,0 2,0 2,0 2,0 2,0 2,1 2,0 2,0 2,0 2,0 2,-1 2,1 2,-1 2,0 2,0 2,0 2,0 2,0 2,0 2,1 2,-1 2,1 2,0 2,0 2,0 2,-1 2,0 2,0 2,0 2,-1 2,1 2,0 2,1 2,0 2,0 2,0 2,0 2,0 2,-1 2,0 2,0 2,0 2,0 2,0 2,0 2,0 2,0 2,1 2,0 2,0 2,0 2,0 2,0 2,-1 2,0 2,0 2,0 2,0 2,0 2,1 2,-1 2,0 2,1 2,0 2,0 2,0 2,0 2,0 2,0 2,-1 2,0 2,0 2,0 2,0 2,0 2,0 2,0 2,1 2,0 2,0 2,-1 2,-1 2,1 2,0 2,0 2,0 2,0 2,-1 2,1 2,1 2,0 2,0 2,0 2,0 2,0 2,-1 2,0 2,-1 2,1 2,0 2,0 2,0 0,4 -2,0 -2,0 -2,0 -2,0 -2,0 -2,-1 -2,1 -2,-1 -2,0 -2,0 -2,0 -2,0 -2,2 -2,-1 -2,0 -2,0 -2,1 -2,-1 -2,0 -2,0 -2,-1 -2,0 -2,0 -2,0 -2,0 -2,1 -2,-1 -2,1 -2,0 -2,1 -2,-1 -2,0 -2,0 -2,0 -2,0 -2,-1 -2,0 -2,1 -2,-1 -2,1 -2,0 -2,0 -2,0 -2,0 -2,0 -2,0 -2,1 -2,-1 -2,-1 -2,0 -2,0 -2,0 -2,0 -2,0 -2,1 -2,0 -2,0 -2,0 -2,0 -2,0 -2,0 -2,-1 -2,0 -2,1 -2,-1 -2,0 -2,0 -2,0 -2,1 -2,0 -2,0 -2,0 -2,0 -2,0 -2,1 -2,-2 -2,1 -2,-1 -2,0 -2,0 -2,0 -2,0 -2,1 -2,0 -2,0 -2,0 -2,0 -2,0 -2,0 -2,0 -2,-1 -2,0 -2,0 -2,0 -2,0 -2,0 -2,1 -2,0 -2,0 -2,0 -2,1 -2,1 -2,-2 -2,0 -2,-1 -2,0 -2,0 -2,0 -2,0 -2,0 -2,1 -2,0 -2,0 -2,0 -2,0 -2,0 -2,0 -2,0 -2,-1 -2,0 -2,0 -2,0 -2,0 -2,0 -2,1 -2,0 -2,-1 -2,1 -2,0 -2,0 -2,0 -2,0 -2,0 -2,-1 -2,0 -2,1 -2,-1 -2,1 -2,-1 -2,1 -2,0 -2,0 -2,0 -2,0 -2,1 -2,-2 -2,0 -2,0 -2,0 -2,0 -2,0 -2,0 -2,0 -2,0 -2,1 -2,0 -2,0 -2,1 -2,-1 -2,1 -2,-1 -2,0 -2,0 -2,-1 -2,1 -2,-1 -2,0 -2,1 -2,0 -2,0 -2,0 -2,0 -2,1 -2,-1 -2,0 -2,-1 -2,0 -2,1 -2,-1 -2,0 -2,0 -2,1 -2,-1 -2,1 -2,0 -2,0 -2,0 -2,0 -2,0 -2,0 -2,1 -2,-2 -2,0 -2,0 -2,1 -2,-1 -2,1 -2,0 -2,0 -2,0 -2,0 -2,0 -2,0 -2,1 -2,-2 -2,0 -2,0 -2,0 -2,0 -2,0 -2,1 -2,2 -2,-2 -2,0 -2,0 -2,0 -2,0 -2,0 -2,-1 -2,0 -2,0 -2,0z" fill="#c2efd2" stroke="#111" stroke-width="1"/><path d="M1630,914l2,0 2,-1 2,1 2,0 2,0 2,0 2,0 2,0 2,-1 2,0 2,1 2,0 2,0 2,1 2,0 2,-1 2,0 2,0 2,0 2,-2 2,2 2,-1 2,1 2,1 2,-1 2,0 2,-1 2,0 2,0 2,0 2,0 2,1 2,1 2,-1 2,0 2,-1 2,0 2,0 2,1 2,0 2,0 2,1 2,0 2,-1 2,0 2,-1 2,1 2,-2 2,1 2,1 2,0 2,1 2,0 2,-1 2,-1 2,0 2,1 2,0 2,-3 2,2 2,1 2,-1 2,-2 2,1 2,-2 2,2 2,0 2,0 2,-1 2,-1 2,1 2,-1 2,1 2,1 2,-1 2,1 2,-2 2,3 2,0 2,0 2,0 2,1 2,-1 2,0 2,0 2,-1 2,-1 2,2 2,-1 2,0 2,0 2,-1 2,-2 2,1 2,-2 2,1 2,1 2,-1 2,2 2,1 2,-1 2,1 2,0 2,0 2,1 2,1 2,-2 2,1 2,1 2,0 2,-1 2,-1 2,0 2,1 2,-1 2,-3 2,2 2,1 2,-1 2,-1 2,1 2,-1 2,1 2,0 2,1 2,-1 2,1 2,-1 2,2 2,0 2,0 2,-1 2,0 0,7 -2,-1 -2,1 -2,0 -2,1 -2,0 -2,1 -2,-1 -2,1 -2,2 -2,-1 -2,0 -2,0 -2,-2 -2,3 -2,-2 -2,0 -2,-1 -2,0 -2,1 -2,-2 -2,0 -2,0 -2,1 -2,-2 -2,2 -2,-1 -2,0 -2,0 -2,0 -2,0 -2,1 -2,3 -2,-3 -2,1 -2,0 -2,0 -2,0 -2,-1 -2,1 -2,-1 -2,0 -2,1 -2,-1 -2,0 -2,-1 -2,0 -2,0 -2,-1 -2,2 -2,-1 -2,1 -2,-1 -2,1 -2,-1 -2,0 -2,1 -2,3 -2,-1 -2,-1 -2,1 -2,2 -2,-2 -2,-2 -2,4 -2,-4 -2,0 -2,0 -2,1 -2,-2 -2,0 -2,0 -2,0 -2,-1 -2,0 -2,1 -2,0 -2,-1 -2,2 -2,-2 -2,0 -2,0 -2,0 -2,0 -2,1 -2,0 -2,0 -2,-1 -2,0 -2,0 -2,-1 -2,1 -2,0 -2,0 -2,1 -2,0 -2,0 -2,1 -2,-2 -2,0 -2,-1 -2,1 -2,0 -2,1 -2,0 -2,-1 -2,0 -2,0 -2,0 -2,0 -2,0 -2,0 -2,0 -2,1 -2,0 -2,0 -2,-1 -2,1 -2,-1 -2,-1 -2,1 -2,0 -2,1 -2,1 -2,-1 -2,-1 -2,1 -2,-2 -2,0 -2,1 -2,0 -2,1 -2,0 -2,-1z" fill="#808080" stroke="#222" stroke-width="1"/><path d="M1186,981l2,1 2,-1 2,-2 2,1 2,-1 2,0 2,0 2,1 2,-1 2,1 2,0 2,0 2,1 2,0 2,-1 2,-3 2,3 2,0 2,0 2,1 2,0 2,-1 2,1 2,-2 2,-1 2,3 2,-2 2,1 2,1 2,-1 2,0 2,0 2,2 2,-1 2,0 2,-2 2,1 2,1 2,0 2,-2 2,2 2,-2 2,1 2,2 2,0 2,-1 2,0 2,-3 2,2 2,0 2,0 2,-2 2,0 2,3 2,0 2,0 2,1 2,0 2,-2 2,2 2,-1 2,-1 2,2 2,0 2,-1 2,1 2,1 2,-2 2,1 2,0 2,-2 2,1 2,0 2,1 2,0 2,-1 2,2 2,-1 2,0 2,0 2,0 2,-1 2,1 2,-1 2,1 2,0 2,0 2,1 2,-1 2,-1 2,1 2,-1 2,0 2,-1 2,1 2,1 2,-2 2,2 2,1 2,0 2,-1 2,0 2,-1 2,0 2,0 2,0 2,0 2,1 2,0 2,0 2,0 2,0 2,-1 2,0 2,0 2,0 2,1 2,0 2,0 2,0 2,-1 2,2 2,-1 2,0 2,0 2,-1 2,1 2,0 2,0 2,0 2,0 2,1 2,-1 0,4 -2,-1 -2,1 -2,0 -2,0 -2,1 -2,0 -2,-1 -2,1 -2,-1 -2,0 -2,-1 -2,1 -2,0 -2,1 -2,-1 -2,2 -2,-1 -2,0 -2,0 -2,-1 -2,0 -2,-1 -2,0 -2,1 -2,0 -2,2 -2,-1 -2,0 -2,0 -2,0 -2,-1 -2,0 -2,-1 -2,0 -2,2 -2,-1 -2,1 -2,1 -2,-2 -2,1 -2,0 -2,-1 -2,0 -2,-1 -2,1 -2,0 -2,1 -2,-1 -2,1 -2,0 -2,1 -2,-1 -2,0 -2,-1 -2,0 -2,0 -2,0 -2,1 -2,-1 -2,0 -2,0 -2,0 -2,0 -2,0 -2,0 -2,-1 -2,1 -2,0 -2,0 -2,1 -2,1 -2,-1 -2,0 -2,0 -2,-1 -2,1 -2,0 -2,0 -2,1 -2,0 -2,0 -2,0 -2,0 -2,0 -2,-1 -2,1 -2,-1 -2,-1 -2,1 -2,0 -2,1 -2,0 -2,0 -2,2 -2,-3 -2,0 -2,2 -2,-3 -2,1 -2,0 -2,0 -2,1 -2,-1 -2,1 -2,0 -2,0 -2,-1 -2,0 -2,2 -2,-3 -2,1 -2,0 -2,1 -2,0 -2,-1 -2,0 -2,3 -2,-2 -2,0 -2,-1 -2,0 -2,0 -2,1 -2,0 -2,-1 -2,1 -2,0 -2,0 -2,0 -2,-1 -2,0 -2,-1 -2,3z" fill="#808080" stroke="#222" stroke-width="1"/><rect x="1452" y="950" width="445" height="68" fill="#2ecc6c"/><path d="M1455 984L1630 950V1018H1457Q1466 996 1500 980z" fill="#74dc9e"/><path d="M1452,981l2,0 2,0 2,0 2,1 2,-1 2,0 2,0 2,0 2,0 2,-1 2,-1 2,1 2,-2 2,1 2,1 2,-1 2,1 2,0 2,-1 2,0 2,-2 2,0 2,0 2,0 2,1 2,-1 2,0 2,1 2,-1 2,-1 2,1 2,0 2,0 2,2 2,-5 2,4 2,0 2,1 2,1 2,0 2,-2 2,2 2,-1 2,1 2,0 2,0 2,0 2,-1 2,2 2,0 2,0 2,0 2,1 2,-2 2,0 2,1 2,-2 2,2 2,0 2,0 2,-1 2,1 2,0 2,-1 2,-3 2,3 2,0 2,-1 2,-1 2,-2 2,2 2,0 2,0 2,0 2,2 2,-1 2,-2 2,2 2,0 2,1 2,-1 2,1 2,1 2,0 2,-2 2,1 2,1 2,-2 2,0 2,1 2,-1 2,2 2,-1 2,-1 2,1 2,0 2,-1 2,-1 2,1 2,-1 2,0 2,1 2,-1 2,0 2,1 2,-2 2,2 2,0 2,1 2,0 2,0 2,1 2,-1 2,1 2,-2 2,2 2,-1 2,-1 2,1 2,0 2,0 2,-1 2,1 2,-4 2,2 2,1 2,-3 2,1 2,1 2,1 2,0 2,-1 2,2 2,-1 2,2 2,-3 2,3 2,-1 2,0 2,0 2,-1 2,-2 2,3 2,-4 2,3 2,-1 2,-3 2,3 2,0 2,2 2,-1 2,1 2,0 2,1 2,0 2,0 2,0 2,-1 2,0 2,0 2,-3 2,2 2,-1 2,-2 2,3 2,-1 2,1 2,-1 2,-1 2,2 2,1 2,0 2,0 2,0 2,0 2,-2 2,0 2,2 2,0 2,-2 2,0 2,1 2,-2 2,2 2,-2 2,1 2,1 2,1 2,-1 2,0 2,-1 2,3 2,-3 2,3 2,-1 2,0 2,-1 2,-1 2,-1 2,2 2,-1 2,1 2,0 2,-1 2,1 2,1 2,-4 2,4 2,0 2,1 2,0 2,0 2,0 2,-2 2,0 2,0 2,-3 2,2 2,1 2,-3 2,1 2,0 0,12 -2,0 -2,1 -2,0 -2,-2 -2,0 -2,2 -2,-2 -2,0 -2,0 -2,0 -2,0 -2,0 -2,-1 -2,1 -2,1 -2,1 -2,-1 -2,4 -2,0 -2,-2 -2,-1 -2,1 -2,0 -2,-3 -2,2 -2,-1 -2,1 -2,-2 -2,0 -2,-1 -2,1 -2,1 -2,-1 -2,1 -2,1 -2,0 -2,0 -2,0 -2,-1 -2,0 -2,1 -2,0 -2,0 -2,-1 -2,-1 -2,0 -2,-1 -2,1 -2,1 -2,0 -2,-1 -2,1 -2,3 -2,-3 -2,4 -2,-4 -2,2 -2,-2 -2,0 -2,1 -2,-1 -2,-1 -2,0 -2,0 -2,-1 -2,0 -2,1 -2,0 -2,0 -2,1 -2,0 -2,3 -2,0 -2,1 -2,-2 -2,0 -2,-1 -2,1 -2,-1 -2,0 -2,-1 -2,-1 -2,0 -2,2 -2,-2 -2,0 -2,0 -2,0 -2,0 -2,1 -2,0 -2,1 -2,-1 -2,1 -2,0 -2,0 -2,0 -2,-1 -2,0 -2,-1 -2,-1 -2,0 -2,1 -2,-1 -2,1 -2,-1 -2,0 -2,1 -2,1 -2,-2 -2,1 -2,-1 -2,1 -2,0 -2,1 -2,2 -2,-3 -2,2 -2,-1 -2,1 -2,2 -2,-3 -2,1 -2,0 -2,0 -2,-1 -2,0 -2,-1 -2,-1 -2,3 -2,-2 -2,1 -2,-1 -2,-1 -2,1 -2,-1 -2,0 -2,0 -2,0 -2,1 -2,0 -2,2 -2,-2 -2,1 -2,3 -2,-2 -2,0 -2,0 -2,0 -2,0 -2,0 -2,-1 -2,0 -2,0 -2,0 -2,-1 -2,0 -2,0 -2,-1 -2,0 -2,0 -2,1 -2,0 -2,-1 -2,0 -2,0 -2,2 -2,0 -2,-1 -2,0 -2,-1 -2,0 -2,0 -2,1 -2,0 -2,1 -2,-1 -2,0 -2,2 -2,-1 -2,0 -2,0 -2,1 -2,4 -2,-4 -2,0 -2,3 -2,-2 -2,-1 -2,0 -2,6 -2,-5 -2,0 -2,-1 -2,0 -2,0 -2,1 -2,2 -2,-2 -2,-2 -2,2 -2,-2 -2,0 -2,-1 -2,1 -2,-1 -2,2 -2,0 -2,0 -2,-2 -2,0 -2,-1 -2,1 -2,-1 -2,0 -2,2 -2,-2 -2,1 -2,-1 -2,0 -2,1 -2,-2z" fill="#c2efd2" stroke="#111" stroke-width="1"/><path d="M1455 984L1630 950" stroke="#0f3a20" stroke-width="1.2"/><path d="M1459 1001L1452 1018" fill="none" stroke="#1a5a38" stroke-width="1"/><circle cx="1455" cy="984" r="3.5" fill="#1a5a38" stroke="#0a2a18"/><circle cx="1459" cy="1000" r="3.5" fill="#1a5a38" stroke="#0a2a18"/><path d="M1452 881L1628 916" stroke="#0f3a20" stroke-width="1.2"/><path d="M1622 934 Q1632 942 1630 949" fill="none" stroke="#0f3a20" stroke-width="1"/><circle cx="1628" cy="916" r="3.5" fill="#1a5a38" stroke="#0a2a18"/><circle cx="1622" cy="934" r="3.5" fill="#1a5a38" stroke="#0a2a18"/></svg><div style="left:1480px;top:180px;width:147px;height:16px;line-height:16px;text-align:right;font-size:11px;color:#111;white-space:nowrap;">0.0dB - Peak -7.9dB</div><div style="left:1455px;top:251.0px;height:14px;line-height:14px;font-size:11px;color:#111;font-weight:normal;font-family:'Liberation Sans', sans-serif;white-space:nowrap;">0.0dB - Peak -1.4dB</div><div style="left:1480px;top:320px;width:147px;height:16px;line-height:16px;text-align:right;font-size:11px;color:#111;white-space:nowrap;">0.0dB - Peak -8.1dB</div><div style="left:1455px;top:391.0px;height:14px;line-height:14px;font-size:11px;color:#111;font-weight:normal;font-family:'Liberation Sans', sans-serif;white-space:nowrap;">0.0dB - Peak -2.4dB</div><div style="left:1480px;top:460px;width:147px;height:16px;line-height:16px;text-align:right;font-size:11px;color:#111;white-space:nowrap;">0.0dB - Peak -22.7dB</div><div style="left:1455px;top:531.0px;height:14px;line-height:14px;font-size:11px;color:#111;font-weight:normal;font-family:'Liberation Sans', sans-serif;white-space:nowrap;">0.0dB - Peak -14.3dB</div><div style="left:1480px;top:600px;width:147px;height:16px;line-height:16px;text-align:right;font-size:11px;color:#111;white-space:nowrap;">0.0dB - Peak -22.9dB</div><div style="left:1455px;top:671.0px;height:14px;line-height:14px;font-size:11px;color:#111;font-weight:normal;font-family:'Liberation Sans', sans-serif;white-space:nowrap;">0.0dB - Peak -12.3dB</div><div style="left:1480px;top:740px;width:147px;height:16px;line-height:16px;text-align:right;font-size:11px;color:#111;white-space:nowrap;">0.0dB - Peak -24.6dB</div><div style="left:1455px;top:811.0px;height:14px;line-height:14px;font-size:11px;color:#111;font-weight:normal;font-family:'Liberation Sans', sans-serif;white-space:nowrap;">0.0dB - Peak -15.5dB</div><div style="left:1480px;top:880px;width:147px;height:16px;line-height:16px;text-align:right;font-size:11px;color:#111;white-space:nowrap;">0.0dB - Peak -24.3dB</div><div style="left:1455px;top:951.0px;height:14px;line-height:14px;font-size:11px;color:#111;font-weight:normal;font-family:'Liberation Sans', sans-serif;white-space:nowrap;">0.0dB - Peak -14.1dB</div><div style="left:1096px;top:1020px;width:801px;height:1px;background:#1c1c1c;"></div><svg style="position:absolute;left:1533px;top:153px;" width="17" height="880" viewBox="0 0 17 880"><path d="M1 1h15l-7.5 8z" fill="#f0f0f0"/><path d="M8.5 8v867" stroke="#f4f4f4" stroke-width="1.2"/></svg><div style="left:1099px;top:1032px;width:9px;height:9px;background:#555;border-radius:1px;"></div><div style="left:1498px;top:1032px;width:9px;height:9px;background:#555;border-radius:1px;"></div><div style="left:1885px;top:1032px;width:9px;height:9px;background:#555;border-radius:1px;"></div><div style="left:1100px;top:1053px;width:807px;height:5px;background:#2a2a2a;"></div><div style="left:1102px;top:1057.5px;width:65px;height:15px;line-height:15px;font-size:12px;color:#c8c8c8;font-weight:normal;font-family:'Liberation Sans', sans-serif;white-space:nowrap;text-align:center;overflow:hidden;">Overview</div><div style="left:1169px;top:1057.5px;width:65px;height:15px;line-height:15px;font-size:12px;color:#c8c8c8;font-weight:normal;font-family:'Liberation Sans', sans-serif;white-space:nowrap;text-align:center;overflow:hidden;">Markers</div><div style="left:1236px;top:1057.5px;width:65px;height:15px;line-height:15px;font-size:12px;color:#c8c8c8;font-weight:normal;font-family:'Liberation Sans', sans-serif;white-space:nowrap;text-align:center;overflow:hidden;">Selection</div><div style="left:1303px;top:1057.5px;width:65px;height:15px;line-height:15px;font-size:12px;color:#e0e0e0;font-weight:normal;font-family:'Liberation Sans', sans-serif;white-space:nowrap;text-align:center;overflow:hidden;">Fade Edi...</div><div style="left:1370px;top:1057.5px;width:64px;height:15px;line-height:15px;font-size:12px;color:#c8c8c8;font-weight:normal;font-family:'Liberation Sans', sans-serif;white-space:nowrap;text-align:center;overflow:hidden;">Media</div><div style="left:1436px;top:1057.5px;width:65px;height:15px;line-height:15px;font-size:12px;color:#c8c8c8;font-weight:normal;font-family:'Liberation Sans', sans-serif;white-space:nowrap;text-align:center;overflow:hidden;">Project L...</div><div style="left:1503px;top:1057.5px;width:66px;height:15px;line-height:15px;font-size:12px;color:#c8c8c8;font-weight:normal;font-family:'Liberation Sans', sans-serif;white-space:nowrap;text-align:center;overflow:hidden;">Global Li...</div><div style="left:1571px;top:1057.5px;width:65px;height:15px;line-height:15px;font-size:12px;color:#c8c8c8;font-weight:normal;font-family:'Liberation Sans', sans-serif;white-space:nowrap;text-align:center;overflow:hidden;">Tracks</div><div style="left:1638px;top:1057.5px;width:65px;height:15px;line-height:15px;font-size:12px;color:#c8c8c8;font-weight:normal;font-family:'Liberation Sans', sans-serif;white-space:nowrap;text-align:center;overflow:hidden;">Track Gr...</div><div style="left:1705px;top:1057.5px;width:65px;height:15px;line-height:15px;font-size:12px;color:#c8c8c8;font-weight:normal;font-family:'Liberation Sans', sans-serif;white-space:nowrap;text-align:center;overflow:hidden;">Workspa...</div><div style="left:1772px;top:1057.5px;width:66px;height:15px;line-height:15px;font-size:12px;color:#c8c8c8;font-weight:normal;font-family:'Liberation Sans', sans-serif;white-space:nowrap;text-align:center;overflow:hidden;">Mastering</div><div style="left:1840px;top:1057.5px;width:65px;height:15px;line-height:15px;font-size:12px;color:#c8c8c8;font-weight:normal;font-family:'Liberation Sans', sans-serif;white-space:nowrap;text-align:center;overflow:hidden;">Notes</div><div style="left:1166px;top:1053px;width:3px;height:25px;background:#262626;"></div><div style="left:1233px;top:1053px;width:3px;height:25px;background:#262626;"></div><div style="left:1300px;top:1053px;width:3px;height:25px;background:#262626;"></div><div style="left:1367px;top:1053px;width:3px;height:25px;background:#262626;"></div><div style="left:1433px;top:1053px;width:3px;height:25px;background:#262626;"></div><div style="left:1500px;top:1053px;width:3px;height:25px;background:#262626;"></div><div style="left:1568px;top:1053px;width:3px;height:25px;background:#262626;"></div><div style="left:1635px;top:1053px;width:3px;height:25px;background:#262626;"></div><div style="left:1702px;top:1053px;width:3px;height:25px;background:#262626;"></div><div style="left:1769px;top:1053px;width:3px;height:25px;background:#262626;"></div><div style="left:1837px;top:1053px;width:3px;height:25px;background:#262626;"></div><div style="left:1904px;top:1053px;width:3px;height:25px;background:#262626;"></div><div style="left:1302px;top:1076px;width:64px;height:2px;background:#d8d8d8;"></div><div style="left:19px;top:1091px;width:224px;height:30px;background:#121212;border-radius:5px;"></div><div style="left:25px;top:1092.5px;height:26px;line-height:26px;font-size:20.5px;color:#f4f4f4;font-weight:bold;font-family:'Liberation Serif', serif;white-space:nowrap;">01:38:58:11</div><div style="left:175px;top:1098.0px;height:14px;line-height:14px;font-size:11px;color:#7ee07e;font-weight:bold;font-family:'Liberation Sans', sans-serif;white-space:nowrap;">PLAY</div><div style="left:254px;top:1091px;width:29px;height:29px;background:#2a2a2a;border-radius:2px;border:1px solid #111;box-sizing:border-box;box-shadow:inset 1px 1px 0 #3c3c3c;"></div><div style="left:286px;top:1091px;width:29px;height:29px;background:#2a2a2a;border-radius:2px;border:1px solid #111;box-sizing:border-box;box-shadow:inset 1px 1px 0 #3c3c3c;"></div><div style="left:318px;top:1091px;width:29px;height:29px;background:#2a2a2a;border-radius:2px;border:1px solid #111;box-sizing:border-box;box-shadow:inset 1px 1px 0 #3c3c3c;"></div><div style="left:350px;top:1091px;width:29px;height:29px;background:#2a2a2a;border-radius:2px;border:1px solid #111;box-sizing:border-box;box-shadow:inset 1px 1px 0 #3c3c3c;"></div><div style="left:382px;top:1091px;width:29px;height:29px;background:#2a2a2a;border-radius:2px;border:1px solid #111;box-sizing:border-box;box-shadow:inset 1px 1px 0 #3c3c3c;"></div><div style="left:417px;top:1091px;width:29px;height:29px;background:#2a2a2a;border-radius:2px;border:1px solid #111;box-sizing:border-box;box-shadow:inset 1px 1px 0 #3c3c3c;"></div><div style="left:453px;top:1091px;width:29px;height:29px;background:#2a2a2a;border-radius:2px;border:1px solid #111;box-sizing:border-box;box-shadow:inset 1px 1px 0 #3c3c3c;"></div><div style="left:619px;top:1091px;width:29px;height:29px;background:#2a2a2a;border-radius:2px;border:1px solid #111;box-sizing:border-box;box-shadow:inset 1px 1px 0 #3c3c3c;"></div><div style="left:653px;top:1091px;width:29px;height:29px;background:#2a2a2a;border-radius:2px;border:1px solid #111;box-sizing:border-box;box-shadow:inset 1px 1px 0 #3c3c3c;"></div><svg style="position:absolute;left:0px;top:0px;" width="1920" height="1152" viewBox="0 0 1920 1152"><path d="M258 1105l9-8v16z M267 1105l9-8v16z" fill="#bdbdbd"/><path d="M290 1097h3v16h-3z M296 1097l10 8-10 8z M308 1097h3v16h-3z" fill="#bdbdbd"/><path d="M326 1097l14 8.5-14 8.5z" fill="#5fe05f"/><circle cx="364.5" cy="1106" r="8" fill="#f07272"/><path d="M387 1097l9 8-9 8z M396 1097l9 8-9 8z" fill="#bdbdbd"/><rect x="424" y="1098" width="15" height="14" fill="#c0c0c0"/><path d="M461 1101a7.5 7.5 0 0 1 13 -0.5 M475 1109a7.5 7.5 0 0 1 -13 0.5" fill="none" stroke="#bdbdbd" stroke-width="2.2"/><path d="M474 1096v6h-6z M461 1114v-6h6z" fill="#bdbdbd"/><path d="M497 1106h108" stroke="#0a0a0a" stroke-width="3" stroke-linecap="round"/><path d="M500.5 1099v5 M500.5 1109v5" stroke="#6a6a6a" stroke-width="1"/><path d="M510.5 1099v2 M510.5 1109v2" stroke="#6a6a6a" stroke-width="1"/><path d="M520.5 1099v2 M520.5 1109v2" stroke="#6a6a6a" stroke-width="1"/><path d="M530.5 1099v2 M530.5 1109v2" stroke="#6a6a6a" stroke-width="1"/><path d="M540.5 1099v2 M540.5 1109v2" stroke="#6a6a6a" stroke-width="1"/><path d="M550.5 1099v2 M550.5 1109v2" stroke="#6a6a6a" stroke-width="1"/><path d="M560.5 1099v2 M560.5 1109v2" stroke="#6a6a6a" stroke-width="1"/><path d="M570.5 1099v2 M570.5 1109v2" stroke="#6a6a6a" stroke-width="1"/><path d="M580.5 1099v2 M580.5 1109v2" stroke="#6a6a6a" stroke-width="1"/><path d="M590.5 1099v2 M590.5 1109v2" stroke="#6a6a6a" stroke-width="1"/><path d="M600.5 1099v5 M600.5 1109v5" stroke="#6a6a6a" stroke-width="1"/><rect x="542" y="1097" width="7" height="17" rx="2" fill="#5a5a5a"/><rect x="551" y="1097" width="7" height="17" rx="2" fill="#5a5a5a"/><path d="M550.5 1094v24" stroke="#777" stroke-width="1"/><path d="M624 1097l10 8-10 8z M633 1097l10 8-10 8z M632 1097v16" fill="#bdbdbd" stroke="#bdbdbd" stroke-width="1"/><circle cx="667.5" cy="1106" r="9" fill="#bdbdbd"/><circle cx="665" cy="1102" r="2.5" fill="#2a2a2a"/></svg><div style="left:697px;top:1096px;width:99px;height:20px;background:#1c1c1c;border-radius:3px;box-shadow:0 1px 0 rgba(255,255,255,0.06);"></div><div style="left:697px;top:1098.5px;width:99px;height:15px;line-height:15px;font-size:12px;color:#d8d8d8;font-weight:normal;font-family:'Liberation Sans', sans-serif;white-space:nowrap;text-align:center;overflow:hidden;">Internal</div><div style="left:943px;top:1091px;width:29px;height:29px;background:#141414;border-radius:2px;border:1px solid #0a0a0a;box-sizing:border-box;box-shadow:inset 1px 1px 0 #3c3c3c;"></div><div style="left:943px;top:1091.0px;width:29px;height:14px;line-height:14px;font-size:11px;color:#f0f0f0;font-weight:bold;font-family:'Liberation Sans', sans-serif;white-space:nowrap;text-align:center;overflow:hidden;">Off</div><svg style="position:absolute;left:949px;top:1104px;" width="17" height="12" viewBox="0 0 17 12"><path d="M1 1q7 6 15 0l-3 5 3 5q-8-5-15 0l3-5z" fill="#f0f0f0"/></svg><div style="left:975px;top:1091px;width:29px;height:29px;background:#2a2a2a;border-radius:2px;border:1px solid #0a0a0a;box-sizing:border-box;box-shadow:inset 1px 1px 0 #3c3c3c;"></div><div style="left:975px;top:1091.0px;width:29px;height:14px;line-height:14px;font-size:11px;color:#aaaaaa;font-weight:normal;font-family:'Liberation Sans', sans-serif;white-space:nowrap;text-align:center;overflow:hidden;">Play</div><svg style="position:absolute;left:981px;top:1104px;" width="17" height="12" viewBox="0 0 17 12"><path d="M1 1q7 6 15 0l-3 5 3 5q-8-5-15 0l3-5z" fill="#aaaaaa"/></svg><div style="left:1007px;top:1091px;width:29px;height:29px;background:#2a2a2a;border-radius:2px;border:1px solid #0a0a0a;box-sizing:border-box;box-shadow:inset 1px 1px 0 #3c3c3c;"></div><div style="left:1007px;top:1091.0px;width:29px;height:14px;line-height:14px;font-size:11px;color:#aaaaaa;font-weight:normal;font-family:'Liberation Sans', sans-serif;white-space:nowrap;text-align:center;overflow:hidden;">Wrt</div><svg style="position:absolute;left:1013px;top:1104px;" width="17" height="12" viewBox="0 0 17 12"><path d="M1 1q7 6 15 0l-3 5 3 5q-8-5-15 0l3-5z" fill="#aaaaaa"/></svg><div style="left:1039px;top:1091px;width:29px;height:29px;background:#2a2a2a;border-radius:2px;border:1px solid #0a0a0a;box-sizing:border-box;box-shadow:inset 1px 1px 0 #3c3c3c;"></div><div style="left:1039px;top:1091.0px;width:29px;height:14px;line-height:14px;font-size:11px;color:#aaaaaa;font-weight:normal;font-family:'Liberation Sans', sans-serif;white-space:nowrap;text-align:center;overflow:hidden;">Prw</div><svg style="position:absolute;left:1046px;top:1103px;" width="16" height="13" viewBox="0 0 16 13"><rect x="1" y="4" width="11" height="8" rx="2" fill="none" stroke="#aaaaaa" stroke-width="1.5"/><circle cx="6.5" cy="8" r="2.3" fill="none" stroke="#aaaaaa" stroke-width="1.3"/><rect x="5" y="1" width="9" height="6" rx="1.5" fill="none" stroke="#aaaaaa" stroke-width="1.3"/></svg><div style="left:1071px;top:1091px;width:29px;height:29px;background:#2a2a2a;border-radius:2px;border:1px solid #0a0a0a;box-sizing:border-box;box-shadow:inset 1px 1px 0 #3c3c3c;"></div><svg style="position:absolute;left:1075px;top:1096px;" width="21" height="19" viewBox="0 0 21 19"><rect x="1" y="5" width="19" height="13" rx="2.5" fill="#aaa"/><rect x="6" y="2" width="8" height="4" rx="1" fill="#aaa"/><circle cx="10.5" cy="11.5" r="4.2" fill="#2a2a2a"/><circle cx="10.5" cy="11.5" r="2.8" fill="#aaa"/></svg><div style="left:1103px;top:1091px;width:29px;height:29px;background:#2a2a2a;border-radius:2px;border:1px solid #0a0a0a;box-sizing:border-box;box-shadow:inset 1px 1px 0 #3c3c3c;"></div><svg style="position:absolute;left:1107px;top:1095px;" width="21" height="20" viewBox="0 0 21 20"><rect x="1" y="8" width="14" height="11" rx="2" fill="#aaa"/><circle cx="8" cy="13.5" r="3.3" fill="#2a2a2a"/><circle cx="8" cy="13.5" r="2" fill="#aaa"/><rect x="8" y="2" width="12" height="9" rx="2" fill="#aaa" stroke="#2a2a2a" stroke-width="1"/><circle cx="14" cy="6.5" r="2.5" fill="#2a2a2a"/><circle cx="14" cy="6.5" r="1.4" fill="#aaa"/></svg><div style="left:1146px;top:1097px;width:138px;height:21px;background:#1c1c1c;border-radius:3px;"></div><div style="left:1151px;top:1099.5px;height:15px;line-height:15px;font-size:12px;color:#dcdcdc;font-weight:normal;font-family:'Liberation Sans', sans-serif;white-space:nowrap;">Fader Alignment: None</div><div style="left:760px;top:1125.5px;height:15px;line-height:15px;font-size:12px;color:#c8c8c8;font-weight:normal;font-family:'Liberation Sans', sans-serif;white-space:nowrap;">Free Disk : Invalid</div><div style="left:892px;top:1125.5px;height:15px;line-height:15px;font-size:12px;color:#c8c8c8;font-weight:normal;font-family:'Liberation Sans', sans-serif;white-space:nowrap;">Nudge 3: 1 Frm</div><div style="left:1010px;top:1125.5px;height:15px;line-height:15px;font-size:12px;color:#c8c8c8;font-weight:normal;font-family:'Liberation Sans', sans-serif;white-space:nowrap;">Play Level 3</div><div style="left:1002px;top:1139px;width:3px;height:2px;background:#e03030;"></div><div style="left:1005px;top:1139px;width:30px;height:2px;background:#d8c020;"></div><div style="left:1035px;top:1139px;width:34px;height:2px;background:#30c030;"></div><div style="left:1089px;top:1138px;width:3px;height:3px;background:#20d040;"></div><div style="left:1104px;top:1125.5px;height:15px;line-height:15px;font-size:12px;color:#c8c8c8;font-weight:normal;font-family:'Liberation Sans', sans-serif;white-space:nowrap;">CPU: 3%</div><div style="left:1283px;top:1125.5px;height:15px;line-height:15px;font-size:12px;color:#c8c8c8;font-weight:normal;font-family:'Liberation Sans', sans-serif;white-space:nowrap;">4352 Smpl/90.7 ms</div><div style="left:1440px;top:1125.5px;height:15px;line-height:15px;font-size:12px;color:#c8c8c8;font-weight:normal;font-family:'Liberation Sans', sans-serif;white-space:nowrap;">TC: 25 fps</div><div style="left:1701px;top:1125.5px;height:15px;line-height:15px;font-size:12px;color:#c8c8c8;font-weight:normal;font-family:'Liberation Sans', sans-serif;white-space:nowrap;">Audio: 48 kHz</div><div style="left:700px;top:8.5px;width:416px;height:15px;line-height:15px;font-size:12px;color:#c4c4c4;font-weight:normal;font-family:'Liberation Sans', sans-serif;white-space:nowrap;text-align:center;overflow:hidden;">MERGING+PYRAMIX - PLugin setttoings.pmx</div><svg style="position:absolute;left:17px;top:7px;" width="260" height="20" viewBox="0 0 260 20"><path d="M2.5 1.5h8l4 4v12h-12z M10.5 1.5v4h4" fill="none" stroke="#a8a8a8" stroke-width="1.2"/><path d="M27.5 1.5h8l4 4v12h-12z M35.5 1.5v4h4 M30 9h7 M30 12h7 M30 15h7" fill="none" stroke="#a8a8a8" stroke-width="1.2"/><path d="M52.5 6.5h5l1.5 2h9.5v8.5h-16z M63.5 1v9 M61 3.5l2.5-2.5 2.5 2.5" fill="none" stroke="#a8a8a8" stroke-width="1.2"/><path d="M77.5 1.5h14v16h-14z M80.5 1.5v5h8v-5 M80.5 17.5v-5h8v5" fill="none" stroke="#a8a8a8" stroke-width="1.2"/><path d="M103.5 1.5h9v8h-9z M106 1.5v3h5v-3 M106 9.5v-3h4v3 M113 10v8 M109 14h8" fill="none" stroke="#a8a8a8" stroke-width="1.2"/><circle cx="162" cy="8" r="6.5" fill="none" stroke="#a8a8a8" stroke-width="1.2"/><path d="M166.5 12.5l5 5" stroke="#a8a8a8" stroke-width="1.3"/><circle cx="188" cy="8" r="6.5" fill="none" stroke="#a8a8a8" stroke-width="1.2"/><path d="M192.5 12.5l5 5" stroke="#a8a8a8" stroke-width="1.3"/><path d="M184 8h7 M184 8l3-3 M184 8l3 3" stroke="#a8a8a8" stroke-width="1" fill="none"/><circle cx="214" cy="8" r="6.5" fill="none" stroke="#a8a8a8" stroke-width="1.2"/><path d="M218.5 12.5l5 5" stroke="#a8a8a8" stroke-width="1.3"/><path d="M210 8h8 M214 4v8" stroke="#a8a8a8" stroke-width="1.2"/><circle cx="240" cy="8" r="6.5" fill="none" stroke="#a8a8a8" stroke-width="1.2"/><path d="M244.5 12.5l5 5" stroke="#a8a8a8" stroke-width="1.3"/><path d="M236 8h8" stroke="#a8a8a8" stroke-width="1.2"/></svg><svg style="position:absolute;left:1560px;top:4px;" width="215" height="26" viewBox="0 0 215 26"><path d="M12.5 2.5l10 7.5-10 7.5z" fill="none" stroke="#a8a8a8" stroke-width="1.2"/><rect x="33" y="1" width="23" height="23" rx="2" fill="#8c7a5c"/><rect x="35" y="3" width="19" height="19" fill="#3a3a3a"/><path d="M39 5v15" stroke="#cfcfcf" stroke-width="1.2"/><path d="M43 5v15" stroke="#cfcfcf" stroke-width="1.2"/><path d="M47 5v15" stroke="#cfcfcf" stroke-width="1.2"/><path d="M51 5v15" stroke="#cfcfcf" stroke-width="1.2"/><circle cx="39" cy="11" r="1.6" fill="#cfcfcf"/><circle cx="43" cy="15" r="1.6" fill="#cfcfcf"/><circle cx="47" cy="9" r="1.6" fill="#cfcfcf"/><circle cx="51" cy="16" r="1.6" fill="#cfcfcf"/><path d="M64 17v-5a8 8 0 0 1 16 0v5 M63.5 13h3v7h-3z M77.5 13h3v7h-3z" fill="none" stroke="#a8a8a8" stroke-width="1.2"/><rect x="89.5" y="4.5" width="6" height="6" rx="2" fill="none" stroke="#a8a8a8" stroke-width="1.2"/><rect x="98.5" y="4.5" width="7" height="5" rx="1.5" fill="none" stroke="#a8a8a8" stroke-width="1.2"/><rect x="89.5" y="13.5" width="7" height="5" rx="1.5" fill="none" stroke="#a8a8a8" stroke-width="1.2"/><rect x="98.5" y="13.5" width="7" height="5" rx="1.5" fill="none" stroke="#a8a8a8" stroke-width="1.2"/><circle cx="123" cy="12" r="6.5" fill="none" stroke="#a8a8a8" stroke-width="1.2"/><circle cx="123" cy="10" r="1.3" fill="#a8a8a8"/><circle cx="120" cy="14" r="1.3" fill="#a8a8a8"/><circle cx="126" cy="14" r="1.3" fill="#a8a8a8"/><path d="M141.5 6.5v12h16v-10h-8l-2-3h-6z" fill="none" stroke="#a8a8a8" stroke-width="1.2"/><circle cx="152" cy="14" r="2.5" fill="none" stroke="#a8a8a8" stroke-width="1"/><path d="M169.5 7.5h8v4h-8z" fill="none" stroke="#a8a8a8" stroke-width="1.2"/><circle cx="175" cy="14" r="4.5" fill="none" stroke="#a8a8a8" stroke-width="1.2"/><path d="M178 17l4 4" stroke="#a8a8a8" stroke-width="1.2"/><circle cx="201" cy="12" r="8" fill="none" stroke="#a8a8a8" stroke-width="1.2"/><path d="M197 16l4-9 4 9 M198.5 13h5" fill="none" stroke="#a8a8a8" stroke-width="1.3"/></svg><svg style="position:absolute;left:1800px;top:4px;" width="26" height="26" viewBox="0 0 26 26"><polygon points="21.00,13.00 18.54,15.30 18.66,18.66 15.30,18.54 13.00,21.00 10.70,18.54 7.34,18.66 7.46,15.30 5.00,13.00 7.46,10.70 7.34,7.34 10.70,7.46 13.00,5.00 15.30,7.46 18.66,7.34 18.54,10.70" fill="none" stroke="#a8a8a8" stroke-width="1.2"/><circle cx="13" cy="13" r="2.5" fill="none" stroke="#a8a8a8" stroke-width="1.2"/></svg><svg style="position:absolute;left:1845px;top:3px;" width="66" height="26" viewBox="0 0 66 26"><path d="M3 13h11" stroke="#a8a8a8" stroke-width="1.2"/><path d="M21.5 8.5h9v9h-9z" fill="none" stroke="#a8a8a8" stroke-width="1.2"/><path d="M45 8l9 9 M54 8l-9 9" stroke="#a8a8a8" stroke-width="1.2"/></svg><div style="left:18px;top:36.5px;height:15px;line-height:15px;font-size:12px;color:#b4b4b4;font-weight:normal;font-family:'Liberation Sans', sans-serif;white-space:nowrap;">Project</div><div style="left:70px;top:36.5px;height:15px;line-height:15px;font-size:12px;color:#b4b4b4;font-weight:normal;font-family:'Liberation Sans', sans-serif;white-space:nowrap;">Edit</div><div style="left:107px;top:36.5px;height:15px;line-height:15px;font-size:12px;color:#b4b4b4;font-weight:normal;font-family:'Liberation Sans', sans-serif;white-space:nowrap;">View</div><div style="left:148px;top:36.5px;height:15px;line-height:15px;font-size:12px;color:#b4b4b4;font-weight:normal;font-family:'Liberation Sans', sans-serif;white-space:nowrap;">Clips</div><div style="left:190px;top:36.5px;height:15px;line-height:15px;font-size:12px;color:#b4b4b4;font-weight:normal;font-family:'Liberation Sans', sans-serif;white-space:nowrap;">Tracks</div><div style="left:240px;top:36.5px;height:15px;line-height:15px;font-size:12px;color:#b4b4b4;font-weight:normal;font-family:'Liberation Sans', sans-serif;white-space:nowrap;">Cursor and Marks</div><div style="left:349px;top:36.5px;height:15px;line-height:15px;font-size:12px;color:#b4b4b4;font-weight:normal;font-family:'Liberation Sans', sans-serif;white-space:nowrap;">Markers</div><div style="left:407px;top:36.5px;height:15px;line-height:15px;font-size:12px;color:#b4b4b4;font-weight:normal;font-family:'Liberation Sans', sans-serif;white-space:nowrap;">Selection</div><div style="left:471px;top:36.5px;height:15px;line-height:15px;font-size:12px;color:#b4b4b4;font-weight:normal;font-family:'Liberation Sans', sans-serif;white-space:nowrap;">Fade Editor</div><div style="left:546px;top:36.5px;height:15px;line-height:15px;font-size:12px;color:#b4b4b4;font-weight:normal;font-family:'Liberation Sans', sans-serif;white-space:nowrap;">Media</div><div style="left:595px;top:36.5px;height:15px;line-height:15px;font-size:12px;color:#b4b4b4;font-weight:normal;font-family:'Liberation Sans', sans-serif;white-space:nowrap;">Automation</div><div style="left:675px;top:36.5px;height:15px;line-height:15px;font-size:12px;color:#b4b4b4;font-weight:normal;font-family:'Liberation Sans', sans-serif;white-space:nowrap;">Video</div><div style="left:721px;top:36.5px;height:15px;line-height:15px;font-size:12px;color:#b4b4b4;font-weight:normal;font-family:'Liberation Sans', sans-serif;white-space:nowrap;">Workspaces</div><div style="left:800px;top:36.5px;height:15px;line-height:15px;font-size:12px;color:#b4b4b4;font-weight:normal;font-family:'Liberation Sans', sans-serif;white-space:nowrap;">Machines</div><div style="left:866px;top:36.5px;height:15px;line-height:15px;font-size:12px;color:#b4b4b4;font-weight:normal;font-family:'Liberation Sans', sans-serif;white-space:nowrap;">Monitor</div><div style="left:926px;top:36.5px;height:15px;line-height:15px;font-size:12px;color:#b4b4b4;font-weight:normal;font-family:'Liberation Sans', sans-serif;white-space:nowrap;">Macros</div><div style="left:981px;top:36.5px;height:15px;line-height:15px;font-size:12px;color:#b4b4b4;font-weight:normal;font-family:'Liberation Sans', sans-serif;white-space:nowrap;">Settings</div><div style="left:1039px;top:36.5px;height:15px;line-height:15px;font-size:12px;color:#b4b4b4;font-weight:normal;font-family:'Liberation Sans', sans-serif;white-space:nowrap;">Window</div><div style="left:1099px;top:36.5px;height:15px;line-height:15px;font-size:12px;color:#b4b4b4;font-weight:normal;font-family:'Liberation Sans', sans-serif;white-space:nowrap;">Help</div><div style="left:15px;top:67px;width:401px;height:21px;background:#1b1b1b;border-radius:4px;"></div><div style="left:22px;top:71.5px;height:13px;line-height:13px;font-size:10px;color:#d8d8d8;font-weight:normal;font-family:'Liberation Sans', sans-serif;white-space:nowrap;">CUR</div><div style="left:59px;top:70.0px;height:16px;line-height:16px;font-size:13px;color:#ececec;font-weight:bold;font-family:'Liberation Serif', serif;white-space:nowrap;">01:38:58:11</div><div style="left:169px;top:69.5px;height:16px;line-height:16px;font-size:13px;color:#e03a3a;font-weight:bold;font-family:'Liberation Sans', sans-serif;white-space:nowrap;">M</div><div style="left:190px;top:69.5px;height:16px;line-height:16px;font-size:13px;color:#6a6a6a;font-weight:bold;font-family:'Liberation Sans', sans-serif;white-space:nowrap;">S</div><div style="left:241px;top:71.5px;height:13px;line-height:13px;font-size:10px;color:#e4e4e4;font-weight:normal;font-family:'Liberation Sans', sans-serif;white-space:nowrap;">Overwrite / Remove</div><div style="left:361px;top:71.5px;height:13px;line-height:13px;font-size:10px;color:#e4e4e4;font-weight:normal;font-family:'Liberation Sans', sans-serif;white-space:nowrap;">Shared Mix</div><div style="left:424px;top:67px;width:814px;height:21px;background:#1b1b1b;border-radius:4px;"></div><div style="left:430px;top:71.5px;height:13px;line-height:13px;font-size:10px;color:#e03a3a;font-weight:normal;font-family:'Liberation Sans', sans-serif;white-space:nowrap;">M IN</div><div style="left:474px;top:71.5px;height:13px;line-height:13px;font-size:10px;color:#e4e4e4;font-weight:normal;font-family:'Liberation Sans', sans-serif;white-space:nowrap;">01:00:00:00</div><svg style="position:absolute;left:543px;top:72px;" width="7" height="12" viewBox="0 0 7 12"><path d="M1 5l2.5-3 2.5 3z M1 7l2.5 3 2.5-3z" fill="#cfcfcf"/></svg><div style="left:560px;top:71.5px;height:13px;line-height:13px;font-size:10px;color:#3fcf3f;font-weight:normal;font-family:'Liberation Sans', sans-serif;white-space:nowrap;">M OUT</div><div style="left:611px;top:71.5px;height:13px;line-height:13px;font-size:10px;color:#e4e4e4;font-weight:normal;font-family:'Liberation Sans', sans-serif;white-space:nowrap;">01:00:10:00</div><svg style="position:absolute;left:681px;top:72px;" width="7" height="12" viewBox="0 0 7 12"><path d="M1 5l2.5-3 2.5 3z M1 7l2.5 3 2.5-3z" fill="#cfcfcf"/></svg><div style="left:698px;top:71.5px;height:13px;line-height:13px;font-size:10px;color:#d8d8d8;font-weight:normal;font-family:'Liberation Sans', sans-serif;white-space:nowrap;">M DUR</div><div style="left:749px;top:71.5px;height:13px;line-height:13px;font-size:10px;color:#e4e4e4;font-weight:normal;font-family:'Liberation Sans', sans-serif;white-space:nowrap;">00:00:10:00</div><svg style="position:absolute;left:819px;top:72px;" width="7" height="12" viewBox="0 0 7 12"><path d="M1 5l2.5-3 2.5 3z M1 7l2.5 3 2.5-3z" fill="#cfcfcf"/></svg><div style="left:836px;top:71.5px;height:13px;line-height:13px;font-size:10px;color:#d8d8d8;font-weight:normal;font-family:'Liberation Sans', sans-serif;white-space:nowrap;">R IN</div><div style="left:878px;top:71.5px;height:13px;line-height:13px;font-size:10px;color:#e4e4e4;font-weight:normal;font-family:'Liberation Sans', sans-serif;white-space:nowrap;">01:39:16:22</div><svg style="position:absolute;left:947px;top:72px;" width="7" height="12" viewBox="0 0 7 12"><path d="M1 5l2.5-3 2.5 3z M1 7l2.5 3 2.5-3z" fill="#cfcfcf"/></svg><div style="left:962px;top:71.5px;height:13px;line-height:13px;font-size:10px;color:#d8d8d8;font-weight:normal;font-family:'Liberation Sans', sans-serif;white-space:nowrap;">R OUT</div><div style="left:1014px;top:71.5px;height:13px;line-height:13px;font-size:10px;color:#e4e4e4;font-weight:normal;font-family:'Liberation Sans', sans-serif;white-space:nowrap;">01:42:50:24</div><svg style="position:absolute;left:1083px;top:72px;" width="7" height="12" viewBox="0 0 7 12"><path d="M1 5l2.5-3 2.5 3z M1 7l2.5 3 2.5-3z" fill="#cfcfcf"/></svg><div style="left:1098px;top:71.5px;height:13px;line-height:13px;font-size:10px;color:#d8d8d8;font-weight:normal;font-family:'Liberation Sans', sans-serif;white-space:nowrap;">R DUR</div><div style="left:1149px;top:71.5px;height:13px;line-height:13px;font-size:10px;color:#e4e4e4;font-weight:normal;font-family:'Liberation Sans', sans-serif;white-space:nowrap;">00:03:34:01</div><svg style="position:absolute;left:1219px;top:72px;" width="7" height="12" viewBox="0 0 7 12"><path d="M1 5l2.5-3 2.5 3z M1 7l2.5 3 2.5-3z" fill="#cfcfcf"/></svg><div style="left:0px;top:0px;width:9px;height:9px;background:radial-gradient(circle at 9px 9px, #333333 8.5px, #5c5c5c 9.5px);"></div><div style="left:1911px;top:0px;width:9px;height:9px;background:radial-gradient(circle at 0px 9px, #333333 8.5px, #5c5c5c 9.5px);"></div><div style="left:0px;top:1143px;width:9px;height:9px;background:radial-gradient(circle at 9px 0px, #333333 8.5px, #5c5c5c 9.5px);"></div><div style="left:1911px;top:1143px;width:9px;height:9px;background:radial-gradient(circle at 0px 0px, #333333 8.5px, #5c5c5c 9.5px);"></div>
</body></html>
